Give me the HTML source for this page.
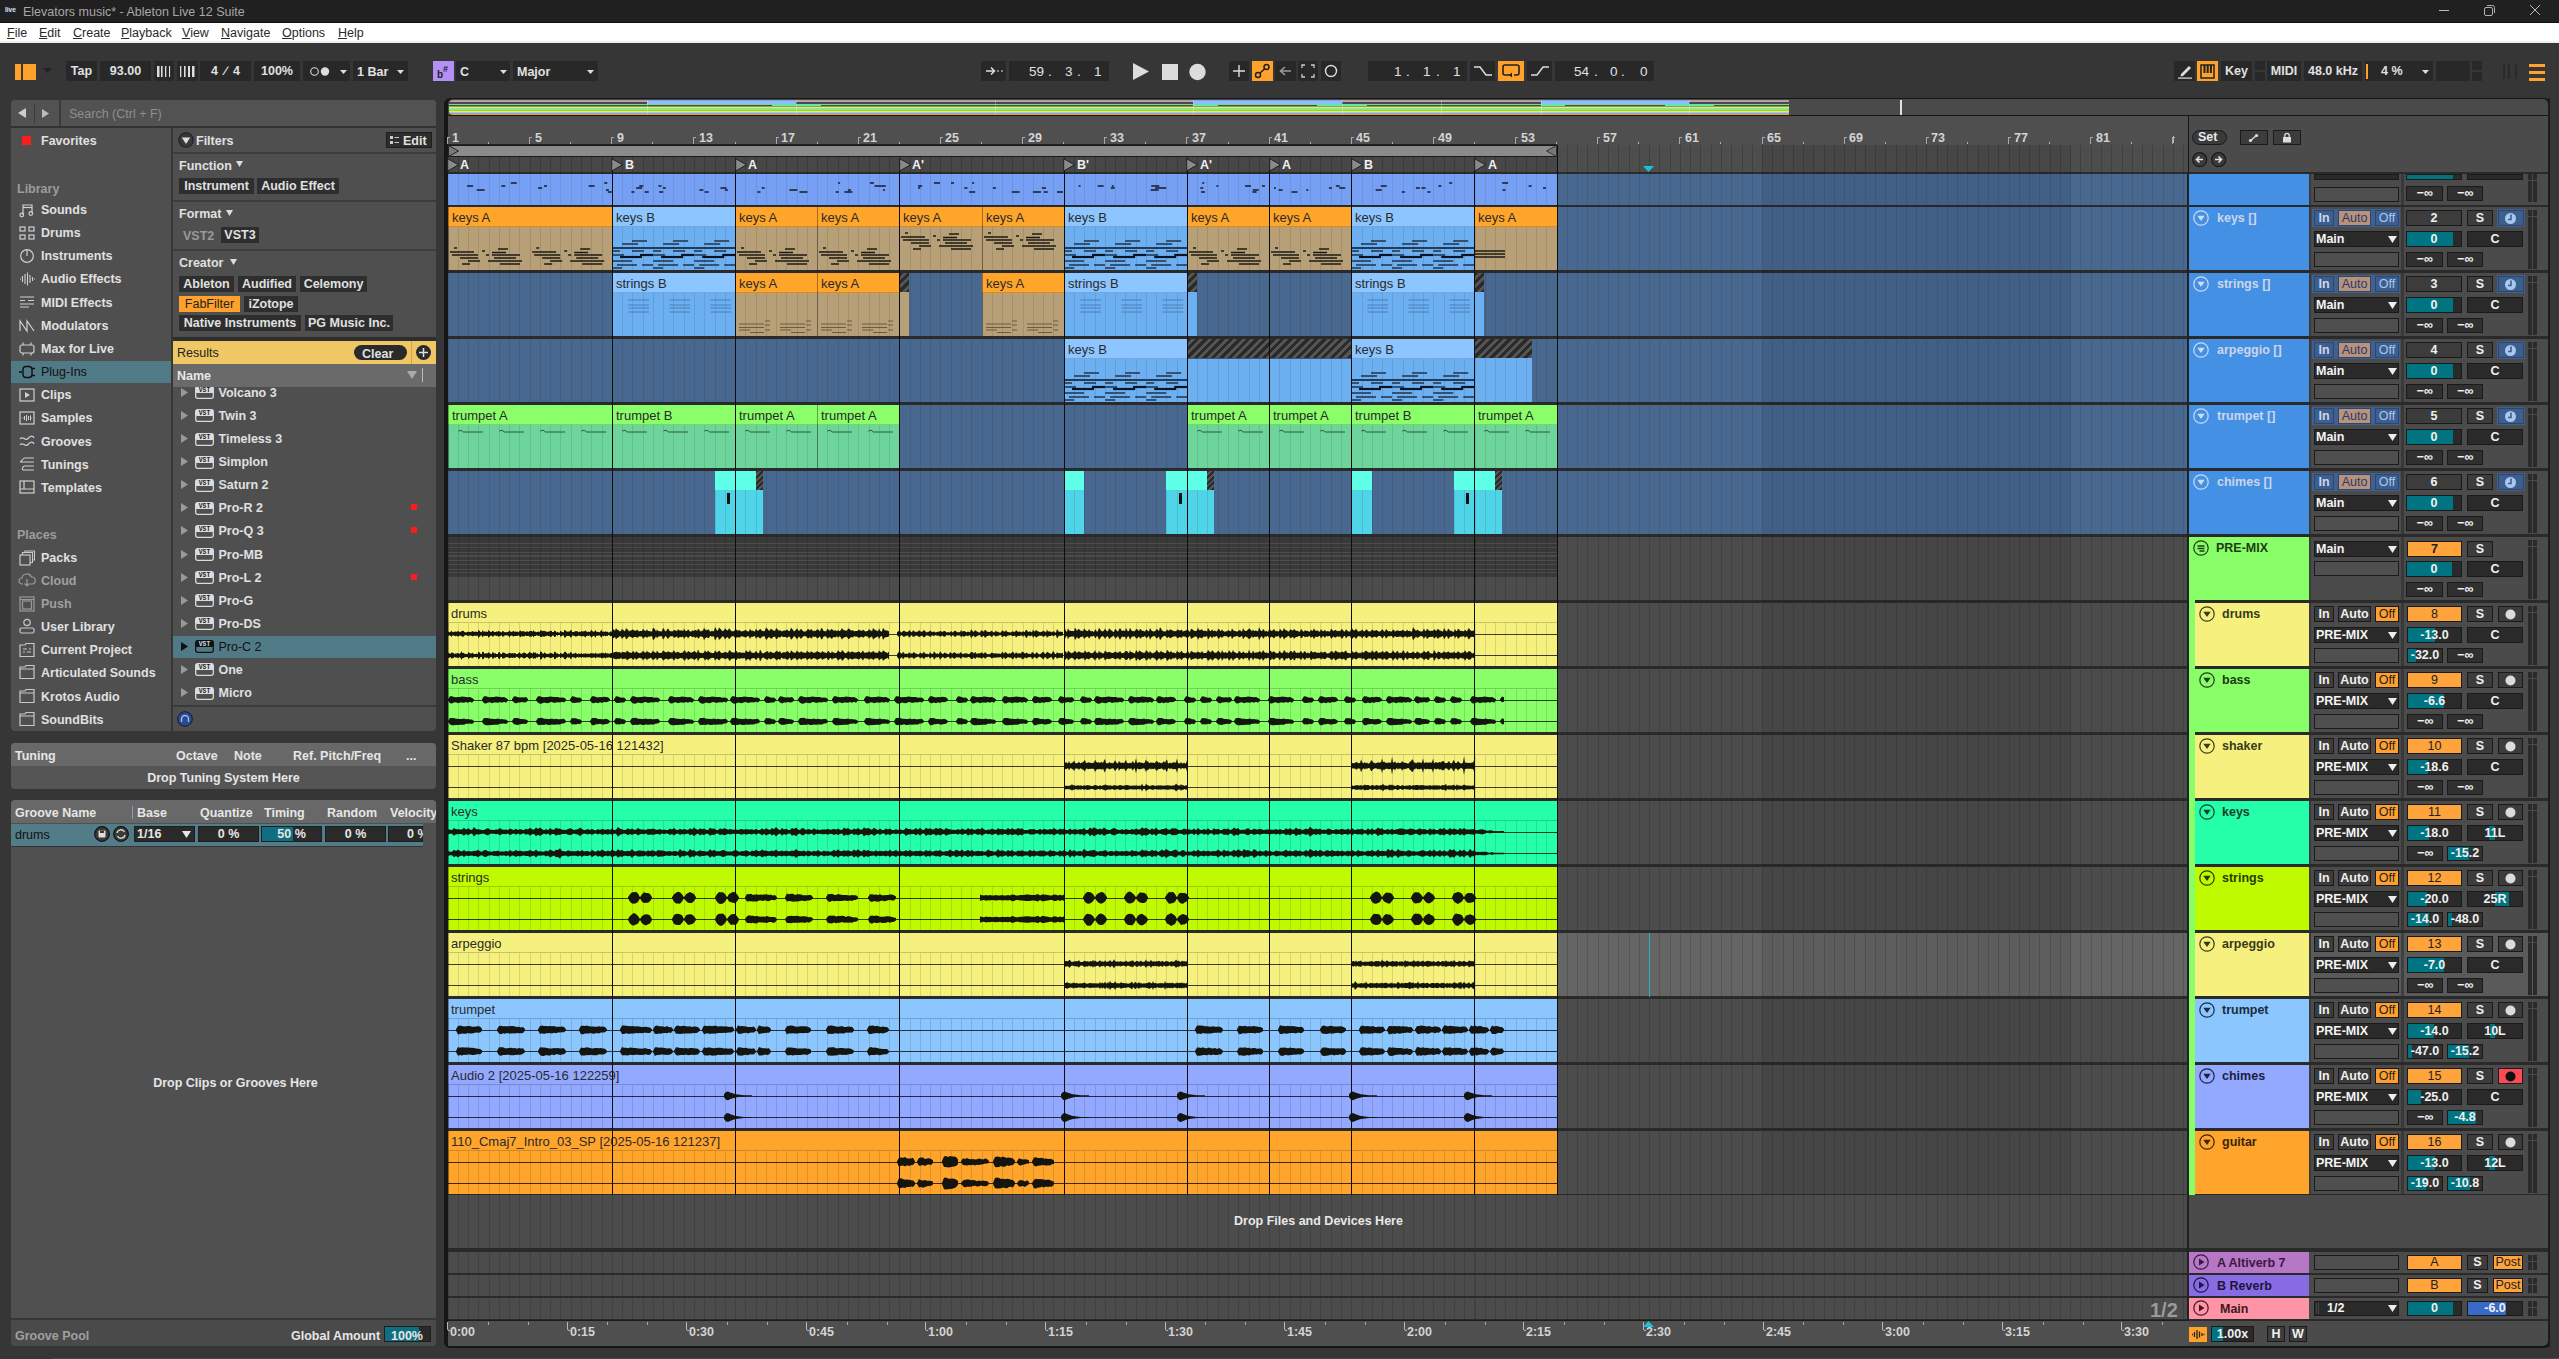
<!DOCTYPE html><html><head><meta charset="utf-8"><style>
html,body{margin:0;padding:0;}
body{width:2559px;height:1359px;overflow:hidden;background:#363636;position:relative;font-family:"Liberation Sans",sans-serif;}
body div, body svg{position:absolute;}
.t{white-space:nowrap;line-height:1.2;}
.c{white-space:nowrap;text-align:center;overflow:hidden;}
svg{overflow:visible}
</style></head><body>
<div style="left:0px;top:0px;width:2559px;height:22px;background:#202020"></div>
<div style="left:0px;top:22px;width:2559px;height:1px;background:#111"></div>
<div style="left:4px;top:5px;width:12px;height:11px;background:#1c2230;border-radius:1px"></div>
<div class="t" style="left:5px;top:6px;font-size:6.5px;color:#e8e8e8;font-weight:bold;">live</div>
<div class="t" style="left:23px;top:5px;font-size:12.5px;color:#a8a8a8;font-weight:normal;">Elevators music* - Ableton Live 12 Suite</div>
<div style="left:2439px;top:10px;width:10px;height:1px;background:#bbb"></div>
<svg style="left:2483px;top:4px" width="13" height="13"><rect x="1.5" y="3.5" width="8" height="8" rx="1.5" fill="none" stroke="#b0b0b0" stroke-width="1"/><path d="M4 1.5 H9.5 a2 2 0 0 1 2 2 V9" fill="none" stroke="#b0b0b0" stroke-width="1"/></svg>
<svg style="left:2529px;top:4px" width="12" height="12"><path d="M1 1 L11 11 M11 1 L1 11" stroke="#bbb" stroke-width="1"/></svg>
<div style="left:0px;top:23px;width:2559px;height:18px;background:#ffffff"></div>
<div style="left:0px;top:41px;width:2559px;height:2px;background:#f0f0f0"></div>
<div class="t" style="left:7px;top:26px;font-size:12.5px;color:#2a2a2a"><u>F</u>ile</div>
<div class="t" style="left:39px;top:26px;font-size:12.5px;color:#2a2a2a"><u>E</u>dit</div>
<div class="t" style="left:73px;top:26px;font-size:12.5px;color:#2a2a2a"><u>C</u>reate</div>
<div class="t" style="left:121px;top:26px;font-size:12.5px;color:#2a2a2a"><u>P</u>layback</div>
<div class="t" style="left:182px;top:26px;font-size:12.5px;color:#2a2a2a"><u>V</u>iew</div>
<div class="t" style="left:221px;top:26px;font-size:12.5px;color:#2a2a2a"><u>N</u>avigate</div>
<div class="t" style="left:282px;top:26px;font-size:12.5px;color:#2a2a2a"><u>O</u>ptions</div>
<div class="t" style="left:338px;top:26px;font-size:12.5px;color:#2a2a2a"><u>H</u>elp</div>
<div style="left:15px;top:64px;width:6px;height:16px;background:#ffa12b"></div>
<div style="left:23px;top:64px;width:13px;height:16px;background:#ffa12b"></div>
<svg style="left:43px;top:68px" width="9" height="6"><path d="M0 0 L9 0 L4.5 5z" fill="#222"/></svg>
<div class="c" style="left:66px;top:61px;width:31px;height:20px;line-height:20px;font-size:12.5px;color:#e0e0e0;font-weight:bold;background:#282828;">Tap</div>
<div class="c" style="left:100px;top:61px;width:51px;height:20px;line-height:20px;font-size:12.5px;color:#e0e0e0;font-weight:bold;background:#282828;">93.00</div>
<div style="left:154px;top:61px;width:20px;height:20px;background:#282828;"></div>
<div style="left:177px;top:61px;width:21px;height:20px;background:#282828;"></div>
<svg style="left:157px;top:65px" width="16" height="13"><rect x="0" y="1" width="2.5" height="11" fill="#ddd"/><rect x="4" y="1" width="1.6" height="11" fill="#ddd"/><rect x="8" y="1" width="1.3" height="11" fill="#ddd"/><rect x="12" y="1" width="1.1" height="11" fill="#ddd"/></svg>
<svg style="left:180px;top:65px" width="16" height="13"><rect x="0" y="1" width="1.3" height="11" fill="#ddd"/><rect x="4" y="1" width="1.6" height="11" fill="#ddd"/><rect x="8" y="1" width="2" height="11" fill="#ddd"/><rect x="12" y="1" width="2.5" height="11" fill="#ddd"/></svg>
<div class="c" style="left:200px;top:61px;width:51px;height:20px;line-height:20px;font-size:12.5px;color:#e0e0e0;font-weight:bold;background:#282828;word-spacing:3px">4 &#x2215; 4</div>
<div class="c" style="left:254px;top:61px;width:46px;height:20px;line-height:20px;font-size:12.5px;color:#e0e0e0;font-weight:bold;background:#282828;">100%</div>
<div style="left:303px;top:61px;width:47px;height:20px;background:#282828;"></div>
<svg style="left:310px;top:66px" width="22" height="11"><circle cx="4.5" cy="5.5" r="3.8" fill="none" stroke="#ddd" stroke-width="1.1"/><circle cx="15" cy="5.5" r="4.2" fill="#ddd"/></svg>
<svg style="left:340px;top:70px" width="7" height="4"><path d="M0 0 L7 0 L3.5 4z" fill="#ddd"/></svg>
<div style="left:353px;top:61px;width:55px;height:20px;background:#282828;"></div>
<div class="t" style="left:357px;top:65px;font-size:12.5px;color:#e0e0e0;font-weight:bold;">1 Bar</div>
<svg style="left:397px;top:70px" width="7" height="4"><path d="M0 0 L7 0 L3.5 4z" fill="#ddd"/></svg>
<div style="left:433px;top:61px;width:21px;height:20px;background:#b48ff5"></div>
<div class="t" style="left:437px;top:69px;font-size:10px;color:#222;font-weight:bold;">b</div>
<div class="t" style="left:443px;top:64px;font-size:9px;color:#222;font-weight:bold;">#</div>
<div style="left:456px;top:61px;width:54px;height:20px;background:#282828;"></div>
<div class="t" style="left:460px;top:65px;font-size:12.5px;color:#e0e0e0;font-weight:bold;">C</div>
<svg style="left:500px;top:70px" width="7" height="4"><path d="M0 0 L7 0 L3.5 4z" fill="#ddd"/></svg>
<div style="left:513px;top:61px;width:85px;height:20px;background:#282828;"></div>
<div class="t" style="left:517px;top:65px;font-size:12.5px;color:#e0e0e0;font-weight:bold;">Major</div>
<svg style="left:587px;top:70px" width="7" height="4"><path d="M0 0 L7 0 L3.5 4z" fill="#ddd"/></svg>
<div style="left:981px;top:61px;width:25px;height:20px;background:#282828;"></div>
<svg style="left:985px;top:65px" width="20" height="12"><path d="M1 6 H9 M6 2.5 L9.5 6 L6 9.5" stroke="#ddd" stroke-width="1.5" fill="none"/><path d="M12 6 H14 M16 6 H18" stroke="#ddd" stroke-width="1.2"/></svg>
<div style="left:1009px;top:61px;width:100px;height:20px;background:#282828;"></div>
<div class="t" style="left:1029px;top:64px;font-size:13.5px;color:#e0e0e0;font-weight:normal;">59</div>
<div class="t" style="left:1048px;top:64px;font-size:13.5px;color:#e0e0e0;font-weight:normal;">.</div>
<div class="t" style="left:1065px;top:64px;font-size:13.5px;color:#e0e0e0;font-weight:normal;">3</div>
<div class="t" style="left:1077px;top:64px;font-size:13.5px;color:#e0e0e0;font-weight:normal;">.</div>
<div class="t" style="left:1094px;top:64px;font-size:13.5px;color:#e0e0e0;font-weight:normal;">1</div>
<svg style="left:1133px;top:63px" width="17" height="18"><path d="M0 0 L16 8.5 L0 17z" fill="#dcdcdc"/></svg>
<div style="left:1162px;top:64px;width:16px;height:16px;background:#dcdcdc"></div>
<svg style="left:1189px;top:63px" width="18" height="18"><circle cx="8.5" cy="9" r="8.2" fill="#dcdcdc"/></svg>
<div style="left:1229px;top:61px;width:20px;height:20px;background:#282828;"></div>
<svg style="left:1232px;top:64px" width="14" height="14"><path d="M7 1 V13 M1 7 H13" stroke="#ddd" stroke-width="1.4"/></svg>
<div style="left:1252px;top:61px;width:21px;height:20px;background:#ffa12b"></div>
<svg style="left:1254px;top:63px" width="17" height="16"><circle cx="4" cy="12" r="2.5" fill="none" stroke="#222" stroke-width="1.5"/><circle cx="12.5" cy="4" r="2.5" fill="none" stroke="#222" stroke-width="1.5"/><path d="M6 10 L10.5 6" stroke="#222" stroke-width="1.5"/></svg>
<div style="left:1275px;top:61px;width:21px;height:20px;background:#282828;"></div>
<svg style="left:1278px;top:65px" width="14" height="12"><path d="M13 6 H3 M7 2 L2.5 6 L7 10" stroke="#999" stroke-width="1.6" fill="none"/></svg>
<div style="left:1298px;top:61px;width:20px;height:20px;background:#282828;"></div>
<svg style="left:1301px;top:64px" width="14" height="14"><path d="M1 4 V1 H4 M10 1 H13 V4 M13 10 V13 H10 M4 13 H1 V10" stroke="#ccc" stroke-width="1.3" fill="none"/></svg>
<div style="left:1321px;top:61px;width:20px;height:20px;background:#282828;"></div>
<svg style="left:1324px;top:64px" width="14" height="14"><circle cx="7" cy="7" r="5.5" fill="none" stroke="#ddd" stroke-width="1.4"/></svg>
<div style="left:1368px;top:61px;width:99px;height:20px;background:#282828;"></div>
<div class="t" style="left:1394px;top:64px;font-size:13.5px;color:#e0e0e0;font-weight:normal;">1</div>
<div class="t" style="left:1406px;top:64px;font-size:13.5px;color:#e0e0e0;font-weight:normal;">.</div>
<div class="t" style="left:1423px;top:64px;font-size:13.5px;color:#e0e0e0;font-weight:normal;">1</div>
<div class="t" style="left:1436px;top:64px;font-size:13.5px;color:#e0e0e0;font-weight:normal;">.</div>
<div class="t" style="left:1453px;top:64px;font-size:13.5px;color:#e0e0e0;font-weight:normal;">1</div>
<div style="left:1470px;top:61px;width:25px;height:20px;background:#282828;"></div>
<svg style="left:1473px;top:65px" width="20" height="12"><path d="M1 2 H7 L13 10 H19" stroke="#ddd" stroke-width="1.5" fill="none"/></svg>
<div style="left:1498px;top:61px;width:26px;height:20px;background:#ffa12b"></div>
<svg style="left:1502px;top:64px" width="19" height="15"><path d="M8 11 H3 a2 2 0 0 1 -2 -2 V3 a2 2 0 0 1 2 -2 H15 a2 2 0 0 1 2 2 V9 a2 2 0 0 1 -2 2 H12" stroke="#222" stroke-width="1.6" fill="none"/><path d="M10 8.5 L7 11 L10 13.5z" fill="#222"/></svg>
<div style="left:1527px;top:61px;width:25px;height:20px;background:#282828;"></div>
<svg style="left:1530px;top:65px" width="20" height="12"><path d="M1 10 H7 L13 2 H19" stroke="#ddd" stroke-width="1.5" fill="none"/></svg>
<div style="left:1555px;top:61px;width:99px;height:20px;background:#282828;"></div>
<div class="t" style="left:1574px;top:64px;font-size:13.5px;color:#e0e0e0;font-weight:normal;">54</div>
<div class="t" style="left:1594px;top:64px;font-size:13.5px;color:#e0e0e0;font-weight:normal;">.</div>
<div class="t" style="left:1610px;top:64px;font-size:13.5px;color:#e0e0e0;font-weight:normal;">0</div>
<div class="t" style="left:1621px;top:64px;font-size:13.5px;color:#e0e0e0;font-weight:normal;">.</div>
<div class="t" style="left:1640px;top:64px;font-size:13.5px;color:#e0e0e0;font-weight:normal;">0</div>
<div style="left:2174px;top:61px;width:21px;height:20px;background:#282828;"></div>
<svg style="left:2177px;top:63px" width="16" height="16"><path d="M4 11 L12 3 L14 5 L6 13 L3.5 13.5z" fill="#ddd"/><rect x="1" y="14.5" width="14" height="1.2" fill="#ddd"/></svg>
<div style="left:2197px;top:61px;width:21px;height:20px;background:#ffa12b"></div>
<svg style="left:2200px;top:64px" width="15" height="15"><rect x="1" y="1" width="13" height="13" fill="none" stroke="#222" stroke-width="1.5"/><rect x="3.5" y="1" width="2" height="8" fill="#222"/><rect x="6.7" y="1" width="2" height="8" fill="#222"/><rect x="9.9" y="1" width="2" height="8" fill="#222"/></svg>
<div class="c" style="left:2221px;top:61px;width:31px;height:20px;line-height:20px;font-size:12.5px;color:#e0e0e0;font-weight:bold;background:#282828;">Key</div>
<div style="left:2255px;top:61px;width:10px;height:9px;background:#282828;"></div>
<div style="left:2255px;top:72px;width:10px;height:9px;background:#282828;"></div>
<div class="c" style="left:2267px;top:61px;width:34px;height:20px;line-height:20px;font-size:12.5px;color:#e0e0e0;font-weight:bold;background:#282828;">MIDI</div>
<div class="c" style="left:2304px;top:61px;width:58px;height:20px;line-height:20px;font-size:12.5px;color:#e0e0e0;font-weight:bold;background:#282828;">48.0 kHz</div>
<div style="left:2365px;top:61px;width:68px;height:20px;background:#282828;"></div>
<div style="left:2366px;top:64px;width:2px;height:15px;background:#ffa12b"></div>
<div class="t" style="left:2381px;top:64px;font-size:12.5px;color:#e0e0e0;font-weight:bold;">4 %</div>
<svg style="left:2422px;top:70px" width="7" height="4"><path d="M0 0 L7 0 L3.5 4z" fill="#ddd"/></svg>
<div style="left:2436px;top:61px;width:34px;height:20px;background:#282828;"></div>
<div style="left:2472px;top:61px;width:10px;height:9px;background:#282828;"></div>
<div style="left:2472px;top:72px;width:10px;height:9px;background:#282828;"></div>
<div style="left:2503px;top:64px;width:2px;height:15px;background:#2a2a2a"></div>
<div style="left:2508px;top:64px;width:2px;height:15px;background:#2a2a2a"></div>
<div style="left:2515px;top:64px;width:2px;height:15px;background:#2a2a2a"></div>
<div style="left:2529px;top:64px;width:16px;height:2.5px;background:#ffa12b"></div>
<div style="left:2529px;top:71px;width:16px;height:2.5px;background:#ffa12b"></div>
<div style="left:2529px;top:78px;width:16px;height:2.5px;background:#ffa12b"></div>
<div style="left:11px;top:100px;width:425px;height:631px;background:#4f4f4f;border-radius:4px"></div>
<div style="left:11px;top:100px;width:425px;height:26px;background:#525252;border-radius:4px 4px 0 0"></div>
<div style="left:11px;top:126px;width:425px;height:2px;background:#333"></div>
<div style="left:59px;top:100px;width:2px;height:26px;background:#3a3a3a"></div>
<svg style="left:18px;top:108px" width="9" height="10"><path d="M8 0 L0 5 L8 10z" fill="#ccc"/></svg>
<div style="left:34px;top:104px;width:1px;height:19px;background:#3a3a3a"></div>
<svg style="left:42px;top:109px" width="8" height="9"><path d="M0 0 L7 4.5 L0 9z" fill="#bbb"/></svg>
<div class="t" style="left:69px;top:107px;font-size:12.5px;color:#8e8e8e;font-weight:normal;">Search (Ctrl + F)</div>
<div style="left:171px;top:128px;width:2px;height:603px;background:#363636"></div>
<div style="left:22px;top:136px;width:9px;height:9px;background:#ff1c1c"></div>
<div class="t" style="left:41px;top:134px;font-size:12.5px;color:#e0e0e0;font-weight:bold;">Favorites</div>
<div class="t" style="left:17px;top:182px;font-size:12.5px;color:#9c9c9c;font-weight:bold;">Library</div>
<div class="t" style="left:41px;top:203.2px;font-size:12.5px;color:#e0e0e0;font-weight:bold;">Sounds</div>
<svg style="left:19px;top:202px" width="17" height="16"><path d="M4 13 V3 H13 V11" stroke="#d0d0d0" stroke-width="1.2" fill="none"/><circle cx="2.8" cy="13" r="1.8" fill="none" stroke="#d0d0d0" stroke-width="1.2"/><circle cx="11.8" cy="11.5" r="1.8" fill="none" stroke="#d0d0d0" stroke-width="1.2"/><path d="M4 5.5 H13" stroke="#d0d0d0" stroke-width="1.2"/></svg>
<div class="t" style="left:41px;top:226.1px;font-size:12.5px;color:#e0e0e0;font-weight:bold;">Drums</div>
<svg style="left:19px;top:225px" width="17" height="16"><rect x="1" y="2" width="5" height="4" fill="none" stroke="#d0d0d0" stroke-width="1.2"/><rect x="10" y="2" width="5" height="4" fill="none" stroke="#d0d0d0" stroke-width="1.2"/><rect x="1" y="10" width="5" height="4" fill="none" stroke="#d0d0d0" stroke-width="1.2"/><rect x="10" y="10" width="5" height="4" fill="none" stroke="#d0d0d0" stroke-width="1.2"/></svg>
<div class="t" style="left:41px;top:249.2px;font-size:12.5px;color:#e0e0e0;font-weight:bold;">Instruments</div>
<svg style="left:19px;top:248px" width="17" height="16"><circle cx="8" cy="8" r="6.3" fill="none" stroke="#d0d0d0" stroke-width="1.2"/><path d="M8 1.5 V8" stroke="#d0d0d0" stroke-width="1.2"/></svg>
<div class="t" style="left:41px;top:272.1px;font-size:12.5px;color:#e0e0e0;font-weight:bold;">Audio Effects</div>
<svg style="left:19px;top:271px" width="17" height="16"><path d="M1 8 H2 M3.5 5 V11 M6 3 V13 M8.5 1.5 V14.5 M11 4 V12 M13.5 6 V10 M15 8 H16" stroke="#d0d0d0" stroke-width="1.1"/></svg>
<div class="t" style="left:41px;top:295.5px;font-size:12.5px;color:#e0e0e0;font-weight:bold;">MIDI Effects</div>
<svg style="left:19px;top:294px" width="17" height="16"><path d="M1 3 H15 M1 6.5 H6 M9 6.5 H15 M1 10 H15 M1 13 H10" stroke="#d0d0d0" stroke-width="1.2"/></svg>
<div class="t" style="left:41px;top:319.0px;font-size:12.5px;color:#e0e0e0;font-weight:bold;">Modulators</div>
<svg style="left:19px;top:318px" width="17" height="16"><path d="M1 13 V3 L8 13 V3 L15 13" stroke="#d0d0d0" stroke-width="1.2" fill="none"/></svg>
<div class="t" style="left:41px;top:342.1px;font-size:12.5px;color:#e0e0e0;font-weight:bold;">Max for Live</div>
<svg style="left:19px;top:341px" width="17" height="16"><rect x="1" y="4" width="14" height="8" rx="2" fill="none" stroke="#d0d0d0" stroke-width="1.2"/><path d="M4 1.5 V4 M12 1.5 V4 M4 12 V14.5 M12 12 V14.5" stroke="#d0d0d0" stroke-width="1.2"/></svg>
<div style="left:11px;top:361px;width:160px;height:22px;background:#517a87"></div>
<div class="t" style="left:41px;top:365.1px;font-size:12.5px;color:#111;font-weight:normal;">Plug-Ins</div>
<svg style="left:19px;top:364px" width="17" height="16"><path d="M0 8 H3 M13 4.5 H16 M13 11.5 H16" stroke="#111" stroke-width="1.3"/><rect x="4" y="2.5" width="9" height="11" rx="3" fill="none" stroke="#111" stroke-width="1.4"/></svg>
<div class="t" style="left:41px;top:388.1px;font-size:12.5px;color:#e0e0e0;font-weight:bold;">Clips</div>
<svg style="left:19px;top:387px" width="17" height="16"><rect x="1" y="2" width="14" height="12" fill="none" stroke="#d0d0d0" stroke-width="1.2"/><path d="M6 5 L11 8 L6 11z" fill="#d0d0d0"/></svg>
<div class="t" style="left:41px;top:411.0px;font-size:12.5px;color:#e0e0e0;font-weight:bold;">Samples</div>
<svg style="left:19px;top:410px" width="17" height="16"><rect x="1" y="2" width="14" height="12" fill="none" stroke="#d0d0d0" stroke-width="1.2"/><path d="M3.5 8 H4.5 M5.5 6 V10 M7.5 5 V11 M9.5 6 V10 M11.5 5.5 V10.5 M13 8 H12.5" stroke="#d0d0d0" stroke-width="1"/></svg>
<div class="t" style="left:41px;top:434.5px;font-size:12.5px;color:#e0e0e0;font-weight:bold;">Grooves</div>
<svg style="left:19px;top:433px" width="17" height="16"><path d="M1 6 C4 2 6 9 9 5.5 S14 3 15 5 M1 12 C4 8 6 15 9 11.5 S14 9 15 11" stroke="#d0d0d0" stroke-width="1.2" fill="none"/></svg>
<div class="t" style="left:41px;top:457.5px;font-size:12.5px;color:#e0e0e0;font-weight:bold;">Tunings</div>
<svg style="left:19px;top:456px" width="17" height="16"><path d="M6 2 H15 M1 6 H15 M6 10 H15 M4 14 H15 M6 2 C3 2 3 6 1 6 M6 10 C3 10 3 14 4 14" stroke="#d0d0d0" stroke-width="1.1" fill="none"/></svg>
<div class="t" style="left:41px;top:480.7px;font-size:12.5px;color:#e0e0e0;font-weight:bold;">Templates</div>
<svg style="left:19px;top:479px" width="17" height="16"><rect x="1" y="2" width="14" height="12" fill="none" stroke="#d0d0d0" stroke-width="1.2"/><path d="M1 10 H15 M5 2 V10" stroke="#d0d0d0" stroke-width="1.2"/></svg>
<div class="t" style="left:17px;top:528px;font-size:12.5px;color:#9c9c9c;font-weight:bold;">Places</div>
<div class="t" style="left:41px;top:551.0px;font-size:12.5px;color:#e0e0e0;font-weight:bold;">Packs</div>
<svg style="left:19px;top:550px" width="17" height="16"><rect x="1" y="5" width="10" height="10" fill="none" stroke="#c8c8c8" stroke-width="1.2"/><path d="M3.5 5 V2.5 H13.5 V12.5 H11 M6 2.5 V1 H15.5 V10 H13.5" stroke="#c8c8c8" stroke-width="1.1" fill="none"/></svg>
<div class="t" style="left:41px;top:574.0px;font-size:12.5px;color:#a0a0a0;font-weight:bold;">Cloud</div>
<svg style="left:19px;top:572px" width="17" height="16"><path d="M4 12 H3 a3 3 0 0 1 0 -6 a5 5 0 0 1 9.5 -1 a3.5 3.5 0 0 1 0.5 7 H11" stroke="#9a9a9a" stroke-width="1.2" fill="none"/><path d="M8 7 V14 M5.5 11.5 L8 14 L10.5 11.5" stroke="#9a9a9a" stroke-width="1.2" fill="none"/></svg>
<div class="t" style="left:41px;top:597.0px;font-size:12.5px;color:#a0a0a0;font-weight:bold;">Push</div>
<svg style="left:19px;top:596px" width="17" height="16"><rect x="1" y="1" width="14" height="14" fill="none" stroke="#9a9a9a" stroke-width="1.2"/><rect x="3.5" y="5" width="9" height="8" fill="none" stroke="#9a9a9a" stroke-width="1.2"/><path d="M1 3.5 H15" stroke="#9a9a9a" stroke-width="1"/></svg>
<div class="t" style="left:41px;top:620.0px;font-size:12.5px;color:#e0e0e0;font-weight:bold;">User Library</div>
<svg style="left:19px;top:618px" width="17" height="16"><circle cx="8" cy="4.5" r="3.2" fill="none" stroke="#c8c8c8" stroke-width="1.2"/><rect x="1" y="10" width="14" height="5" rx="1.5" fill="none" stroke="#c8c8c8" stroke-width="1.2"/></svg>
<div class="t" style="left:41px;top:643.0px;font-size:12.5px;color:#e0e0e0;font-weight:bold;">Current Project</div>
<svg style="left:19px;top:642px" width="17" height="16"><path d="M1 3 H6 L7 1.5 H15 V14.5 H1z" fill="none" stroke="#c8c8c8" stroke-width="1.2"/><path d="M4 7 H8 M10 7 H12 M4 10 H6 M8 10 H12" stroke="#c8c8c8" stroke-width="1.1"/></svg>
<div class="t" style="left:41px;top:666.0px;font-size:12.5px;color:#e0e0e0;font-weight:bold;">Articulated Sounds</div>
<svg style="left:19px;top:664px" width="17" height="16"><path d="M1 3 H6 L7 1.5 H15 V14.5 H1z M1 5 H15" fill="none" stroke="#c8c8c8" stroke-width="1.2"/></svg>
<div class="t" style="left:41px;top:689.5px;font-size:12.5px;color:#e0e0e0;font-weight:bold;">Krotos Audio</div>
<svg style="left:19px;top:688px" width="17" height="16"><path d="M1 3 H6 L7 1.5 H15 V14.5 H1z M1 5 H15" fill="none" stroke="#c8c8c8" stroke-width="1.2"/></svg>
<div class="t" style="left:41px;top:712.5px;font-size:12.5px;color:#e0e0e0;font-weight:bold;">SoundBits</div>
<svg style="left:19px;top:711px" width="17" height="16"><path d="M1 3 H6 L7 1.5 H15 V14.5 H1z M1 5 H15" fill="none" stroke="#c8c8c8" stroke-width="1.2"/></svg>
<svg style="left:178px;top:132px" width="16" height="16"><circle cx="8" cy="8" r="7.2" fill="#3a3a3a" stroke="#222" stroke-width="1.2"/><path d="M3.8 5.5 H12.2 L8 12z" fill="#e0e0e0"/></svg>
<div class="t" style="left:196px;top:134px;font-size:12.5px;color:#e0e0e0;font-weight:bold;">Filters</div>
<div style="left:386px;top:132px;width:46px;height:16px;background:#2d2d2d;border:1px solid #1e1e1e;box-sizing:border-box"></div>
<svg style="left:390px;top:136px" width="10" height="9"><rect x="0" y="0" width="3" height="3" fill="#ccc"/><rect x="0" y="5" width="3" height="3" fill="#ccc"/><path d="M4.5 1.5 H9 M4.5 6.5 H9" stroke="#ccc" stroke-width="1.2"/></svg>
<div class="t" style="left:403px;top:134px;font-size:12.5px;color:#e0e0e0;font-weight:bold;">Edit</div>
<div style="left:173px;top:152px;width:263px;height:2px;background:#3d3d3d"></div>
<div class="t" style="left:179px;top:159px;font-size:12.5px;color:#e0e0e0;font-weight:bold;">Function</div>
<svg style="left:236px;top:161px" width="7" height="6"><path d="M0 0 L7 0 L3.5 6z" fill="#ddd"/></svg>
<div class="c" style="left:179px;top:178px;width:75px;height:16px;line-height:16px;font-size:12.5px;color:#e0e0e0;font-weight:bold;background:#2e2e2e;">Instrument</div>
<div class="c" style="left:257px;top:178px;width:82px;height:16px;line-height:16px;font-size:12.5px;color:#e0e0e0;font-weight:bold;background:#2e2e2e;">Audio Effect</div>
<div style="left:173px;top:200px;width:263px;height:2px;background:#3d3d3d"></div>
<div class="t" style="left:179px;top:207px;font-size:12.5px;color:#e0e0e0;font-weight:bold;">Format</div>
<svg style="left:226px;top:210px" width="7" height="6"><path d="M0 0 L7 0 L3.5 6z" fill="#ddd"/></svg>
<div class="t" style="left:183px;top:229px;font-size:12.5px;color:#9a9a9a;font-weight:bold;">VST2</div>
<div class="c" style="left:221px;top:227px;width:38px;height:16px;line-height:16px;font-size:12.5px;color:#e0e0e0;font-weight:bold;background:#2e2e2e;">VST3</div>
<div style="left:173px;top:249px;width:263px;height:2px;background:#3d3d3d"></div>
<div class="t" style="left:179px;top:256px;font-size:12.5px;color:#e0e0e0;font-weight:bold;">Creator</div>
<svg style="left:230px;top:259px" width="7" height="6"><path d="M0 0 L7 0 L3.5 6z" fill="#ddd"/></svg>
<div class="c" style="left:179px;top:276px;width:55px;height:16px;line-height:16px;font-size:12.5px;color:#e0e0e0;font-weight:bold;background:#2e2e2e;">Ableton</div>
<div class="c" style="left:238px;top:276px;width:58px;height:16px;line-height:16px;font-size:12.5px;color:#e0e0e0;font-weight:bold;background:#2e2e2e;">Audified</div>
<div class="c" style="left:300px;top:276px;width:67px;height:16px;line-height:16px;font-size:12.5px;color:#e0e0e0;font-weight:bold;background:#2e2e2e;">Celemony</div>
<div class="c" style="left:179px;top:296px;width:61px;height:16px;line-height:16px;font-size:12.5px;color:#222;font-weight:normal;background:#ffa12b;">FabFilter</div>
<div class="c" style="left:244px;top:296px;width:54px;height:16px;line-height:16px;font-size:12.5px;color:#e0e0e0;font-weight:bold;background:#2e2e2e;">iZotope</div>
<div class="c" style="left:179px;top:315px;width:122px;height:16px;line-height:16px;font-size:12.5px;color:#e0e0e0;font-weight:bold;background:#2e2e2e;">Native Instruments</div>
<div class="c" style="left:305px;top:315px;width:88px;height:16px;line-height:16px;font-size:12.5px;color:#e0e0e0;font-weight:bold;background:#2e2e2e;">PG Music Inc.</div>
<div style="left:173px;top:337px;width:263px;height:4px;background:#2e2e2e"></div>
<div style="left:173px;top:341px;width:263px;height:23px;background:#efc865"></div>
<div class="t" style="left:177px;top:346px;font-size:12.5px;color:#222;font-weight:normal;">Results</div>
<div style="left:354px;top:345px;width:53px;height:15px;background:#2a2a2a;border-radius:8px"></div>
<div class="t" style="left:362px;top:347px;font-size:12.5px;color:#e0e0e0;font-weight:bold;">Clear</div>
<div style="left:411px;top:341px;width:1px;height:23px;background:#c9a850"></div>
<svg style="left:415px;top:344px" width="17" height="17"><circle cx="8.5" cy="8.5" r="7.5" fill="#2a2a2a"/><path d="M8.5 4 V13 M4 8.5 H13" stroke="#e0e0e0" stroke-width="1.5"/></svg>
<div style="left:173px;top:364px;width:263px;height:23px;background:#6a6a6a"></div>
<div class="t" style="left:177px;top:369px;font-size:12.5px;color:#e8e8e8;font-weight:bold;">Name</div>
<svg style="left:407px;top:371px" width="10" height="8"><path d="M0 0 L10 0 L5 8z" fill="#aaa"/></svg>
<div style="left:422px;top:368px;width:1px;height:14px;background:#bbb"></div>
<div style="left:173px;top:387px;width:263px;height:318px;overflow:hidden">
<svg style="left:8px;top:0.8px" width="8" height="10"><path d="M0 0 L7 4.5 L0 9z" fill="#9a9a9a"/></svg>
<svg style="left:22px;top:-1px" width="19" height="13"><rect x="0.7" y="0.7" width="17.6" height="11.6" rx="1.8" fill="none" stroke="#dcdcdc" stroke-width="1.3"/><rect x="0.7" y="0.7" width="17.6" height="6.3" rx="1.5" fill="#dcdcdc"/><text x="9.5" y="6.2" font-size="6.3" text-anchor="middle" fill="#222" font-family="Liberation Mono" font-weight="bold">VST</text></svg>
<div class="t" style="left:45.5px;top:-1.1999999999999886px;font-size:12.5px;color:#e0e0e0;font-weight:bold;">Volcano 3</div>
<svg style="left:8px;top:23.9px" width="8" height="10"><path d="M0 0 L7 4.5 L0 9z" fill="#9a9a9a"/></svg>
<svg style="left:22px;top:22px" width="19" height="13"><rect x="0.7" y="0.7" width="17.6" height="11.6" rx="1.8" fill="none" stroke="#dcdcdc" stroke-width="1.3"/><rect x="0.7" y="0.7" width="17.6" height="6.3" rx="1.5" fill="#dcdcdc"/><text x="9.5" y="6.2" font-size="6.3" text-anchor="middle" fill="#222" font-family="Liberation Mono" font-weight="bold">VST</text></svg>
<div class="t" style="left:45.5px;top:21.900000000000034px;font-size:12.5px;color:#e0e0e0;font-weight:bold;">Twin 3</div>
<svg style="left:8px;top:47.0px" width="8" height="10"><path d="M0 0 L7 4.5 L0 9z" fill="#9a9a9a"/></svg>
<svg style="left:22px;top:46px" width="19" height="13"><rect x="0.7" y="0.7" width="17.6" height="11.6" rx="1.8" fill="none" stroke="#dcdcdc" stroke-width="1.3"/><rect x="0.7" y="0.7" width="17.6" height="6.3" rx="1.5" fill="#dcdcdc"/><text x="9.5" y="6.2" font-size="6.3" text-anchor="middle" fill="#222" font-family="Liberation Mono" font-weight="bold">VST</text></svg>
<div class="t" style="left:45.5px;top:45.0px;font-size:12.5px;color:#e0e0e0;font-weight:bold;">Timeless 3</div>
<svg style="left:8px;top:70.1px" width="8" height="10"><path d="M0 0 L7 4.5 L0 9z" fill="#9a9a9a"/></svg>
<svg style="left:22px;top:69px" width="19" height="13"><rect x="0.7" y="0.7" width="17.6" height="11.6" rx="1.8" fill="none" stroke="#dcdcdc" stroke-width="1.3"/><rect x="0.7" y="0.7" width="17.6" height="6.3" rx="1.5" fill="#dcdcdc"/><text x="9.5" y="6.2" font-size="6.3" text-anchor="middle" fill="#222" font-family="Liberation Mono" font-weight="bold">VST</text></svg>
<div class="t" style="left:45.5px;top:68.10000000000002px;font-size:12.5px;color:#e0e0e0;font-weight:bold;">Simplon</div>
<svg style="left:8px;top:93.2px" width="8" height="10"><path d="M0 0 L7 4.5 L0 9z" fill="#9a9a9a"/></svg>
<svg style="left:22px;top:92px" width="19" height="13"><rect x="0.7" y="0.7" width="17.6" height="11.6" rx="1.8" fill="none" stroke="#dcdcdc" stroke-width="1.3"/><rect x="0.7" y="0.7" width="17.6" height="6.3" rx="1.5" fill="#dcdcdc"/><text x="9.5" y="6.2" font-size="6.3" text-anchor="middle" fill="#222" font-family="Liberation Mono" font-weight="bold">VST</text></svg>
<div class="t" style="left:45.5px;top:91.20000000000005px;font-size:12.5px;color:#e0e0e0;font-weight:bold;">Saturn 2</div>
<svg style="left:8px;top:116.3px" width="8" height="10"><path d="M0 0 L7 4.5 L0 9z" fill="#9a9a9a"/></svg>
<svg style="left:22px;top:115px" width="19" height="13"><rect x="0.7" y="0.7" width="17.6" height="11.6" rx="1.8" fill="none" stroke="#dcdcdc" stroke-width="1.3"/><rect x="0.7" y="0.7" width="17.6" height="6.3" rx="1.5" fill="#dcdcdc"/><text x="9.5" y="6.2" font-size="6.3" text-anchor="middle" fill="#222" font-family="Liberation Mono" font-weight="bold">VST</text></svg>
<div class="t" style="left:45.5px;top:114.30000000000001px;font-size:12.5px;color:#e0e0e0;font-weight:bold;">Pro-R 2</div>
<div style="left:237.5px;top:117px;width:6px;height:6px;background:#ff1c1c"></div>
<svg style="left:8px;top:139.4px" width="8" height="10"><path d="M0 0 L7 4.5 L0 9z" fill="#9a9a9a"/></svg>
<svg style="left:22px;top:138px" width="19" height="13"><rect x="0.7" y="0.7" width="17.6" height="11.6" rx="1.8" fill="none" stroke="#dcdcdc" stroke-width="1.3"/><rect x="0.7" y="0.7" width="17.6" height="6.3" rx="1.5" fill="#dcdcdc"/><text x="9.5" y="6.2" font-size="6.3" text-anchor="middle" fill="#222" font-family="Liberation Mono" font-weight="bold">VST</text></svg>
<div class="t" style="left:45.5px;top:137.4000000000001px;font-size:12.5px;color:#e0e0e0;font-weight:bold;">Pro-Q 3</div>
<div style="left:237.5px;top:140px;width:6px;height:6px;background:#ff1c1c"></div>
<svg style="left:8px;top:162.5px" width="8" height="10"><path d="M0 0 L7 4.5 L0 9z" fill="#9a9a9a"/></svg>
<svg style="left:22px;top:161px" width="19" height="13"><rect x="0.7" y="0.7" width="17.6" height="11.6" rx="1.8" fill="none" stroke="#dcdcdc" stroke-width="1.3"/><rect x="0.7" y="0.7" width="17.6" height="6.3" rx="1.5" fill="#dcdcdc"/><text x="9.5" y="6.2" font-size="6.3" text-anchor="middle" fill="#222" font-family="Liberation Mono" font-weight="bold">VST</text></svg>
<div class="t" style="left:45.5px;top:160.5px;font-size:12.5px;color:#e0e0e0;font-weight:bold;">Pro-MB</div>
<svg style="left:8px;top:185.6px" width="8" height="10"><path d="M0 0 L7 4.5 L0 9z" fill="#9a9a9a"/></svg>
<svg style="left:22px;top:184px" width="19" height="13"><rect x="0.7" y="0.7" width="17.6" height="11.6" rx="1.8" fill="none" stroke="#dcdcdc" stroke-width="1.3"/><rect x="0.7" y="0.7" width="17.6" height="6.3" rx="1.5" fill="#dcdcdc"/><text x="9.5" y="6.2" font-size="6.3" text-anchor="middle" fill="#222" font-family="Liberation Mono" font-weight="bold">VST</text></svg>
<div class="t" style="left:45.5px;top:183.60000000000002px;font-size:12.5px;color:#e0e0e0;font-weight:bold;">Pro-L 2</div>
<div style="left:237.5px;top:187px;width:6px;height:6px;background:#ff1c1c"></div>
<svg style="left:8px;top:208.7px" width="8" height="10"><path d="M0 0 L7 4.5 L0 9z" fill="#9a9a9a"/></svg>
<svg style="left:22px;top:207px" width="19" height="13"><rect x="0.7" y="0.7" width="17.6" height="11.6" rx="1.8" fill="none" stroke="#dcdcdc" stroke-width="1.3"/><rect x="0.7" y="0.7" width="17.6" height="6.3" rx="1.5" fill="#dcdcdc"/><text x="9.5" y="6.2" font-size="6.3" text-anchor="middle" fill="#222" font-family="Liberation Mono" font-weight="bold">VST</text></svg>
<div class="t" style="left:45.5px;top:206.70000000000005px;font-size:12.5px;color:#e0e0e0;font-weight:bold;">Pro-G</div>
<svg style="left:8px;top:231.8px" width="8" height="10"><path d="M0 0 L7 4.5 L0 9z" fill="#9a9a9a"/></svg>
<svg style="left:22px;top:230px" width="19" height="13"><rect x="0.7" y="0.7" width="17.6" height="11.6" rx="1.8" fill="none" stroke="#dcdcdc" stroke-width="1.3"/><rect x="0.7" y="0.7" width="17.6" height="6.3" rx="1.5" fill="#dcdcdc"/><text x="9.5" y="6.2" font-size="6.3" text-anchor="middle" fill="#222" font-family="Liberation Mono" font-weight="bold">VST</text></svg>
<div class="t" style="left:45.5px;top:229.79999999999995px;font-size:12.5px;color:#e0e0e0;font-weight:bold;">Pro-DS</div>
<div style="left:0px;top:249px;width:263px;height:22px;background:#517a87"></div>
<svg style="left:8px;top:254.9px" width="8" height="10"><path d="M0 0 L7 4.5 L0 9z" fill="#111"/></svg>
<svg style="left:22px;top:253px" width="19" height="13"><rect x="0.7" y="0.7" width="17.6" height="11.6" rx="1.8" fill="none" stroke="#111" stroke-width="1.3"/><rect x="0.7" y="0.7" width="17.6" height="6.3" rx="1.5" fill="#111"/><text x="9.5" y="6.2" font-size="6.3" text-anchor="middle" fill="#cfe0e8" font-family="Liberation Mono" font-weight="bold">VST</text></svg>
<div class="t" style="left:45.5px;top:252.9000000000001px;font-size:12.5px;color:#111;font-weight:normal;">Pro-C 2</div>
<svg style="left:8px;top:278.0px" width="8" height="10"><path d="M0 0 L7 4.5 L0 9z" fill="#9a9a9a"/></svg>
<svg style="left:22px;top:276px" width="19" height="13"><rect x="0.7" y="0.7" width="17.6" height="11.6" rx="1.8" fill="none" stroke="#dcdcdc" stroke-width="1.3"/><rect x="0.7" y="0.7" width="17.6" height="6.3" rx="1.5" fill="#dcdcdc"/><text x="9.5" y="6.2" font-size="6.3" text-anchor="middle" fill="#222" font-family="Liberation Mono" font-weight="bold">VST</text></svg>
<div class="t" style="left:45.5px;top:276.0px;font-size:12.5px;color:#e0e0e0;font-weight:bold;">One</div>
<svg style="left:8px;top:301.1px" width="8" height="10"><path d="M0 0 L7 4.5 L0 9z" fill="#9a9a9a"/></svg>
<svg style="left:22px;top:300px" width="19" height="13"><rect x="0.7" y="0.7" width="17.6" height="11.6" rx="1.8" fill="none" stroke="#dcdcdc" stroke-width="1.3"/><rect x="0.7" y="0.7" width="17.6" height="6.3" rx="1.5" fill="#dcdcdc"/><text x="9.5" y="6.2" font-size="6.3" text-anchor="middle" fill="#222" font-family="Liberation Mono" font-weight="bold">VST</text></svg>
<div class="t" style="left:45.5px;top:299.1px;font-size:12.5px;color:#e0e0e0;font-weight:bold;">Micro</div>
</div>
<div style="left:173px;top:705px;width:263px;height:2px;background:#3a3a3a"></div>
<svg style="left:177px;top:711px" width="16" height="16"><circle cx="8" cy="8" r="7.3" fill="#2a4a8a" stroke="#1a1a2a" stroke-width="1"/><path d="M4.5 11 V8 a3.5 3.5 0 0 1 7 0 V11" stroke="#9ab8ff" stroke-width="1.5" fill="none"/></svg>
<div style="left:11px;top:743px;width:425px;height:46px;background:#555555;border-radius:4px"></div>
<div style="left:11px;top:743px;width:425px;height:23px;background:#686868;border-radius:4px 4px 0 0"></div>
<div class="t" style="left:15px;top:749px;font-size:12.5px;color:#e6e6e6;font-weight:bold;">Tuning</div>
<div class="t" style="left:176px;top:749px;font-size:12.5px;color:#e6e6e6;font-weight:bold;">Octave</div>
<div class="t" style="left:234px;top:749px;font-size:12.5px;color:#e6e6e6;font-weight:bold;">Note</div>
<div class="t" style="left:293px;top:749px;font-size:12.5px;color:#e6e6e6;font-weight:bold;">Ref. Pitch/Freq</div>
<div class="t" style="left:406px;top:749px;font-size:12.5px;color:#e6e6e6;font-weight:bold;">...</div>
<div class="c" style="left:11px;top:767px;width:425px;height:22px;line-height:22px;font-size:12.5px;color:#e6e6e6;font-weight:bold;text-align:center">Drop Tuning System Here</div>
<div style="left:11px;top:800px;width:425px;height:546px;background:#505050;border-radius:4px"></div>
<div style="left:11px;top:800px;width:425px;height:23px;background:#686868;border-radius:4px 4px 0 0"></div>
<div class="t" style="left:15px;top:806px;font-size:12.5px;color:#e6e6e6;font-weight:bold;">Groove Name</div>
<div style="left:132px;top:806px;width:1px;height:13px;background:#999"></div>
<div class="t" style="left:137px;top:806px;font-size:12.5px;color:#e6e6e6;font-weight:bold;">Base</div>
<div class="t" style="left:200px;top:806px;font-size:12.5px;color:#e6e6e6;font-weight:bold;">Quantize</div>
<div class="t" style="left:264px;top:806px;font-size:12.5px;color:#e6e6e6;font-weight:bold;">Timing</div>
<div class="t" style="left:327px;top:806px;font-size:12.5px;color:#e6e6e6;font-weight:bold;">Random</div>
<div style="left:390px;top:804px;width:46px;height:18px;overflow:hidden"><div class="t" style="left:0;top:2px;font-size:12.5px;color:#e6e6e6;font-weight:bold">Velocity</div></div>
<div style="left:11px;top:824px;width:412px;height:22px;background:#537c89"></div>
<div style="left:11px;top:846px;width:412px;height:1px;background:#333"></div>
<div class="t" style="left:15px;top:828px;font-size:12.5px;color:#111;font-weight:normal;">drums</div>
<svg style="left:94px;top:826px" width="17" height="17"><circle cx="8" cy="8" r="7.3" fill="#3a3a3a" stroke="#111" stroke-width="1.2"/><rect x="4.5" y="4.5" width="7" height="7" rx="1" fill="#ddd"/><rect x="6" y="4.5" width="4" height="2.5" fill="#3a3a3a"/></svg>
<svg style="left:113px;top:826px" width="17" height="17"><circle cx="8" cy="8" r="7.3" fill="#3a3a3a" stroke="#111" stroke-width="1.2"/><path d="M4 7 a4 4 0 0 1 7.5 -1 M12 9 a4 4 0 0 1 -7.5 1" stroke="#ddd" stroke-width="1.3" fill="none"/></svg>
<div style="left:134px;top:826px;width:61px;height:16px;background:#2a2a2a;border:1px solid #1e1e1e;box-sizing:border-box"></div>
<div class="t" style="left:137px;top:827px;font-size:12.5px;color:#e6e6e6;font-weight:bold;">1/16</div>
<svg style="left:182px;top:831px" width="9" height="7"><path d="M0 0 L9 0 L4.5 7z" fill="#e6e6e6"/></svg>
<div style="left:198px;top:826px;width:61px;height:16px;background:#2a2a2a;border:1px solid #1e1e1e;box-sizing:border-box"></div>
<div style="left:261px;top:826px;width:61px;height:16px;background:#2a2a2a;border:1px solid #1e1e1e;box-sizing:border-box"></div>
<div style="left:262px;top:827px;width:31px;height:14px;background:#0f6f80"></div>
<div style="left:325px;top:826px;width:61px;height:16px;background:#2a2a2a;border:1px solid #1e1e1e;box-sizing:border-box"></div>
<div style="left:388px;top:826px;width:35px;height:16px;background:#2a2a2a;border:1px solid #1e1e1e;box-sizing:border-box"></div>
<div class="c" style="left:198px;top:826px;width:61px;height:16px;line-height:16px;font-size:12.5px;color:#e6e6e6;font-weight:bold;text-align:center">0 %</div>
<div class="c" style="left:261px;top:826px;width:61px;height:16px;line-height:16px;font-size:12.5px;color:#e6e6e6;font-weight:bold;text-align:center">50 %</div>
<div class="c" style="left:325px;top:826px;width:61px;height:16px;line-height:16px;font-size:12.5px;color:#e6e6e6;font-weight:bold;text-align:center">0 %</div>
<div style="left:388px;top:826px;width:35px;height:16px;overflow:hidden"><div class="t" style="left:19px;top:1px;font-size:12.5px;color:#e6e6e6;font-weight:bold">0 %</div></div>
<div class="c" style="left:23px;top:1072px;width:425px;height:22px;line-height:22px;font-size:12.5px;color:#e6e6e6;font-weight:bold;text-align:center">Drop Clips or Grooves Here</div>
<div style="left:11px;top:1318px;width:425px;height:2px;background:#363636"></div>
<div style="left:11px;top:1320px;width:425px;height:26px;background:#4a4a4a;border-radius:0 0 4px 4px"></div>
<div class="t" style="left:15px;top:1329px;font-size:12.5px;color:#a0a0a0;font-weight:bold;">Groove Pool</div>
<div class="t" style="left:291px;top:1329px;font-size:12.5px;color:#e6e6e6;font-weight:bold;">Global Amount</div>
<div style="left:384px;top:1326px;width:47px;height:16px;background:#2a2a2a;border:1px solid #1e1e1e;box-sizing:border-box"></div>
<div style="left:385px;top:1327px;width:34px;height:14px;background:#0f6f80"></div>
<div class="t" style="left:391px;top:1329px;font-size:12.5px;color:#e6e6e6;font-weight:bold;">100%</div>
<div style="left:444px;top:98px;width:2106px;height:1250px;background:#161616;border-radius:6px"></div>
<div style="left:448px;top:99px;width:2100px;height:17px;background:#4a4a4a;border-radius:5px 5px 0 0"></div>
<div style="left:449px;top:100px;width:1340px;height:15px;border-radius:4px 0 0 4px;background:linear-gradient(180deg,#8a9cec 0.0px 1.0px,#d9a060 1.0px 2.0px,#4a4850 2.0px 4.0px,#78e070 4.0px 5.0px,#4a4850 5.0px 6.0px,#8a9a60 6.0px 7.0px,#d8f07a 7.0px 8.0px,#a8d890 8.0px 9.0px,#80f080 9.0px 10.0px,#88dd33 10.0px 11.0px,#e8f060 11.0px 12.0px,#b8c8b0 12.0px 13.0px,#88a0f0 13.0px 14.0px,#e8a040 14.0px 15.0px)"></div>
<div style="left:647px;top:101px;width:149px;height:3px;background:#88c0fa"></div>
<div style="left:1193px;top:101px;width:149px;height:3px;background:#88c0fa"></div>
<div style="left:1541px;top:101px;width:148px;height:3px;background:#88c0fa"></div>
<div style="left:772px;top:105px;width:49px;height:1px;background:#50f0d8"></div>
<div style="left:1193px;top:105px;width:25px;height:1px;background:#50f0d8"></div>
<div style="left:1317px;top:105px;width:50px;height:1px;background:#50f0d8"></div>
<div style="left:1541px;top:105px;width:24px;height:1px;background:#50f0d8"></div>
<div style="left:1665px;top:105px;width:49px;height:1px;background:#50f0d8"></div>
<div style="left:647px;top:100px;width:1px;height:15px;background:rgba(255,255,255,0.25)"></div>
<div style="left:796px;top:100px;width:1px;height:15px;background:rgba(255,255,255,0.25)"></div>
<div style="left:995px;top:100px;width:1px;height:15px;background:rgba(255,255,255,0.25)"></div>
<div style="left:1193px;top:100px;width:1px;height:15px;background:rgba(255,255,255,0.25)"></div>
<div style="left:1342px;top:100px;width:1px;height:15px;background:rgba(255,255,255,0.25)"></div>
<div style="left:1441px;top:100px;width:1px;height:15px;background:rgba(255,255,255,0.25)"></div>
<div style="left:1541px;top:100px;width:1px;height:15px;background:rgba(255,255,255,0.25)"></div>
<div style="left:1689px;top:100px;width:1px;height:15px;background:rgba(255,255,255,0.25)"></div>
<div style="left:1900px;top:100px;width:2px;height:15px;background:#e0e0e0"></div>
<div style="left:448px;top:115px;width:2100px;height:1px;background:#161616"></div>
<div style="left:448px;top:116px;width:1740px;height:29px;background:#4f4f4f"></div>
<div style="left:447px;top:137px;width:1px;height:7px;background:#a8a8a8"></div>
<div style="left:448px;top:137px;width:2px;height:1px;background:#a8a8a8"></div>
<div class="t" style="left:452px;top:131px;font-size:12.5px;color:#d4d4d4;font-weight:bold;">1</div>
<div style="left:488px;top:142px;width:1px;height:2px;background:#b0b0b0"></div>
<div style="left:529px;top:137px;width:1px;height:7px;background:#a8a8a8"></div>
<div style="left:530px;top:137px;width:2px;height:1px;background:#a8a8a8"></div>
<div class="t" style="left:535px;top:131px;font-size:12.5px;color:#d4d4d4;font-weight:bold;">5</div>
<div style="left:570px;top:142px;width:1px;height:2px;background:#b0b0b0"></div>
<div style="left:611px;top:137px;width:1px;height:7px;background:#a8a8a8"></div>
<div style="left:612px;top:137px;width:2px;height:1px;background:#a8a8a8"></div>
<div class="t" style="left:617px;top:131px;font-size:12.5px;color:#d4d4d4;font-weight:bold;">9</div>
<div style="left:652px;top:142px;width:1px;height:2px;background:#b0b0b0"></div>
<div style="left:693px;top:137px;width:1px;height:7px;background:#a8a8a8"></div>
<div style="left:694px;top:137px;width:2px;height:1px;background:#a8a8a8"></div>
<div class="t" style="left:699px;top:131px;font-size:12.5px;color:#d4d4d4;font-weight:bold;">13</div>
<div style="left:735px;top:142px;width:1px;height:2px;background:#b0b0b0"></div>
<div style="left:776px;top:137px;width:1px;height:7px;background:#a8a8a8"></div>
<div style="left:777px;top:137px;width:2px;height:1px;background:#a8a8a8"></div>
<div class="t" style="left:781px;top:131px;font-size:12.5px;color:#d4d4d4;font-weight:bold;">17</div>
<div style="left:817px;top:142px;width:1px;height:2px;background:#b0b0b0"></div>
<div style="left:858px;top:137px;width:1px;height:7px;background:#a8a8a8"></div>
<div style="left:859px;top:137px;width:2px;height:1px;background:#a8a8a8"></div>
<div class="t" style="left:863px;top:131px;font-size:12.5px;color:#d4d4d4;font-weight:bold;">21</div>
<div style="left:899px;top:142px;width:1px;height:2px;background:#b0b0b0"></div>
<div style="left:940px;top:137px;width:1px;height:7px;background:#a8a8a8"></div>
<div style="left:941px;top:137px;width:2px;height:1px;background:#a8a8a8"></div>
<div class="t" style="left:945px;top:131px;font-size:12.5px;color:#d4d4d4;font-weight:bold;">25</div>
<div style="left:981px;top:142px;width:1px;height:2px;background:#b0b0b0"></div>
<div style="left:1022px;top:137px;width:1px;height:7px;background:#a8a8a8"></div>
<div style="left:1023px;top:137px;width:2px;height:1px;background:#a8a8a8"></div>
<div class="t" style="left:1028px;top:131px;font-size:12.5px;color:#d4d4d4;font-weight:bold;">29</div>
<div style="left:1063px;top:142px;width:1px;height:2px;background:#b0b0b0"></div>
<div style="left:1104px;top:137px;width:1px;height:7px;background:#a8a8a8"></div>
<div style="left:1105px;top:137px;width:2px;height:1px;background:#a8a8a8"></div>
<div class="t" style="left:1110px;top:131px;font-size:12.5px;color:#d4d4d4;font-weight:bold;">33</div>
<div style="left:1145px;top:142px;width:1px;height:2px;background:#b0b0b0"></div>
<div style="left:1186px;top:137px;width:1px;height:7px;background:#a8a8a8"></div>
<div style="left:1187px;top:137px;width:2px;height:1px;background:#a8a8a8"></div>
<div class="t" style="left:1192px;top:131px;font-size:12.5px;color:#d4d4d4;font-weight:bold;">37</div>
<div style="left:1228px;top:142px;width:1px;height:2px;background:#b0b0b0"></div>
<div style="left:1269px;top:137px;width:1px;height:7px;background:#a8a8a8"></div>
<div style="left:1270px;top:137px;width:2px;height:1px;background:#a8a8a8"></div>
<div class="t" style="left:1274px;top:131px;font-size:12.5px;color:#d4d4d4;font-weight:bold;">41</div>
<div style="left:1310px;top:142px;width:1px;height:2px;background:#b0b0b0"></div>
<div style="left:1351px;top:137px;width:1px;height:7px;background:#a8a8a8"></div>
<div style="left:1352px;top:137px;width:2px;height:1px;background:#a8a8a8"></div>
<div class="t" style="left:1356px;top:131px;font-size:12.5px;color:#d4d4d4;font-weight:bold;">45</div>
<div style="left:1392px;top:142px;width:1px;height:2px;background:#b0b0b0"></div>
<div style="left:1433px;top:137px;width:1px;height:7px;background:#a8a8a8"></div>
<div style="left:1434px;top:137px;width:2px;height:1px;background:#a8a8a8"></div>
<div class="t" style="left:1438px;top:131px;font-size:12.5px;color:#d4d4d4;font-weight:bold;">49</div>
<div style="left:1474px;top:142px;width:1px;height:2px;background:#b0b0b0"></div>
<div style="left:1515px;top:137px;width:1px;height:7px;background:#a8a8a8"></div>
<div style="left:1516px;top:137px;width:2px;height:1px;background:#a8a8a8"></div>
<div class="t" style="left:1521px;top:131px;font-size:12.5px;color:#d4d4d4;font-weight:bold;">53</div>
<div style="left:1556px;top:142px;width:1px;height:2px;background:#b0b0b0"></div>
<div style="left:1597px;top:137px;width:1px;height:7px;background:#a8a8a8"></div>
<div style="left:1598px;top:137px;width:2px;height:1px;background:#a8a8a8"></div>
<div class="t" style="left:1603px;top:131px;font-size:12.5px;color:#d4d4d4;font-weight:bold;">57</div>
<div style="left:1638px;top:142px;width:1px;height:2px;background:#b0b0b0"></div>
<div style="left:1679px;top:137px;width:1px;height:7px;background:#a8a8a8"></div>
<div style="left:1680px;top:137px;width:2px;height:1px;background:#a8a8a8"></div>
<div class="t" style="left:1685px;top:131px;font-size:12.5px;color:#d4d4d4;font-weight:bold;">61</div>
<div style="left:1720px;top:142px;width:1px;height:2px;background:#b0b0b0"></div>
<div style="left:1762px;top:137px;width:1px;height:7px;background:#a8a8a8"></div>
<div style="left:1763px;top:137px;width:2px;height:1px;background:#a8a8a8"></div>
<div class="t" style="left:1767px;top:131px;font-size:12.5px;color:#d4d4d4;font-weight:bold;">65</div>
<div style="left:1803px;top:142px;width:1px;height:2px;background:#b0b0b0"></div>
<div style="left:1844px;top:137px;width:1px;height:7px;background:#a8a8a8"></div>
<div style="left:1845px;top:137px;width:2px;height:1px;background:#a8a8a8"></div>
<div class="t" style="left:1849px;top:131px;font-size:12.5px;color:#d4d4d4;font-weight:bold;">69</div>
<div style="left:1885px;top:142px;width:1px;height:2px;background:#b0b0b0"></div>
<div style="left:1926px;top:137px;width:1px;height:7px;background:#a8a8a8"></div>
<div style="left:1927px;top:137px;width:2px;height:1px;background:#a8a8a8"></div>
<div class="t" style="left:1931px;top:131px;font-size:12.5px;color:#d4d4d4;font-weight:bold;">73</div>
<div style="left:1967px;top:142px;width:1px;height:2px;background:#b0b0b0"></div>
<div style="left:2008px;top:137px;width:1px;height:7px;background:#a8a8a8"></div>
<div style="left:2009px;top:137px;width:2px;height:1px;background:#a8a8a8"></div>
<div class="t" style="left:2014px;top:131px;font-size:12.5px;color:#d4d4d4;font-weight:bold;">77</div>
<div style="left:2049px;top:142px;width:1px;height:2px;background:#b0b0b0"></div>
<div style="left:2090px;top:137px;width:1px;height:7px;background:#a8a8a8"></div>
<div style="left:2091px;top:137px;width:2px;height:1px;background:#a8a8a8"></div>
<div class="t" style="left:2096px;top:131px;font-size:12.5px;color:#d4d4d4;font-weight:bold;">81</div>
<div style="left:2131px;top:142px;width:1px;height:2px;background:#b0b0b0"></div>
<div style="left:2172px;top:137px;width:1px;height:7px;background:#a8a8a8"></div>
<div style="left:2173px;top:137px;width:2px;height:1px;background:#a8a8a8"></div>
<div style="left:2213px;top:142px;width:1px;height:2px;background:#b0b0b0"></div>
<div style="left:2173px;top:136px;width:1px;height:7px;background:#b8b8b8"></div>
<div style="left:448px;top:144px;width:1109px;height:1px;background:#222"></div>
<div style="left:448px;top:145px;width:1108.6599999999999px;height:12px;background:#8b8b8b;border-top:1px solid #1a1a1a;border-bottom:1px solid #1a1a1a;box-sizing:border-box"></div>
<svg style="left:448px;top:145px" width="12" height="12"><path d="M0.5 0.5 L10.5 6 L0.5 11.5z" fill="#7a7a7a" stroke="#222" stroke-width="1"/></svg>
<svg style="left:1544.7px;top:145px" width="12" height="12"><path d="M11.5 0.5 L1.5 6 L11.5 11.5z" fill="#777" stroke="#333" stroke-width="1"/></svg>
<div style="left:1557px;top:145px;width:631px;height:28px;background-color:#4d4d4d;background-image:repeating-linear-gradient(90deg,rgba(0,0,0,0.18) 0 1px,transparent 1px 10.270px);background-size:calc(100% + 10.270px) 100%;background-position:-0.34px 0;background-repeat:no-repeat"></div>
<div style="left:448px;top:157px;width:1109px;height:16px;background-color:#474747;background-image:repeating-linear-gradient(90deg,rgba(0,0,0,0.18) 0 1px,transparent 1px 10.270px);background-size:calc(100% + 10.270px) 100%;background-position:-0.50px 0;background-repeat:no-repeat"></div>
<div style="left:448px;top:172px;width:1740px;height:2px;background:#2a2a2a"></div>
<svg style="left:1643px;top:166px" width="12" height="7"><path d="M0 0 L11 0 L5.5 6z" fill="#19c3d6"/></svg>
<div style="left:448px;top:174px;width:1739px;height:31px;background-color:#486890;background-image:repeating-linear-gradient(90deg,rgba(0,0,0,0.1) 0 1px,transparent 1px 10.270px);background-size:calc(100% + 10.270px) 100%;background-position:-0.50px 0;background-repeat:no-repeat"></div>
<div style="left:448px;top:174px;width:1109px;height:31px;background-color:#76a0f3;background-image:repeating-linear-gradient(90deg,rgba(0,0,0,0.08) 0 1px,transparent 1px 10.270px);background-size:calc(100% + 10.270px) 100%;background-position:-0.50px 0;background-repeat:no-repeat"></div>
<svg style="left:448.0px;top:174px" width="164.0" height="31"><path d="M19.1 12h6 M28.7 16h8 M62.8 9h6 M53.3 12h4 M96.0 12h3 M90.1 14h4 M140.6 12h6 M159.8 18h4 M157.9 16h3 M156.3 9h3" stroke="#1a1a2a" stroke-width="1.6" fill="none"/></svg>
<svg style="left:612.0px;top:174px" width="123.0" height="31"><path d="M32.7 18h4 M19.4 18h3 M24.1 14h6 M27.3 12h4 M46.5 12h3 M47.2 18h4 M50.8 14h3 M112.9 16h3 M87.4 16h4 M92.6 18h4 M108.5 14h6" stroke="#1a1a2a" stroke-width="1.6" fill="none"/></svg>
<svg style="left:735.0px;top:174px" width="164.0" height="31"><path d="M26.7 14h3 M22.4 18h3 M54.4 16h8 M64.5 18h8 M65.8 18h3 M112.9 16h3 M103.1 9h2 M109.4 18h8 M100.7 18h3 M144.8 12h6 M148.0 16h2 M134.9 9h4 M139.5 12h8" stroke="#1a1a2a" stroke-width="1.6" fill="none"/></svg>
<svg style="left:899.0px;top:174px" width="165.0" height="31"><path d="M19.0 12h2 M35.0 9h6 M19.2 14h2 M20.2 12h3 M73.1 9h2 M52.0 9h3 M65.4 14h3 M70.2 18h6 M112.7 18h8 M93.9 14h3 M133.9 18h8 M142.9 14h4 M158.0 18h6 M144.8 18h4" stroke="#1a1a2a" stroke-width="1.6" fill="none"/></svg>
<svg style="left:1064.0px;top:174px" width="123.0" height="31"><path d="M33.6 12h6 M14.6 12h2 M47.8 12h2 M46.8 14h4 M87.3 12h8 M94.2 14h8 M91.2 14h6 M86.6 16h8" stroke="#1a1a2a" stroke-width="1.6" fill="none"/></svg>
<svg style="left:1187.0px;top:174px" width="82.0" height="31"><path d="M15.2 9h2 M14.0 18h4 M13.3 14h3 M29.4 12h2 M58.0 12h6 M65.7 16h6 M75.0 12h3 M65.5 18h4" stroke="#1a1a2a" stroke-width="1.6" fill="none"/></svg>
<svg style="left:1269.0px;top:174px" width="82.0" height="31"><path d="M37.3 16h2 M22.5 18h6 M5.0 14h2 M9.6 16h4 M59.9 14h3 M70.3 14h6 M66.8 12h4" stroke="#1a1a2a" stroke-width="1.6" fill="none"/></svg>
<svg style="left:1351.0px;top:174px" width="123.0" height="31"><path d="M24.7 16h6 M29.8 12h6 M70.5 14h4 M64.9 14h4 M50.8 18h3 M76.4 18h3 M98.2 9h3 M87.4 12h3" stroke="#1a1a2a" stroke-width="1.6" fill="none"/></svg>
<svg style="left:1474.0px;top:174px" width="83.0" height="31"><path d="M28.1 9h6 M28.5 16h3 M54.6 12h3 M69.0 14h3" stroke="#1a1a2a" stroke-width="1.6" fill="none"/></svg>
<div style="left:448px;top:205px;width:1739px;height:2px;background:#2a2a2a"></div>
<div style="left:448px;top:207px;width:1739px;height:64px;background-color:#486890;background-image:repeating-linear-gradient(90deg,rgba(0,0,0,0.1) 0 1px,transparent 1px 10.270px);background-size:calc(100% + 10.270px) 100%;background-position:-0.50px 0;background-repeat:no-repeat"></div>
<div style="left:448px;top:271px;width:1739px;height:2px;background:#2a2a2a"></div>
<div style="left:448px;top:273px;width:1739px;height:64px;background-color:#486890;background-image:repeating-linear-gradient(90deg,rgba(0,0,0,0.1) 0 1px,transparent 1px 10.270px);background-size:calc(100% + 10.270px) 100%;background-position:-0.50px 0;background-repeat:no-repeat"></div>
<div style="left:448px;top:337px;width:1739px;height:2px;background:#2a2a2a"></div>
<div style="left:448px;top:339px;width:1739px;height:64px;background-color:#486890;background-image:repeating-linear-gradient(90deg,rgba(0,0,0,0.1) 0 1px,transparent 1px 10.270px);background-size:calc(100% + 10.270px) 100%;background-position:-0.50px 0;background-repeat:no-repeat"></div>
<div style="left:448px;top:403px;width:1739px;height:2px;background:#2a2a2a"></div>
<div style="left:448px;top:405px;width:1739px;height:64px;background-color:#486890;background-image:repeating-linear-gradient(90deg,rgba(0,0,0,0.1) 0 1px,transparent 1px 10.270px);background-size:calc(100% + 10.270px) 100%;background-position:-0.50px 0;background-repeat:no-repeat"></div>
<div style="left:448px;top:469px;width:1739px;height:2px;background:#2a2a2a"></div>
<div style="left:448px;top:471px;width:1739px;height:64px;background-color:#486890;background-image:repeating-linear-gradient(90deg,rgba(0,0,0,0.1) 0 1px,transparent 1px 10.270px);background-size:calc(100% + 10.270px) 100%;background-position:-0.50px 0;background-repeat:no-repeat"></div>
<div style="left:448px;top:535px;width:1739px;height:2px;background:#2a2a2a"></div>
<div style="left:448px;top:207px;width:164px;height:20px;background:#ffa529"></div>
<div style="left:448px;top:207px;width:164px;height:19px;overflow:hidden"><div class="t" style="left:4px;top:3px;font-size:13px;color:#2a2a2a">keys A</div></div>
<div style="left:448px;top:227px;width:164px;height:43px;background-color:#b7a078;background-image:repeating-linear-gradient(90deg,rgba(0,0,0,0.1) 0 1px,transparent 1px 10.270px);background-size:calc(100% + 10.270px) 100%;background-position:-0.50px 0;background-repeat:no-repeat"></div>
<div style="left:448px;top:226px;width:164px;height:1px;background:rgba(0,0,0,0.15)"></div>
<svg style="left:448.0px;top:227px" width="164.0" height="44"><path d="M6.0 21H9.0 M2.0 25H26.0 M44.0 25.5H58.0 M4.0 28H30.0 M38.0 28H41.0 M44.0 28H72.0 M12.0 31H30.0 M46.0 31H68.0 M20.0 34H32.0 M40.0 34H74.0 M52.0 37H72.0 M34.0 24H37.0 M50.0 22H60.0 M14.0 37H22.0 M88.2 21H91.2 M84.2 25H108.2 M126.2 25.5H140.2 M86.2 28H112.2 M120.2 28H123.2 M126.2 28H154.2 M94.2 31H112.2 M128.2 31H150.2 M102.2 34H114.2 M122.2 34H156.2 M134.2 37H154.2 M116.2 24H119.2 M132.2 22H142.2 M96.2 37H104.2" stroke="#1e1a12" stroke-width="1.4" fill="none"/></svg>
<div style="left:448px;top:207px;width:1px;height:64px;background:rgba(0,0,0,0.35)"></div>
<div style="left:612px;top:207px;width:123px;height:20px;background:#8cc5ff"></div>
<div style="left:612px;top:207px;width:123px;height:19px;overflow:hidden"><div class="t" style="left:4px;top:3px;font-size:13px;color:#2a2a2a">keys B</div></div>
<div style="left:612px;top:227px;width:123px;height:43px;background-color:#6db0f1;background-image:repeating-linear-gradient(90deg,rgba(0,0,0,0.1) 0 1px,transparent 1px 10.270px);background-size:calc(100% + 10.270px) 100%;background-position:-0.18px 0;background-repeat:no-repeat"></div>
<div style="left:612px;top:226px;width:123px;height:1px;background:rgba(0,0,0,0.15)"></div>
<svg style="left:612.0px;top:227px" width="123.0" height="44"><path d="M20.0 14H35.0" stroke="#0c1424" stroke-width="1.2"/><path d="M10.0 17H26.0" stroke="#0c1424" stroke-width="1.2"/><path d="M0.0 21H41.0" stroke="#0c1424" stroke-width="1.3"/><path d="M0.0 24H8.0" stroke="#0c1424" stroke-width="1.2"/><path d="M20.0 24H32.0" stroke="#0c1424" stroke-width="1.2"/><path d="M28.0 28H41.0" stroke="#0c1424" stroke-width="2.2"/><path d="M0.0 28H12.0" stroke="#0c1424" stroke-width="1.2"/><path d="M8.0 30H30.0" stroke="#0c1424" stroke-width="2.2"/><path d="M0.0 34H20.0" stroke="#0c1424" stroke-width="1.2"/><path d="M5.0 38H25.0" stroke="#0c1424" stroke-width="1.2"/><path d="M30.0 38H41.0" stroke="#0c1424" stroke-width="1.2"/><path d="M0.0 41H10.0" stroke="#0c1424" stroke-width="1.2"/><path d="M61.1 14H76.1" stroke="#0c1424" stroke-width="1.2"/><path d="M51.1 17H67.1" stroke="#0c1424" stroke-width="1.2"/><path d="M41.1 21H82.1" stroke="#0c1424" stroke-width="1.3"/><path d="M41.1 24H49.1" stroke="#0c1424" stroke-width="1.2"/><path d="M61.1 24H73.1" stroke="#0c1424" stroke-width="1.2"/><path d="M69.1 28H82.1" stroke="#0c1424" stroke-width="2.2"/><path d="M41.1 28H53.1" stroke="#0c1424" stroke-width="1.2"/><path d="M49.1 30H71.1" stroke="#0c1424" stroke-width="2.2"/><path d="M41.1 34H61.1" stroke="#0c1424" stroke-width="1.2"/><path d="M46.1 38H66.1" stroke="#0c1424" stroke-width="1.2"/><path d="M71.1 38H82.1" stroke="#0c1424" stroke-width="1.2"/><path d="M41.1 41H51.1" stroke="#0c1424" stroke-width="1.2"/><path d="M102.2 14H117.2" stroke="#0c1424" stroke-width="1.2"/><path d="M92.2 17H108.2" stroke="#0c1424" stroke-width="1.2"/><path d="M82.2 21H123.0" stroke="#0c1424" stroke-width="1.3"/><path d="M82.2 24H90.2" stroke="#0c1424" stroke-width="1.2"/><path d="M102.2 24H114.2" stroke="#0c1424" stroke-width="1.2"/><path d="M110.2 28H123.0" stroke="#0c1424" stroke-width="2.2"/><path d="M82.2 28H94.2" stroke="#0c1424" stroke-width="1.2"/><path d="M90.2 30H112.2" stroke="#0c1424" stroke-width="2.2"/><path d="M82.2 34H102.2" stroke="#0c1424" stroke-width="1.2"/><path d="M87.2 38H107.2" stroke="#0c1424" stroke-width="1.2"/><path d="M112.2 38H123.0" stroke="#0c1424" stroke-width="1.2"/><path d="M82.2 41H92.2" stroke="#0c1424" stroke-width="1.2"/></svg>
<div style="left:612px;top:207px;width:1px;height:64px;background:rgba(0,0,0,0.35)"></div>
<div style="left:735px;top:207px;width:82px;height:20px;background:#ffa529"></div>
<div style="left:735px;top:207px;width:82px;height:19px;overflow:hidden"><div class="t" style="left:4px;top:3px;font-size:13px;color:#2a2a2a">keys A</div></div>
<div style="left:735px;top:227px;width:82px;height:43px;background-color:#b7a078;background-image:repeating-linear-gradient(90deg,rgba(0,0,0,0.1) 0 1px,transparent 1px 10.270px);background-size:calc(100% + 10.270px) 100%;background-position:-10.21px 0;background-repeat:no-repeat"></div>
<div style="left:735px;top:226px;width:82px;height:1px;background:rgba(0,0,0,0.15)"></div>
<svg style="left:735.0px;top:227px" width="82.0" height="44"><path d="M6.0 21H9.0 M2.0 25H26.0 M44.0 25.5H58.0 M4.0 28H30.0 M38.0 28H41.0 M44.0 28H72.0 M12.0 31H30.0 M46.0 31H68.0 M20.0 34H32.0 M40.0 34H74.0 M52.0 37H72.0 M34.0 24H37.0 M50.0 22H60.0 M14.0 37H22.0" stroke="#1e1a12" stroke-width="1.4" fill="none"/></svg>
<div style="left:735px;top:207px;width:1px;height:64px;background:rgba(0,0,0,0.35)"></div>
<div style="left:817px;top:207px;width:82px;height:20px;background:#ffa529"></div>
<div style="left:817px;top:207px;width:82px;height:19px;overflow:hidden"><div class="t" style="left:4px;top:3px;font-size:13px;color:#2a2a2a">keys A</div></div>
<div style="left:817px;top:227px;width:82px;height:43px;background-color:#b7a078;background-image:repeating-linear-gradient(90deg,rgba(0,0,0,0.1) 0 1px,transparent 1px 10.270px);background-size:calc(100% + 10.270px) 100%;background-position:-10.05px 0;background-repeat:no-repeat"></div>
<div style="left:817px;top:226px;width:82px;height:1px;background:rgba(0,0,0,0.15)"></div>
<svg style="left:817.0px;top:227px" width="82.0" height="44"><path d="M6.0 21H9.0 M2.0 25H26.0 M44.0 25.5H58.0 M4.0 28H30.0 M38.0 28H41.0 M44.0 28H72.0 M12.0 31H30.0 M46.0 31H68.0 M20.0 34H32.0 M40.0 34H74.0 M52.0 37H72.0 M34.0 24H37.0 M50.0 22H60.0 M14.0 37H22.0" stroke="#1e1a12" stroke-width="1.4" fill="none"/></svg>
<div style="left:817px;top:207px;width:1px;height:64px;background:rgba(0,0,0,0.35)"></div>
<div style="left:899px;top:207px;width:83px;height:20px;background:#ffa529"></div>
<div style="left:899px;top:207px;width:83px;height:19px;overflow:hidden"><div class="t" style="left:4px;top:3px;font-size:13px;color:#2a2a2a">keys A</div></div>
<div style="left:899px;top:227px;width:83px;height:43px;background-color:#b7a078;background-image:repeating-linear-gradient(90deg,rgba(0,0,0,0.1) 0 1px,transparent 1px 10.270px);background-size:calc(100% + 10.270px) 100%;background-position:-9.89px 0;background-repeat:no-repeat"></div>
<div style="left:899px;top:226px;width:83px;height:1px;background:rgba(0,0,0,0.15)"></div>
<svg style="left:899.0px;top:227px" width="83.0" height="44"><path d="M6.0 6H9.0 M2.0 10H26.0 M44.0 10.5H58.0 M4.0 13H30.0 M38.0 13H41.0 M44.0 13H72.0 M12.0 16H30.0 M46.0 16H68.0 M20.0 19H32.0 M40.0 19H74.0 M52.0 22H72.0 M34.0 9H37.0 M50.0 7H60.0 M14.0 22H22.0" stroke="#1e1a12" stroke-width="1.4" fill="none"/></svg>
<div style="left:899px;top:207px;width:1px;height:64px;background:rgba(0,0,0,0.35)"></div>
<div style="left:982px;top:207px;width:82px;height:20px;background:#ffa529"></div>
<div style="left:982px;top:207px;width:82px;height:19px;overflow:hidden"><div class="t" style="left:4px;top:3px;font-size:13px;color:#2a2a2a">keys A</div></div>
<div style="left:982px;top:227px;width:82px;height:43px;background-color:#b7a078;background-image:repeating-linear-gradient(90deg,rgba(0,0,0,0.1) 0 1px,transparent 1px 10.270px);background-size:calc(100% + 10.270px) 100%;background-position:-0.46px 0;background-repeat:no-repeat"></div>
<div style="left:982px;top:226px;width:82px;height:1px;background:rgba(0,0,0,0.15)"></div>
<svg style="left:982.0px;top:227px" width="82.0" height="44"><path d="M6.0 6H9.0 M2.0 10H26.0 M44.0 10.5H58.0 M4.0 13H30.0 M38.0 13H41.0 M44.0 13H72.0 M12.0 16H30.0 M46.0 16H68.0 M20.0 19H32.0 M40.0 19H74.0 M52.0 22H72.0 M34.0 9H37.0 M50.0 7H60.0 M14.0 22H22.0" stroke="#1e1a12" stroke-width="1.4" fill="none"/></svg>
<div style="left:982px;top:207px;width:1px;height:64px;background:rgba(0,0,0,0.35)"></div>
<div style="left:1064px;top:207px;width:123px;height:20px;background:#8cc5ff"></div>
<div style="left:1064px;top:207px;width:123px;height:19px;overflow:hidden"><div class="t" style="left:4px;top:3px;font-size:13px;color:#2a2a2a">keys B</div></div>
<div style="left:1064px;top:227px;width:123px;height:43px;background-color:#6db0f1;background-image:repeating-linear-gradient(90deg,rgba(0,0,0,0.1) 0 1px,transparent 1px 10.270px);background-size:calc(100% + 10.270px) 100%;background-position:-0.30px 0;background-repeat:no-repeat"></div>
<div style="left:1064px;top:226px;width:123px;height:1px;background:rgba(0,0,0,0.15)"></div>
<svg style="left:1064.0px;top:227px" width="123.0" height="44"><path d="M20.0 14H35.0" stroke="#0c1424" stroke-width="1.2"/><path d="M10.0 17H26.0" stroke="#0c1424" stroke-width="1.2"/><path d="M0.0 21H41.0" stroke="#0c1424" stroke-width="1.3"/><path d="M0.0 24H8.0" stroke="#0c1424" stroke-width="1.2"/><path d="M20.0 24H32.0" stroke="#0c1424" stroke-width="1.2"/><path d="M28.0 28H41.0" stroke="#0c1424" stroke-width="2.2"/><path d="M0.0 28H12.0" stroke="#0c1424" stroke-width="1.2"/><path d="M8.0 30H30.0" stroke="#0c1424" stroke-width="2.2"/><path d="M0.0 34H20.0" stroke="#0c1424" stroke-width="1.2"/><path d="M5.0 38H25.0" stroke="#0c1424" stroke-width="1.2"/><path d="M30.0 38H41.0" stroke="#0c1424" stroke-width="1.2"/><path d="M0.0 41H10.0" stroke="#0c1424" stroke-width="1.2"/><path d="M61.1 14H76.1" stroke="#0c1424" stroke-width="1.2"/><path d="M51.1 17H67.1" stroke="#0c1424" stroke-width="1.2"/><path d="M41.1 21H82.1" stroke="#0c1424" stroke-width="1.3"/><path d="M41.1 24H49.1" stroke="#0c1424" stroke-width="1.2"/><path d="M61.1 24H73.1" stroke="#0c1424" stroke-width="1.2"/><path d="M69.1 28H82.1" stroke="#0c1424" stroke-width="2.2"/><path d="M41.1 28H53.1" stroke="#0c1424" stroke-width="1.2"/><path d="M49.1 30H71.1" stroke="#0c1424" stroke-width="2.2"/><path d="M41.1 34H61.1" stroke="#0c1424" stroke-width="1.2"/><path d="M46.1 38H66.1" stroke="#0c1424" stroke-width="1.2"/><path d="M71.1 38H82.1" stroke="#0c1424" stroke-width="1.2"/><path d="M41.1 41H51.1" stroke="#0c1424" stroke-width="1.2"/><path d="M102.2 14H117.2" stroke="#0c1424" stroke-width="1.2"/><path d="M92.2 17H108.2" stroke="#0c1424" stroke-width="1.2"/><path d="M82.2 21H123.0" stroke="#0c1424" stroke-width="1.3"/><path d="M82.2 24H90.2" stroke="#0c1424" stroke-width="1.2"/><path d="M102.2 24H114.2" stroke="#0c1424" stroke-width="1.2"/><path d="M110.2 28H123.0" stroke="#0c1424" stroke-width="2.2"/><path d="M82.2 28H94.2" stroke="#0c1424" stroke-width="1.2"/><path d="M90.2 30H112.2" stroke="#0c1424" stroke-width="2.2"/><path d="M82.2 34H102.2" stroke="#0c1424" stroke-width="1.2"/><path d="M87.2 38H107.2" stroke="#0c1424" stroke-width="1.2"/><path d="M112.2 38H123.0" stroke="#0c1424" stroke-width="1.2"/><path d="M82.2 41H92.2" stroke="#0c1424" stroke-width="1.2"/></svg>
<div style="left:1064px;top:207px;width:1px;height:64px;background:rgba(0,0,0,0.35)"></div>
<div style="left:1187px;top:207px;width:82px;height:20px;background:#ffa529"></div>
<div style="left:1187px;top:207px;width:82px;height:19px;overflow:hidden"><div class="t" style="left:4px;top:3px;font-size:13px;color:#2a2a2a">keys A</div></div>
<div style="left:1187px;top:227px;width:82px;height:43px;background-color:#b7a078;background-image:repeating-linear-gradient(90deg,rgba(0,0,0,0.1) 0 1px,transparent 1px 10.270px);background-size:calc(100% + 10.270px) 100%;background-position:-0.06px 0;background-repeat:no-repeat"></div>
<div style="left:1187px;top:226px;width:82px;height:1px;background:rgba(0,0,0,0.15)"></div>
<svg style="left:1187.0px;top:227px" width="82.0" height="44"><path d="M6.0 21H9.0 M2.0 25H26.0 M44.0 25.5H58.0 M4.0 28H30.0 M38.0 28H41.0 M44.0 28H72.0 M12.0 31H30.0 M46.0 31H68.0 M20.0 34H32.0 M40.0 34H74.0 M52.0 37H72.0 M34.0 24H37.0 M50.0 22H60.0 M14.0 37H22.0" stroke="#1e1a12" stroke-width="1.4" fill="none"/></svg>
<div style="left:1187px;top:207px;width:1px;height:64px;background:rgba(0,0,0,0.35)"></div>
<div style="left:1269px;top:207px;width:82px;height:20px;background:#ffa529"></div>
<div style="left:1269px;top:207px;width:82px;height:19px;overflow:hidden"><div class="t" style="left:4px;top:3px;font-size:13px;color:#2a2a2a">keys A</div></div>
<div style="left:1269px;top:227px;width:82px;height:43px;background-color:#b7a078;background-image:repeating-linear-gradient(90deg,rgba(0,0,0,0.1) 0 1px,transparent 1px 10.270px);background-size:calc(100% + 10.270px) 100%;background-position:-10.17px 0;background-repeat:no-repeat"></div>
<div style="left:1269px;top:226px;width:82px;height:1px;background:rgba(0,0,0,0.15)"></div>
<svg style="left:1269.0px;top:227px" width="82.0" height="44"><path d="M6.0 21H9.0 M2.0 25H26.0 M44.0 25.5H58.0 M4.0 28H30.0 M38.0 28H41.0 M44.0 28H72.0 M12.0 31H30.0 M46.0 31H68.0 M20.0 34H32.0 M40.0 34H74.0 M52.0 37H72.0 M34.0 24H37.0 M50.0 22H60.0 M14.0 37H22.0" stroke="#1e1a12" stroke-width="1.4" fill="none"/></svg>
<div style="left:1269px;top:207px;width:1px;height:64px;background:rgba(0,0,0,0.35)"></div>
<div style="left:1351px;top:207px;width:123px;height:20px;background:#8cc5ff"></div>
<div style="left:1351px;top:207px;width:123px;height:19px;overflow:hidden"><div class="t" style="left:4px;top:3px;font-size:13px;color:#2a2a2a">keys B</div></div>
<div style="left:1351px;top:227px;width:123px;height:43px;background-color:#6db0f1;background-image:repeating-linear-gradient(90deg,rgba(0,0,0,0.1) 0 1px,transparent 1px 10.270px);background-size:calc(100% + 10.270px) 100%;background-position:-10.01px 0;background-repeat:no-repeat"></div>
<div style="left:1351px;top:226px;width:123px;height:1px;background:rgba(0,0,0,0.15)"></div>
<svg style="left:1351.0px;top:227px" width="123.0" height="44"><path d="M20.0 14H35.0" stroke="#0c1424" stroke-width="1.2"/><path d="M10.0 17H26.0" stroke="#0c1424" stroke-width="1.2"/><path d="M0.0 21H41.0" stroke="#0c1424" stroke-width="1.3"/><path d="M0.0 24H8.0" stroke="#0c1424" stroke-width="1.2"/><path d="M20.0 24H32.0" stroke="#0c1424" stroke-width="1.2"/><path d="M28.0 28H41.0" stroke="#0c1424" stroke-width="2.2"/><path d="M0.0 28H12.0" stroke="#0c1424" stroke-width="1.2"/><path d="M8.0 30H30.0" stroke="#0c1424" stroke-width="2.2"/><path d="M0.0 34H20.0" stroke="#0c1424" stroke-width="1.2"/><path d="M5.0 38H25.0" stroke="#0c1424" stroke-width="1.2"/><path d="M30.0 38H41.0" stroke="#0c1424" stroke-width="1.2"/><path d="M0.0 41H10.0" stroke="#0c1424" stroke-width="1.2"/><path d="M61.1 14H76.1" stroke="#0c1424" stroke-width="1.2"/><path d="M51.1 17H67.1" stroke="#0c1424" stroke-width="1.2"/><path d="M41.1 21H82.1" stroke="#0c1424" stroke-width="1.3"/><path d="M41.1 24H49.1" stroke="#0c1424" stroke-width="1.2"/><path d="M61.1 24H73.1" stroke="#0c1424" stroke-width="1.2"/><path d="M69.1 28H82.1" stroke="#0c1424" stroke-width="2.2"/><path d="M41.1 28H53.1" stroke="#0c1424" stroke-width="1.2"/><path d="M49.1 30H71.1" stroke="#0c1424" stroke-width="2.2"/><path d="M41.1 34H61.1" stroke="#0c1424" stroke-width="1.2"/><path d="M46.1 38H66.1" stroke="#0c1424" stroke-width="1.2"/><path d="M71.1 38H82.1" stroke="#0c1424" stroke-width="1.2"/><path d="M41.1 41H51.1" stroke="#0c1424" stroke-width="1.2"/><path d="M102.2 14H117.2" stroke="#0c1424" stroke-width="1.2"/><path d="M92.2 17H108.2" stroke="#0c1424" stroke-width="1.2"/><path d="M82.2 21H123.0" stroke="#0c1424" stroke-width="1.3"/><path d="M82.2 24H90.2" stroke="#0c1424" stroke-width="1.2"/><path d="M102.2 24H114.2" stroke="#0c1424" stroke-width="1.2"/><path d="M110.2 28H123.0" stroke="#0c1424" stroke-width="2.2"/><path d="M82.2 28H94.2" stroke="#0c1424" stroke-width="1.2"/><path d="M90.2 30H112.2" stroke="#0c1424" stroke-width="2.2"/><path d="M82.2 34H102.2" stroke="#0c1424" stroke-width="1.2"/><path d="M87.2 38H107.2" stroke="#0c1424" stroke-width="1.2"/><path d="M112.2 38H123.0" stroke="#0c1424" stroke-width="1.2"/><path d="M82.2 41H92.2" stroke="#0c1424" stroke-width="1.2"/></svg>
<div style="left:1351px;top:207px;width:1px;height:64px;background:rgba(0,0,0,0.35)"></div>
<div style="left:1474px;top:207px;width:83px;height:20px;background:#ffa529"></div>
<div style="left:1474px;top:207px;width:83px;height:19px;overflow:hidden"><div class="t" style="left:4px;top:3px;font-size:13px;color:#2a2a2a">keys A</div></div>
<div style="left:1474px;top:227px;width:83px;height:43px;background-color:#b7a078;background-image:repeating-linear-gradient(90deg,rgba(0,0,0,0.1) 0 1px,transparent 1px 10.270px);background-size:calc(100% + 10.270px) 100%;background-position:-9.77px 0;background-repeat:no-repeat"></div>
<div style="left:1474px;top:226px;width:83px;height:1px;background:rgba(0,0,0,0.15)"></div>
<svg style="left:1474.0px;top:227px" width="83.0" height="44"><path d="M1 24H31 M1 27H31 M1 30H31" stroke="#1e1a12" stroke-width="1.5" fill="none"/></svg>
<div style="left:1474px;top:207px;width:1px;height:64px;background:rgba(0,0,0,0.35)"></div>
<div style="left:612px;top:273px;width:123px;height:20px;background:#8cc5ff"></div>
<div style="left:612px;top:273px;width:123px;height:19px;overflow:hidden"><div class="t" style="left:4px;top:3px;font-size:13px;color:#2a2a2a">strings B</div></div>
<div style="left:612px;top:293px;width:123px;height:43px;background-color:#6db0f1;background-image:repeating-linear-gradient(90deg,rgba(0,0,0,0.1) 0 1px,transparent 1px 10.270px);background-size:calc(100% + 10.270px) 100%;background-position:-0.18px 0;background-repeat:no-repeat"></div>
<div style="left:612px;top:292px;width:123px;height:1px;background:rgba(0,0,0,0.15)"></div>
<svg style="left:612.0px;top:293px" width="123.0" height="44"><path d="M16.4 7H37.0 M16.4 12H37.0 M16.4 15H37.0 M16.4 19H37.0 M57.5 7H78.1 M57.5 12H78.1 M57.5 15H78.1 M57.5 19H78.1 M98.6 7H119.1 M98.6 12H119.1 M98.6 15H119.1 M98.6 19H119.1" stroke="#4a7fb8" stroke-width="1.2" fill="none"/></svg>
<div style="left:612px;top:273px;width:1px;height:64px;background:rgba(0,0,0,0.35)"></div>
<div style="left:735px;top:273px;width:82px;height:20px;background:#ffa529"></div>
<div style="left:735px;top:273px;width:82px;height:19px;overflow:hidden"><div class="t" style="left:4px;top:3px;font-size:13px;color:#2a2a2a">keys A</div></div>
<div style="left:735px;top:293px;width:82px;height:43px;background-color:#b7a078;background-image:repeating-linear-gradient(90deg,rgba(0,0,0,0.1) 0 1px,transparent 1px 10.270px);background-size:calc(100% + 10.270px) 100%;background-position:-10.21px 0;background-repeat:no-repeat"></div>
<div style="left:735px;top:292px;width:82px;height:1px;background:rgba(0,0,0,0.15)"></div>
<svg style="left:735.0px;top:293px" width="82.0" height="44"><path d="M4.0 31H29.0 M4.0 34.5H29.0 M4.0 37H15.0 M15.0 39.5H29.0 M30.0 28H35.0 M30.0 32H35.0 M30.0 37H35.0 M45.1 31H70.1 M45.1 34.5H70.1 M45.1 37H56.1 M56.1 39.5H70.1 M71.1 28H76.1 M71.1 32H76.1 M71.1 37H76.1" stroke="#6a5a40" stroke-width="1.2" fill="none"/></svg>
<div style="left:735px;top:273px;width:1px;height:64px;background:rgba(0,0,0,0.35)"></div>
<div style="left:817px;top:273px;width:82px;height:20px;background:#ffa529"></div>
<div style="left:817px;top:273px;width:82px;height:19px;overflow:hidden"><div class="t" style="left:4px;top:3px;font-size:13px;color:#2a2a2a">keys A</div></div>
<div style="left:817px;top:293px;width:82px;height:43px;background-color:#b7a078;background-image:repeating-linear-gradient(90deg,rgba(0,0,0,0.1) 0 1px,transparent 1px 10.270px);background-size:calc(100% + 10.270px) 100%;background-position:-10.05px 0;background-repeat:no-repeat"></div>
<div style="left:817px;top:292px;width:82px;height:1px;background:rgba(0,0,0,0.15)"></div>
<svg style="left:817.0px;top:293px" width="82.0" height="44"><path d="M4.0 31H29.0 M4.0 34.5H29.0 M4.0 37H15.0 M15.0 39.5H29.0 M30.0 28H35.0 M30.0 32H35.0 M30.0 37H35.0 M45.1 31H70.1 M45.1 34.5H70.1 M45.1 37H56.1 M56.1 39.5H70.1 M71.1 28H76.1 M71.1 32H76.1 M71.1 37H76.1" stroke="#6a5a40" stroke-width="1.2" fill="none"/></svg>
<div style="left:817px;top:273px;width:1px;height:64px;background:rgba(0,0,0,0.35)"></div>
<div style="left:982px;top:273px;width:82px;height:20px;background:#ffa529"></div>
<div style="left:982px;top:273px;width:82px;height:19px;overflow:hidden"><div class="t" style="left:4px;top:3px;font-size:13px;color:#2a2a2a">keys A</div></div>
<div style="left:982px;top:293px;width:82px;height:43px;background-color:#b7a078;background-image:repeating-linear-gradient(90deg,rgba(0,0,0,0.1) 0 1px,transparent 1px 10.270px);background-size:calc(100% + 10.270px) 100%;background-position:-0.46px 0;background-repeat:no-repeat"></div>
<div style="left:982px;top:292px;width:82px;height:1px;background:rgba(0,0,0,0.15)"></div>
<svg style="left:982.0px;top:293px" width="82.0" height="44"><path d="M4.0 31H29.0 M4.0 34.5H29.0 M4.0 37H15.0 M15.0 39.5H29.0 M30.0 28H35.0 M30.0 32H35.0 M30.0 37H35.0 M45.1 31H70.1 M45.1 34.5H70.1 M45.1 37H56.1 M56.1 39.5H70.1 M71.1 28H76.1 M71.1 32H76.1 M71.1 37H76.1" stroke="#6a5a40" stroke-width="1.2" fill="none"/></svg>
<div style="left:982px;top:273px;width:1px;height:64px;background:rgba(0,0,0,0.35)"></div>
<div style="left:1064px;top:273px;width:123px;height:20px;background:#8cc5ff"></div>
<div style="left:1064px;top:273px;width:123px;height:19px;overflow:hidden"><div class="t" style="left:4px;top:3px;font-size:13px;color:#2a2a2a">strings B</div></div>
<div style="left:1064px;top:293px;width:123px;height:43px;background-color:#6db0f1;background-image:repeating-linear-gradient(90deg,rgba(0,0,0,0.1) 0 1px,transparent 1px 10.270px);background-size:calc(100% + 10.270px) 100%;background-position:-0.30px 0;background-repeat:no-repeat"></div>
<div style="left:1064px;top:292px;width:123px;height:1px;background:rgba(0,0,0,0.15)"></div>
<svg style="left:1064.0px;top:293px" width="123.0" height="44"><path d="M16.4 7H37.0 M16.4 12H37.0 M16.4 15H37.0 M16.4 19H37.0 M57.5 7H78.1 M57.5 12H78.1 M57.5 15H78.1 M57.5 19H78.1 M98.6 7H119.1 M98.6 12H119.1 M98.6 15H119.1 M98.6 19H119.1" stroke="#4a7fb8" stroke-width="1.2" fill="none"/></svg>
<div style="left:1064px;top:273px;width:1px;height:64px;background:rgba(0,0,0,0.35)"></div>
<div style="left:1351px;top:273px;width:123px;height:20px;background:#8cc5ff"></div>
<div style="left:1351px;top:273px;width:123px;height:19px;overflow:hidden"><div class="t" style="left:4px;top:3px;font-size:13px;color:#2a2a2a">strings B</div></div>
<div style="left:1351px;top:293px;width:123px;height:43px;background-color:#6db0f1;background-image:repeating-linear-gradient(90deg,rgba(0,0,0,0.1) 0 1px,transparent 1px 10.270px);background-size:calc(100% + 10.270px) 100%;background-position:-10.01px 0;background-repeat:no-repeat"></div>
<div style="left:1351px;top:292px;width:123px;height:1px;background:rgba(0,0,0,0.15)"></div>
<svg style="left:1351.0px;top:293px" width="123.0" height="44"><path d="M16.4 7H37.0 M16.4 12H37.0 M16.4 15H37.0 M16.4 19H37.0 M57.5 7H78.1 M57.5 12H78.1 M57.5 15H78.1 M57.5 19H78.1 M98.6 7H119.1 M98.6 12H119.1 M98.6 15H119.1 M98.6 19H119.1" stroke="#4a7fb8" stroke-width="1.2" fill="none"/></svg>
<div style="left:1351px;top:273px;width:1px;height:64px;background:rgba(0,0,0,0.35)"></div>
<div style="left:899px;top:273px;width:10px;height:19px;background:repeating-linear-gradient(135deg,#2a2a2a 0 3px,#555 3px 6px)"></div>
<div style="left:899px;top:292px;width:10px;height:45px;background:#b7a078"></div>
<div style="left:1187px;top:273px;width:10px;height:19px;background:repeating-linear-gradient(135deg,#2a2a2a 0 3px,#555 3px 6px)"></div>
<div style="left:1187px;top:292px;width:10px;height:45px;background:#6db0f1"></div>
<div style="left:1474px;top:273px;width:10px;height:19px;background:repeating-linear-gradient(135deg,#2a2a2a 0 3px,#555 3px 6px)"></div>
<div style="left:1474px;top:292px;width:10px;height:45px;background:#6db0f1"></div>
<div style="left:1064px;top:339px;width:123px;height:20px;background:#8cc5ff"></div>
<div style="left:1064px;top:339px;width:123px;height:19px;overflow:hidden"><div class="t" style="left:4px;top:3px;font-size:13px;color:#2a2a2a">keys B</div></div>
<div style="left:1064px;top:359px;width:123px;height:43px;background-color:#6db0f1;background-image:repeating-linear-gradient(90deg,rgba(0,0,0,0.1) 0 1px,transparent 1px 10.270px);background-size:calc(100% + 10.270px) 100%;background-position:-0.30px 0;background-repeat:no-repeat"></div>
<div style="left:1064px;top:358px;width:123px;height:1px;background:rgba(0,0,0,0.15)"></div>
<svg style="left:1064.0px;top:359px" width="123.0" height="44"><path d="M20.0 14H35.0" stroke="#0c1424" stroke-width="1.2"/><path d="M10.0 17H26.0" stroke="#0c1424" stroke-width="1.2"/><path d="M0.0 21H41.0" stroke="#0c1424" stroke-width="1.3"/><path d="M0.0 24H8.0" stroke="#0c1424" stroke-width="1.2"/><path d="M20.0 24H32.0" stroke="#0c1424" stroke-width="1.2"/><path d="M28.0 28H41.0" stroke="#0c1424" stroke-width="2.2"/><path d="M0.0 28H12.0" stroke="#0c1424" stroke-width="1.2"/><path d="M8.0 30H30.0" stroke="#0c1424" stroke-width="2.2"/><path d="M0.0 34H20.0" stroke="#0c1424" stroke-width="1.2"/><path d="M5.0 38H25.0" stroke="#0c1424" stroke-width="1.2"/><path d="M30.0 38H41.0" stroke="#0c1424" stroke-width="1.2"/><path d="M0.0 41H10.0" stroke="#0c1424" stroke-width="1.2"/><path d="M61.1 14H76.1" stroke="#0c1424" stroke-width="1.2"/><path d="M51.1 17H67.1" stroke="#0c1424" stroke-width="1.2"/><path d="M41.1 21H82.1" stroke="#0c1424" stroke-width="1.3"/><path d="M41.1 24H49.1" stroke="#0c1424" stroke-width="1.2"/><path d="M61.1 24H73.1" stroke="#0c1424" stroke-width="1.2"/><path d="M69.1 28H82.1" stroke="#0c1424" stroke-width="2.2"/><path d="M41.1 28H53.1" stroke="#0c1424" stroke-width="1.2"/><path d="M49.1 30H71.1" stroke="#0c1424" stroke-width="2.2"/><path d="M41.1 34H61.1" stroke="#0c1424" stroke-width="1.2"/><path d="M46.1 38H66.1" stroke="#0c1424" stroke-width="1.2"/><path d="M71.1 38H82.1" stroke="#0c1424" stroke-width="1.2"/><path d="M41.1 41H51.1" stroke="#0c1424" stroke-width="1.2"/><path d="M102.2 14H117.2" stroke="#0c1424" stroke-width="1.2"/><path d="M92.2 17H108.2" stroke="#0c1424" stroke-width="1.2"/><path d="M82.2 21H123.0" stroke="#0c1424" stroke-width="1.3"/><path d="M82.2 24H90.2" stroke="#0c1424" stroke-width="1.2"/><path d="M102.2 24H114.2" stroke="#0c1424" stroke-width="1.2"/><path d="M110.2 28H123.0" stroke="#0c1424" stroke-width="2.2"/><path d="M82.2 28H94.2" stroke="#0c1424" stroke-width="1.2"/><path d="M90.2 30H112.2" stroke="#0c1424" stroke-width="2.2"/><path d="M82.2 34H102.2" stroke="#0c1424" stroke-width="1.2"/><path d="M87.2 38H107.2" stroke="#0c1424" stroke-width="1.2"/><path d="M112.2 38H123.0" stroke="#0c1424" stroke-width="1.2"/><path d="M82.2 41H92.2" stroke="#0c1424" stroke-width="1.2"/></svg>
<div style="left:1064px;top:339px;width:1px;height:64px;background:rgba(0,0,0,0.35)"></div>
<div style="left:1187px;top:339px;width:164px;height:19px;background:repeating-linear-gradient(135deg,#2a2a2a 0 3px,#555 3px 6px)"></div>
<div style="left:1187px;top:359px;width:164px;height:43px;background-color:#6db0f1;background-image:repeating-linear-gradient(90deg,rgba(0,0,0,0.1) 0 1px,transparent 1px 10.270px);background-size:calc(100% + 10.270px) 100%;background-position:-0.06px 0;background-repeat:no-repeat"></div>
<div style="left:1187px;top:358px;width:164px;height:1px;background:rgba(0,0,0,0.15)"></div>
<div style="left:1187px;top:339px;width:1px;height:64px;background:rgba(0,0,0,0.35)"></div>
<div style="left:1351px;top:339px;width:123px;height:20px;background:#8cc5ff"></div>
<div style="left:1351px;top:339px;width:123px;height:19px;overflow:hidden"><div class="t" style="left:4px;top:3px;font-size:13px;color:#2a2a2a">keys B</div></div>
<div style="left:1351px;top:359px;width:123px;height:43px;background-color:#6db0f1;background-image:repeating-linear-gradient(90deg,rgba(0,0,0,0.1) 0 1px,transparent 1px 10.270px);background-size:calc(100% + 10.270px) 100%;background-position:-10.01px 0;background-repeat:no-repeat"></div>
<div style="left:1351px;top:358px;width:123px;height:1px;background:rgba(0,0,0,0.15)"></div>
<svg style="left:1351.0px;top:359px" width="123.0" height="44"><path d="M20.0 14H35.0" stroke="#0c1424" stroke-width="1.2"/><path d="M10.0 17H26.0" stroke="#0c1424" stroke-width="1.2"/><path d="M0.0 21H41.0" stroke="#0c1424" stroke-width="1.3"/><path d="M0.0 24H8.0" stroke="#0c1424" stroke-width="1.2"/><path d="M20.0 24H32.0" stroke="#0c1424" stroke-width="1.2"/><path d="M28.0 28H41.0" stroke="#0c1424" stroke-width="2.2"/><path d="M0.0 28H12.0" stroke="#0c1424" stroke-width="1.2"/><path d="M8.0 30H30.0" stroke="#0c1424" stroke-width="2.2"/><path d="M0.0 34H20.0" stroke="#0c1424" stroke-width="1.2"/><path d="M5.0 38H25.0" stroke="#0c1424" stroke-width="1.2"/><path d="M30.0 38H41.0" stroke="#0c1424" stroke-width="1.2"/><path d="M0.0 41H10.0" stroke="#0c1424" stroke-width="1.2"/><path d="M61.1 14H76.1" stroke="#0c1424" stroke-width="1.2"/><path d="M51.1 17H67.1" stroke="#0c1424" stroke-width="1.2"/><path d="M41.1 21H82.1" stroke="#0c1424" stroke-width="1.3"/><path d="M41.1 24H49.1" stroke="#0c1424" stroke-width="1.2"/><path d="M61.1 24H73.1" stroke="#0c1424" stroke-width="1.2"/><path d="M69.1 28H82.1" stroke="#0c1424" stroke-width="2.2"/><path d="M41.1 28H53.1" stroke="#0c1424" stroke-width="1.2"/><path d="M49.1 30H71.1" stroke="#0c1424" stroke-width="2.2"/><path d="M41.1 34H61.1" stroke="#0c1424" stroke-width="1.2"/><path d="M46.1 38H66.1" stroke="#0c1424" stroke-width="1.2"/><path d="M71.1 38H82.1" stroke="#0c1424" stroke-width="1.2"/><path d="M41.1 41H51.1" stroke="#0c1424" stroke-width="1.2"/><path d="M102.2 14H117.2" stroke="#0c1424" stroke-width="1.2"/><path d="M92.2 17H108.2" stroke="#0c1424" stroke-width="1.2"/><path d="M82.2 21H123.0" stroke="#0c1424" stroke-width="1.3"/><path d="M82.2 24H90.2" stroke="#0c1424" stroke-width="1.2"/><path d="M102.2 24H114.2" stroke="#0c1424" stroke-width="1.2"/><path d="M110.2 28H123.0" stroke="#0c1424" stroke-width="2.2"/><path d="M82.2 28H94.2" stroke="#0c1424" stroke-width="1.2"/><path d="M90.2 30H112.2" stroke="#0c1424" stroke-width="2.2"/><path d="M82.2 34H102.2" stroke="#0c1424" stroke-width="1.2"/><path d="M87.2 38H107.2" stroke="#0c1424" stroke-width="1.2"/><path d="M112.2 38H123.0" stroke="#0c1424" stroke-width="1.2"/><path d="M82.2 41H92.2" stroke="#0c1424" stroke-width="1.2"/></svg>
<div style="left:1351px;top:339px;width:1px;height:64px;background:rgba(0,0,0,0.35)"></div>
<div style="left:1474px;top:339px;width:58px;height:19px;background:repeating-linear-gradient(135deg,#2a2a2a 0 3px,#555 3px 6px)"></div>
<div style="left:1474px;top:358px;width:58px;height:45px;background-color:#6db0f1;background-image:repeating-linear-gradient(90deg,rgba(0,0,0,0.1) 0 1px,transparent 1px 10.270px);background-size:calc(100% + 10.270px) 100%;background-position:-9.77px 0;background-repeat:no-repeat"></div>
<div style="left:448px;top:405px;width:164px;height:20px;background:#8aff6a"></div>
<div style="left:448px;top:405px;width:164px;height:19px;overflow:hidden"><div class="t" style="left:4px;top:3px;font-size:13px;color:#2a2a2a">trumpet A</div></div>
<div style="left:448px;top:425px;width:164px;height:43px;background-color:#6dd59c;background-image:repeating-linear-gradient(90deg,rgba(0,0,0,0.1) 0 1px,transparent 1px 10.270px);background-size:calc(100% + 10.270px) 100%;background-position:-0.50px 0;background-repeat:no-repeat"></div>
<div style="left:448px;top:424px;width:164px;height:1px;background:rgba(0,0,0,0.15)"></div>
<svg style="left:448.0px;top:425px" width="164.0" height="44"><path d="M10.3 6 q3 -2 5 1 H34.9 M51.3 6 q3 -2 5 1 H76.0 M92.4 6 q3 -2 5 1 H117.1 M133.5 6 q3 -2 5 1 H158.2" stroke="#2b5a3a" stroke-width="1.0" fill="none"/></svg>
<div style="left:448px;top:405px;width:1px;height:64px;background:rgba(0,0,0,0.35)"></div>
<div style="left:612px;top:405px;width:123px;height:20px;background:#8aff6a"></div>
<div style="left:612px;top:405px;width:123px;height:19px;overflow:hidden"><div class="t" style="left:4px;top:3px;font-size:13px;color:#2a2a2a">trumpet B</div></div>
<div style="left:612px;top:425px;width:123px;height:43px;background-color:#6dd59c;background-image:repeating-linear-gradient(90deg,rgba(0,0,0,0.1) 0 1px,transparent 1px 10.270px);background-size:calc(100% + 10.270px) 100%;background-position:-0.18px 0;background-repeat:no-repeat"></div>
<div style="left:612px;top:424px;width:123px;height:1px;background:rgba(0,0,0,0.15)"></div>
<svg style="left:612.0px;top:425px" width="123.0" height="44"><path d="M10.3 6 q3 -2 5 1 H34.9 M51.4 6 q3 -2 5 1 H76.0 M92.4 6 q3 -2 5 1 H117.1" stroke="#2b5a3a" stroke-width="1.0" fill="none"/></svg>
<div style="left:612px;top:405px;width:1px;height:64px;background:rgba(0,0,0,0.35)"></div>
<div style="left:735px;top:405px;width:82px;height:20px;background:#8aff6a"></div>
<div style="left:735px;top:405px;width:82px;height:19px;overflow:hidden"><div class="t" style="left:4px;top:3px;font-size:13px;color:#2a2a2a">trumpet A</div></div>
<div style="left:735px;top:425px;width:82px;height:43px;background-color:#6dd59c;background-image:repeating-linear-gradient(90deg,rgba(0,0,0,0.1) 0 1px,transparent 1px 10.270px);background-size:calc(100% + 10.270px) 100%;background-position:-10.21px 0;background-repeat:no-repeat"></div>
<div style="left:735px;top:424px;width:82px;height:1px;background:rgba(0,0,0,0.15)"></div>
<svg style="left:735.0px;top:425px" width="82.0" height="44"><path d="M10.3 6 q3 -2 5 1 H34.9 M51.4 6 q3 -2 5 1 H76.0" stroke="#2b5a3a" stroke-width="1.0" fill="none"/></svg>
<div style="left:735px;top:405px;width:1px;height:64px;background:rgba(0,0,0,0.35)"></div>
<div style="left:817px;top:405px;width:82px;height:20px;background:#8aff6a"></div>
<div style="left:817px;top:405px;width:82px;height:19px;overflow:hidden"><div class="t" style="left:4px;top:3px;font-size:13px;color:#2a2a2a">trumpet A</div></div>
<div style="left:817px;top:425px;width:82px;height:43px;background-color:#6dd59c;background-image:repeating-linear-gradient(90deg,rgba(0,0,0,0.1) 0 1px,transparent 1px 10.270px);background-size:calc(100% + 10.270px) 100%;background-position:-10.05px 0;background-repeat:no-repeat"></div>
<div style="left:817px;top:424px;width:82px;height:1px;background:rgba(0,0,0,0.15)"></div>
<svg style="left:817.0px;top:425px" width="82.0" height="44"><path d="M10.3 6 q3 -2 5 1 H34.9 M51.4 6 q3 -2 5 1 H76.0" stroke="#2b5a3a" stroke-width="1.0" fill="none"/></svg>
<div style="left:817px;top:405px;width:1px;height:64px;background:rgba(0,0,0,0.35)"></div>
<div style="left:1187px;top:405px;width:82px;height:20px;background:#8aff6a"></div>
<div style="left:1187px;top:405px;width:82px;height:19px;overflow:hidden"><div class="t" style="left:4px;top:3px;font-size:13px;color:#2a2a2a">trumpet A</div></div>
<div style="left:1187px;top:425px;width:82px;height:43px;background-color:#6dd59c;background-image:repeating-linear-gradient(90deg,rgba(0,0,0,0.1) 0 1px,transparent 1px 10.270px);background-size:calc(100% + 10.270px) 100%;background-position:-0.06px 0;background-repeat:no-repeat"></div>
<div style="left:1187px;top:424px;width:82px;height:1px;background:rgba(0,0,0,0.15)"></div>
<svg style="left:1187.0px;top:425px" width="82.0" height="44"><path d="M10.3 6 q3 -2 5 1 H34.9 M51.3 6 q3 -2 5 1 H76.0" stroke="#2b5a3a" stroke-width="1.0" fill="none"/></svg>
<div style="left:1187px;top:405px;width:1px;height:64px;background:rgba(0,0,0,0.35)"></div>
<div style="left:1269px;top:405px;width:82px;height:20px;background:#8aff6a"></div>
<div style="left:1269px;top:405px;width:82px;height:19px;overflow:hidden"><div class="t" style="left:4px;top:3px;font-size:13px;color:#2a2a2a">trumpet A</div></div>
<div style="left:1269px;top:425px;width:82px;height:43px;background-color:#6dd59c;background-image:repeating-linear-gradient(90deg,rgba(0,0,0,0.1) 0 1px,transparent 1px 10.270px);background-size:calc(100% + 10.270px) 100%;background-position:-10.17px 0;background-repeat:no-repeat"></div>
<div style="left:1269px;top:424px;width:82px;height:1px;background:rgba(0,0,0,0.15)"></div>
<svg style="left:1269.0px;top:425px" width="82.0" height="44"><path d="M10.3 6 q3 -2 5 1 H34.9 M51.3 6 q3 -2 5 1 H76.0" stroke="#2b5a3a" stroke-width="1.0" fill="none"/></svg>
<div style="left:1269px;top:405px;width:1px;height:64px;background:rgba(0,0,0,0.35)"></div>
<div style="left:1351px;top:405px;width:123px;height:20px;background:#8aff6a"></div>
<div style="left:1351px;top:405px;width:123px;height:19px;overflow:hidden"><div class="t" style="left:4px;top:3px;font-size:13px;color:#2a2a2a">trumpet B</div></div>
<div style="left:1351px;top:425px;width:123px;height:43px;background-color:#6dd59c;background-image:repeating-linear-gradient(90deg,rgba(0,0,0,0.1) 0 1px,transparent 1px 10.270px);background-size:calc(100% + 10.270px) 100%;background-position:-10.01px 0;background-repeat:no-repeat"></div>
<div style="left:1351px;top:424px;width:123px;height:1px;background:rgba(0,0,0,0.15)"></div>
<svg style="left:1351.0px;top:425px" width="123.0" height="44"><path d="M10.3 6 q3 -2 5 1 H34.9 M51.3 6 q3 -2 5 1 H76.0 M92.4 6 q3 -2 5 1 H117.1" stroke="#2b5a3a" stroke-width="1.0" fill="none"/></svg>
<div style="left:1351px;top:405px;width:1px;height:64px;background:rgba(0,0,0,0.35)"></div>
<div style="left:1474px;top:405px;width:83px;height:20px;background:#8aff6a"></div>
<div style="left:1474px;top:405px;width:83px;height:19px;overflow:hidden"><div class="t" style="left:4px;top:3px;font-size:13px;color:#2a2a2a">trumpet A</div></div>
<div style="left:1474px;top:425px;width:83px;height:43px;background-color:#6dd59c;background-image:repeating-linear-gradient(90deg,rgba(0,0,0,0.1) 0 1px,transparent 1px 10.270px);background-size:calc(100% + 10.270px) 100%;background-position:-9.77px 0;background-repeat:no-repeat"></div>
<div style="left:1474px;top:424px;width:83px;height:1px;background:rgba(0,0,0,0.15)"></div>
<svg style="left:1474.0px;top:425px" width="83.0" height="44"><path d="M10.3 6 q3 -2 5 1 H34.9 M51.3 6 q3 -2 5 1 H76.0" stroke="#2b5a3a" stroke-width="1.0" fill="none"/></svg>
<div style="left:1474px;top:405px;width:1px;height:64px;background:rgba(0,0,0,0.35)"></div>
<div style="left:715px;top:471px;width:20px;height:19px;background:#5effe6"></div>
<div style="left:715px;top:490px;width:20px;height:45px;background-color:#4fd4e8;background-image:repeating-linear-gradient(90deg,rgba(0,0,0,0.1) 0 1px,transparent 1px 10.270px);background-size:calc(100% + 10.270px) 100%;background-position:-0.48px 0;background-repeat:no-repeat"></div>
<div style="left:735px;top:471px;width:21px;height:19px;background:#5effe6"></div>
<div style="left:735px;top:490px;width:21px;height:45px;background-color:#4fd4e8;background-image:repeating-linear-gradient(90deg,rgba(0,0,0,0.1) 0 1px,transparent 1px 10.270px);background-size:calc(100% + 10.270px) 100%;background-position:-10.21px 0;background-repeat:no-repeat"></div>
<div style="left:756px;top:471px;width:7px;height:19px;background:repeating-linear-gradient(135deg,#2a2a2a 0 2px,#555 2px 4px)"></div>
<div style="left:735px;top:490px;width:28px;height:45px;background-color:#4fd4e8;background-image:repeating-linear-gradient(90deg,rgba(0,0,0,0.1) 0 1px,transparent 1px 10.270px);background-size:calc(100% + 10.270px) 100%;background-position:-10.21px 0;background-repeat:no-repeat"></div>
<div style="left:1064px;top:471px;width:20px;height:19px;background:#5effe6"></div>
<div style="left:1064px;top:490px;width:20px;height:45px;background-color:#4fd4e8;background-image:repeating-linear-gradient(90deg,rgba(0,0,0,0.1) 0 1px,transparent 1px 10.270px);background-size:calc(100% + 10.270px) 100%;background-position:-0.30px 0;background-repeat:no-repeat"></div>
<div style="left:1166px;top:471px;width:21px;height:19px;background:#5effe6"></div>
<div style="left:1166px;top:490px;width:21px;height:45px;background-color:#4fd4e8;background-image:repeating-linear-gradient(90deg,rgba(0,0,0,0.1) 0 1px,transparent 1px 10.270px);background-size:calc(100% + 10.270px) 100%;background-position:-9.87px 0;background-repeat:no-repeat"></div>
<div style="left:1187px;top:471px;width:20px;height:19px;background:#5effe6"></div>
<div style="left:1187px;top:490px;width:20px;height:45px;background-color:#4fd4e8;background-image:repeating-linear-gradient(90deg,rgba(0,0,0,0.1) 0 1px,transparent 1px 10.270px);background-size:calc(100% + 10.270px) 100%;background-position:-0.06px 0;background-repeat:no-repeat"></div>
<div style="left:1207px;top:471px;width:7px;height:19px;background:repeating-linear-gradient(135deg,#2a2a2a 0 2px,#555 2px 4px)"></div>
<div style="left:1187px;top:490px;width:27px;height:45px;background-color:#4fd4e8;background-image:repeating-linear-gradient(90deg,rgba(0,0,0,0.1) 0 1px,transparent 1px 10.270px);background-size:calc(100% + 10.270px) 100%;background-position:-0.06px 0;background-repeat:no-repeat"></div>
<div style="left:1351px;top:471px;width:21px;height:19px;background:#5effe6"></div>
<div style="left:1351px;top:490px;width:21px;height:45px;background-color:#4fd4e8;background-image:repeating-linear-gradient(90deg,rgba(0,0,0,0.1) 0 1px,transparent 1px 10.270px);background-size:calc(100% + 10.270px) 100%;background-position:-10.01px 0;background-repeat:no-repeat"></div>
<div style="left:1454px;top:471px;width:20px;height:19px;background:#5effe6"></div>
<div style="left:1454px;top:490px;width:20px;height:45px;background-color:#4fd4e8;background-image:repeating-linear-gradient(90deg,rgba(0,0,0,0.1) 0 1px,transparent 1px 10.270px);background-size:calc(100% + 10.270px) 100%;background-position:-0.04px 0;background-repeat:no-repeat"></div>
<div style="left:1474px;top:471px;width:21px;height:19px;background:#5effe6"></div>
<div style="left:1474px;top:490px;width:21px;height:45px;background-color:#4fd4e8;background-image:repeating-linear-gradient(90deg,rgba(0,0,0,0.1) 0 1px,transparent 1px 10.270px);background-size:calc(100% + 10.270px) 100%;background-position:-9.77px 0;background-repeat:no-repeat"></div>
<div style="left:1495px;top:471px;width:7px;height:19px;background:repeating-linear-gradient(135deg,#2a2a2a 0 2px,#555 2px 4px)"></div>
<div style="left:1474px;top:490px;width:28px;height:45px;background-color:#4fd4e8;background-image:repeating-linear-gradient(90deg,rgba(0,0,0,0.1) 0 1px,transparent 1px 10.270px);background-size:calc(100% + 10.270px) 100%;background-position:-9.77px 0;background-repeat:no-repeat"></div>
<div style="left:727px;top:493px;width:3px;height:11px;background:#111"></div>
<div style="left:1179px;top:493px;width:3px;height:11px;background:#111"></div>
<div style="left:1466px;top:493px;width:3px;height:11px;background:#111"></div>
<div style="left:448px;top:537px;width:1739px;height:64px;background-color:#4c4c4c;background-image:repeating-linear-gradient(90deg,rgba(0,0,0,0.15) 0 1px,transparent 1px 10.270px);background-size:calc(100% + 10.270px) 100%;background-position:-0.50px 0;background-repeat:no-repeat"></div>
<div style="left:448px;top:537px;width:1109px;height:40px;background-color:#393939;background-image:repeating-linear-gradient(90deg,rgba(0,0,0,0.15) 0 1px,transparent 1px 10.270px),linear-gradient(180deg,transparent 0 6px,#4c4c4c 6.0px 7.0px, transparent 7.0px 10.5px,#4c4c4c 10.5px 11.5px, transparent 11.5px 15.5px,#4c4c4c 15.5px 16.5px, transparent 16.5px 18.5px,#4c4c4c 18.5px 19.5px, transparent 19.5px 23.5px,#4c4c4c 23.5px 24.5px, transparent 24.5px 27.5px,#4c4c4c 27.5px 28.5px, transparent 28.5px 32.5px,#4c4c4c 32.5px 33.5px, transparent 33.5px 35.5px,#4c4c4c 35.5px 36.5px, transparent 36.5px 40.0px);background-size:calc(100% + 10.270px) 100%,100% 100%;background-repeat:no-repeat;background-position:-0.50px 0,0 0"></div>
<div style="left:448px;top:601px;width:1739px;height:2px;background:#2a2a2a"></div>
<div style="left:448px;top:603px;width:1739px;height:64px;background-color:#4c4c4c;background-image:repeating-linear-gradient(90deg,rgba(0,0,0,0.15) 0 1px,transparent 1px 10.270px);background-size:calc(100% + 10.270px) 100%;background-position:-0.50px 0;background-repeat:no-repeat"></div>
<div style="left:448px;top:667px;width:1739px;height:2px;background:#2a2a2a"></div>
<div style="left:448px;top:603px;width:1109px;height:20px;background:#f6f17e"></div>
<div style="left:448px;top:603px;width:1109px;height:19px;overflow:hidden"><div class="t" style="left:3px;top:3px;font-size:13px;color:#2a2a2a">drums</div></div>
<div style="left:448px;top:623px;width:1109px;height:43px;background-color:#f6f17e;background-image:repeating-linear-gradient(90deg,rgba(0,0,0,0.12) 0 1px,transparent 1px 10.270px);background-size:calc(100% + 10.270px) 100%;background-position:-0.50px 0;background-repeat:no-repeat"></div>
<div style="left:448px;top:622px;width:1109px;height:1px;background:rgba(0,0,0,0.18)"></div>
<div style="left:448px;top:634px;width:1109px;height:1px;background:rgba(0,0,0,0.75)"></div>
<div style="left:448px;top:655px;width:1109px;height:1px;background:rgba(0,0,0,0.75)"></div>
<div style="left:448px;top:603px;width:1px;height:64px;background:rgba(0,0,0,0.35)"></div>
<div style="left:448px;top:669px;width:1739px;height:64px;background-color:#4c4c4c;background-image:repeating-linear-gradient(90deg,rgba(0,0,0,0.15) 0 1px,transparent 1px 10.270px);background-size:calc(100% + 10.270px) 100%;background-position:-0.50px 0;background-repeat:no-repeat"></div>
<div style="left:448px;top:733px;width:1739px;height:2px;background:#2a2a2a"></div>
<div style="left:448px;top:669px;width:1109px;height:20px;background:#88ff68"></div>
<div style="left:448px;top:669px;width:1109px;height:19px;overflow:hidden"><div class="t" style="left:3px;top:3px;font-size:13px;color:#2a2a2a">bass</div></div>
<div style="left:448px;top:689px;width:1109px;height:43px;background-color:#88ff68;background-image:repeating-linear-gradient(90deg,rgba(0,0,0,0.12) 0 1px,transparent 1px 10.270px);background-size:calc(100% + 10.270px) 100%;background-position:-0.50px 0;background-repeat:no-repeat"></div>
<div style="left:448px;top:688px;width:1109px;height:1px;background:rgba(0,0,0,0.18)"></div>
<div style="left:448px;top:700px;width:1109px;height:1px;background:rgba(0,0,0,0.75)"></div>
<div style="left:448px;top:721px;width:1109px;height:1px;background:rgba(0,0,0,0.75)"></div>
<div style="left:448px;top:669px;width:1px;height:64px;background:rgba(0,0,0,0.35)"></div>
<div style="left:448px;top:735px;width:1739px;height:64px;background-color:#4c4c4c;background-image:repeating-linear-gradient(90deg,rgba(0,0,0,0.15) 0 1px,transparent 1px 10.270px);background-size:calc(100% + 10.270px) 100%;background-position:-0.50px 0;background-repeat:no-repeat"></div>
<div style="left:448px;top:799px;width:1739px;height:2px;background:#2a2a2a"></div>
<div style="left:448px;top:735px;width:1109px;height:20px;background:#f6f17e"></div>
<div style="left:448px;top:735px;width:1109px;height:19px;overflow:hidden"><div class="t" style="left:3px;top:3px;font-size:13px;color:#2a2a2a">Shaker 87 bpm [2025-05-16 121432]</div></div>
<div style="left:448px;top:755px;width:1109px;height:43px;background-color:#f6f17e;background-image:repeating-linear-gradient(90deg,rgba(0,0,0,0.12) 0 1px,transparent 1px 10.270px);background-size:calc(100% + 10.270px) 100%;background-position:-0.50px 0;background-repeat:no-repeat"></div>
<div style="left:448px;top:754px;width:1109px;height:1px;background:rgba(0,0,0,0.18)"></div>
<div style="left:448px;top:766px;width:1109px;height:1px;background:rgba(0,0,0,0.75)"></div>
<div style="left:448px;top:787px;width:1109px;height:1px;background:rgba(0,0,0,0.75)"></div>
<div style="left:448px;top:735px;width:1px;height:64px;background:rgba(0,0,0,0.35)"></div>
<div style="left:448px;top:801px;width:1739px;height:64px;background-color:#4c4c4c;background-image:repeating-linear-gradient(90deg,rgba(0,0,0,0.15) 0 1px,transparent 1px 10.270px);background-size:calc(100% + 10.270px) 100%;background-position:-0.50px 0;background-repeat:no-repeat"></div>
<div style="left:448px;top:865px;width:1739px;height:2px;background:#2a2a2a"></div>
<div style="left:448px;top:801px;width:1109px;height:20px;background:#26ffa9"></div>
<div style="left:448px;top:801px;width:1109px;height:19px;overflow:hidden"><div class="t" style="left:3px;top:3px;font-size:13px;color:#2a2a2a">keys</div></div>
<div style="left:448px;top:821px;width:1109px;height:43px;background-color:#26ffa9;background-image:repeating-linear-gradient(90deg,rgba(0,0,0,0.12) 0 1px,transparent 1px 10.270px);background-size:calc(100% + 10.270px) 100%;background-position:-0.50px 0;background-repeat:no-repeat"></div>
<div style="left:448px;top:820px;width:1109px;height:1px;background:rgba(0,0,0,0.18)"></div>
<div style="left:448px;top:832px;width:1109px;height:1px;background:rgba(0,0,0,0.75)"></div>
<div style="left:448px;top:853px;width:1109px;height:1px;background:rgba(0,0,0,0.75)"></div>
<div style="left:448px;top:801px;width:1px;height:64px;background:rgba(0,0,0,0.35)"></div>
<div style="left:448px;top:867px;width:1739px;height:64px;background-color:#4c4c4c;background-image:repeating-linear-gradient(90deg,rgba(0,0,0,0.15) 0 1px,transparent 1px 10.270px);background-size:calc(100% + 10.270px) 100%;background-position:-0.50px 0;background-repeat:no-repeat"></div>
<div style="left:448px;top:931px;width:1739px;height:2px;background:#2a2a2a"></div>
<div style="left:448px;top:867px;width:1109px;height:20px;background:#c0fa00"></div>
<div style="left:448px;top:867px;width:1109px;height:19px;overflow:hidden"><div class="t" style="left:3px;top:3px;font-size:13px;color:#2a2a2a">strings</div></div>
<div style="left:448px;top:887px;width:1109px;height:43px;background-color:#c0fa00;background-image:repeating-linear-gradient(90deg,rgba(0,0,0,0.12) 0 1px,transparent 1px 10.270px);background-size:calc(100% + 10.270px) 100%;background-position:-0.50px 0;background-repeat:no-repeat"></div>
<div style="left:448px;top:886px;width:1109px;height:1px;background:rgba(0,0,0,0.18)"></div>
<div style="left:448px;top:898px;width:1109px;height:1px;background:rgba(0,0,0,0.75)"></div>
<div style="left:448px;top:919px;width:1109px;height:1px;background:rgba(0,0,0,0.75)"></div>
<div style="left:448px;top:867px;width:1px;height:64px;background:rgba(0,0,0,0.35)"></div>
<div style="left:448px;top:933px;width:1739px;height:64px;background-color:#656565;background-image:repeating-linear-gradient(90deg,rgba(0,0,0,0.15) 0 1px,transparent 1px 10.270px);background-size:calc(100% + 10.270px) 100%;background-position:-0.50px 0;background-repeat:no-repeat"></div>
<div style="left:448px;top:997px;width:1739px;height:2px;background:#2a2a2a"></div>
<div style="left:448px;top:933px;width:1109px;height:20px;background:#f6f17e"></div>
<div style="left:448px;top:933px;width:1109px;height:19px;overflow:hidden"><div class="t" style="left:3px;top:3px;font-size:13px;color:#2a2a2a">arpeggio</div></div>
<div style="left:448px;top:953px;width:1109px;height:43px;background-color:#f6f17e;background-image:repeating-linear-gradient(90deg,rgba(0,0,0,0.12) 0 1px,transparent 1px 10.270px);background-size:calc(100% + 10.270px) 100%;background-position:-0.50px 0;background-repeat:no-repeat"></div>
<div style="left:448px;top:952px;width:1109px;height:1px;background:rgba(0,0,0,0.18)"></div>
<div style="left:448px;top:964px;width:1109px;height:1px;background:rgba(0,0,0,0.75)"></div>
<div style="left:448px;top:985px;width:1109px;height:1px;background:rgba(0,0,0,0.75)"></div>
<div style="left:448px;top:933px;width:1px;height:64px;background:rgba(0,0,0,0.35)"></div>
<div style="left:448px;top:999px;width:1739px;height:64px;background-color:#4c4c4c;background-image:repeating-linear-gradient(90deg,rgba(0,0,0,0.15) 0 1px,transparent 1px 10.270px);background-size:calc(100% + 10.270px) 100%;background-position:-0.50px 0;background-repeat:no-repeat"></div>
<div style="left:448px;top:1063px;width:1739px;height:2px;background:#2a2a2a"></div>
<div style="left:448px;top:999px;width:1109px;height:20px;background:#8cc6ff"></div>
<div style="left:448px;top:999px;width:1109px;height:19px;overflow:hidden"><div class="t" style="left:3px;top:3px;font-size:13px;color:#2a2a2a">trumpet</div></div>
<div style="left:448px;top:1019px;width:1109px;height:43px;background-color:#8cc6ff;background-image:repeating-linear-gradient(90deg,rgba(0,0,0,0.12) 0 1px,transparent 1px 10.270px);background-size:calc(100% + 10.270px) 100%;background-position:-0.50px 0;background-repeat:no-repeat"></div>
<div style="left:448px;top:1018px;width:1109px;height:1px;background:rgba(0,0,0,0.18)"></div>
<div style="left:448px;top:1030px;width:1109px;height:1px;background:rgba(0,0,0,0.75)"></div>
<div style="left:448px;top:1051px;width:1109px;height:1px;background:rgba(0,0,0,0.75)"></div>
<div style="left:448px;top:999px;width:1px;height:64px;background:rgba(0,0,0,0.35)"></div>
<div style="left:448px;top:1065px;width:1739px;height:64px;background-color:#4c4c4c;background-image:repeating-linear-gradient(90deg,rgba(0,0,0,0.15) 0 1px,transparent 1px 10.270px);background-size:calc(100% + 10.270px) 100%;background-position:-0.50px 0;background-repeat:no-repeat"></div>
<div style="left:448px;top:1129px;width:1739px;height:2px;background:#2a2a2a"></div>
<div style="left:448px;top:1065px;width:1109px;height:20px;background:#93a8ff"></div>
<div style="left:448px;top:1065px;width:1109px;height:19px;overflow:hidden"><div class="t" style="left:3px;top:3px;font-size:13px;color:#2a2a2a">Audio 2 [2025-05-16 122259]</div></div>
<div style="left:448px;top:1085px;width:1109px;height:43px;background-color:#93a8ff;background-image:repeating-linear-gradient(90deg,rgba(0,0,0,0.12) 0 1px,transparent 1px 10.270px);background-size:calc(100% + 10.270px) 100%;background-position:-0.50px 0;background-repeat:no-repeat"></div>
<div style="left:448px;top:1084px;width:1109px;height:1px;background:rgba(0,0,0,0.18)"></div>
<div style="left:448px;top:1096px;width:1109px;height:1px;background:rgba(0,0,0,0.75)"></div>
<div style="left:448px;top:1117px;width:1109px;height:1px;background:rgba(0,0,0,0.75)"></div>
<div style="left:448px;top:1065px;width:1px;height:64px;background:rgba(0,0,0,0.35)"></div>
<div style="left:448px;top:1131px;width:1739px;height:64px;background-color:#4c4c4c;background-image:repeating-linear-gradient(90deg,rgba(0,0,0,0.15) 0 1px,transparent 1px 10.270px);background-size:calc(100% + 10.270px) 100%;background-position:-0.50px 0;background-repeat:no-repeat"></div>
<div style="left:448px;top:1195px;width:1739px;height:2px;background:#2a2a2a"></div>
<div style="left:448px;top:1131px;width:1109px;height:20px;background:#ffa52b"></div>
<div style="left:448px;top:1131px;width:1109px;height:19px;overflow:hidden"><div class="t" style="left:3px;top:3px;font-size:13px;color:#2a2a2a">110_Cmaj7_Intro_03_SP [2025-05-16 121237]</div></div>
<div style="left:448px;top:1151px;width:1109px;height:43px;background-color:#ffa52b;background-image:repeating-linear-gradient(90deg,rgba(0,0,0,0.12) 0 1px,transparent 1px 10.270px);background-size:calc(100% + 10.270px) 100%;background-position:-0.50px 0;background-repeat:no-repeat"></div>
<div style="left:448px;top:1150px;width:1109px;height:1px;background:rgba(0,0,0,0.18)"></div>
<div style="left:448px;top:1162px;width:1109px;height:1px;background:rgba(0,0,0,0.75)"></div>
<div style="left:448px;top:1183px;width:1109px;height:1px;background:rgba(0,0,0,0.75)"></div>
<div style="left:448px;top:1131px;width:1px;height:64px;background:rgba(0,0,0,0.35)"></div>
<svg style="left:448px;top:603px" width="1109" height="64"><path d="M0 28.6 2 29.4 2 29.2 4 27.6 4 28.8 6 29.3 6 28.8 8 28.4 8 29.2 10 27.8 10 27.9 12 29.3 12 29.1 14 28.1 14 27.8 16 28.1 16 28.8 18 29.6 18 29.5 20 28.7 20 28.5 22 29.0 22 29.3 24 28.6 24 28.0 26 28.8 26 29.1 28 28.5 28 28.8 30 28.9 30 26.7 32 28.3 32 28.8 34 29.2 34 27.3 36 28.8 36 28.6 38 28.8 38 28.6 40 28.9 40 26.9 42 28.4 42 28.8 44 28.9 44 27.8 46 28.6 46 29.0 48 29.1 48 28.5 50 28.8 50 27.9 52 28.4 52 28.7 54 29.4 54 27.9 56 28.4 56 28.9 58 29.3 58 29.3 60 29.0 60 29.0 62 27.2 62 28.6 64 29.1 64 28.8 66 27.8 66 28.7 68 28.6 68 28.7 70 28.8 70 29.6 72 27.8 72 27.2 74 28.8 74 28.2 76 28.3 76 28.2 78 29.3 78 28.6 80 28.6 80 29.2 82 27.7 82 27.9 84 28.0 84 29.1 86 27.1 86 28.6 88 28.7 88 29.3 90 28.8 90 28.6 92 28.9 92 27.5 94 27.5 94 28.3 96 27.8 96 27.8 98 28.5 98 28.5 100 29.0 100 28.7 102 28.3 102 27.7 104 28.0 104 29.1 106 28.9 106 27.6 108 28.2 108 29.5 110 28.8 110 29.6 112 29.5 112 27.8 114 28.7 114 29.0 116 29.2 116 27.1 118 27.4 118 28.3 120 28.8 120 28.6 122 28.6 122 27.2 124 27.6 124 29.1 126 28.9 126 28.8 128 27.9 128 28.1 130 28.5 130 29.2 132 28.5 132 28.9 134 27.9 134 28.3 136 28.5 136 28.4 138 27.2 138 28.3 140 29.2 140 28.6 142 29.1 142 28.8 144 26.5 144 27.8 146 29.2 146 28.8 148 26.9 148 28.8 150 28.8 150 29.0 152 29.2 152 28.7 154 26.6 154 28.8 156 28.4 156 29.1 158 28.2 158 28.8 160 28.7 160 29.5 162 29.2 162 28.4 164 28.6 L164 33.0 162 33.2 162 32.4 160 32.1 160 32.9 158 32.8 158 33.4 156 32.5 156 33.2 154 32.8 154 35.0 152 32.9 152 32.4 150 32.6 150 32.8 148 32.8 148 34.7 146 32.8 146 32.4 144 33.8 144 35.1 142 32.8 142 32.5 140 33.0 140 32.4 138 33.3 138 34.4 136 33.2 136 33.1 134 33.3 134 33.7 132 32.7 132 33.1 130 32.4 130 33.1 128 33.5 128 33.7 126 32.8 126 32.7 124 32.5 124 34.0 122 34.4 122 33.0 120 33.0 120 32.8 118 33.3 118 34.2 116 34.5 116 32.4 114 32.6 114 32.9 112 33.8 112 32.1 110 32.0 110 32.8 108 32.1 108 33.4 106 34.0 106 32.7 104 32.5 104 33.6 102 33.9 102 33.3 100 32.9 100 32.6 98 33.1 98 33.1 96 33.8 96 33.8 94 33.3 94 34.1 92 34.1 92 32.7 90 33.0 90 32.8 88 32.3 88 32.9 86 33.0 86 34.5 84 32.5 84 33.6 82 33.7 82 33.9 80 32.4 80 33.0 78 33.0 78 32.3 76 33.4 76 33.3 74 33.4 74 32.8 72 34.4 72 33.8 70 32.0 70 32.8 68 32.9 68 33.0 66 32.9 66 33.8 64 32.8 64 32.5 62 33.0 62 34.4 60 32.6 60 32.6 58 32.3 58 32.3 56 32.7 56 33.2 54 33.7 54 32.2 52 32.9 52 33.2 50 33.7 50 32.8 48 33.1 48 32.5 46 32.6 46 33.0 44 33.8 44 32.7 42 32.8 42 33.2 40 34.7 40 32.7 38 33.0 38 32.8 36 33.0 36 32.8 34 34.3 34 32.4 32 32.8 32 33.3 30 34.9 30 32.7 28 32.8 28 33.1 26 32.5 26 32.8 24 33.6 24 33.0 22 32.3 22 32.6 20 33.1 20 32.9 18 32.1 18 32.0 16 32.8 16 33.5 14 33.8 14 33.5 12 32.5 12 32.3 10 33.7 10 33.8 8 32.4 8 33.2 6 32.8 6 32.3 4 32.8 4 34.0 2 32.4 2 32.2 0 33.0Z M164 24.1 165 26.3 166 26.7 167 27.8 168 25.0 169 26.7 170 26.8 171 27.8 172 28.6 173 27.7 174 25.7 175 27.0 176 27.5 177 28.4 178 25.1 179 26.2 180 26.8 181 28.6 182 27.5 183 27.7 184 26.8 185 26.5 186 27.6 187 27.6 188 27.9 189 26.6 190 27.4 191 28.4 192 28.1 193 28.1 194 28.0 195 25.7 196 26.9 197 27.8 198 27.9 199 26.3 200 28.0 201 27.9 202 28.2 203 28.4 204 28.5 205 24.7 206 25.2 207 26.6 208 28.4 209 26.4 210 27.7 211 28.3 212 28.1 213 28.7 214 28.1 215 25.0 216 26.1 217 28.1 218 28.5 219 26.5 220 25.5 221 27.0 222 28.2 223 28.3 224 28.3 225 28.3 226 26.7 227 27.4 228 27.6 229 28.3 230 26.1 231 27.2 232 27.5 233 27.6 234 27.3 235 28.3 236 25.4 237 27.4 238 27.9 239 28.0 240 26.2 241 27.3 242 28.6 243 28.7 244 27.4 245 27.5 246 28.0 247 26.9 248 26.9 249 28.0 250 26.0 251 26.3 252 28.0 253 28.4 254 27.6 255 27.7 256 24.4 257 26.4 258 26.8 259 27.5 260 26.3 261 26.7 262 28.5 263 28.6 264 27.6 265 28.5 266 27.9 267 24.1 268 25.7 269 27.6 270 27.6 271 24.6 272 25.5 273 26.4 274 27.8 275 28.3 276 27.3 277 25.2 278 26.5 279 27.3 280 27.4 281 25.3 282 26.3 283 27.7 284 28.3 285 28.3 286 28.3 287 26.5 288 26.0 289 27.5 290 27.4 291 27.2 292 27.2 293 28.4 294 28.2 295 28.3 296 27.4 297 27.6 298 26.8 299 28.2 300 28.6 301 28.2 302 25.6 303 27.5 304 27.8 305 27.5 306 28.6 307 28.3 308 25.6 309 27.2 310 27.9 311 27.1 312 26.0 313 26.5 314 28.1 315 27.8 316 28.5 317 27.6 318 24.5 319 25.5 320 26.5 321 27.9 322 26.9 323 25.8 324 26.2 325 27.6 326 27.6 327 28.0 328 25.6 329 25.5 330 27.1 331 27.9 332 26.7 333 28.0 334 28.4 335 27.7 336 27.5 337 27.6 338 27.5 339 26.3 340 27.6 341 28.2 342 27.6 343 24.8 344 25.8 345 26.9 346 28.6 347 27.8 348 26.8 349 25.2 350 26.9 351 28.1 352 26.9 353 25.7 354 27.1 355 27.9 356 28.7 357 28.3 358 28.4 359 27.1 360 26.0 361 26.6 362 27.6 363 26.2 364 26.4 365 28.6 366 27.4 367 27.9 368 27.8 369 26.2 370 26.5 371 27.3 372 28.4 373 25.6 374 25.0 375 27.1 376 28.3 377 28.0 378 28.4 379 26.6 380 25.8 381 27.4 382 27.4 383 26.4 384 25.7 385 27.4 386 27.6 387 27.4 388 27.3 389 28.6 390 26.7 391 28.1 392 28.0 393 26.8 394 24.9 395 26.7 396 26.9 397 27.8 398 27.3 399 28.1 400 25.6 401 25.7 402 26.5 403 27.4 404 27.6 405 26.9 406 28.5 407 28.1 408 27.9 409 28.0 410 27.4 411 26.5 412 27.4 413 27.6 414 28.1 415 26.6 416 27.5 417 28.3 418 28.5 419 27.9 420 28.0 421 25.7 422 27.5 423 27.2 424 28.6 425 24.9 426 26.2 427 26.7 428 27.4 429 27.6 430 28.4 431 25.2 432 27.6 433 28.4 434 28.5 435 24.7 436 26.2 437 27.3 438 27.4 439 27.5 440 27.7 441 28.4 L441 33.2 440 33.9 439 34.1 438 34.2 437 34.3 436 35.4 435 36.9 434 33.1 433 33.2 432 34.0 431 36.4 430 33.2 429 34.0 428 34.2 427 34.9 426 35.4 425 36.7 424 33.0 423 34.4 422 34.1 421 35.9 420 33.6 419 33.7 418 33.1 417 33.3 416 34.1 415 35.0 414 33.5 413 34.0 412 34.2 411 35.1 410 34.2 409 33.6 408 33.7 407 33.5 406 33.1 405 34.7 404 34.0 403 34.2 402 35.1 401 35.9 400 36.0 399 33.5 398 34.3 397 33.8 396 34.7 395 34.9 394 36.7 393 34.8 392 33.6 391 33.5 390 34.9 389 33.0 388 34.3 387 34.2 386 34.0 385 34.2 384 35.9 383 35.2 382 34.2 381 34.2 380 35.8 379 35.0 378 33.2 377 33.6 376 33.3 375 34.5 374 36.6 373 36.0 372 33.2 371 34.3 370 35.1 369 35.4 368 33.8 367 33.7 366 34.2 365 33.0 364 35.2 363 35.4 362 34.0 361 35.0 360 35.6 359 34.5 358 33.2 357 33.3 356 32.9 355 33.7 354 34.5 353 35.9 352 34.7 351 33.5 350 34.7 349 36.4 348 34.8 347 33.8 346 33.0 345 34.7 344 35.8 343 36.8 342 34.0 341 33.4 340 34.0 339 35.3 338 34.1 337 34.0 336 34.1 335 33.9 334 33.2 333 33.6 332 34.9 331 33.7 330 34.5 329 36.1 328 36.0 327 33.6 326 34.0 325 34.0 324 35.4 323 35.8 322 34.7 321 33.7 320 35.1 319 36.1 318 37.1 317 34.0 316 33.1 315 33.8 314 33.5 313 35.1 312 35.6 311 34.5 310 33.7 309 34.4 308 36.0 307 33.3 306 33.0 305 34.1 304 33.8 303 34.1 302 36.0 301 33.4 300 33.0 299 33.4 298 34.8 297 34.0 296 34.2 295 33.3 294 33.4 293 33.2 292 34.4 291 34.4 290 34.2 289 34.1 288 35.6 287 35.1 286 33.3 285 33.3 284 33.3 283 33.9 282 35.3 281 36.3 280 34.2 279 34.3 278 35.1 277 36.4 276 34.3 275 33.3 274 33.8 273 35.2 272 36.1 271 37.0 270 34.0 269 34.0 268 35.9 267 37.5 266 33.7 265 33.1 264 34.0 263 33.0 262 33.1 261 34.9 260 35.3 259 34.1 258 34.8 257 35.2 256 37.2 255 33.9 254 34.0 253 33.2 252 33.6 251 35.3 250 35.6 249 33.6 248 34.7 247 34.7 246 33.6 245 34.1 244 34.2 243 32.9 242 33.0 241 34.3 240 35.4 239 33.6 238 33.7 237 34.2 236 36.2 235 33.3 234 34.3 233 34.0 232 34.1 231 34.4 230 35.5 229 33.3 228 34.0 227 34.2 226 34.9 225 33.3 224 33.3 223 33.3 222 33.4 221 34.6 220 36.1 219 35.1 218 33.1 217 33.5 216 35.5 215 36.6 214 33.5 213 32.9 212 33.5 211 33.3 210 33.9 209 35.2 208 33.2 207 35.0 206 36.4 205 36.9 204 33.1 203 33.2 202 33.4 201 33.7 200 33.6 199 35.3 198 33.7 197 33.8 196 34.7 195 35.9 194 33.6 193 33.5 192 33.5 191 33.2 190 34.2 189 35.0 188 33.7 187 34.0 186 34.0 185 35.1 184 34.8 183 33.9 182 34.1 181 33.0 180 34.8 179 35.4 178 36.5 177 33.2 176 34.1 175 34.6 174 35.9 173 33.9 172 33.0 171 33.8 170 34.8 169 34.9 168 36.6 167 33.8 166 34.9 165 35.3 164 37.5Z M449 28.8 450 29.1 451 27.2 452 27.8 453 29.4 454 29.3 455 28.1 456 27.8 457 28.2 458 28.9 459 28.8 460 29.1 461 27.2 462 27.6 463 29.0 464 29.3 465 27.3 466 28.2 467 28.4 468 29.3 469 28.6 470 28.8 471 27.1 472 28.3 473 28.4 474 29.1 475 28.0 476 27.1 477 27.9 478 28.9 479 29.5 480 28.4 481 29.1 482 27.5 483 28.0 484 29.3 485 29.1 486 28.2 487 29.3 488 29.5 489 28.7 490 29.1 491 28.6 492 28.2 493 28.0 494 29.0 495 28.5 496 27.9 497 27.9 498 29.0 499 29.5 500 29.1 501 29.3 502 29.6 503 27.7 504 28.9 505 29.5 506 28.3 507 27.5 508 28.3 509 29.0 510 29.5 511 28.7 512 29.5 513 27.0 514 28.6 515 28.3 516 27.9 517 28.3 518 29.2 519 28.9 520 28.4 521 29.1 522 29.3 523 26.5 524 27.3 525 28.8 526 28.8 527 27.0 528 28.1 529 28.4 530 29.0 531 29.4 532 29.5 533 27.6 534 27.6 535 28.6 536 28.5 537 26.7 538 27.6 539 28.7 540 28.7 541 29.1 542 29.0 543 28.1 544 27.7 545 29.1 546 29.4 547 28.8 548 27.6 549 29.2 550 28.4 551 29.4 552 29.4 553 29.5 554 27.3 555 28.1 556 28.6 557 28.7 558 27.0 559 28.8 560 28.9 561 29.3 562 29.2 563 29.5 564 28.3 565 28.7 566 28.6 567 29.2 568 27.0 569 28.0 570 28.9 571 28.6 572 28.5 573 29.3 574 29.2 575 27.7 576 29.3 577 28.8 578 26.7 579 27.2 580 29.1 581 28.8 582 28.3 583 28.7 584 29.6 585 26.5 586 28.3 587 28.5 588 26.8 589 27.9 590 28.2 591 28.8 592 29.2 593 28.7 594 29.0 595 27.5 596 28.2 597 28.6 598 29.4 599 26.6 600 28.4 601 28.3 602 28.7 603 28.6 604 29.5 605 28.3 606 28.3 607 29.5 608 29.4 609 26.1 610 27.4 611 29.0 612 28.6 613 28.8 614 29.1 615 28.8 L615 32.8 614 32.5 613 32.8 612 33.0 611 32.6 610 34.2 609 35.5 608 32.2 607 32.1 606 33.3 605 33.3 604 32.1 603 33.0 602 32.9 601 33.3 600 33.2 599 35.0 598 32.2 597 33.0 596 33.4 595 34.1 594 32.6 593 32.9 592 32.4 591 32.8 590 33.4 589 33.7 588 34.8 587 33.1 586 33.3 585 35.1 584 32.0 583 32.9 582 33.3 581 32.8 580 32.5 579 34.4 578 34.9 577 32.8 576 32.3 575 33.9 574 32.4 573 32.3 572 33.1 571 33.0 570 32.7 569 33.6 568 34.6 567 32.4 566 33.0 565 32.9 564 33.3 563 32.1 562 32.4 561 32.3 560 32.7 559 32.8 558 34.6 557 32.9 556 33.0 555 33.5 554 34.3 553 32.1 552 32.2 551 32.2 550 33.2 549 32.4 548 34.0 547 32.8 546 32.2 545 32.5 544 33.9 543 33.5 542 32.6 541 32.5 540 32.9 539 32.9 538 34.0 537 34.9 536 33.1 535 33.0 534 34.0 533 34.0 532 32.1 531 32.2 530 32.6 529 33.2 528 33.5 527 34.6 526 32.8 525 32.8 524 34.3 523 35.1 522 32.3 521 32.5 520 33.2 519 32.7 518 32.4 517 33.3 516 33.7 515 33.3 514 33.0 513 34.6 512 32.1 511 32.9 510 32.1 509 32.6 508 33.3 507 34.1 506 33.3 505 32.1 504 32.7 503 33.9 502 32.0 501 32.3 500 32.5 499 32.1 498 32.6 497 33.7 496 33.7 495 33.1 494 32.6 493 33.6 492 33.4 491 33.0 490 32.5 489 32.9 488 32.1 487 32.3 486 33.4 485 32.5 484 32.3 483 33.6 482 34.1 481 32.5 480 33.2 479 32.1 478 32.7 477 33.7 476 34.5 475 33.6 474 32.5 473 33.2 472 33.3 471 34.5 470 32.8 469 33.0 468 32.3 467 33.2 466 33.4 465 34.3 464 32.3 463 32.6 462 34.0 461 34.4 460 32.5 459 32.8 458 32.7 457 33.4 456 33.8 455 33.5 454 32.3 453 32.2 452 33.8 451 34.4 450 32.5 449 32.8Z M616 24.5 617 25.7 618 28.0 619 28.9 620 25.1 621 27.5 622 27.5 623 28.0 624 28.0 625 28.0 626 28.2 627 24.7 628 25.9 629 27.9 630 26.2 631 25.9 632 27.2 633 27.9 634 27.6 635 28.4 636 25.6 637 26.5 638 27.5 639 27.9 640 28.0 641 25.9 642 27.4 643 28.5 644 27.8 645 28.5 646 28.9 647 26.6 648 26.8 649 28.9 650 27.7 651 24.7 652 26.2 653 27.4 654 28.6 655 28.2 656 27.5 657 25.6 658 27.3 659 28.2 660 28.3 661 25.5 662 26.0 663 27.5 664 27.4 665 28.9 666 28.7 667 26.1 668 26.6 669 27.7 670 28.7 671 26.4 672 24.9 673 26.4 674 28.3 675 27.5 676 27.5 677 28.2 678 24.9 679 27.1 680 28.4 681 27.8 682 24.8 683 26.5 684 28.3 685 27.7 686 28.5 687 27.8 688 26.3 689 25.9 690 27.3 691 28.0 692 26.1 693 26.3 694 27.9 695 27.7 696 27.9 697 28.8 698 26.5 699 26.7 700 28.2 701 28.3 702 24.9 703 26.8 704 27.9 705 28.2 706 28.5 707 28.3 708 26.7 709 26.1 710 27.3 711 28.0 712 24.3 713 25.6 714 27.4 715 27.9 716 28.5 717 28.6 718 28.2 719 26.3 720 27.4 721 27.8 722 26.2 723 26.8 724 27.3 725 27.5 726 28.6 727 27.8 728 28.4 729 26.7 730 26.4 731 27.3 732 27.7 733 26.8 734 27.1 735 28.7 736 27.8 737 28.0 738 27.5 739 26.4 740 26.8 741 28.2 742 28.8 743 25.7 744 26.3 745 26.8 746 27.7 747 28.0 748 28.0 749 27.6 750 24.5 751 26.9 752 27.3 753 26.7 754 26.2 755 27.7 756 28.1 757 27.8 758 27.8 759 28.8 760 25.1 761 26.4 762 28.1 763 28.0 764 26.2 765 27.8 766 28.1 767 27.5 768 28.3 769 28.6 770 26.2 771 25.9 772 27.7 773 27.9 774 26.3 775 28.1 776 28.2 777 28.9 778 28.1 779 28.6 780 26.9 781 27.6 782 28.0 783 28.5 784 25.3 785 27.1 786 27.8 787 28.1 788 28.2 789 28.8 790 28.0 791 27.3 792 27.3 793 28.0 794 28.8 795 25.3 796 26.7 797 28.1 798 27.9 799 27.6 800 26.7 801 25.3 802 26.2 803 27.1 804 28.5 805 26.4 806 27.9 807 27.8 808 27.6 809 27.9 810 28.4 811 24.3 812 26.3 813 27.8 814 28.3 815 26.2 816 26.4 817 28.7 818 27.7 819 28.3 820 28.9 821 26.3 822 26.3 823 27.8 824 27.9 825 27.0 826 26.1 827 27.4 828 28.5 829 27.5 830 28.8 831 28.0 832 25.9 833 26.8 834 28.2 835 27.6 836 24.9 837 26.7 838 27.2 839 27.6 840 28.6 841 28.5 842 26.4 843 26.8 844 27.0 845 27.8 846 25.7 847 26.9 848 27.7 849 27.7 850 28.0 851 28.7 852 28.6 853 26.3 854 26.7 855 28.5 856 28.4 857 27.0 858 28.0 859 27.7 860 27.7 861 28.9 862 28.2 863 26.6 864 28.1 865 27.6 866 25.3 867 27.3 868 28.0 869 27.6 870 27.5 871 28.7 872 28.6 873 25.9 874 27.5 875 28.6 876 27.8 877 26.7 878 28.6 879 28.3 880 28.1 881 28.5 882 28.5 883 25.8 884 26.5 885 27.8 886 28.1 887 26.8 888 27.3 889 28.0 890 28.2 891 27.6 892 28.6 893 26.7 894 25.9 895 27.2 896 28.6 897 28.5 898 26.2 899 27.3 900 28.6 901 28.2 902 28.7 903 26.3 904 25.3 905 26.8 906 27.6 907 27.2 908 25.4 909 27.3 910 28.2 911 28.8 912 27.6 913 28.3 914 26.2 915 27.4 916 28.5 917 28.0 918 26.5 919 26.7 920 28.1 921 28.4 922 28.4 923 27.9 924 26.3 925 27.5 926 27.6 927 28.1 928 27.0 929 27.2 930 28.3 931 28.6 932 28.6 933 27.8 934 26.3 935 26.9 936 28.5 937 28.4 938 25.9 939 27.0 940 28.3 941 28.3 942 28.0 943 28.8 944 28.3 945 26.5 946 27.1 947 28.8 948 27.7 949 27.6 950 27.5 951 28.0 952 27.8 953 28.0 954 27.5 955 26.5 956 27.9 957 27.9 958 28.6 959 26.6 960 27.9 961 27.9 962 27.7 963 28.7 964 28.4 965 24.0 966 25.8 967 26.6 968 28.3 969 26.5 970 27.2 971 27.7 972 28.3 973 28.6 974 28.4 975 27.5 976 25.6 977 27.8 978 28.2 979 25.7 980 26.4 981 27.7 982 27.7 983 27.9 984 27.6 985 28.1 986 26.4 987 26.4 988 28.2 989 27.0 990 25.4 991 27.3 992 27.2 993 27.9 994 28.2 995 28.5 996 25.1 997 26.8 998 28.0 999 28.5 1000 25.8 1001 26.2 1002 28.0 1003 27.5 1004 28.2 1005 28.7 1006 28.8 1007 25.8 1008 28.1 1009 28.1 1010 25.8 1011 26.3 1012 27.8 1013 28.1 1014 27.8 1015 28.3 1016 28.3 1017 26.8 1018 27.6 1019 28.6 1020 26.1 1021 25.2 1022 26.8 1023 27.7 1024 27.9 1025 27.7 1026 27.6 L1026 34.0 1025 33.9 1024 33.7 1023 33.9 1022 34.8 1021 36.4 1020 35.5 1019 33.0 1018 34.0 1017 34.8 1016 33.3 1015 33.3 1014 33.8 1013 33.5 1012 33.8 1011 35.3 1010 35.8 1009 33.5 1008 33.5 1007 35.8 1006 32.8 1005 32.9 1004 33.4 1003 34.1 1002 33.6 1001 35.4 1000 35.8 999 33.1 998 33.6 997 34.8 996 36.5 995 33.1 994 33.4 993 33.7 992 34.4 991 34.3 990 36.2 989 34.6 988 33.4 987 35.2 986 35.2 985 33.5 984 34.0 983 33.7 982 33.9 981 33.9 980 35.2 979 35.9 978 33.4 977 33.8 976 36.0 975 34.1 974 33.2 973 33.0 972 33.3 971 33.9 970 34.4 969 35.1 968 33.3 967 35.0 966 35.8 965 37.6 964 33.2 963 32.9 962 33.9 961 33.7 960 33.7 959 35.0 958 33.0 957 33.7 956 33.7 955 35.1 954 34.1 953 33.6 952 33.8 951 33.6 950 34.1 949 34.0 948 33.9 947 32.8 946 34.5 945 35.1 944 33.3 943 32.8 942 33.6 941 33.3 940 33.3 939 34.6 938 35.7 937 33.2 936 33.1 935 34.7 934 35.3 933 33.8 932 33.0 931 33.0 930 33.3 929 34.4 928 34.6 927 33.5 926 34.0 925 34.1 924 35.3 923 33.7 922 33.2 921 33.2 920 33.5 919 34.9 918 35.1 917 33.6 916 33.1 915 34.2 914 35.4 913 33.3 912 34.0 911 32.8 910 33.4 909 34.3 908 36.2 907 34.4 906 34.0 905 34.8 904 36.3 903 35.3 902 32.9 901 33.4 900 33.0 899 34.3 898 35.4 897 33.1 896 33.0 895 34.4 894 35.7 893 34.9 892 33.0 891 34.0 890 33.4 889 33.6 888 34.3 887 34.8 886 33.5 885 33.8 884 35.1 883 35.8 882 33.1 881 33.1 880 33.5 879 33.3 878 33.0 877 34.9 876 33.8 875 33.0 874 34.1 873 35.7 872 33.0 871 32.9 870 34.1 869 34.0 868 33.6 867 34.3 866 36.3 865 34.0 864 33.5 863 35.0 862 33.4 861 32.7 860 33.9 859 33.9 858 33.6 857 34.6 856 33.2 855 33.1 854 34.9 853 35.3 852 33.0 851 32.9 850 33.6 849 33.9 848 33.9 847 34.7 846 35.9 845 33.8 844 34.6 843 34.8 842 35.2 841 33.1 840 33.0 839 34.0 838 34.4 837 34.9 836 36.7 835 34.0 834 33.4 833 34.8 832 35.7 831 33.6 830 32.8 829 34.1 828 33.1 827 34.2 826 35.5 825 34.6 824 33.7 823 33.8 822 35.3 821 35.3 820 32.7 819 33.3 818 33.9 817 32.9 816 35.2 815 35.4 814 33.3 813 33.8 812 35.3 811 37.3 810 33.2 809 33.7 808 34.0 807 33.8 806 33.7 805 35.2 804 33.1 803 34.5 802 35.4 801 36.3 800 34.9 799 34.0 798 33.7 797 33.5 796 34.9 795 36.3 794 32.8 793 33.6 792 34.3 791 34.3 790 33.6 789 32.8 788 33.4 787 33.5 786 33.8 785 34.5 784 36.3 783 33.1 782 33.6 781 34.0 780 34.7 779 33.0 778 33.5 777 32.7 776 33.4 775 33.5 774 35.3 773 33.7 772 33.9 771 35.7 770 35.4 769 33.0 768 33.3 767 34.1 766 33.5 765 33.8 764 35.4 763 33.6 762 33.5 761 35.2 760 36.5 759 32.8 758 33.8 757 33.8 756 33.5 755 33.9 754 35.4 753 34.9 752 34.3 751 34.7 750 37.1 749 34.0 748 33.6 747 33.6 746 33.9 745 34.8 744 35.3 743 35.9 742 32.8 741 33.4 740 34.8 739 35.2 738 34.1 737 33.6 736 33.8 735 32.9 734 34.5 733 34.8 732 33.9 731 34.3 730 35.2 729 34.9 728 33.2 727 33.8 726 33.0 725 34.1 724 34.3 723 34.8 722 35.4 721 33.8 720 34.2 719 35.3 718 33.4 717 33.0 716 33.1 715 33.7 714 34.2 713 36.0 712 37.3 711 33.6 710 34.3 709 35.5 708 34.9 707 33.3 706 33.1 705 33.4 704 33.7 703 34.8 702 36.7 701 33.3 700 33.4 699 34.9 698 35.1 697 32.8 696 33.7 695 33.9 694 33.7 693 35.3 692 35.5 691 33.6 690 34.3 689 35.7 688 35.3 687 33.8 686 33.1 685 33.9 684 33.3 683 35.1 682 36.8 681 33.8 680 33.2 679 34.5 678 36.7 677 33.4 676 34.1 675 34.1 674 33.3 673 35.2 672 36.7 671 35.2 670 32.9 669 33.9 668 35.0 667 35.5 666 32.9 665 32.7 664 34.2 663 34.1 662 35.6 661 36.1 660 33.3 659 33.4 658 34.3 657 36.0 656 34.1 655 33.4 654 33.0 653 34.2 652 35.4 651 36.9 650 33.9 649 32.7 648 34.8 647 35.0 646 32.7 645 33.1 644 33.8 643 33.1 642 34.2 641 35.7 640 33.6 639 33.7 638 34.1 637 35.1 636 36.0 635 33.2 634 34.0 633 33.7 632 34.4 631 35.7 630 35.4 629 33.7 628 35.7 627 36.9 626 33.4 625 33.6 624 33.6 623 33.6 622 34.1 621 34.1 620 36.5 619 32.7 618 33.6 617 35.9 616 37.1Z M0 50.0 2 50.5 2 51.2 4 48.9 4 49.5 6 50.3 6 51.2 8 50.3 8 50.8 10 49.8 10 50.1 12 51.0 12 50.4 14 48.1 14 49.7 16 50.0 16 50.4 18 50.9 18 50.9 20 50.7 20 49.1 22 50.2 22 50.5 24 50.2 24 49.6 26 50.9 26 51.0 28 50.9 28 50.6 30 51.1 30 48.8 32 49.7 32 50.6 34 51.3 34 48.7 36 49.3 36 50.5 38 50.4 38 50.3 40 50.3 40 49.0 42 50.4 42 50.5 44 51.2 44 49.2 46 49.7 46 50.4 48 50.2 48 50.9 50 51.1 50 49.7 52 48.7 52 50.4 54 51.2 54 49.8 56 49.5 56 49.5 58 51.0 58 50.7 60 50.8 60 50.7 62 49.5 62 50.1 64 50.5 64 49.9 66 50.4 66 50.1 68 50.5 68 51.2 70 50.8 70 50.4 72 49.1 72 50.2 74 51.0 74 50.7 76 49.3 76 49.6 78 50.3 78 50.9 80 50.8 80 50.6 82 48.5 82 49.5 84 50.2 84 51.1 86 48.7 86 49.7 88 49.6 88 50.7 90 50.3 90 51.2 92 51.0 92 48.5 94 49.1 94 50.3 96 50.8 96 49.2 98 50.4 98 50.7 100 51.1 100 50.9 102 50.2 102 49.8 104 50.2 104 50.6 106 50.9 106 48.5 108 49.4 108 50.2 110 50.4 110 51.1 112 51.2 112 49.7 114 50.7 114 51.1 116 50.3 116 48.9 118 48.7 118 49.5 120 51.2 120 50.2 122 50.8 122 49.0 124 49.8 124 50.9 126 50.5 126 50.7 128 49.5 128 50.3 130 51.2 130 50.5 132 50.8 132 51.1 134 50.1 134 50.9 136 50.5 136 50.9 138 49.9 138 50.7 140 50.8 140 50.6 142 51.0 142 50.5 144 50.1 144 50.3 146 50.6 146 51.1 148 49.4 148 50.6 150 50.7 150 50.6 152 50.5 152 50.8 154 49.6 154 49.7 156 50.3 156 50.7 158 49.3 158 50.4 160 50.2 160 50.5 162 50.8 162 50.3 164 50.1 L164 54.9 162 54.7 162 54.2 160 54.5 160 54.8 158 54.6 158 55.7 156 54.3 156 54.7 154 55.3 154 55.4 152 54.2 152 54.5 150 54.4 150 54.3 148 54.4 148 55.6 146 53.9 146 54.4 144 54.7 144 54.9 142 54.5 142 54.0 140 54.4 140 54.2 138 54.3 138 55.1 136 54.1 136 54.5 134 54.1 134 54.9 132 53.9 132 54.2 130 54.5 130 53.8 128 54.7 128 55.5 126 54.3 126 54.5 124 54.1 124 55.2 122 56.0 122 54.2 120 54.8 120 53.8 118 55.5 118 56.3 116 56.1 116 54.7 114 53.9 114 54.3 112 55.3 112 53.8 110 53.9 110 54.6 108 54.8 108 55.6 106 56.5 106 54.1 104 54.4 104 54.8 102 55.2 102 54.8 100 54.1 100 53.9 98 54.3 98 54.6 96 55.8 96 54.2 94 54.7 94 55.9 92 56.5 92 54.0 90 53.8 90 54.7 88 54.3 88 55.4 86 55.3 86 56.3 84 53.9 84 54.8 82 55.5 82 56.5 80 54.4 80 54.2 78 54.1 78 54.7 76 55.4 76 55.7 74 54.3 74 54.0 72 54.8 72 55.9 70 54.6 70 54.2 68 53.8 68 54.5 66 54.9 66 54.6 64 55.1 64 54.5 62 54.9 62 55.5 60 54.3 60 54.2 58 54.3 58 54.0 56 55.5 56 55.5 54 55.2 54 53.8 52 54.6 52 56.3 50 55.3 50 53.9 48 54.1 48 54.8 46 54.6 46 55.3 44 55.8 44 53.8 42 54.5 42 54.6 40 56.0 40 54.7 38 54.7 38 54.6 36 54.5 36 55.7 34 56.3 34 53.7 32 54.4 32 55.3 30 56.2 30 53.9 28 54.4 28 54.1 26 54.0 26 54.1 24 55.4 24 54.8 22 54.5 22 54.8 20 55.9 20 54.3 18 54.1 18 54.1 16 54.6 16 55.0 14 55.3 14 56.9 12 54.6 12 54.0 10 54.9 10 55.2 8 54.2 8 54.7 6 53.8 6 54.7 4 55.5 4 56.1 2 53.8 2 54.5 0 55.0Z M164 48.0 165 49.6 166 49.4 167 49.0 168 48.7 169 48.7 170 49.5 171 49.0 172 49.1 173 50.4 174 48.8 175 49.0 176 49.3 177 49.3 178 49.6 179 47.4 180 48.6 181 49.2 182 49.5 183 50.0 184 49.4 185 47.9 186 48.7 187 50.2 188 48.3 189 48.7 190 49.8 191 49.9 192 50.3 193 49.5 194 49.6 195 47.5 196 49.0 197 49.4 198 49.6 199 47.5 200 49.5 201 49.1 202 50.2 203 49.9 204 49.3 205 47.5 206 48.9 207 49.2 208 50.2 209 47.4 210 49.0 211 50.0 212 49.9 213 50.0 214 49.5 215 47.5 216 47.9 217 48.9 218 49.2 219 49.2 220 48.2 221 48.8 222 49.4 223 49.1 224 49.9 225 48.6 226 47.2 227 49.1 228 49.9 229 48.7 230 49.0 231 49.2 232 49.9 233 50.1 234 49.5 235 49.6 236 47.5 237 47.6 238 49.4 239 49.8 240 48.0 241 48.4 242 49.3 243 49.8 244 49.2 245 49.2 246 48.1 247 48.5 248 49.2 249 50.0 250 46.3 251 48.8 252 49.9 253 49.7 254 50.2 255 50.0 256 49.6 257 47.5 258 48.5 259 49.6 260 47.3 261 48.7 262 49.2 263 49.7 264 50.2 265 49.9 266 49.9 267 47.4 268 48.5 269 49.5 270 48.7 271 47.6 272 48.6 273 49.7 274 50.2 275 49.5 276 49.8 277 48.7 278 49.2 279 49.6 280 50.0 281 47.6 282 47.3 283 48.7 284 49.6 285 49.1 286 50.1 287 49.0 288 47.7 289 48.6 290 50.2 291 48.7 292 49.6 293 49.6 294 50.1 295 49.3 296 50.2 297 49.5 298 47.1 299 48.6 300 49.0 301 49.1 302 46.7 303 49.2 304 49.5 305 50.0 306 49.8 307 49.4 308 47.8 309 49.3 310 50.2 311 50.3 312 46.6 313 47.9 314 49.9 315 50.2 316 50.2 317 49.0 318 49.3 319 48.0 320 48.6 321 50.2 322 48.5 323 48.8 324 49.4 325 49.7 326 50.2 327 49.1 328 48.5 329 47.5 330 49.1 331 49.1 332 47.9 333 49.8 334 50.4 335 49.0 336 49.5 337 49.3 338 49.2 339 47.9 340 48.6 341 49.5 342 50.3 343 47.4 344 48.1 345 49.5 346 49.3 347 50.3 348 49.1 349 47.5 350 48.7 351 49.2 352 49.7 353 47.9 354 49.0 355 49.5 356 49.6 357 49.8 358 50.0 359 47.6 360 48.7 361 49.2 362 49.9 363 47.9 364 48.9 365 49.6 366 49.9 367 49.2 368 49.4 369 47.8 370 48.7 371 49.0 372 49.6 373 50.1 374 48.3 375 48.6 376 49.5 377 49.3 378 50.3 379 49.7 380 47.8 381 48.5 382 49.9 383 50.1 384 48.1 385 49.7 386 49.3 387 50.2 388 50.0 389 49.3 390 47.3 391 48.6 392 49.0 393 49.4 394 46.9 395 48.1 396 48.9 397 50.3 398 49.9 399 49.8 400 48.1 401 48.5 402 49.8 403 49.1 404 48.5 405 48.7 406 49.4 407 49.3 408 49.7 409 49.1 410 48.9 411 48.3 412 49.6 413 50.1 414 48.7 415 47.5 416 49.4 417 49.7 418 49.8 419 49.0 420 49.7 421 47.8 422 49.7 423 49.1 424 49.6 425 48.1 426 48.6 427 49.7 428 49.7 429 49.5 430 49.9 431 47.6 432 48.4 433 49.2 434 49.4 435 47.3 436 48.0 437 48.9 438 49.0 439 50.3 440 49.8 441 48.4 L441 56.6 440 55.2 439 54.7 438 56.0 437 56.1 436 57.0 435 57.7 434 55.6 433 55.8 432 56.6 431 57.4 430 55.1 429 55.5 428 55.3 427 55.3 426 56.4 425 56.9 424 55.4 423 55.9 422 55.3 421 57.2 420 55.3 419 56.0 418 55.2 417 55.3 416 55.6 415 57.5 414 56.3 413 54.9 412 55.4 411 56.7 410 56.1 409 55.9 408 55.3 407 55.7 406 55.6 405 56.3 404 56.5 403 55.9 402 55.2 401 56.5 400 56.9 399 55.2 398 55.1 397 54.7 396 56.1 395 56.9 394 58.1 393 55.6 392 56.0 391 56.4 390 57.7 389 55.7 388 55.0 387 54.8 386 55.7 385 55.3 384 56.9 383 54.9 382 55.1 381 56.5 380 57.2 379 55.3 378 54.7 377 55.7 376 55.5 375 56.4 374 56.7 373 54.9 372 55.4 371 56.0 370 56.3 369 57.2 368 55.6 367 55.8 366 55.1 365 55.4 364 56.1 363 57.1 362 55.1 361 55.8 360 56.3 359 57.4 358 55.0 357 55.2 356 55.4 355 55.5 354 56.0 353 57.1 352 55.3 351 55.8 350 56.3 349 57.5 348 55.9 347 54.7 346 55.7 345 55.5 344 56.9 343 57.6 342 54.7 341 55.5 340 56.4 339 57.1 338 55.8 337 55.7 336 55.5 335 56.0 334 54.6 333 55.2 332 57.1 331 55.9 330 55.9 329 57.5 328 56.5 327 55.9 326 54.8 325 55.3 324 55.6 323 56.2 322 56.5 321 54.8 320 56.4 319 57.0 318 55.7 317 56.0 316 54.8 315 54.8 314 55.1 313 57.1 312 58.4 311 54.7 310 54.8 309 55.7 308 57.2 307 55.6 306 55.2 305 55.0 304 55.5 303 55.8 302 58.3 301 55.9 300 56.0 299 56.4 298 57.9 297 55.5 296 54.8 295 55.7 294 54.9 293 55.4 292 55.4 291 56.3 290 54.8 289 56.4 288 57.3 287 56.0 286 54.9 285 55.9 284 55.4 283 56.3 282 57.7 281 57.4 280 55.0 279 55.4 278 55.8 277 56.3 276 55.2 275 55.5 274 54.8 273 55.3 272 56.4 271 57.4 270 56.3 269 55.5 268 56.5 267 57.6 266 55.1 265 55.1 264 54.8 263 55.3 262 55.8 261 56.3 260 57.7 259 55.4 258 56.5 257 57.5 256 55.4 255 55.0 254 54.8 253 55.3 252 55.1 251 56.2 250 58.7 249 55.0 248 55.8 247 56.5 246 56.9 245 55.8 244 55.8 243 55.2 242 55.7 241 56.6 240 57.0 239 55.2 238 55.6 237 57.4 236 57.5 235 55.4 234 55.5 233 54.9 232 55.1 231 55.8 230 56.0 229 56.3 228 55.1 227 55.9 226 57.8 225 56.4 224 55.1 223 55.9 222 55.6 221 56.2 220 56.8 219 55.8 218 55.8 217 56.1 216 57.1 215 57.5 214 55.5 213 55.0 212 55.1 211 55.0 210 56.0 209 57.6 208 54.8 207 55.8 206 56.1 205 57.5 204 55.7 203 55.1 202 54.8 201 55.9 200 55.5 199 57.5 198 55.4 197 55.6 196 56.0 195 57.5 194 55.4 193 55.5 192 54.7 191 55.1 190 55.2 189 56.3 188 56.7 187 54.8 186 56.3 185 57.1 184 55.6 183 55.0 182 55.5 181 55.8 180 56.4 179 57.6 178 55.4 177 55.7 176 55.7 175 56.0 174 56.2 173 54.6 172 55.9 171 56.0 170 55.5 169 56.3 168 56.3 167 56.0 166 55.6 165 55.4 164 57.0Z M449 51.2 450 50.1 451 48.5 452 49.5 453 49.9 454 51.0 455 48.5 456 50.0 457 50.9 458 50.4 459 50.7 460 51.1 461 49.1 462 50.5 463 50.3 464 50.7 465 50.0 466 48.8 467 50.2 468 50.5 469 50.9 470 51.3 471 51.3 472 49.5 473 49.9 474 50.8 475 50.1 476 48.6 477 50.5 478 51.0 479 50.5 480 51.3 481 51.3 482 49.1 483 50.4 484 50.8 485 51.0 486 48.3 487 49.5 488 50.8 489 50.6 490 50.7 491 51.1 492 48.2 493 49.4 494 50.5 495 51.2 496 50.0 497 49.5 498 50.3 499 50.8 500 51.0 501 51.3 502 49.0 503 49.7 504 50.7 505 50.3 506 49.2 507 49.6 508 50.4 509 51.0 510 50.1 511 51.2 512 49.7 513 49.3 514 50.4 515 51.2 516 50.4 517 50.2 518 50.4 519 50.2 520 51.1 521 51.1 522 50.6 523 49.0 524 48.9 525 49.6 526 50.8 527 48.8 528 49.9 529 51.0 530 50.2 531 50.3 532 50.4 533 49.5 534 49.5 535 50.4 536 50.7 537 49.1 538 49.9 539 50.9 540 51.2 541 51.0 542 51.3 543 49.9 544 49.5 545 50.3 546 50.3 547 50.4 548 50.2 549 50.6 550 50.8 551 50.4 552 50.7 553 51.0 554 48.7 555 49.4 556 51.0 557 48.7 558 49.5 559 50.2 560 51.0 561 50.4 562 50.2 563 50.4 564 49.2 565 48.6 566 50.2 567 51.0 568 49.0 569 50.2 570 50.5 571 50.5 572 50.1 573 50.7 574 48.6 575 48.9 576 49.6 577 50.8 578 50.1 579 49.6 580 50.7 581 51.0 582 50.6 583 51.2 584 48.7 585 49.5 586 50.6 587 51.2 588 49.7 589 49.2 590 50.5 591 51.3 592 51.3 593 50.5 594 49.7 595 48.5 596 49.5 597 51.1 598 50.6 599 48.7 600 49.3 601 50.1 602 50.2 603 51.2 604 50.3 605 48.0 606 49.1 607 50.9 608 50.9 609 49.1 610 50.3 611 50.1 612 50.3 613 50.3 614 50.3 615 49.6 L615 55.4 614 54.7 613 54.7 612 54.7 611 54.9 610 54.7 609 55.9 608 54.1 607 54.1 606 55.9 605 57.0 604 54.7 603 53.8 602 54.8 601 54.9 600 55.7 599 56.3 598 54.4 597 53.9 596 55.5 595 56.5 594 55.3 593 54.5 592 53.7 591 53.7 590 54.5 589 55.8 588 55.3 587 53.8 586 54.4 585 55.5 584 56.3 583 53.8 582 54.4 581 54.0 580 54.3 579 55.4 578 54.9 577 54.2 576 55.4 575 56.1 574 56.4 573 54.3 572 54.9 571 54.5 570 54.5 569 54.8 568 56.0 567 54.0 566 54.8 565 56.4 564 55.8 563 54.6 562 54.8 561 54.6 560 54.0 559 54.8 558 55.5 557 56.3 556 54.0 555 55.6 554 56.3 553 54.0 552 54.3 551 54.6 550 54.2 549 54.4 548 54.8 547 54.6 546 54.7 545 54.7 544 55.5 543 55.1 542 53.7 541 54.0 540 53.8 539 54.1 538 55.1 537 55.9 536 54.3 535 54.6 534 55.5 533 55.5 532 54.6 531 54.7 530 54.8 529 54.0 528 55.1 527 56.2 526 54.2 525 55.4 524 56.1 523 56.0 522 54.4 521 53.9 520 53.9 519 54.8 518 54.6 517 54.8 516 54.6 515 53.8 514 54.6 513 55.7 512 55.3 511 53.8 510 54.9 509 54.0 508 54.6 507 55.4 506 55.8 505 54.7 504 54.3 503 55.3 502 56.0 501 53.7 500 54.0 499 54.2 498 54.7 497 55.5 496 55.0 495 53.8 494 54.5 493 55.6 492 56.8 491 53.9 490 54.3 489 54.4 488 54.2 487 55.5 486 56.7 485 54.0 484 54.2 483 54.6 482 55.9 481 53.7 480 53.7 479 54.5 478 54.0 477 54.5 476 56.4 475 54.9 474 54.2 473 55.1 472 55.5 471 53.7 470 53.7 469 54.1 468 54.5 467 54.8 466 56.2 465 55.0 464 54.3 463 54.7 462 54.5 461 55.9 460 53.9 459 54.3 458 54.6 457 54.1 456 55.0 455 56.5 454 54.0 453 55.1 452 55.5 451 56.5 450 54.9 449 53.8Z M616 48.0 617 48.0 618 48.8 619 50.4 620 47.4 621 48.5 622 49.2 623 50.1 624 50.3 625 49.6 626 49.1 627 47.5 628 49.1 629 50.1 630 48.7 631 48.6 632 49.0 633 49.4 634 49.8 635 49.6 636 49.8 637 47.2 638 49.1 639 49.4 640 49.1 641 48.5 642 49.7 643 50.1 644 50.6 645 49.6 646 49.3 647 47.1 648 49.5 649 49.8 650 50.4 651 47.6 652 49.6 653 49.2 654 50.0 655 50.4 656 50.0 657 47.5 658 48.5 659 49.6 660 49.2 661 48.7 662 49.3 663 49.5 664 49.9 665 50.1 666 49.3 667 49.0 668 48.4 669 49.9 670 49.2 671 49.5 672 47.7 673 49.5 674 50.3 675 49.9 676 49.9 677 48.6 678 47.9 679 48.0 680 49.6 681 50.2 682 47.2 683 49.2 684 49.1 685 49.8 686 50.3 687 50.5 688 47.1 689 48.0 690 49.8 691 48.1 692 47.5 693 48.9 694 49.1 695 50.1 696 49.5 697 50.1 698 47.1 699 48.3 700 48.7 701 50.2 702 47.8 703 49.5 704 49.9 705 50.5 706 49.5 707 49.6 708 47.9 709 47.1 710 48.9 711 49.5 712 49.5 713 47.4 714 49.2 715 48.9 716 49.7 717 50.2 718 49.8 719 46.9 720 47.7 721 49.0 722 49.6 723 47.7 724 49.5 725 49.8 726 49.4 727 50.1 728 50.6 729 47.5 730 49.0 731 49.3 732 49.9 733 48.0 734 48.2 735 50.0 736 50.0 737 50.4 738 49.9 739 49.2 740 48.1 741 50.1 742 50.4 743 47.7 744 48.5 745 48.9 746 49.4 747 49.4 748 49.8 749 49.3 750 48.4 751 49.2 752 49.5 753 49.7 754 48.1 755 49.4 756 49.9 757 50.0 758 50.1 759 49.3 760 47.0 761 48.1 762 48.9 763 49.6 764 47.2 765 47.9 766 49.2 767 49.9 768 49.6 769 49.4 770 47.4 771 48.6 772 49.3 773 50.5 774 46.9 775 49.0 776 49.8 777 49.5 778 49.1 779 50.2 780 49.4 781 47.2 782 48.6 783 49.8 784 49.6 785 46.7 786 49.2 787 49.1 788 50.2 789 50.3 790 50.0 791 48.1 792 48.4 793 50.1 794 49.9 795 48.6 796 49.0 797 50.5 798 49.6 799 50.2 800 49.7 801 46.8 802 49.2 803 50.3 804 50.1 805 47.6 806 49.4 807 50.1 808 49.2 809 49.4 810 49.3 811 48.8 812 47.9 813 49.5 814 49.6 815 47.1 816 48.6 817 49.7 818 49.7 819 49.6 820 50.4 821 49.6 822 47.7 823 48.0 824 49.7 825 48.5 826 48.6 827 49.0 828 50.5 829 50.0 830 50.5 831 48.7 832 47.8 833 50.0 834 49.7 835 49.7 836 47.1 837 47.9 838 49.8 839 49.3 840 49.8 841 50.3 842 48.1 843 48.2 844 48.5 845 50.1 846 47.3 847 48.3 848 50.0 849 49.7 850 49.6 851 50.0 852 49.2 853 47.8 854 49.4 855 50.4 856 48.4 857 48.3 858 49.5 859 50.4 860 49.3 861 50.6 862 49.8 863 47.8 864 48.4 865 49.7 866 48.9 867 48.8 868 49.4 869 49.5 870 50.1 871 49.6 872 50.0 873 48.3 874 49.5 875 49.6 876 48.9 877 48.7 878 49.6 879 50.5 880 50.4 881 49.9 882 49.8 883 47.9 884 48.6 885 48.7 886 50.3 887 47.7 888 47.8 889 48.8 890 49.3 891 49.3 892 49.8 893 49.1 894 48.5 895 49.0 896 49.4 897 48.1 898 47.5 899 49.4 900 50.0 901 50.0 902 50.4 903 50.0 904 48.3 905 48.8 906 50.0 907 49.0 908 48.4 909 48.9 910 49.8 911 50.5 912 49.3 913 50.4 914 48.4 915 49.4 916 49.4 917 48.2 918 47.6 919 48.4 920 49.3 921 49.4 922 49.3 923 49.7 924 47.2 925 48.5 926 49.4 927 49.2 928 47.7 929 47.9 930 49.9 931 49.5 932 49.5 933 49.6 934 48.5 935 48.1 936 50.0 937 49.1 938 48.5 939 48.0 940 49.3 941 49.8 942 50.2 943 50.0 944 49.3 945 47.1 946 49.3 947 49.5 948 49.9 949 47.8 950 48.6 951 50.4 952 49.5 953 49.9 954 49.6 955 47.2 956 48.0 957 50.2 958 50.2 959 48.0 960 48.9 961 50.1 962 50.0 963 49.9 964 49.5 965 48.5 966 49.3 967 50.3 968 49.9 969 48.2 970 49.5 971 49.3 972 50.6 973 50.6 974 49.6 975 49.5 976 47.4 977 48.9 978 49.4 979 48.9 980 47.7 981 48.5 982 50.4 983 50.3 984 50.6 985 50.6 986 47.1 987 48.5 988 50.0 989 50.4 990 48.3 991 48.9 992 49.1 993 50.6 994 49.8 995 49.6 996 48.0 997 49.4 998 49.2 999 49.5 1000 48.5 1001 48.7 1002 50.0 1003 49.4 1004 49.5 1005 50.0 1006 48.2 1007 49.7 1008 50.1 1009 49.6 1010 48.2 1011 48.9 1012 49.8 1013 50.5 1014 49.2 1015 49.7 1016 49.3 1017 47.2 1018 48.7 1019 49.9 1020 48.7 1021 47.9 1022 48.4 1023 49.0 1024 50.4 1025 50.3 1026 49.7 L1026 55.3 1025 54.7 1024 54.6 1023 56.0 1022 56.6 1021 57.1 1020 56.3 1019 55.1 1018 56.3 1017 57.8 1016 55.7 1015 55.3 1014 55.8 1013 54.5 1012 55.2 1011 56.1 1010 56.8 1009 55.4 1008 54.9 1007 55.3 1006 56.8 1005 55.0 1004 55.5 1003 55.6 1002 55.0 1001 56.3 1000 56.5 999 55.5 998 55.8 997 55.6 996 57.0 995 55.4 994 55.2 993 54.4 992 55.9 991 56.1 990 56.7 989 54.6 988 55.0 987 56.5 986 57.9 985 54.4 984 54.4 983 54.7 982 54.6 981 56.5 980 57.3 979 56.1 978 55.6 977 56.1 976 57.6 975 55.5 974 55.4 973 54.4 972 54.4 971 55.7 970 55.5 969 56.8 968 55.1 967 54.7 966 55.7 965 56.5 964 55.5 963 55.1 962 55.0 961 54.9 960 56.1 959 57.0 958 54.8 957 54.8 956 57.0 955 57.8 954 55.4 953 55.1 952 55.5 951 54.6 950 56.4 949 57.2 948 55.1 947 55.5 946 55.7 945 57.9 944 55.7 943 55.0 942 54.8 941 55.2 940 55.7 939 57.0 938 56.5 937 55.9 936 55.0 935 56.9 934 56.5 933 55.4 932 55.5 931 55.5 930 55.1 929 57.1 928 57.3 927 55.8 926 55.6 925 56.5 924 57.8 923 55.3 922 55.7 921 55.6 920 55.7 919 56.6 918 57.4 917 56.8 916 55.6 915 55.6 914 56.6 913 54.6 912 55.7 911 54.5 910 55.2 909 56.1 908 56.6 907 56.0 906 55.0 905 56.2 904 56.7 903 55.0 902 54.6 901 55.0 900 55.0 899 55.6 898 57.5 897 56.9 896 55.6 895 56.0 894 56.5 893 55.9 892 55.2 891 55.7 890 55.7 889 56.2 888 57.2 887 57.3 886 54.7 885 56.3 884 56.4 883 57.1 882 55.2 881 55.1 880 54.6 879 54.5 878 55.4 877 56.3 876 56.1 875 55.4 874 55.5 873 56.7 872 55.0 871 55.4 870 54.9 869 55.5 868 55.6 867 56.2 866 56.1 865 55.3 864 56.6 863 57.2 862 55.2 861 54.4 860 55.7 859 54.6 858 55.5 857 56.7 856 56.6 855 54.6 854 55.6 853 57.2 852 55.8 851 55.0 850 55.4 849 55.3 848 55.0 847 56.7 846 57.7 845 54.9 844 56.5 843 56.8 842 56.9 841 54.7 840 55.2 839 55.7 838 55.2 837 57.1 836 57.9 835 55.3 834 55.3 833 55.0 832 57.2 831 56.3 830 54.5 829 55.0 828 54.5 827 56.0 826 56.4 825 56.5 824 55.3 823 57.0 822 57.3 821 55.4 820 54.6 819 55.4 818 55.3 817 55.3 816 56.4 815 57.9 814 55.4 813 55.5 812 57.1 811 56.2 810 55.7 809 55.6 808 55.8 807 54.9 806 55.6 805 57.4 804 54.9 803 54.7 802 55.8 801 58.2 800 55.3 799 54.8 798 55.4 797 54.5 796 56.0 795 56.4 794 55.1 793 54.9 792 56.6 791 56.9 790 55.0 789 54.7 788 54.8 787 55.9 786 55.8 785 58.3 784 55.4 783 55.2 782 56.4 781 57.8 780 55.6 779 54.8 778 55.9 777 55.5 776 55.2 775 56.0 774 58.1 773 54.5 772 55.7 771 56.4 770 57.6 769 55.6 768 55.4 767 55.1 766 55.8 765 57.1 764 57.8 763 55.4 762 56.1 761 56.9 760 58.0 759 55.7 758 54.9 757 55.0 756 55.1 755 55.6 754 56.9 753 55.3 752 55.5 751 55.8 750 56.6 749 55.7 748 55.2 747 55.6 746 55.6 745 56.1 744 56.5 743 57.3 742 54.6 741 54.9 740 56.9 739 55.8 738 55.1 737 54.6 736 55.0 735 55.0 734 56.8 733 57.0 732 55.1 731 55.7 730 56.0 729 57.5 728 54.4 727 54.9 726 55.6 725 55.2 724 55.5 723 57.3 722 55.4 721 56.0 720 57.3 719 58.1 718 55.2 717 54.8 716 55.3 715 56.1 714 55.8 713 57.6 712 55.5 711 55.5 710 56.1 709 57.9 708 57.1 707 55.4 706 55.5 705 54.5 704 55.1 703 55.5 702 57.2 701 54.8 700 56.3 699 56.7 698 57.9 697 54.9 696 55.5 695 54.9 694 55.9 693 56.1 692 57.5 691 56.9 690 55.2 689 57.0 688 57.9 687 54.5 686 54.7 685 55.2 684 55.9 683 55.8 682 57.8 681 54.8 680 55.4 679 57.0 678 57.1 677 56.4 676 55.1 675 55.1 674 54.7 673 55.5 672 57.3 671 55.5 670 55.8 669 55.1 668 56.6 667 56.0 666 55.7 665 54.9 664 55.1 663 55.5 662 55.7 661 56.3 660 55.8 659 55.4 658 56.5 657 57.5 656 55.0 655 54.6 654 55.0 653 55.8 652 55.4 651 57.4 650 54.6 649 55.2 648 55.5 647 57.9 646 55.7 645 55.4 644 54.4 643 54.9 642 55.3 641 56.5 640 55.9 639 55.6 638 55.9 637 57.8 636 55.2 635 55.4 634 55.2 633 55.6 632 56.0 631 56.4 630 56.3 629 54.9 628 55.9 627 57.5 626 55.9 625 55.4 624 54.7 623 54.9 622 55.8 621 56.5 620 57.6 619 54.6 618 56.2 617 57.0 616 57.0Z" fill="#15150f"/></svg>
<svg style="left:448px;top:669px" width="1109" height="64"><path d="M0 30.2 2 27.2 4 27.3 6 28.0 8 28.3 10 27.9 12 28.1 14 27.6 16 27.8 18 28.0 20 28.2 22 28.1 24 28.9 26 30.2 L26 31.4 24 33.7 22 32.7 20 33.7 18 32.9 16 33.8 14 33.4 12 33.6 10 34.2 8 33.3 6 33.5 4 34.6 2 34.2 0 31.4Z M34 30.2 36 27.2 38 27.3 40 28.0 42 28.3 44 27.9 46 28.1 48 27.6 50 27.8 52 28.0 54 28.2 56 28.1 58 28.9 60 30.2 L60 31.4 58 33.7 56 32.7 54 33.7 52 32.9 50 33.8 48 33.4 46 33.6 44 34.2 42 33.3 40 33.5 38 34.6 36 34.2 34 31.4Z M64 30.2 66 27.3 68 27.4 70 28.2 72 28.5 74 28.2 76 28.5 78 28.0 80 30.1 L80 31.4 78 33.3 76 33.6 74 33.1 72 33.6 70 33.4 68 34.5 66 33.6 64 31.4Z M88 30.2 90 27.2 92 27.3 94 28.0 96 28.2 98 27.9 100 28.1 102 27.5 104 27.7 106 27.9 108 28.0 110 28.0 112 28.7 114 28.4 116 28.8 118 29.9 L118 31.4 116 33.5 114 32.7 112 33.5 110 33.2 108 33.4 106 34.0 104 33.1 102 33.2 100 34.3 98 33.9 96 33.5 94 34.6 92 34.7 90 33.8 88 31.4Z M122 30.2 124 27.3 126 27.5 128 28.3 130 28.7 132 28.5 134 30.2 L134 31.6 132 33.5 130 33.6 128 33.8 126 34.1 124 33.7 122 31.4Z M142 30.2 144 27.2 146 27.3 148 28.1 150 28.4 152 28.1 154 28.3 156 27.8 158 28.1 160 28.3 162 30.2 L162 31.4 160 32.8 158 33.2 156 33.0 154 34.1 152 33.2 150 34.2 148 33.4 146 34.3 144 34.0 142 31.4Z M166 30.2 168 27.3 170 27.5 172 28.3 174 28.7 176 28.5 178 30.2 L178 31.6 176 33.5 174 33.6 172 33.8 170 34.1 168 33.7 166 31.4Z M182 30.2 184 27.2 186 27.3 188 28.0 190 28.2 192 27.9 194 28.1 196 27.5 198 27.7 200 27.9 202 28.0 204 28.0 206 28.7 208 28.4 210 28.8 212 29.9 L212 31.4 210 33.5 208 32.7 206 33.5 204 33.2 202 33.4 200 34.0 198 33.1 196 33.2 194 34.3 192 33.9 190 33.5 188 34.6 186 34.7 184 33.8 182 31.4Z M220 30.2 222 27.2 224 27.3 226 28.0 228 28.3 230 27.9 232 28.1 234 27.6 236 27.8 238 28.0 240 28.2 242 28.1 244 28.9 246 30.2 L246 31.4 244 33.7 242 32.7 240 33.7 238 32.9 236 33.8 234 33.4 232 33.6 230 34.2 228 33.3 226 33.5 224 34.6 222 34.2 220 31.4Z M250 30.2 252 27.2 254 27.3 256 28.0 258 28.2 260 27.9 262 28.1 264 27.5 266 27.7 268 27.9 270 28.0 272 28.0 274 28.7 276 28.4 278 28.8 280 29.9 L280 31.4 278 33.5 276 32.7 274 33.5 272 33.2 270 33.4 268 34.0 266 33.1 264 33.2 262 34.3 260 33.9 258 33.5 256 34.6 254 34.7 252 33.8 250 31.4Z M282 30.2 284 27.2 286 27.3 288 28.0 290 28.2 292 27.9 294 28.1 296 27.5 298 27.7 300 27.9 302 28.0 304 28.0 306 28.7 308 28.4 310 28.8 312 29.9 L312 31.4 310 33.5 308 32.7 306 33.5 304 33.2 302 33.4 300 34.0 298 33.1 296 33.2 294 34.3 292 33.9 290 33.5 288 34.6 286 34.7 284 33.8 282 31.4Z M316 30.2 318 27.3 320 27.5 322 28.3 324 28.7 326 28.5 328 30.2 L328 31.6 326 33.5 324 33.6 322 33.8 320 34.1 318 33.7 316 31.4Z M330 30.2 332 27.3 334 27.4 336 28.2 338 28.5 340 28.2 342 28.5 344 28.0 346 30.1 L346 31.4 344 33.3 342 33.6 340 33.1 338 33.6 336 33.4 334 34.5 332 33.6 330 31.4Z M350 30.2 352 27.2 354 27.3 356 28.0 358 28.2 360 27.9 362 28.1 364 27.5 366 27.7 368 27.9 370 28.0 372 28.0 374 28.7 376 28.4 378 28.8 380 29.9 L380 31.4 378 33.5 376 32.7 374 33.5 372 33.2 370 33.4 368 34.0 366 33.1 364 33.2 362 34.3 360 33.9 358 33.5 356 34.6 354 34.7 352 33.8 350 31.4Z M384 30.2 386 27.2 388 27.3 390 28.0 392 28.3 394 27.9 396 28.1 398 27.6 400 27.8 402 28.0 404 28.2 406 28.1 408 28.9 410 30.2 L410 31.4 408 33.7 406 32.7 404 33.7 402 32.9 400 33.8 398 33.4 396 33.6 394 34.2 392 33.3 390 33.5 388 34.6 386 34.2 384 31.4Z M416 30.2 418 27.2 420 27.3 422 28.0 424 28.3 426 27.9 428 28.1 430 27.6 432 27.8 434 28.0 436 28.2 438 28.1 440 28.9 442 30.2 L442 31.4 440 33.7 438 32.7 436 33.7 434 32.9 432 33.8 430 33.4 428 33.6 426 34.2 424 33.3 422 33.5 420 34.6 418 34.2 416 31.4Z M446 30.2 448 27.2 450 27.3 452 28.0 454 28.2 456 27.9 458 28.1 460 27.5 462 27.7 464 27.9 466 28.0 468 28.0 470 28.7 472 28.4 474 28.8 476 29.9 L476 31.4 474 33.5 472 32.7 470 33.5 468 33.2 466 33.4 464 34.0 462 33.1 460 33.2 458 34.3 456 33.9 454 33.5 452 34.6 450 34.7 448 33.8 446 31.4Z M480 30.2 482 27.2 484 27.3 486 28.1 488 28.4 490 28.1 492 28.3 494 27.8 496 28.1 498 28.3 500 30.2 L500 31.4 498 32.8 496 33.2 494 33.0 492 34.1 490 33.2 488 34.2 486 33.4 484 34.3 482 34.0 480 31.4Z M508 30.2 510 27.3 512 27.5 514 28.3 516 28.7 518 28.5 520 30.2 L520 31.6 518 33.5 516 33.6 514 33.8 512 34.1 510 33.7 508 31.4Z M522 30.2 524 27.2 526 27.3 528 28.0 530 28.3 532 27.9 534 28.1 536 27.6 538 27.8 540 28.0 542 28.2 544 28.1 546 28.9 548 30.2 L548 31.4 546 33.7 544 32.7 542 33.7 540 32.9 538 33.8 536 33.4 534 33.6 532 34.2 530 33.3 528 33.5 526 34.6 524 34.2 522 31.4Z M554 30.2 556 27.2 558 27.3 560 28.0 562 28.3 564 27.9 566 28.1 568 27.6 570 27.8 572 28.0 574 28.2 576 28.1 578 28.9 580 30.2 L580 31.4 578 33.7 576 32.7 574 33.7 572 32.9 570 33.8 568 33.4 566 33.6 564 34.2 562 33.3 560 33.5 558 34.6 556 34.2 554 31.4Z M584 30.2 586 27.2 588 27.3 590 28.1 592 28.4 594 28.1 596 28.3 598 27.8 600 28.1 602 28.3 604 30.2 L604 31.4 602 32.8 600 33.2 598 33.0 596 34.1 594 33.2 592 34.2 590 33.4 588 34.3 586 34.0 584 31.4Z M610 30.2 612 27.3 614 27.4 616 28.2 618 28.5 620 28.2 622 28.5 624 28.0 626 30.1 L626 31.4 624 33.3 622 33.6 620 33.1 618 33.6 616 33.4 614 34.5 612 33.6 610 31.4Z M632 30.2 634 27.3 636 27.5 638 28.3 640 28.7 642 28.5 644 30.2 L644 31.6 642 33.5 640 33.6 638 33.8 636 34.1 634 33.7 632 31.4Z M646 30.2 648 27.2 650 27.3 652 28.0 654 28.2 656 27.9 658 28.1 660 27.5 662 27.7 664 27.9 666 28.0 668 28.0 670 28.7 672 28.4 674 28.8 676 29.9 L676 31.4 674 33.5 672 32.7 670 33.5 668 33.2 666 33.4 664 34.0 662 33.1 660 33.2 658 34.3 656 33.9 654 33.5 652 34.6 650 34.7 648 33.8 646 31.4Z M680 30.2 682 27.2 684 27.3 686 28.0 688 28.3 690 27.9 692 28.1 694 27.6 696 27.8 698 28.0 700 28.2 702 28.1 704 28.9 706 30.2 L706 31.4 704 33.7 702 32.7 700 33.7 698 32.9 696 33.8 694 33.4 692 33.6 690 34.2 688 33.3 686 33.5 684 34.6 682 34.2 680 31.4Z M708 30.2 710 27.2 712 27.3 714 28.1 716 28.4 718 28.1 720 28.3 722 27.8 724 28.1 726 28.3 728 30.2 L728 31.4 726 32.8 724 33.2 722 33.0 720 34.1 718 33.2 716 34.2 714 33.4 712 34.3 710 34.0 708 31.4Z M736 30.2 738 27.3 740 27.5 742 28.3 744 28.7 746 28.5 748 30.2 L748 31.6 746 33.5 744 33.6 742 33.8 740 34.1 738 33.7 736 31.4Z M752 30.2 754 27.3 756 27.5 758 28.3 760 28.7 762 28.5 764 30.2 L764 31.6 762 33.5 760 33.6 758 33.8 756 34.1 754 33.7 752 31.4Z M768 30.2 770 27.3 772 27.4 774 28.2 776 28.5 778 28.2 780 28.5 782 28.0 784 30.1 L784 31.4 782 33.3 780 33.6 778 33.1 776 33.6 774 33.4 772 34.5 770 33.6 768 31.4Z M786 30.2 788 27.2 790 27.3 792 28.0 794 28.3 796 27.9 798 28.1 800 27.6 802 27.8 804 28.0 806 28.2 808 28.1 810 28.9 812 30.2 L812 31.4 810 33.7 808 32.7 806 33.7 804 32.9 802 33.8 800 33.4 798 33.6 796 34.2 794 33.3 792 33.5 790 34.6 788 34.2 786 31.4Z M820 30.2 822 27.2 824 27.3 826 28.0 828 28.3 830 27.9 832 28.1 834 27.6 836 27.8 838 28.0 840 28.2 842 28.1 844 28.9 846 30.2 L846 31.4 844 33.7 842 32.7 840 33.7 838 32.9 836 33.8 834 33.4 832 33.6 830 34.2 828 33.3 826 33.5 824 34.6 822 34.2 820 31.4Z M854 30.2 856 27.3 858 27.5 860 28.3 862 28.7 864 28.5 866 30.2 L866 31.6 864 33.5 862 33.6 860 33.8 858 34.1 856 33.7 854 31.4Z M870 30.2 872 27.2 874 27.3 876 28.1 878 28.4 880 28.1 882 28.3 884 27.8 886 28.1 888 28.3 890 30.2 L890 31.4 888 32.8 886 33.2 884 33.0 882 34.1 880 33.2 878 34.2 876 33.4 874 34.3 872 34.0 870 31.4Z M896 30.2 898 27.3 900 27.5 902 28.3 904 28.7 906 28.5 908 30.2 L908 31.6 906 33.5 904 33.6 902 33.8 900 34.1 898 33.7 896 31.4Z M914 30.2 916 27.2 918 27.3 920 28.1 922 28.4 924 28.1 926 28.3 928 27.8 930 28.1 932 28.3 934 30.2 L934 31.4 932 32.8 930 33.2 928 33.0 926 34.1 924 33.2 922 34.2 920 33.4 918 34.3 916 34.0 914 31.4Z M938 30.2 940 27.2 942 27.3 944 28.0 946 28.3 948 27.9 950 28.1 952 27.6 954 27.8 956 28.0 958 28.2 960 28.1 962 28.9 964 30.2 L964 31.4 962 33.7 960 32.7 958 33.7 956 32.9 954 33.8 952 33.4 950 33.6 948 34.2 946 33.3 944 33.5 942 34.6 940 34.2 938 31.4Z M966 30.2 968 27.3 970 27.4 972 28.2 974 28.5 976 28.2 978 28.5 980 28.0 982 30.1 L982 31.4 980 33.3 978 33.6 976 33.1 974 33.6 972 33.4 970 34.5 968 33.6 966 31.4Z M986 30.2 988 27.3 990 27.5 992 28.3 994 28.7 996 28.5 998 30.2 L998 31.6 996 33.5 994 33.6 992 33.8 990 34.1 988 33.7 986 31.4Z M1002 30.2 1004 27.3 1006 27.5 1008 28.3 1010 28.7 1012 28.5 1014 30.2 L1014 31.6 1012 33.5 1010 33.6 1008 33.8 1006 34.1 1004 33.7 1002 31.4Z M1022 30.2 1024 27.2 1026 27.3 1028 28.0 1030 28.3 1032 27.9 1034 28.1 1036 27.6 1038 27.8 1040 28.0 1042 28.2 1044 28.1 1046 28.9 1048 30.2 L1048 31.4 1046 33.7 1044 32.7 1042 33.7 1040 32.9 1038 33.8 1036 33.4 1034 33.6 1032 34.2 1030 33.3 1028 33.5 1026 34.6 1024 34.2 1022 31.4Z M1052 30.2 1054 27.5 1056 28.2 L1056 32.8 1054 33.3 1052 31.4Z M0 51.9 2 48.9 4 49.0 6 48.9 8 49.8 10 49.8 12 50.0 14 50.0 16 49.5 18 50.3 20 49.9 22 50.4 24 50.4 26 51.9 L26 53.4 24 55.0 22 54.4 20 54.8 18 54.7 16 55.7 14 55.7 12 55.8 10 55.9 8 55.9 6 56.3 4 56.2 2 55.6 0 53.1Z M34 51.9 36 48.9 38 49.0 40 48.9 42 49.8 44 49.8 46 50.0 48 50.0 50 49.5 52 50.3 54 49.9 56 50.4 58 50.4 60 51.9 L60 53.4 58 55.0 56 54.4 54 54.8 52 54.7 50 55.7 48 55.7 46 55.8 44 55.9 42 55.9 40 56.3 38 56.2 36 55.6 34 53.1Z M64 51.9 66 48.9 68 49.1 70 49.0 72 50.0 74 50.1 76 50.3 78 50.4 80 51.8 L80 53.1 78 55.0 76 54.7 74 55.0 72 55.3 70 55.9 68 55.8 66 55.3 64 53.1Z M88 51.9 90 48.9 92 48.9 94 48.8 96 49.7 98 49.7 100 49.9 102 49.9 104 49.4 106 50.2 108 49.8 110 50.2 112 50.2 114 50.1 116 49.7 118 51.9 L118 53.1 116 54.6 114 54.5 112 55.5 110 55.5 108 55.6 106 55.7 104 55.6 102 56.0 100 55.9 98 55.3 96 56.1 94 55.7 92 56.1 90 56.0 88 53.1Z M122 51.9 124 49.0 126 49.2 128 49.2 130 50.2 132 50.3 134 51.9 L134 53.1 132 55.3 130 54.7 128 55.4 126 55.2 124 55.5 122 53.1Z M142 51.9 144 48.9 146 49.0 148 48.9 150 49.9 152 49.9 154 50.2 156 50.2 158 49.7 160 50.5 162 51.9 L162 53.1 160 54.7 158 54.9 156 55.5 154 55.4 152 54.8 150 55.2 148 55.2 146 56.2 144 56.2 142 53.1Z M166 51.9 168 49.0 170 49.2 172 49.2 174 50.2 176 50.3 178 51.9 L178 53.1 176 55.3 174 54.7 172 55.4 170 55.2 168 55.5 166 53.1Z M182 51.9 184 48.9 186 48.9 188 48.8 190 49.7 192 49.7 194 49.9 196 49.9 198 49.4 200 50.2 202 49.8 204 50.2 206 50.2 208 50.1 210 49.7 212 51.9 L212 53.1 210 54.6 208 54.5 206 55.5 204 55.5 202 55.6 200 55.7 198 55.6 196 56.0 194 55.9 192 55.3 190 56.1 188 55.7 186 56.1 184 56.0 182 53.1Z M220 51.9 222 48.9 224 49.0 226 48.9 228 49.8 230 49.8 232 50.0 234 50.0 236 49.5 238 50.3 240 49.9 242 50.4 244 50.4 246 51.9 L246 53.4 244 55.0 242 54.4 240 54.8 238 54.7 236 55.7 234 55.7 232 55.8 230 55.9 228 55.9 226 56.3 224 56.2 222 55.6 220 53.1Z M250 51.9 252 48.9 254 48.9 256 48.8 258 49.7 260 49.7 262 49.9 264 49.9 266 49.4 268 50.2 270 49.8 272 50.2 274 50.2 276 50.1 278 49.7 280 51.9 L280 53.1 278 54.6 276 54.5 274 55.5 272 55.5 270 55.6 268 55.7 266 55.6 264 56.0 262 55.9 260 55.3 258 56.1 256 55.7 254 56.1 252 56.0 250 53.1Z M282 51.9 284 48.9 286 48.9 288 48.8 290 49.7 292 49.7 294 49.9 296 49.9 298 49.4 300 50.2 302 49.8 304 50.2 306 50.2 308 50.1 310 49.7 312 51.9 L312 53.1 310 54.6 308 54.5 306 55.5 304 55.5 302 55.6 300 55.7 298 55.6 296 56.0 294 55.9 292 55.3 290 56.1 288 55.7 286 56.1 284 56.0 282 53.1Z M316 51.9 318 49.0 320 49.2 322 49.2 324 50.2 326 50.3 328 51.9 L328 53.1 326 55.3 324 54.7 322 55.4 320 55.2 318 55.5 316 53.1Z M330 51.9 332 48.9 334 49.1 336 49.0 338 50.0 340 50.1 342 50.3 344 50.4 346 51.8 L346 53.1 344 55.0 342 54.7 340 55.0 338 55.3 336 55.9 334 55.8 332 55.3 330 53.1Z M350 51.9 352 48.9 354 48.9 356 48.8 358 49.7 360 49.7 362 49.9 364 49.9 366 49.4 368 50.2 370 49.8 372 50.2 374 50.2 376 50.1 378 49.7 380 51.9 L380 53.1 378 54.6 376 54.5 374 55.5 372 55.5 370 55.6 368 55.7 366 55.6 364 56.0 362 55.9 360 55.3 358 56.1 356 55.7 354 56.1 352 56.0 350 53.1Z M384 51.9 386 48.9 388 49.0 390 48.9 392 49.8 394 49.8 396 50.0 398 50.0 400 49.5 402 50.3 404 49.9 406 50.4 408 50.4 410 51.9 L410 53.4 408 55.0 406 54.4 404 54.8 402 54.7 400 55.7 398 55.7 396 55.8 394 55.9 392 55.9 390 56.3 388 56.2 386 55.6 384 53.1Z M416 51.9 418 48.9 420 49.0 422 48.9 424 49.8 426 49.8 428 50.0 430 50.0 432 49.5 434 50.3 436 49.9 438 50.4 440 50.4 442 51.9 L442 53.4 440 55.0 438 54.4 436 54.8 434 54.7 432 55.7 430 55.7 428 55.8 426 55.9 424 55.9 422 56.3 420 56.2 418 55.6 416 53.1Z M446 51.9 448 48.9 450 48.9 452 48.8 454 49.7 456 49.7 458 49.9 460 49.9 462 49.4 464 50.2 466 49.8 468 50.2 470 50.2 472 50.1 474 49.7 476 51.9 L476 53.1 474 54.6 472 54.5 470 55.5 468 55.5 466 55.6 464 55.7 462 55.6 460 56.0 458 55.9 456 55.3 454 56.1 452 55.7 450 56.1 448 56.0 446 53.1Z M480 51.9 482 48.9 484 49.0 486 48.9 488 49.9 490 49.9 492 50.2 494 50.2 496 49.7 498 50.5 500 51.9 L500 53.1 498 54.7 496 54.9 494 55.5 492 55.4 490 54.8 488 55.2 486 55.2 484 56.2 482 56.2 480 53.1Z M508 51.9 510 49.0 512 49.2 514 49.2 516 50.2 518 50.3 520 51.9 L520 53.1 518 55.3 516 54.7 514 55.4 512 55.2 510 55.5 508 53.1Z M522 51.9 524 48.9 526 49.0 528 48.9 530 49.8 532 49.8 534 50.0 536 50.0 538 49.5 540 50.3 542 49.9 544 50.4 546 50.4 548 51.9 L548 53.4 546 55.0 544 54.4 542 54.8 540 54.7 538 55.7 536 55.7 534 55.8 532 55.9 530 55.9 528 56.3 526 56.2 524 55.6 522 53.1Z M554 51.9 556 48.9 558 49.0 560 48.9 562 49.8 564 49.8 566 50.0 568 50.0 570 49.5 572 50.3 574 49.9 576 50.4 578 50.4 580 51.9 L580 53.4 578 55.0 576 54.4 574 54.8 572 54.7 570 55.7 568 55.7 566 55.8 564 55.9 562 55.9 560 56.3 558 56.2 556 55.6 554 53.1Z M584 51.9 586 48.9 588 49.0 590 48.9 592 49.9 594 49.9 596 50.2 598 50.2 600 49.7 602 50.5 604 51.9 L604 53.1 602 54.7 600 54.9 598 55.5 596 55.4 594 54.8 592 55.2 590 55.2 588 56.2 586 56.2 584 53.1Z M610 51.9 612 48.9 614 49.1 616 49.0 618 50.0 620 50.1 622 50.3 624 50.4 626 51.8 L626 53.1 624 55.0 622 54.7 620 55.0 618 55.3 616 55.9 614 55.8 612 55.3 610 53.1Z M632 51.9 634 49.0 636 49.2 638 49.2 640 50.2 642 50.3 644 51.9 L644 53.1 642 55.3 640 54.7 638 55.4 636 55.2 634 55.5 632 53.1Z M646 51.9 648 48.9 650 48.9 652 48.8 654 49.7 656 49.7 658 49.9 660 49.9 662 49.4 664 50.2 666 49.8 668 50.2 670 50.2 672 50.1 674 49.7 676 51.9 L676 53.1 674 54.6 672 54.5 670 55.5 668 55.5 666 55.6 664 55.7 662 55.6 660 56.0 658 55.9 656 55.3 654 56.1 652 55.7 650 56.1 648 56.0 646 53.1Z M680 51.9 682 48.9 684 49.0 686 48.9 688 49.8 690 49.8 692 50.0 694 50.0 696 49.5 698 50.3 700 49.9 702 50.4 704 50.4 706 51.9 L706 53.4 704 55.0 702 54.4 700 54.8 698 54.7 696 55.7 694 55.7 692 55.8 690 55.9 688 55.9 686 56.3 684 56.2 682 55.6 680 53.1Z M708 51.9 710 48.9 712 49.0 714 48.9 716 49.9 718 49.9 720 50.2 722 50.2 724 49.7 726 50.5 728 51.9 L728 53.1 726 54.7 724 54.9 722 55.5 720 55.4 718 54.8 716 55.2 714 55.2 712 56.2 710 56.2 708 53.1Z M736 51.9 738 49.0 740 49.2 742 49.2 744 50.2 746 50.3 748 51.9 L748 53.1 746 55.3 744 54.7 742 55.4 740 55.2 738 55.5 736 53.1Z M752 51.9 754 49.0 756 49.2 758 49.2 760 50.2 762 50.3 764 51.9 L764 53.1 762 55.3 760 54.7 758 55.4 756 55.2 754 55.5 752 53.1Z M768 51.9 770 48.9 772 49.1 774 49.0 776 50.0 778 50.1 780 50.3 782 50.4 784 51.8 L784 53.1 782 55.0 780 54.7 778 55.0 776 55.3 774 55.9 772 55.8 770 55.3 768 53.1Z M786 51.9 788 48.9 790 49.0 792 48.9 794 49.8 796 49.8 798 50.0 800 50.0 802 49.5 804 50.3 806 49.9 808 50.4 810 50.4 812 51.9 L812 53.4 810 55.0 808 54.4 806 54.8 804 54.7 802 55.7 800 55.7 798 55.8 796 55.9 794 55.9 792 56.3 790 56.2 788 55.6 786 53.1Z M820 51.9 822 48.9 824 49.0 826 48.9 828 49.8 830 49.8 832 50.0 834 50.0 836 49.5 838 50.3 840 49.9 842 50.4 844 50.4 846 51.9 L846 53.4 844 55.0 842 54.4 840 54.8 838 54.7 836 55.7 834 55.7 832 55.8 830 55.9 828 55.9 826 56.3 824 56.2 822 55.6 820 53.1Z M854 51.9 856 49.0 858 49.2 860 49.2 862 50.2 864 50.3 866 51.9 L866 53.1 864 55.3 862 54.7 860 55.4 858 55.2 856 55.5 854 53.1Z M870 51.9 872 48.9 874 49.0 876 48.9 878 49.9 880 49.9 882 50.2 884 50.2 886 49.7 888 50.5 890 51.9 L890 53.1 888 54.7 886 54.9 884 55.5 882 55.4 880 54.8 878 55.2 876 55.2 874 56.2 872 56.2 870 53.1Z M896 51.9 898 49.0 900 49.2 902 49.2 904 50.2 906 50.3 908 51.9 L908 53.1 906 55.3 904 54.7 902 55.4 900 55.2 898 55.5 896 53.1Z M914 51.9 916 48.9 918 49.0 920 48.9 922 49.9 924 49.9 926 50.2 928 50.2 930 49.7 932 50.5 934 51.9 L934 53.1 932 54.7 930 54.9 928 55.5 926 55.4 924 54.8 922 55.2 920 55.2 918 56.2 916 56.2 914 53.1Z M938 51.9 940 48.9 942 49.0 944 48.9 946 49.8 948 49.8 950 50.0 952 50.0 954 49.5 956 50.3 958 49.9 960 50.4 962 50.4 964 51.9 L964 53.4 962 55.0 960 54.4 958 54.8 956 54.7 954 55.7 952 55.7 950 55.8 948 55.9 946 55.9 944 56.3 942 56.2 940 55.6 938 53.1Z M966 51.9 968 48.9 970 49.1 972 49.0 974 50.0 976 50.1 978 50.3 980 50.4 982 51.8 L982 53.1 980 55.0 978 54.7 976 55.0 974 55.3 972 55.9 970 55.8 968 55.3 966 53.1Z M986 51.9 988 49.0 990 49.2 992 49.2 994 50.2 996 50.3 998 51.9 L998 53.1 996 55.3 994 54.7 992 55.4 990 55.2 988 55.5 986 53.1Z M1002 51.9 1004 49.0 1006 49.2 1008 49.2 1010 50.2 1012 50.3 1014 51.9 L1014 53.1 1012 55.3 1010 54.7 1008 55.4 1006 55.2 1004 55.5 1002 53.1Z M1022 51.9 1024 48.9 1026 49.0 1028 48.9 1030 49.8 1032 49.8 1034 50.0 1036 50.0 1038 49.5 1040 50.3 1042 49.9 1044 50.4 1046 50.4 1048 51.9 L1048 53.4 1046 55.0 1044 54.4 1042 54.8 1040 54.7 1038 55.7 1036 55.7 1034 55.8 1032 55.9 1030 55.9 1028 56.3 1026 56.2 1024 55.6 1022 53.1Z M1052 51.9 1054 49.2 1056 49.9 L1056 55.3 1054 55.2 1052 53.1Z" fill="#15150f"/></svg>
<svg style="left:448px;top:735px" width="1109" height="64"><path d="M616 23.3 617 27.8 618 27.3 619 27.8 620 28.6 621 26.0 622 28.2 623 28.5 624 27.4 625 27.6 626 25.4 627 27.5 628 28.4 629 27.9 630 28.1 631 26.5 632 28.2 633 28.3 634 27.2 635 27.4 636 26.1 637 25.1 638 27.9 639 28.0 640 27.3 641 27.5 642 27.8 643 27.7 644 28.2 645 27.7 646 27.8 647 24.7 648 26.4 649 27.4 650 27.5 651 27.2 652 27.9 653 27.1 654 27.2 655 28.0 656 25.5 657 24.0 658 28.2 659 27.9 660 28.5 661 27.2 662 27.4 663 28.2 664 27.8 665 28.6 666 27.3 667 25.3 668 26.9 669 28.2 670 28.6 671 25.7 672 27.6 673 27.7 674 28.0 675 27.2 676 28.4 677 26.5 678 25.1 679 27.7 680 28.2 681 28.3 682 27.5 683 28.5 684 27.2 685 26.1 686 28.5 687 27.4 688 23.3 689 28.1 690 27.8 691 27.1 692 27.6 693 27.4 694 28.1 695 27.8 696 28.5 697 27.0 698 24.3 699 27.1 700 26.1 701 27.9 702 28.0 703 27.1 704 28.2 705 27.3 706 27.9 707 28.0 708 26.2 709 25.9 710 27.4 711 27.5 712 27.5 713 28.2 714 28.0 715 27.3 716 26.0 717 28.1 718 25.8 719 24.6 720 28.4 721 28.3 722 27.6 723 28.2 724 28.1 725 27.2 726 27.5 727 27.6 728 27.4 729 23.5 730 28.3 731 28.3 732 28.5 733 27.1 734 28.6 735 28.5 736 27.5 737 28.6 738 28.4 739 24.9 L739 36.7 738 33.2 737 33.0 736 34.1 735 33.1 734 33.0 733 34.5 732 33.1 731 33.3 730 33.3 729 38.1 728 34.2 727 34.0 726 34.1 725 34.4 724 33.5 723 33.4 722 34.0 721 33.3 720 33.2 719 37.0 718 35.8 717 33.5 716 35.6 715 34.3 714 33.6 713 33.4 712 34.1 711 34.1 710 34.2 709 35.7 708 35.4 707 33.6 706 33.7 705 34.3 704 33.4 703 34.5 702 33.6 701 33.7 700 35.5 699 34.5 698 37.3 697 34.6 696 33.1 695 33.8 694 33.5 693 34.2 692 34.0 691 34.5 690 33.8 689 33.5 688 38.3 687 34.2 686 33.1 685 35.5 684 34.4 683 33.1 682 34.1 681 33.3 680 33.4 679 33.9 678 36.5 677 35.1 676 33.2 675 34.4 674 33.6 673 33.9 672 34.0 671 35.9 670 33.0 669 33.4 668 34.7 667 36.3 666 34.3 665 33.0 664 33.8 663 33.4 662 34.2 661 34.4 660 33.1 659 33.7 658 33.4 657 37.6 656 36.1 655 33.6 654 34.4 653 34.5 652 33.7 651 34.4 650 34.1 649 34.2 648 35.2 647 36.9 646 33.8 645 33.9 644 33.4 643 33.9 642 33.8 641 34.1 640 34.3 639 33.6 638 33.7 637 36.5 636 35.5 635 34.2 634 34.4 633 33.3 632 33.4 631 35.1 630 33.5 629 33.7 628 33.2 627 34.1 626 36.2 625 34.0 624 34.2 623 33.1 622 33.4 621 35.6 620 33.0 619 33.8 618 34.3 617 33.8 616 38.3Z M903 22.1 904 28.3 905 28.0 906 28.2 907 28.1 908 27.1 909 27.1 910 28.5 911 27.7 912 28.3 913 24.4 914 26.7 915 28.2 916 28.1 917 27.1 918 28.4 919 27.5 920 28.5 921 28.5 922 27.8 923 25.5 924 25.6 925 27.6 926 27.5 927 28.5 928 28.0 929 28.0 930 27.1 931 28.0 932 27.2 933 27.6 934 23.6 935 27.3 936 26.4 937 27.3 938 27.9 939 27.8 940 27.7 941 27.4 942 27.4 943 28.0 944 22.0 945 27.6 946 27.5 947 26.2 948 28.0 949 28.3 950 27.2 951 28.2 952 27.8 953 28.0 954 25.9 955 27.2 956 27.8 957 27.4 958 27.9 959 28.2 960 28.5 961 28.3 962 26.3 963 26.4 964 24.6 965 24.8 966 27.7 967 27.2 968 28.6 969 27.6 970 27.3 971 27.7 972 27.2 973 28.3 974 27.2 975 23.6 976 28.3 977 27.4 978 27.6 979 27.3 980 28.2 981 27.0 982 27.7 983 27.6 984 27.4 985 23.8 986 28.1 987 27.8 988 27.1 989 27.6 990 28.1 991 27.1 992 27.2 993 27.6 994 26.3 995 26.3 996 26.3 997 28.3 998 28.0 999 28.1 1000 27.2 1001 26.1 1002 27.8 1003 28.4 1004 28.1 1005 26.1 1006 25.0 1007 27.8 1008 28.0 1009 27.7 1010 26.1 1011 27.3 1012 28.0 1013 28.6 1014 28.4 1015 27.4 1016 21.6 1017 27.7 1018 27.5 1019 28.1 1020 27.7 1021 28.0 1022 27.7 1023 28.2 1024 27.3 1025 27.8 1026 25.1 L1026 36.5 1025 33.8 1024 34.3 1023 33.4 1022 33.9 1021 33.6 1020 33.9 1019 33.5 1018 34.1 1017 33.9 1016 40.0 1015 34.2 1014 33.2 1013 33.0 1012 33.6 1011 34.3 1010 35.5 1009 33.9 1008 33.6 1007 33.8 1006 36.6 1005 35.5 1004 33.5 1003 33.2 1002 33.8 1001 35.5 1000 34.4 999 33.5 998 33.6 997 33.3 996 35.3 995 35.3 994 35.3 993 34.0 992 34.4 991 34.5 990 33.5 989 34.0 988 34.5 987 33.8 986 33.5 985 37.8 984 34.2 983 34.0 982 33.9 981 34.6 980 33.4 979 34.3 978 34.0 977 34.2 976 33.3 975 38.0 974 34.4 973 33.3 972 34.4 971 33.9 970 34.3 969 34.0 968 33.0 967 34.4 966 33.9 965 36.8 964 37.0 963 35.2 962 35.3 961 33.3 960 33.1 959 33.4 958 33.7 957 34.2 956 33.8 955 34.4 954 35.7 953 33.6 952 33.8 951 33.4 950 34.4 949 33.3 948 33.6 947 35.4 946 34.1 945 34.0 944 39.6 943 33.6 942 34.2 941 34.2 940 33.9 939 33.8 938 33.7 937 34.3 936 35.2 935 34.3 934 38.0 933 34.0 932 34.4 931 33.6 930 34.5 929 33.6 928 33.6 927 33.1 926 34.1 925 34.0 924 36.0 923 36.1 922 33.8 921 33.1 920 33.1 919 34.1 918 33.2 917 34.5 916 33.5 915 33.4 914 34.9 913 37.2 912 33.3 911 33.9 910 33.1 909 34.5 908 34.5 907 33.5 906 33.4 905 33.6 904 33.3 903 39.5Z M616 49.1 617 51.0 618 50.5 619 50.9 620 50.8 621 51.1 622 50.2 623 50.5 624 49.0 625 50.4 626 49.9 627 50.7 628 50.7 629 50.5 630 50.4 631 50.3 632 50.9 633 50.1 634 51.0 635 51.1 636 50.1 637 50.8 638 50.4 639 50.2 640 50.1 641 50.4 642 50.4 643 50.9 644 51.0 645 51.1 646 50.3 647 50.0 648 50.2 649 50.6 650 51.0 651 50.9 652 50.0 653 51.0 654 50.9 655 50.1 656 50.6 657 49.3 658 50.0 659 50.3 660 50.3 661 50.7 662 50.2 663 50.4 664 51.0 665 50.7 666 50.1 667 50.3 668 50.8 669 50.6 670 51.1 671 50.2 672 50.1 673 50.3 674 50.6 675 51.0 676 50.5 677 50.5 678 49.9 679 50.0 680 50.2 681 50.4 682 50.7 683 50.7 684 50.7 685 50.6 686 50.5 687 50.8 688 50.3 689 50.5 690 51.0 691 50.6 692 50.8 693 50.8 694 48.6 695 50.8 696 50.9 697 51.0 698 48.4 699 50.3 700 50.0 701 51.1 702 50.9 703 50.5 704 50.4 705 50.1 706 50.4 707 50.9 708 50.7 709 50.4 710 50.6 711 50.2 712 50.7 713 49.9 714 50.9 715 50.2 716 51.1 717 50.2 718 50.5 719 50.6 720 50.1 721 50.8 722 50.3 723 50.9 724 50.4 725 50.5 726 50.6 727 50.0 728 48.5 729 49.4 730 50.6 731 50.2 732 50.8 733 49.0 734 50.5 735 49.7 736 50.9 737 50.7 738 50.2 739 50.4 L739 54.6 738 54.8 737 54.3 736 54.1 735 55.3 734 54.5 733 56.0 732 54.2 731 54.8 730 54.4 729 55.6 728 56.5 727 55.0 726 54.4 725 54.5 724 54.6 723 54.1 722 54.7 721 54.2 720 54.9 719 54.4 718 54.5 717 54.8 716 53.9 715 54.8 714 54.1 713 55.1 712 54.3 711 54.8 710 54.4 709 54.6 708 54.3 707 54.1 706 54.6 705 54.9 704 54.6 703 54.5 702 54.1 701 53.9 700 55.0 699 54.7 698 56.6 697 54.0 696 54.1 695 54.2 694 56.4 693 54.2 692 54.2 691 54.4 690 54.0 689 54.5 688 54.7 687 54.2 686 54.5 685 54.4 684 54.3 683 54.3 682 54.3 681 54.6 680 54.8 679 55.0 678 55.1 677 54.5 676 54.5 675 54.0 674 54.4 673 54.7 672 54.9 671 54.8 670 53.9 669 54.4 668 54.2 667 54.7 666 54.9 665 54.3 664 54.0 663 54.6 662 54.8 661 54.3 660 54.7 659 54.7 658 55.0 657 55.7 656 54.4 655 54.9 654 54.1 653 54.0 652 55.0 651 54.1 650 54.0 649 54.4 648 54.8 647 55.0 646 54.7 645 53.9 644 54.0 643 54.1 642 54.6 641 54.6 640 54.9 639 54.8 638 54.6 637 54.2 636 54.9 635 53.9 634 54.0 633 54.9 632 54.1 631 54.7 630 54.6 629 54.5 628 54.3 627 54.3 626 55.1 625 54.6 624 56.0 623 54.5 622 54.8 621 53.9 620 54.2 619 54.1 618 54.5 617 54.0 616 55.9Z M903 49.2 904 49.9 905 51.0 906 50.9 907 50.2 908 50.6 909 49.9 910 50.5 911 50.2 912 50.7 913 49.7 914 50.7 915 50.7 916 50.0 917 49.4 918 50.3 919 50.1 920 50.1 921 50.2 922 51.0 923 50.8 924 49.9 925 49.9 926 50.8 927 50.8 928 50.3 929 50.1 930 50.5 931 50.8 932 50.4 933 50.1 934 50.2 935 48.6 936 50.2 937 50.5 938 50.6 939 50.8 940 50.7 941 50.0 942 49.4 943 50.4 944 49.3 945 50.6 946 50.2 947 51.1 948 51.0 949 50.1 950 50.0 951 50.6 952 51.0 953 51.0 954 50.3 955 50.1 956 50.9 957 51.0 958 50.5 959 50.8 960 50.6 961 50.6 962 50.1 963 50.7 964 50.9 965 49.9 966 50.4 967 50.2 968 50.0 969 50.0 970 49.9 971 50.5 972 50.2 973 50.2 974 50.1 975 50.2 976 50.2 977 50.8 978 50.4 979 50.8 980 50.4 981 50.7 982 50.1 983 50.5 984 51.0 985 50.1 986 50.8 987 49.9 988 50.7 989 50.1 990 50.7 991 50.3 992 50.8 993 51.0 994 50.0 995 50.3 996 50.3 997 50.1 998 48.8 999 51.1 1000 50.5 1001 50.5 1002 50.2 1003 50.7 1004 50.3 1005 50.3 1006 49.6 1007 50.9 1008 50.8 1009 49.3 1010 50.7 1011 50.2 1012 50.8 1013 50.5 1014 51.1 1015 50.3 1016 49.6 1017 50.1 1018 50.4 1019 50.7 1020 50.2 1021 50.9 1022 50.3 1023 50.9 1024 50.8 1025 50.4 1026 50.6 L1026 54.4 1025 54.6 1024 54.2 1023 54.1 1022 54.7 1021 54.1 1020 54.8 1019 54.3 1018 54.6 1017 54.9 1016 55.4 1015 54.7 1014 53.9 1013 54.5 1012 54.2 1011 54.8 1010 54.3 1009 55.7 1008 54.2 1007 54.1 1006 55.4 1005 54.7 1004 54.7 1003 54.3 1002 54.8 1001 54.5 1000 54.5 999 53.9 998 56.2 997 54.9 996 54.7 995 54.7 994 55.0 993 54.0 992 54.2 991 54.7 990 54.3 989 54.9 988 54.3 987 55.1 986 54.2 985 54.9 984 54.0 983 54.5 982 54.9 981 54.3 980 54.6 979 54.2 978 54.6 977 54.2 976 54.8 975 54.8 974 54.9 973 54.8 972 54.8 971 54.5 970 55.1 969 55.0 968 55.0 967 54.8 966 54.6 965 55.1 964 54.1 963 54.3 962 54.9 961 54.4 960 54.4 959 54.2 958 54.5 957 54.0 956 54.1 955 54.9 954 54.7 953 54.0 952 54.0 951 54.4 950 55.0 949 54.9 948 54.0 947 53.9 946 54.8 945 54.4 944 55.7 943 54.6 942 55.6 941 55.0 940 54.3 939 54.2 938 54.4 937 54.5 936 54.8 935 56.4 934 54.8 933 54.9 932 54.6 931 54.2 930 54.5 929 54.9 928 54.7 927 54.2 926 54.2 925 55.1 924 55.1 923 54.2 922 54.0 921 54.8 920 54.9 919 54.9 918 54.7 917 55.6 916 55.0 915 54.3 914 54.3 913 55.3 912 54.3 911 54.8 910 54.5 909 55.1 908 54.4 907 54.8 906 54.1 905 54.0 904 55.1 903 55.8Z" fill="#15150f"/></svg>
<svg style="left:448px;top:801px" width="1109" height="64"><path d="M0 28.2 2 28.8 4 28.9 6 26.9 8 28.3 10 28.3 12 28.5 14 28.4 16 26.8 18 28.7 20 27.3 22 28.6 24 29.0 26 26.0 28 28.3 30 28.2 32 28.4 34 28.9 36 28.9 38 27.9 40 27.1 42 28.8 44 28.8 46 28.9 48 28.4 50 28.5 52 27.1 54 28.6 56 28.7 58 28.4 60 29.0 62 27.4 64 28.6 66 29.1 68 27.8 70 29.1 72 27.9 74 28.8 76 29.1 78 27.8 80 28.5 82 26.8 84 28.3 86 28.7 88 26.4 90 27.9 92 26.6 94 27.9 96 29.2 98 28.0 100 29.2 102 27.1 104 28.5 106 28.7 108 26.8 110 27.8 112 27.6 114 28.7 116 28.7 118 28.9 120 27.9 122 27.3 124 28.1 126 29.1 128 28.4 130 28.2 132 26.4 134 28.1 136 29.1 138 28.7 140 28.0 142 28.9 144 27.7 146 28.9 148 29.2 150 28.1 152 29.1 154 27.7 156 28.4 158 28.7 160 27.9 162 28.9 164 27.6 166 28.9 168 28.8 170 25.9 172 27.8 174 28.3 176 29.0 178 28.7 180 27.3 182 28.6 184 27.5 186 28.7 188 28.8 190 27.0 192 28.3 194 28.6 196 28.4 198 29.0 200 27.7 202 28.2 204 27.8 206 27.8 208 28.7 210 28.7 212 27.9 214 29.0 216 28.4 218 29.1 220 28.9 222 27.5 224 28.5 226 27.1 228 28.7 230 29.1 232 27.7 234 28.7 236 28.1 238 28.5 240 29.0 242 27.3 244 28.4 246 26.4 248 28.1 250 29.0 252 27.2 254 28.3 256 27.4 258 28.8 260 28.9 262 26.8 264 27.8 266 27.5 268 28.8 270 29.2 272 27.3 274 28.3 276 27.3 278 27.8 280 28.8 282 28.1 284 28.6 286 28.8 288 28.6 290 28.9 292 28.3 294 27.9 296 28.8 298 27.9 300 28.6 302 28.6 304 28.2 306 29.0 308 27.8 310 29.0 312 28.9 314 27.2 316 28.8 318 27.2 320 28.2 322 28.9 324 27.1 326 28.3 328 26.1 330 28.1 332 29.2 334 26.9 336 28.6 338 27.7 340 28.8 342 29.1 344 26.9 346 27.9 348 26.4 350 28.4 352 29.0 354 27.0 356 27.6 358 29.0 360 28.1 362 28.5 364 29.1 366 27.2 368 28.8 370 28.5 372 28.9 374 28.4 376 28.4 378 28.5 380 27.8 382 28.8 384 28.6 386 27.7 388 28.7 390 27.5 392 28.7 394 29.1 396 26.6 398 28.1 400 27.0 402 28.4 404 29.0 406 27.6 408 28.4 410 27.1 412 28.4 414 28.8 416 26.2 418 27.8 420 27.0 422 27.9 424 28.7 426 26.7 428 28.1 430 29.2 432 27.5 434 29.1 436 29.1 438 27.4 440 28.5 442 27.4 444 28.9 446 29.1 448 28.3 450 29.1 452 28.2 454 29.0 456 28.9 458 26.7 460 28.1 462 28.1 464 28.7 466 28.5 468 27.1 470 28.8 472 26.8 474 28.8 476 29.0 478 26.7 480 28.1 482 27.3 484 28.2 486 28.5 488 26.8 490 28.1 492 27.0 494 28.1 496 28.9 498 26.9 500 27.9 502 28.3 504 28.7 506 28.7 508 28.9 510 27.9 512 29.1 514 27.5 516 28.5 518 29.0 520 26.9 522 28.4 524 27.4 526 29.1 528 28.5 530 27.5 532 28.6 534 26.8 536 28.3 538 29.2 540 28.4 542 28.7 544 27.5 546 28.4 548 29.1 550 27.2 552 28.3 554 27.7 556 28.5 558 28.7 560 27.1 562 28.5 564 27.3 566 28.2 568 28.4 570 26.9 572 28.0 574 27.2 576 28.9 578 28.9 580 29.1 582 28.1 584 28.2 586 28.0 588 29.0 590 29.1 592 27.7 594 29.0 596 27.8 598 28.4 600 28.7 602 28.0 604 28.5 606 27.1 608 28.5 610 29.1 612 27.6 614 28.5 616 27.6 618 28.9 620 29.1 622 27.5 624 29.0 626 28.2 628 28.2 630 29.0 632 27.9 634 28.6 636 26.9 638 28.9 640 29.1 642 26.4 644 28.0 646 26.2 648 27.6 650 28.5 652 27.6 654 28.5 656 26.5 658 28.2 660 28.7 662 29.0 664 27.8 666 27.1 668 28.0 670 28.8 672 29.0 674 28.3 676 28.9 678 27.9 680 28.7 682 28.9 684 28.1 686 28.7 688 27.4 690 28.4 692 28.4 694 26.3 696 27.8 698 26.8 700 27.9 702 29.0 704 27.3 706 28.7 708 26.5 710 28.7 712 29.0 714 28.0 716 27.9 718 27.1 720 28.6 722 28.8 724 27.3 726 27.6 728 27.3 730 28.7 732 29.0 734 28.7 736 27.5 738 28.3 740 28.2 742 28.6 744 29.1 746 27.6 748 29.2 750 27.0 752 28.8 754 29.1 756 27.9 758 28.9 760 27.3 762 29.0 764 29.2 766 27.3 768 28.5 770 27.8 772 29.0 774 29.1 776 27.5 778 28.2 780 27.4 782 29.1 784 28.5 786 26.4 788 28.0 790 27.1 792 28.9 794 28.8 796 28.8 798 28.2 800 27.1 802 28.7 804 28.9 806 27.6 808 28.4 810 28.6 812 27.8 814 28.6 816 28.9 818 28.6 820 28.5 822 28.4 824 28.7 826 28.8 828 28.0 830 28.9 832 27.9 834 29.1 836 28.9 838 27.3 840 28.4 842 27.2 844 28.5 846 28.8 848 26.4 850 28.2 852 27.7 854 28.9 856 28.5 858 27.5 860 28.6 862 25.8 864 27.6 866 28.6 868 27.6 870 28.6 872 27.6 874 29.1 876 28.5 878 29.1 880 27.5 882 27.9 884 28.9 886 29.0 888 28.0 890 28.7 892 28.5 894 27.7 896 28.5 898 28.7 900 27.6 902 29.0 904 27.1 906 28.8 908 28.7 910 28.1 912 28.5 914 27.6 916 29.0 918 29.2 920 27.2 922 29.0 924 27.3 926 29.0 928 28.6 930 26.4 932 28.0 934 27.3 936 28.9 938 28.8 940 27.9 942 29.0 944 27.7 946 28.9 948 28.5 950 28.0 952 27.5 954 27.6 956 27.9 958 28.5 960 28.5 962 27.4 964 27.7 966 28.3 968 29.1 970 28.2 972 27.2 974 28.6 976 28.0 978 28.6 980 29.2 982 27.2 984 28.7 986 27.8 988 28.9 990 28.9 992 27.3 994 28.2 996 27.1 998 28.7 1000 28.7 1002 26.9 1004 28.6 1006 27.6 1008 28.2 1010 28.9 1012 27.0 1014 28.6 1016 26.9 1018 28.4 1020 28.6 1022 28.4 1024 28.2 1026 27.9 1028 29.2 1030 28.9 1032 28.5 1034 28.2 1036 28.7 1038 29.6 1040 29.8 1042 29.2 1044 29.5 1046 30.2 1048 29.9 1050 30.2 1052 30.1 1054 30.0 1056 29.9 L1056 31.7 1054 31.6 1052 31.5 1050 31.4 1048 31.7 1046 31.4 1044 32.1 1042 32.4 1040 31.8 1038 32.0 1036 32.9 1034 33.4 1032 33.1 1030 32.7 1028 32.4 1026 33.7 1024 33.4 1022 33.2 1020 33.0 1018 33.2 1016 34.7 1014 33.0 1012 34.6 1010 32.7 1008 33.4 1006 34.0 1004 33.0 1002 34.7 1000 32.9 998 32.9 996 34.5 994 33.4 992 34.3 990 32.7 988 32.7 986 33.8 984 32.9 982 34.4 980 32.4 978 33.0 976 33.6 974 33.0 972 34.4 970 33.4 968 32.5 966 33.3 964 33.9 962 34.2 960 33.1 958 33.1 956 33.7 954 34.0 952 34.1 950 33.6 948 33.1 946 32.7 944 33.9 942 32.6 940 33.7 938 32.8 936 32.7 934 34.3 932 33.6 930 35.2 928 33.0 926 32.6 924 34.3 922 32.6 920 34.4 918 32.4 916 32.6 914 34.0 912 33.1 910 33.5 908 32.9 906 32.8 904 34.5 902 32.6 900 34.0 898 32.9 896 33.1 894 33.9 892 33.1 890 32.9 888 33.6 886 32.6 884 32.7 882 33.7 880 34.1 878 32.5 876 33.1 874 32.5 872 34.0 870 33.0 868 34.0 866 33.0 864 34.0 862 35.8 860 33.0 858 34.1 856 33.1 854 32.7 852 33.9 850 33.4 848 35.2 846 32.8 844 33.1 842 34.4 840 33.2 838 34.3 836 32.7 834 32.5 832 33.7 830 32.7 828 33.6 826 32.8 824 32.9 822 33.2 820 33.1 818 33.0 816 32.7 814 33.0 812 33.8 810 33.0 808 33.2 806 34.0 804 32.7 802 32.9 800 34.5 798 33.4 796 32.8 794 32.8 792 32.7 790 34.5 788 33.6 786 35.2 784 33.1 782 32.5 780 34.2 778 33.4 776 34.1 774 32.5 772 32.6 770 33.8 768 33.1 766 34.3 764 32.4 762 32.6 760 34.3 758 32.7 756 33.7 754 32.5 752 32.8 750 34.6 748 32.4 746 34.0 744 32.5 742 33.0 740 33.4 738 33.3 736 34.1 734 32.9 732 32.6 730 32.9 728 34.3 726 34.0 724 34.3 722 32.8 720 33.0 718 34.5 716 33.7 714 33.6 712 32.6 710 32.9 708 35.1 706 32.9 704 34.3 702 32.6 700 33.7 698 34.8 696 33.8 694 35.3 692 33.2 690 33.2 688 34.2 686 32.9 684 33.5 682 32.7 680 32.9 678 33.7 676 32.7 674 33.3 672 32.6 670 32.8 668 33.6 666 34.5 664 33.8 662 32.6 660 32.9 658 33.4 656 35.1 654 33.1 652 34.0 650 33.1 648 34.0 646 35.4 644 33.6 642 35.2 640 32.5 638 32.7 636 34.7 634 33.0 632 33.7 630 32.6 628 33.4 626 33.4 624 32.6 622 34.1 620 32.5 618 32.7 616 34.0 614 33.1 612 34.0 610 32.5 608 33.1 606 34.5 604 33.1 602 33.6 600 32.9 598 33.2 596 33.8 594 32.6 592 33.9 590 32.5 588 32.6 586 33.6 584 33.4 582 33.5 580 32.5 578 32.7 576 32.7 574 34.4 572 33.6 570 34.7 568 33.2 566 33.4 564 34.3 562 33.1 560 34.5 558 32.9 556 33.1 554 33.9 552 33.3 550 34.4 548 32.5 546 33.2 544 34.1 542 32.9 540 33.2 538 32.4 536 33.3 534 34.8 532 33.0 530 34.1 528 33.1 526 32.5 524 34.2 522 33.2 520 34.7 518 32.6 516 33.1 514 34.1 512 32.5 510 33.7 508 32.7 506 32.9 504 32.9 502 33.3 500 33.7 498 34.7 496 32.7 494 33.5 492 34.6 490 33.5 488 34.8 486 33.1 484 33.4 482 34.3 480 33.5 478 34.9 476 32.6 474 32.8 472 34.8 470 32.8 468 34.5 466 33.1 464 32.9 462 33.5 460 33.5 458 34.9 456 32.7 454 32.6 452 33.4 450 32.5 448 33.3 446 32.5 444 32.7 442 34.2 440 33.1 438 34.2 436 32.5 434 32.5 432 34.1 430 32.4 428 33.5 426 34.9 424 32.9 422 33.7 420 34.6 418 33.8 416 35.4 414 32.8 412 33.2 410 34.5 408 33.2 406 34.0 404 32.6 402 33.2 400 34.6 398 33.5 396 35.0 394 32.5 392 32.9 390 34.1 388 32.9 386 33.9 384 33.0 382 32.8 380 33.8 378 33.1 376 33.2 374 33.2 372 32.7 370 33.1 368 32.8 366 34.4 364 32.5 362 33.1 360 33.5 358 32.6 356 34.0 354 34.6 352 32.6 350 33.2 348 35.2 346 33.7 344 34.7 342 32.5 340 32.8 338 33.9 336 33.0 334 34.7 332 32.4 330 33.5 328 35.5 326 33.3 324 34.5 322 32.7 320 33.4 318 34.4 316 32.8 314 34.4 312 32.7 310 32.6 308 33.8 306 32.6 304 33.4 302 33.0 300 33.0 298 33.7 296 32.8 294 33.7 292 33.3 290 32.7 288 33.0 286 32.8 284 33.0 282 33.5 280 32.8 278 33.8 276 34.3 274 33.3 272 34.3 270 32.4 268 32.8 266 34.1 264 33.8 262 34.8 260 32.7 258 32.8 256 34.2 254 33.3 252 34.4 250 32.6 248 33.5 246 35.2 244 33.2 242 34.3 240 32.6 238 33.1 236 33.5 234 32.9 232 33.9 230 32.5 228 32.9 226 34.5 224 33.1 222 34.1 220 32.7 218 32.5 216 33.2 214 32.6 212 33.7 210 32.9 208 32.9 206 33.8 204 33.8 202 33.4 200 33.9 198 32.6 196 33.2 194 33.0 192 33.3 190 34.6 188 32.8 186 32.9 184 34.1 182 33.0 180 34.3 178 32.9 176 32.6 174 33.3 172 33.8 170 35.7 168 32.8 166 32.7 164 34.0 162 32.7 160 33.7 158 32.9 156 33.2 154 33.9 152 32.5 150 33.5 148 32.4 146 32.7 144 33.9 142 32.7 140 33.6 138 32.9 136 32.5 134 33.5 132 35.2 130 33.4 128 33.2 126 32.5 124 33.5 122 34.3 120 33.7 118 32.7 116 32.9 114 32.9 112 34.0 110 33.8 108 34.8 106 32.9 104 33.1 102 34.5 100 32.4 98 33.6 96 32.4 94 33.7 92 35.0 90 33.7 88 35.2 86 32.9 84 33.3 82 34.8 80 33.1 78 33.8 76 32.5 74 32.8 72 33.7 70 32.5 68 33.8 66 32.5 64 33.0 62 34.2 60 32.6 58 33.2 56 32.9 54 33.0 52 34.5 50 33.1 48 33.2 46 32.7 44 32.8 42 32.8 40 34.5 38 33.7 36 32.7 34 32.7 32 33.2 30 33.4 28 33.3 26 35.6 24 32.6 22 33.0 20 34.3 18 32.9 16 34.8 14 33.2 12 33.1 10 33.3 8 33.3 6 34.7 4 32.7 2 32.8 0 33.4Z M0 49.9 2 50.7 4 50.8 6 48.8 8 50.1 10 48.5 12 50.1 14 50.5 16 48.9 18 50.5 20 49.9 22 50.3 24 50.5 26 49.7 28 50.0 30 48.8 32 50.3 34 50.7 36 49.3 38 49.0 40 50.3 42 50.6 44 50.7 46 50.1 48 50.3 50 49.5 52 50.7 54 50.3 56 50.8 58 49.8 60 50.8 62 49.0 64 50.4 66 50.2 68 49.0 70 50.2 72 49.5 74 50.2 76 50.5 78 49.9 80 50.1 82 49.0 84 50.1 86 50.6 88 48.5 90 50.4 92 50.2 94 50.6 96 50.8 98 49.5 100 50.6 102 48.4 104 49.6 106 50.4 108 48.8 110 49.0 112 47.2 114 49.9 116 50.3 118 50.4 120 49.3 122 50.0 124 50.3 126 50.3 128 50.2 130 49.5 132 50.4 134 49.0 136 50.5 138 50.1 140 50.1 142 50.9 144 48.7 146 50.3 148 50.7 150 49.2 152 50.2 154 48.4 156 49.7 158 50.6 160 49.4 162 50.5 164 48.4 166 49.7 168 50.5 170 48.2 172 49.7 174 49.0 176 50.3 178 50.3 180 49.8 182 50.3 184 47.9 186 50.3 188 50.5 190 49.4 192 49.4 194 49.8 196 49.8 198 50.7 200 49.2 202 50.2 204 49.3 206 49.7 208 50.7 210 49.0 212 49.4 214 49.6 216 49.7 218 50.5 220 50.2 222 50.1 224 50.7 226 50.1 228 50.0 230 50.9 232 48.0 234 50.1 236 49.5 238 50.5 240 50.7 242 47.9 244 49.8 246 49.1 248 50.8 250 50.2 252 49.3 254 49.9 256 49.9 258 50.5 260 50.4 262 48.2 264 50.0 266 48.8 268 50.2 270 50.2 272 50.3 274 49.3 276 49.0 278 50.3 280 50.4 282 50.4 284 50.5 286 49.6 288 48.9 290 50.2 292 50.7 294 49.9 296 50.2 298 49.2 300 50.1 302 50.9 304 49.4 306 50.3 308 48.7 310 50.1 312 50.3 314 48.6 316 49.8 318 49.5 320 50.2 322 50.2 324 49.5 326 50.3 328 48.4 330 50.3 332 50.2 334 49.5 336 50.6 338 49.6 340 50.3 342 50.2 344 49.6 346 50.0 348 48.0 350 49.8 352 50.1 354 50.3 356 49.5 358 50.7 360 49.4 362 50.3 364 50.7 366 49.7 368 50.5 370 49.1 372 50.5 374 50.8 376 49.6 378 50.4 380 50.0 382 50.7 384 50.2 386 48.8 388 50.2 390 48.2 392 50.1 394 50.3 396 49.3 398 50.1 400 49.2 402 50.0 404 50.4 406 48.5 408 50.1 410 48.2 412 50.0 414 50.4 416 48.4 418 49.9 420 49.0 422 50.1 424 50.3 426 50.4 428 49.3 430 50.5 432 49.7 434 50.2 436 50.3 438 49.6 440 50.6 442 48.8 444 50.5 446 50.1 448 49.0 450 50.5 452 49.6 454 50.4 456 50.2 458 49.3 460 50.2 462 49.1 464 50.3 466 50.4 468 49.8 470 50.2 472 49.6 474 50.2 476 50.7 478 49.1 480 50.3 482 49.3 484 50.7 486 50.3 488 49.4 490 50.1 492 49.1 494 50.4 496 50.7 498 50.1 500 50.2 502 48.6 504 49.9 506 50.6 508 48.7 510 49.5 512 50.3 514 48.6 516 50.5 518 50.1 520 48.7 522 50.2 524 48.9 526 50.5 528 50.3 530 49.7 532 50.2 534 50.0 536 50.7 538 50.6 540 48.5 542 49.8 544 50.1 546 50.8 548 50.6 550 48.2 552 49.9 554 49.2 556 50.0 558 50.8 560 49.0 562 50.3 564 48.9 566 50.4 568 50.8 570 49.4 572 50.1 574 49.3 576 50.2 578 50.4 580 50.5 582 48.7 584 50.2 586 49.2 588 50.6 590 50.2 592 49.6 594 49.7 596 49.6 598 50.6 600 50.7 602 49.1 604 50.0 606 49.7 608 50.8 610 50.8 612 49.2 614 50.4 616 49.0 618 50.5 620 50.9 622 48.3 624 50.4 626 49.1 628 50.5 630 50.6 632 49.8 634 50.8 636 47.8 638 49.7 640 50.2 642 49.4 644 49.6 646 48.8 648 50.0 650 50.7 652 50.0 654 50.2 656 49.4 658 49.3 660 50.9 662 50.1 664 50.0 666 50.8 668 49.5 670 50.3 672 50.4 674 49.9 676 50.4 678 49.8 680 50.2 682 50.7 684 49.1 686 50.3 688 49.7 690 50.8 692 50.4 694 48.4 696 49.8 698 49.2 700 50.3 702 50.2 704 48.7 706 50.0 708 49.2 710 50.9 712 50.1 714 48.5 716 49.9 718 48.0 720 49.2 722 50.3 724 50.0 726 48.9 728 48.6 730 50.4 732 50.7 734 49.2 736 49.3 738 50.9 740 50.3 742 50.7 744 50.5 746 49.2 748 50.5 750 48.5 752 50.2 754 50.3 756 49.5 758 50.6 760 49.6 762 50.6 764 50.2 766 50.0 768 50.3 770 48.6 772 50.1 774 50.8 776 48.5 778 50.3 780 49.5 782 50.7 784 50.3 786 48.8 788 50.2 790 48.3 792 49.5 794 50.5 796 47.9 798 49.4 800 49.0 802 49.9 804 50.5 806 48.0 808 49.3 810 50.7 812 49.4 814 50.4 816 50.4 818 48.9 820 50.6 822 49.7 824 50.7 826 50.7 828 49.4 830 50.1 832 50.5 834 50.6 836 50.1 838 48.5 840 50.2 842 49.4 844 50.5 846 50.1 848 49.0 850 50.3 852 49.5 854 50.7 856 50.5 858 49.1 860 50.6 862 47.9 864 49.3 866 50.2 868 48.9 870 50.4 872 48.8 874 50.0 876 50.7 878 49.5 880 49.2 882 50.2 884 49.0 886 50.1 888 50.3 890 49.6 892 50.5 894 49.4 896 50.4 898 50.5 900 49.5 902 50.4 904 49.1 906 50.2 908 50.7 910 49.1 912 50.2 914 49.9 916 50.7 918 50.4 920 49.4 922 50.3 924 49.0 926 50.2 928 50.6 930 48.4 932 50.2 934 49.7 936 50.1 938 50.5 940 47.8 942 49.8 944 48.2 946 49.9 948 50.6 950 47.9 952 49.7 954 49.8 956 50.3 958 50.4 960 49.3 962 49.6 964 50.5 966 49.9 968 50.8 970 50.5 972 49.9 974 49.2 976 49.4 978 50.4 980 50.2 982 48.9 984 50.6 986 48.6 988 50.6 990 50.2 992 49.0 994 50.7 996 49.3 998 50.4 1000 50.6 1002 48.1 1004 49.5 1006 48.2 1008 50.4 1010 50.7 1012 48.8 1014 50.3 1016 48.4 1018 50.5 1020 50.8 1022 47.9 1024 49.9 1026 49.5 1028 50.9 1030 50.7 1032 51.1 1034 50.7 1036 50.7 1038 50.7 1040 51.4 1042 51.7 1044 51.1 1046 51.8 1048 51.8 1050 51.8 1052 51.8 1054 51.8 1056 51.8 L1056 53.2 1054 53.2 1052 53.2 1050 53.2 1048 53.2 1046 53.2 1044 53.9 1042 53.3 1040 53.6 1038 54.3 1036 54.3 1034 54.3 1032 53.9 1030 54.3 1028 54.1 1026 55.5 1024 55.1 1022 57.1 1020 54.2 1018 54.5 1016 56.6 1014 54.7 1012 56.2 1010 54.3 1008 54.6 1006 56.8 1004 55.5 1002 56.9 1000 54.4 998 54.6 996 55.7 994 54.3 992 56.0 990 54.8 988 54.4 986 56.4 984 54.4 982 56.1 980 54.8 978 54.6 976 55.6 974 55.8 972 55.1 970 54.5 968 54.2 966 55.1 964 54.5 962 55.4 960 55.7 958 54.6 956 54.7 954 55.2 952 55.3 950 57.1 948 54.4 946 55.1 944 56.8 942 55.2 940 57.2 938 54.5 936 54.9 934 55.3 932 54.8 930 56.6 928 54.4 926 54.8 924 56.0 922 54.7 920 55.6 918 54.6 916 54.3 914 55.1 912 54.8 910 55.9 908 54.3 906 54.8 904 55.9 902 54.6 900 55.5 898 54.5 896 54.6 894 55.6 892 54.5 890 55.4 888 54.7 886 54.9 884 56.0 882 54.8 880 55.8 878 55.5 876 54.3 874 55.0 872 56.2 870 54.6 868 56.1 866 54.8 864 55.7 862 57.1 860 54.4 858 55.9 856 54.5 854 54.3 852 55.5 850 54.7 848 56.0 846 54.9 844 54.5 842 55.6 840 54.8 838 56.5 836 54.9 834 54.4 832 54.5 830 54.9 828 55.6 826 54.3 824 54.3 822 55.3 820 54.4 818 56.1 816 54.6 814 54.6 812 55.6 810 54.3 808 55.7 806 57.0 804 54.5 802 55.1 800 56.0 798 55.6 796 57.1 794 54.5 792 55.5 790 56.7 788 54.8 786 56.2 784 54.7 782 54.3 780 55.5 778 54.7 776 56.5 774 54.2 772 54.9 770 56.4 768 54.7 766 55.0 764 54.8 762 54.4 760 55.4 758 54.4 756 55.5 754 54.7 752 54.8 750 56.5 748 54.5 746 55.8 744 54.5 742 54.3 740 54.7 738 54.1 736 55.7 734 55.8 732 54.3 730 54.6 728 56.4 726 56.1 724 55.0 722 54.7 720 55.8 718 57.0 716 55.1 714 56.5 712 54.9 710 54.1 708 55.8 706 55.0 704 56.3 702 54.8 700 54.7 698 55.8 696 55.2 694 56.6 692 54.6 690 54.2 688 55.3 686 54.7 684 55.9 682 54.3 680 54.8 678 55.2 676 54.6 674 55.1 672 54.6 670 54.7 668 55.5 666 54.2 664 55.0 662 54.9 660 54.1 658 55.7 656 55.6 654 54.8 652 55.0 650 54.3 648 55.0 646 56.2 644 55.4 642 55.6 640 54.8 638 55.3 636 57.2 634 54.2 632 55.2 630 54.4 628 54.5 626 55.9 624 54.6 622 56.7 620 54.1 618 54.5 616 56.0 614 54.6 612 55.8 610 54.2 608 54.2 606 55.3 604 55.0 602 55.9 600 54.3 598 54.4 596 55.4 594 55.3 592 55.4 590 54.8 588 54.4 586 55.8 584 54.8 582 56.3 580 54.5 578 54.6 576 54.8 574 55.7 572 54.9 570 55.6 568 54.2 566 54.6 564 56.1 562 54.7 560 56.0 558 54.2 556 55.0 554 55.8 552 55.1 550 56.8 548 54.4 546 54.2 544 54.9 542 55.2 540 56.5 538 54.4 536 54.3 534 55.0 532 54.8 530 55.3 528 54.7 526 54.5 524 56.1 522 54.8 520 56.3 518 54.9 516 54.5 514 56.4 512 54.7 510 55.5 508 56.3 506 54.4 504 55.1 502 56.4 500 54.8 498 54.9 496 54.3 494 54.6 492 55.9 490 54.9 488 55.6 486 54.7 484 54.3 482 55.7 480 54.7 478 55.9 476 54.3 474 54.8 472 55.4 470 54.8 468 55.2 466 54.6 464 54.7 462 55.9 460 54.8 458 55.7 456 54.8 454 54.6 452 55.4 450 54.5 448 56.0 446 54.9 444 54.5 442 56.2 440 54.4 438 55.4 436 54.7 434 54.8 432 55.3 430 54.5 428 55.7 426 54.6 424 54.7 422 54.9 420 56.0 418 55.1 416 56.6 414 54.6 412 55.0 410 56.8 408 54.9 406 56.5 404 54.6 402 55.0 400 55.8 398 54.9 396 55.7 394 54.7 392 54.9 390 56.8 388 54.8 386 56.2 384 54.8 382 54.3 380 55.0 378 54.6 376 55.4 374 54.2 372 54.5 370 55.9 368 54.5 366 55.3 364 54.3 362 54.7 360 55.6 358 54.3 356 55.5 354 54.7 352 54.9 350 55.2 348 57.0 346 55.0 344 55.4 342 54.8 340 54.7 338 55.4 336 54.4 334 55.5 332 54.8 330 54.7 328 56.6 326 54.7 324 55.5 322 54.8 320 54.8 318 55.5 316 55.2 314 56.4 312 54.7 310 54.9 308 56.3 306 54.7 304 55.6 302 54.1 300 54.9 298 55.8 296 54.8 294 55.1 292 54.3 290 54.8 288 56.1 286 55.4 284 54.5 282 54.6 280 54.6 278 54.7 276 56.0 274 55.7 272 54.7 270 54.8 268 54.8 266 56.2 264 55.0 262 56.8 260 54.6 258 54.5 256 55.1 254 55.1 252 55.7 250 54.8 248 54.2 246 55.9 244 55.2 242 57.1 240 54.3 238 54.5 236 55.5 234 54.9 232 57.0 230 54.1 228 55.0 226 54.9 224 54.3 222 54.9 220 54.8 218 54.5 216 55.3 214 55.4 212 55.6 210 56.0 208 54.3 206 55.3 204 55.7 202 54.8 200 55.8 198 54.3 196 55.2 194 55.2 192 55.6 190 55.6 188 54.5 186 54.7 184 57.1 182 54.7 180 55.2 178 54.7 176 54.7 174 56.0 172 55.3 170 56.8 168 54.5 166 55.3 164 56.6 162 54.5 160 55.6 158 54.4 156 55.3 154 56.6 152 54.8 150 55.8 148 54.3 146 54.7 144 56.3 142 54.1 140 54.9 138 54.9 136 54.5 134 56.0 132 54.6 130 55.5 128 54.8 126 54.7 124 54.7 122 55.0 120 55.7 118 54.6 116 54.7 114 55.1 112 57.8 110 56.0 108 56.2 106 54.6 104 55.4 102 56.6 100 54.4 98 55.5 96 54.2 94 54.4 92 54.8 90 54.6 88 56.5 86 54.4 84 54.9 82 56.0 80 54.9 78 55.1 76 54.5 74 54.8 72 55.5 70 54.8 68 56.0 66 54.8 64 54.6 62 56.0 60 54.2 58 55.2 56 54.2 54 54.7 52 54.3 50 55.5 48 54.7 46 54.9 44 54.3 42 54.4 40 54.7 38 56.0 36 55.7 34 54.3 32 54.7 30 56.2 28 55.0 26 55.3 24 54.5 22 54.7 20 55.1 18 54.5 16 56.1 14 54.5 12 54.9 10 56.5 8 54.9 6 56.2 4 54.2 2 54.3 0 55.1Z" fill="#15150f"/></svg>
<svg style="left:448px;top:867px" width="1109" height="64"><path d="M180 30.3 182 27.3 184 25.2 186 25.3 188 24.8 190 26.5 192 30.2 L192 31.3 190 34.9 188 36.2 186 36.8 184 36.6 182 34.7 180 31.3Z M192 30.3 194 27.2 196 25.2 198 25.9 200 26.0 202 27.1 204 30.3 L204 31.3 202 34.2 200 35.7 198 35.7 196 36.1 194 34.8 192 31.3Z M224 30.3 226 27.2 228 25.7 230 24.7 232 25.2 234 27.3 236 30.3 L236 31.3 234 34.5 232 36.7 230 36.4 228 36.6 226 34.7 224 31.3Z M236 30.3 238 27.2 240 26.1 242 25.0 244 25.9 246 26.9 248 30.3 L248 31.3 246 34.0 244 35.9 242 36.1 240 35.8 238 34.0 236 31.3Z M267 30.3 269 27.3 271 25.0 273 25.3 275 25.2 277 27.0 279 30.3 L279 31.3 277 34.7 275 36.4 273 36.9 271 36.8 269 34.8 267 31.3Z M279 30.3 281 26.9 283 26.1 285 24.8 287 25.3 289 27.2 291 30.3 L291 31.3 289 34.6 287 36.2 285 35.8 283 35.3 281 34.5 279 31.3Z M635 30.3 637 26.9 639 25.0 641 25.1 643 25.6 645 26.9 647 30.3 L647 31.3 645 34.2 643 36.1 641 36.7 639 36.5 637 34.9 635 31.3Z M647 30.3 649 26.9 651 25.9 653 24.9 655 25.2 657 27.1 659 30.3 L659 31.3 657 34.6 655 36.0 653 36.7 651 36.1 649 34.2 647 31.3Z M676 30.3 678 27.0 680 24.9 682 24.4 684 25.7 686 27.4 688 30.3 L688 31.3 686 34.8 684 35.9 682 36.6 680 36.2 678 34.4 676 31.3Z M688 30.3 690 27.4 692 25.2 694 25.8 696 25.8 698 27.1 700 30.3 L700 31.3 698 34.9 696 35.9 694 36.1 692 35.4 690 34.2 688 31.3Z M717 30.3 719 27.3 721 25.0 723 25.2 725 24.8 727 27.0 729 30.3 L729 31.3 727 34.9 725 36.1 723 36.4 721 36.8 719 34.2 717 31.3Z M729 30.3 731 26.6 733 25.7 735 25.9 737 25.9 739 27.3 741 30.3 L741 31.3 739 34.3 737 35.3 735 36.8 733 36.4 731 34.9 729 31.3Z M922 30.3 924 27.1 926 25.8 928 24.5 930 25.1 932 26.5 934 30.3 L934 31.3 932 35.1 930 36.1 928 36.8 926 36.4 924 35.0 922 31.3Z M934 30.3 936 27.4 938 25.5 940 25.8 942 25.8 944 26.9 946 30.2 L946 31.3 944 34.1 942 36.4 940 36.4 938 35.5 936 34.4 934 31.3Z M963 30.3 965 26.7 967 25.3 969 25.2 971 25.6 973 27.4 975 30.3 L975 31.3 973 35.1 971 36.0 969 36.3 967 36.6 965 35.1 963 31.3Z M975 30.3 977 27.7 979 25.6 981 24.8 983 26.2 985 27.6 987 30.3 L987 31.3 985 34.0 983 35.5 981 36.6 979 35.9 977 34.3 975 31.3Z M1004 30.3 1006 26.3 1008 25.7 1010 24.8 1012 25.4 1014 26.8 1016 30.3 L1016 31.3 1014 34.6 1012 35.8 1010 36.9 1008 35.9 1006 34.4 1004 31.3Z M1016 30.3 1018 26.9 1020 26.1 1022 25.9 1024 26.0 1026 27.7 1028 30.3 L1028 31.3 1026 34.8 1024 35.6 1022 35.7 1020 36.1 1018 34.4 1016 31.3Z M297 30.2 299 26.9 301 27.3 303 26.8 305 27.9 307 27.4 309 27.6 311 27.7 313 27.5 315 27.7 317 27.3 319 27.4 321 27.7 323 27.8 325 28.6 327 28.0 329 30.2 L329 31.4 327 33.3 325 33.1 323 33.1 321 34.2 319 34.1 317 33.2 315 34.0 313 33.4 311 33.5 309 34.4 307 34.5 305 34.4 303 34.3 301 34.2 299 34.4 297 31.4Z M337 30.2 339 26.6 341 27.3 343 26.8 345 26.8 347 28.0 349 27.2 351 27.3 353 27.6 355 28.3 357 28.2 359 28.3 361 28.0 363 28.0 365 30.2 L365 31.4 363 32.9 361 33.6 359 33.4 357 34.2 355 33.7 353 33.8 351 34.3 349 34.5 347 34.6 345 34.7 343 34.2 341 34.0 339 34.6 337 31.4Z M378 30.2 380 26.9 382 27.2 384 26.8 386 27.7 388 28.0 390 27.0 392 27.5 394 28.1 396 28.0 398 28.1 400 28.3 402 28.4 404 28.0 406 28.3 408 28.2 410 29.7 L410 31.6 408 33.0 406 33.0 404 34.0 402 33.6 400 34.1 398 33.8 396 33.5 394 33.9 392 34.0 390 34.1 388 34.0 386 34.2 384 33.8 382 35.0 380 34.2 378 31.4Z M420 30.2 422 27.3 424 27.2 426 27.8 428 27.4 430 28.0 432 27.3 434 28.2 436 28.2 438 27.9 440 27.9 442 27.5 444 27.5 446 28.2 448 29.4 L448 31.5 446 33.6 444 33.4 442 33.1 440 33.3 438 33.9 436 34.3 434 33.4 432 34.3 430 34.7 428 34.4 426 33.9 424 34.9 422 34.3 420 31.4Z M532 27.6 534 28.3 536 28.5 538 27.9 540 28.4 542 28.0 544 28.6 546 28.4 548 28.0 550 28.4 552 28.5 554 28.0 556 28.4 558 28.4 560 28.1 562 28.5 564 27.4 566 27.7 568 28.5 570 28.5 572 28.0 574 28.1 576 27.9 578 27.5 580 27.6 582 27.7 584 28.0 586 28.0 588 27.7 590 27.0 592 28.6 594 27.4 596 27.4 598 27.8 600 28.0 602 28.5 604 28.5 606 27.5 608 27.7 610 28.5 612 27.7 614 28.5 616 27.5 L616 34.1 614 33.1 612 33.9 610 33.1 608 33.9 606 34.1 604 33.1 602 33.1 600 33.6 598 33.8 596 34.2 594 34.2 592 33.0 590 34.6 588 33.9 586 33.6 584 33.6 582 33.9 580 34.0 578 34.1 576 33.7 574 33.5 572 33.6 570 33.1 568 33.1 566 33.9 564 34.2 562 33.1 560 33.5 558 33.2 556 33.2 554 33.6 552 33.1 550 33.2 548 33.6 546 33.2 544 33.0 542 33.6 540 33.2 538 33.7 536 33.1 534 33.3 532 34.0Z M180 52.0 182 49.0 184 47.2 186 45.9 188 47.1 190 48.9 192 52.0 L192 53.0 190 56.5 188 57.6 186 58.6 184 58.3 182 56.6 180 53.0Z M192 52.0 194 49.1 196 47.7 198 47.3 200 47.6 202 48.6 204 52.0 L204 53.0 202 56.5 200 57.2 198 58.5 196 57.8 194 56.2 192 53.0Z M224 52.0 226 48.1 228 47.1 230 46.8 232 47.3 234 48.3 236 52.0 L236 53.0 234 56.1 232 58.0 230 57.9 228 57.7 226 57.0 224 53.0Z M236 52.0 238 48.3 240 47.4 242 47.2 244 47.6 246 49.3 248 52.0 L248 53.0 246 55.8 244 57.2 242 57.4 240 58.1 238 55.6 236 53.0Z M267 52.0 269 47.9 271 46.7 273 46.7 275 46.6 277 48.5 279 52.0 L279 53.0 277 56.0 275 58.1 273 59.0 271 58.3 269 56.5 267 53.0Z M279 52.0 281 49.3 283 47.6 285 47.0 287 46.9 289 49.2 291 52.0 L291 53.0 289 56.7 287 57.9 285 57.6 283 58.1 281 55.8 279 53.0Z M635 52.0 637 48.6 639 46.8 641 46.9 643 47.4 645 49.0 647 52.0 L647 53.0 645 55.9 643 58.5 641 58.8 639 58.6 637 56.0 635 53.1Z M647 52.0 649 48.9 651 46.9 653 46.6 655 47.2 657 48.8 659 52.0 L659 53.0 657 56.0 655 57.7 653 57.9 651 57.7 649 55.7 647 53.1Z M676 52.0 678 48.5 680 47.1 682 46.7 684 46.9 686 48.6 688 52.0 L688 53.0 686 56.6 684 58.4 682 58.1 680 57.9 678 56.5 676 53.0Z M688 51.9 690 48.5 692 47.2 694 46.8 696 48.0 698 49.4 700 52.0 L700 53.0 698 55.9 696 57.5 694 58.4 692 58.0 690 56.6 688 53.0Z M717 52.0 719 48.1 721 47.3 723 46.0 725 47.2 727 48.6 729 52.0 L729 53.0 727 56.9 725 58.1 723 59.1 721 57.5 719 56.4 717 53.0Z M729 52.0 731 48.9 733 47.7 735 46.9 737 47.8 739 48.4 741 52.0 L741 53.0 739 55.8 737 57.2 735 57.5 733 57.9 731 55.6 729 53.0Z M922 52.0 924 48.8 926 46.7 928 47.0 930 46.9 932 48.0 934 52.0 L934 53.0 932 56.7 930 57.8 928 58.0 926 57.5 924 56.5 922 53.0Z M934 52.0 936 48.4 938 47.0 940 47.5 942 47.4 944 49.4 946 52.0 L946 53.0 944 55.7 942 57.1 940 58.3 938 57.7 936 56.3 934 53.0Z M963 52.0 965 48.3 967 46.4 969 46.7 971 46.7 973 48.1 975 52.0 L975 53.0 973 56.4 971 58.1 969 58.0 967 58.2 965 56.0 963 53.0Z M975 52.0 977 48.8 979 47.6 981 46.5 983 47.9 985 48.7 987 52.0 L987 53.0 985 56.0 983 57.6 981 57.9 979 57.8 977 56.0 975 53.0Z M1004 52.0 1006 48.1 1008 46.5 1010 47.0 1012 47.3 1014 48.2 1016 52.0 L1016 53.0 1014 56.0 1012 57.5 1010 58.9 1008 58.5 1006 56.5 1004 53.0Z M1016 52.0 1018 48.4 1020 48.0 1022 47.2 1024 48.0 1026 48.9 1028 51.9 L1028 53.0 1026 56.2 1024 57.6 1022 58.0 1020 57.3 1018 55.6 1016 53.0Z M297 51.9 299 49.2 301 48.3 303 48.8 305 48.8 307 49.2 309 48.9 311 49.5 313 49.8 315 49.6 317 49.8 319 49.0 321 49.8 323 49.9 325 50.0 327 50.0 329 51.9 L329 53.1 327 55.4 325 55.7 323 54.9 321 55.1 319 55.9 317 55.7 315 55.4 313 55.5 311 55.3 309 56.3 307 56.4 305 55.7 303 56.3 301 56.0 299 56.1 297 53.1Z M337 51.9 339 49.4 341 49.1 343 48.7 345 48.9 347 49.1 349 48.7 351 49.3 353 49.5 355 49.3 357 49.3 359 49.7 361 50.2 363 50.0 365 51.4 L365 53.1 363 54.6 361 55.7 359 55.0 357 55.9 355 55.4 353 55.5 351 55.7 349 55.7 347 55.7 345 55.8 343 56.3 341 56.1 339 55.9 337 53.1Z M378 51.9 380 49.3 382 48.5 384 48.7 386 48.6 388 49.6 390 49.1 392 49.0 394 48.8 396 48.9 398 50.0 400 49.1 402 49.5 404 50.1 406 50.4 408 50.2 410 51.3 L410 53.6 408 54.8 406 54.8 404 55.8 402 55.6 400 55.7 398 55.6 396 55.8 394 55.1 392 55.7 390 55.7 388 56.2 386 55.5 384 56.5 382 56.3 380 55.9 378 53.1Z M420 51.9 422 49.0 424 48.6 426 48.9 428 48.6 430 49.1 432 49.8 434 49.7 436 49.7 438 49.3 440 49.3 442 49.5 444 50.1 446 50.4 448 51.0 L448 53.6 446 54.7 444 54.9 442 55.8 440 55.0 438 55.7 436 55.9 434 56.1 432 55.3 430 55.9 428 56.1 426 55.5 424 56.7 422 55.9 420 53.1Z M532 49.3 534 50.0 536 50.2 538 49.6 540 50.1 542 49.7 544 50.3 546 50.1 548 49.7 550 50.1 552 50.2 554 49.7 556 50.1 558 50.1 560 49.8 562 50.2 564 49.1 566 49.4 568 50.2 570 50.2 572 49.7 574 49.8 576 49.6 578 49.2 580 49.3 582 49.4 584 49.7 586 49.7 588 49.4 590 48.7 592 50.3 594 49.1 596 49.1 598 49.5 600 49.7 602 50.2 604 50.2 606 49.2 608 49.4 610 50.2 612 49.4 614 50.2 616 49.2 L616 55.8 614 54.8 612 55.6 610 54.8 608 55.6 606 55.8 604 54.8 602 54.8 600 55.3 598 55.5 596 55.9 594 55.9 592 54.7 590 56.3 588 55.6 586 55.3 584 55.3 582 55.6 580 55.7 578 55.8 576 55.4 574 55.2 572 55.3 570 54.8 568 54.8 566 55.6 564 55.9 562 54.8 560 55.2 558 54.9 556 54.9 554 55.3 552 54.8 550 54.9 548 55.3 546 54.9 544 54.7 542 55.3 540 54.9 538 55.4 536 54.8 534 55.0 532 55.7Z" fill="#15150f"/></svg>
<svg style="left:448px;top:933px" width="1109" height="64"><path d="M616 27.4 617 28.2 618 28.1 619 28.0 620 28.5 621 27.0 622 27.1 623 28.6 624 29.0 625 28.8 626 28.3 627 28.6 628 28.1 629 28.2 630 28.2 631 26.9 632 28.7 633 29.1 634 29.0 635 28.7 636 27.9 637 27.7 638 28.4 639 28.2 640 28.2 641 29.1 642 28.1 643 28.2 644 28.5 645 26.8 646 28.6 647 27.3 648 28.6 649 28.7 650 29.1 651 28.0 652 27.2 653 28.6 654 28.4 655 28.3 656 29.2 657 26.9 658 28.7 659 28.8 660 28.4 661 28.5 662 27.1 663 28.2 664 29.1 665 27.9 666 26.2 667 28.3 668 28.3 669 28.9 670 28.1 671 29.2 672 28.1 673 28.4 674 28.5 675 29.0 676 28.5 677 28.8 678 27.6 679 28.6 680 29.1 681 28.5 682 28.4 683 27.5 684 28.2 685 27.1 686 29.0 687 29.0 688 28.2 689 27.7 690 28.2 691 29.1 692 28.3 693 27.5 694 29.1 695 28.5 696 29.2 697 28.0 698 26.5 699 28.7 700 28.1 701 29.1 702 28.3 703 26.7 704 28.6 705 28.4 706 28.3 707 28.8 708 28.3 709 28.3 710 28.3 711 27.8 712 28.3 713 28.9 714 27.8 715 28.2 716 29.0 717 28.7 718 27.8 719 28.6 720 28.1 721 29.2 722 29.0 723 28.2 724 28.2 725 28.9 726 28.5 727 28.1 728 26.6 729 27.8 730 28.2 731 27.4 732 29.0 733 28.7 734 27.6 735 28.5 736 28.1 737 28.5 738 28.6 739 28.0 L739 33.6 738 33.0 737 33.1 736 33.5 735 33.1 734 34.0 733 32.9 732 32.6 731 34.2 730 33.4 729 33.8 728 35.0 727 33.5 726 33.1 725 32.7 724 33.4 723 33.4 722 32.6 721 32.4 720 33.5 719 33.0 718 33.8 717 32.9 716 32.6 715 33.4 714 33.8 713 32.7 712 33.3 711 33.8 710 33.3 709 33.3 708 33.3 707 32.8 706 33.3 705 33.2 704 33.0 703 34.9 702 33.3 701 32.5 700 33.5 699 32.9 698 35.1 697 33.6 696 32.4 695 33.1 694 32.5 693 34.1 692 33.3 691 32.5 690 33.4 689 33.9 688 33.4 687 32.6 686 32.6 685 34.5 684 33.4 683 34.1 682 33.2 681 33.1 680 32.5 679 33.0 678 34.0 677 32.8 676 33.1 675 32.6 674 33.1 673 33.2 672 33.5 671 32.4 670 33.5 669 32.7 668 33.3 667 33.3 666 35.4 665 33.7 664 32.5 663 33.4 662 34.5 661 33.1 660 33.2 659 32.8 658 32.9 657 34.7 656 32.4 655 33.3 654 33.2 653 33.0 652 34.4 651 33.6 650 32.5 649 32.9 648 33.0 647 34.3 646 33.0 645 34.8 644 33.1 643 33.4 642 33.5 641 32.5 640 33.4 639 33.4 638 33.2 637 33.9 636 33.7 635 32.9 634 32.6 633 32.5 632 32.9 631 34.7 630 33.4 629 33.4 628 33.5 627 33.0 626 33.3 625 32.8 624 32.6 623 33.0 622 34.5 621 34.6 620 33.1 619 33.6 618 33.5 617 33.4 616 34.2Z M903 28.0 904 28.6 905 28.1 906 28.0 907 29.0 908 27.3 909 29.0 910 28.3 911 28.2 912 28.1 913 27.5 914 29.0 915 29.0 916 29.0 917 28.2 918 29.1 919 28.6 920 29.1 921 28.5 922 28.5 923 28.2 924 28.0 925 28.7 926 28.9 927 28.2 928 28.1 929 27.9 930 28.3 931 27.8 932 29.0 933 28.5 934 26.6 935 28.2 936 28.0 937 29.0 938 28.2 939 27.2 940 28.2 941 28.8 942 28.8 943 28.7 944 27.9 945 28.1 946 28.4 947 28.4 948 28.2 949 27.9 950 29.1 951 29.1 952 28.1 953 29.1 954 27.8 955 28.9 956 29.1 957 26.9 958 28.2 959 28.3 960 28.0 961 29.0 962 28.5 963 28.9 964 28.2 965 28.3 966 26.9 967 28.7 968 28.3 969 28.5 970 27.4 971 28.4 972 28.8 973 28.6 974 28.3 975 27.5 976 28.4 977 28.9 978 28.3 979 28.1 980 27.7 981 28.1 982 28.6 983 28.1 984 29.2 985 28.3 986 28.1 987 29.2 988 28.9 989 28.6 990 28.0 991 28.2 992 29.1 993 29.1 994 28.0 995 28.1 996 28.6 997 28.4 998 27.3 999 28.4 1000 28.4 1001 28.5 1002 28.9 1003 27.6 1004 28.4 1005 28.4 1006 27.0 1007 28.3 1008 29.0 1009 29.1 1010 28.9 1011 27.4 1012 28.6 1013 28.0 1014 29.2 1015 28.0 1016 28.1 1017 28.3 1018 28.9 1019 29.1 1020 28.7 1021 27.2 1022 28.1 1023 28.1 1024 28.5 1025 28.0 1026 28.4 L1026 33.2 1025 33.6 1024 33.1 1023 33.5 1022 33.5 1021 34.4 1020 32.9 1019 32.5 1018 32.7 1017 33.3 1016 33.5 1015 33.6 1014 32.4 1013 33.6 1012 33.0 1011 34.2 1010 32.7 1009 32.5 1008 32.6 1007 33.3 1006 34.6 1005 33.2 1004 33.2 1003 34.0 1002 32.7 1001 33.1 1000 33.2 999 33.2 998 34.3 997 33.2 996 33.0 995 33.5 994 33.6 993 32.5 992 32.5 991 33.4 990 33.6 989 33.0 988 32.7 987 32.4 986 33.5 985 33.3 984 32.4 983 33.5 982 33.0 981 33.5 980 33.9 979 33.5 978 33.3 977 32.7 976 33.2 975 34.1 974 33.3 973 33.0 972 32.8 971 33.2 970 34.2 969 33.1 968 33.3 967 32.9 966 34.7 965 33.3 964 33.4 963 32.7 962 33.1 961 32.6 960 33.6 959 33.3 958 33.4 957 34.7 956 32.5 955 32.7 954 33.8 953 32.5 952 33.5 951 32.5 950 32.5 949 33.7 948 33.4 947 33.2 946 33.2 945 33.5 944 33.7 943 32.9 942 32.8 941 32.8 940 33.4 939 34.4 938 33.4 937 32.6 936 33.6 935 33.4 934 35.0 933 33.1 932 32.6 931 33.8 930 33.3 929 33.7 928 33.5 927 33.4 926 32.7 925 32.9 924 33.6 923 33.4 922 33.1 921 33.1 920 32.5 919 33.0 918 32.5 917 33.4 916 32.6 915 32.6 914 32.6 913 34.1 912 33.5 911 33.4 910 33.3 909 32.6 908 34.3 907 32.6 906 33.6 905 33.5 904 33.0 903 33.6Z M616 48.6 617 50.0 618 50.0 619 49.1 620 49.7 621 49.9 622 50.4 623 50.3 624 50.5 625 49.7 626 49.5 627 50.4 628 50.0 629 49.9 630 50.5 631 50.7 632 49.9 633 50.4 634 50.4 635 49.8 636 50.1 637 49.5 638 50.7 639 50.4 640 50.8 641 50.1 642 50.2 643 49.8 644 50.6 645 50.2 646 50.3 647 50.2 648 50.6 649 50.3 650 50.6 651 50.6 652 49.0 653 50.7 654 49.2 655 50.4 656 50.0 657 49.1 658 50.1 659 50.8 660 48.8 661 50.5 662 47.8 663 49.7 664 49.9 665 50.1 666 50.3 667 48.0 668 49.7 669 50.6 670 49.9 671 50.6 672 50.3 673 49.0 674 50.0 675 50.1 676 49.9 677 50.4 678 50.0 679 50.5 680 50.7 681 50.5 682 50.2 683 49.5 684 48.6 685 50.5 686 50.5 687 48.8 688 49.6 689 50.5 690 50.0 691 49.1 692 50.6 693 49.7 694 50.7 695 50.4 696 50.3 697 50.4 698 50.2 699 50.1 700 50.1 701 48.7 702 49.7 703 50.1 704 50.5 705 48.1 706 50.4 707 49.8 708 49.9 709 50.7 710 50.5 711 49.9 712 50.5 713 49.8 714 50.6 715 50.0 716 50.8 717 48.0 718 50.4 719 49.6 720 50.3 721 49.9 722 49.8 723 50.4 724 49.6 725 49.9 726 50.4 727 50.2 728 50.6 729 49.2 730 50.2 731 49.9 732 49.8 733 50.3 734 49.3 735 50.5 736 49.8 737 50.4 738 50.6 739 49.8 L739 55.2 738 54.4 737 54.6 736 55.2 735 54.5 734 55.7 733 54.7 732 55.2 731 55.1 730 54.8 729 55.8 728 54.4 727 54.8 726 54.6 725 55.1 724 55.4 723 54.6 722 55.2 721 55.1 720 54.7 719 55.4 718 54.6 717 57.0 716 54.2 715 55.0 714 54.4 713 55.2 712 54.5 711 55.1 710 54.5 709 54.3 708 55.1 707 55.2 706 54.6 705 56.9 704 54.5 703 54.9 702 55.3 701 56.3 700 54.9 699 54.9 698 54.8 697 54.6 696 54.7 695 54.6 694 54.3 693 55.3 692 54.4 691 55.9 690 55.0 689 54.5 688 55.4 687 56.2 686 54.5 685 54.5 684 56.4 683 55.5 682 54.8 681 54.5 680 54.3 679 54.5 678 55.0 677 54.6 676 55.1 675 54.9 674 55.0 673 56.0 672 54.7 671 54.4 670 55.1 669 54.4 668 55.3 667 57.0 666 54.7 665 54.9 664 55.1 663 55.3 662 57.2 661 54.5 660 56.2 659 54.2 658 54.9 657 55.9 656 55.0 655 54.6 654 55.8 653 54.3 652 56.0 651 54.4 650 54.4 649 54.7 648 54.4 647 54.8 646 54.7 645 54.8 644 54.4 643 55.2 642 54.8 641 54.9 640 54.2 639 54.6 638 54.3 637 55.5 636 54.9 635 55.2 634 54.6 633 54.6 632 55.1 631 54.3 630 54.5 629 55.1 628 55.0 627 54.6 626 55.5 625 55.3 624 54.5 623 54.7 622 54.6 621 55.1 620 55.3 619 55.9 618 55.0 617 55.0 616 56.4Z M903 49.7 904 50.3 905 50.4 906 50.4 907 47.9 908 49.3 909 50.3 910 50.7 911 50.6 912 50.4 913 50.1 914 50.2 915 50.7 916 49.7 917 50.4 918 48.6 919 50.6 920 50.4 921 50.9 922 49.8 923 50.0 924 50.2 925 50.3 926 50.3 927 50.5 928 50.0 929 49.7 930 50.4 931 50.3 932 50.2 933 50.3 934 49.4 935 50.4 936 50.0 937 49.8 938 50.1 939 49.7 940 50.7 941 50.7 942 50.0 943 50.6 944 49.3 945 50.9 946 49.9 947 50.5 948 50.8 949 50.1 950 48.8 951 49.8 952 50.5 953 50.6 954 49.8 955 50.2 956 50.5 957 49.7 958 49.9 959 50.0 960 50.0 961 49.2 962 48.7 963 50.0 964 49.8 965 49.5 966 50.2 967 50.6 968 49.9 969 50.5 970 48.3 971 50.5 972 50.6 973 50.5 974 49.9 975 49.9 976 49.8 977 50.8 978 50.0 979 50.1 980 49.8 981 50.9 982 50.7 983 50.2 984 49.9 985 50.1 986 49.9 987 50.6 988 50.1 989 49.9 990 49.7 991 50.4 992 50.8 993 49.9 994 50.2 995 49.7 996 49.7 997 50.7 998 50.7 999 49.7 1000 50.5 1001 50.5 1002 49.9 1003 50.7 1004 50.5 1005 50.2 1006 49.3 1007 49.5 1008 50.2 1009 50.3 1010 50.8 1011 49.0 1012 50.1 1013 48.6 1014 50.8 1015 50.2 1016 48.7 1017 49.9 1018 50.8 1019 50.6 1020 50.2 1021 48.9 1022 50.8 1023 50.7 1024 50.6 1025 48.9 1026 49.2 L1026 55.8 1025 56.1 1024 54.4 1023 54.3 1022 54.2 1021 56.1 1020 54.8 1019 54.4 1018 54.2 1017 55.1 1016 56.3 1015 54.8 1014 54.2 1013 56.4 1012 54.9 1011 56.0 1010 54.2 1009 54.7 1008 54.8 1007 55.5 1006 55.7 1005 54.8 1004 54.5 1003 54.3 1002 55.1 1001 54.5 1000 54.5 999 55.3 998 54.3 997 54.3 996 55.3 995 55.3 994 54.8 993 55.1 992 54.2 991 54.6 990 55.3 989 55.1 988 54.9 987 54.4 986 55.1 985 54.9 984 55.1 983 54.8 982 54.3 981 54.1 980 55.2 979 54.9 978 55.0 977 54.2 976 55.2 975 55.1 974 55.1 973 54.5 972 54.4 971 54.5 970 56.7 969 54.5 968 55.1 967 54.4 966 54.8 965 55.5 964 55.2 963 55.0 962 56.3 961 55.8 960 55.0 959 55.0 958 55.1 957 55.3 956 54.5 955 54.8 954 55.2 953 54.4 952 54.5 951 55.2 950 56.2 949 54.9 948 54.2 947 54.5 946 55.1 945 54.1 944 55.7 943 54.4 942 55.0 941 54.3 940 54.3 939 55.3 938 54.9 937 55.2 936 55.0 935 54.6 934 55.6 933 54.7 932 54.8 931 54.7 930 54.6 929 55.3 928 55.0 927 54.5 926 54.7 925 54.7 924 54.8 923 55.0 922 55.2 921 54.1 920 54.6 919 54.4 918 56.4 917 54.6 916 55.3 915 54.3 914 54.8 913 54.9 912 54.6 911 54.4 910 54.3 909 54.7 908 55.7 907 57.1 906 54.6 905 54.6 904 54.7 903 55.3Z" fill="#15150f"/></svg>
<svg style="left:448px;top:999px" width="1109" height="64"><path d="M8 30.2 10 27.1 12 26.5 14 27.0 16 27.4 18 27.2 20 27.0 22 27.0 24 27.7 26 27.7 28 27.6 30 27.3 32 27.4 34 29.8 L34 32.0 32 33.4 30 33.7 28 33.6 26 34.0 24 34.6 22 34.4 20 34.0 18 34.7 16 34.8 14 34.4 12 35.1 10 35.4 8 31.4Z M49 30.2 51 27.0 53 26.7 55 27.2 57 27.3 59 27.3 61 27.2 63 27.1 65 27.1 67 27.5 69 27.9 71 27.8 73 28.4 75 27.9 77 30.0 L77 31.4 75 34.1 73 34.2 71 34.2 69 33.9 67 34.6 65 34.2 63 34.4 61 34.6 59 34.0 57 34.8 55 34.3 53 35.2 51 34.6 49 31.4Z M90 30.2 92 26.9 94 26.6 96 27.0 98 26.9 100 27.2 102 26.9 104 27.3 106 27.0 108 27.7 110 27.7 112 27.8 114 27.6 116 28.1 118 30.2 L118 31.4 116 33.3 114 33.3 112 33.6 110 33.6 108 34.3 106 33.7 104 34.5 102 34.0 100 34.3 98 34.2 96 35.1 94 34.3 92 35.1 90 31.4Z M131 30.2 133 26.8 135 26.8 137 26.9 139 26.6 141 27.3 143 27.4 145 27.5 147 27.7 149 27.7 151 27.3 153 27.8 155 27.5 157 28.1 159 30.2 L159 31.4 157 33.2 155 33.6 153 33.6 151 34.4 149 34.1 147 34.4 145 34.8 143 33.9 141 34.5 139 34.4 137 34.4 135 35.2 133 35.2 131 31.4Z M172 30.2 174 26.6 176 26.4 178 26.8 180 27.0 182 27.3 184 27.0 186 27.3 188 27.4 190 27.2 192 27.7 194 28.0 196 28.0 198 27.7 200 28.3 202 28.5 204 30.2 L204 31.4 202 34.1 200 33.9 198 33.7 196 33.7 194 34.3 192 33.9 190 34.3 188 34.1 186 34.5 184 34.5 182 34.7 180 34.8 178 34.3 176 35.1 174 35.0 172 31.4Z M205 30.2 207 27.1 209 26.6 211 27.3 213 27.2 215 27.6 217 28.0 219 27.1 221 28.2 223 28.1 225 30.0 L225 31.4 223 33.9 221 33.6 219 34.2 217 34.0 215 34.0 213 34.8 211 34.6 209 35.0 207 35.1 205 31.4Z M226 30.2 228 27.1 230 26.6 232 27.3 234 26.9 236 26.7 238 27.2 240 27.5 242 27.3 244 28.1 246 27.5 248 27.5 250 28.2 252 29.9 L252 31.4 250 33.3 248 34.3 246 34.0 244 34.3 242 34.5 240 34.5 238 34.4 236 34.6 234 34.7 232 35.1 230 34.7 228 34.8 226 31.4Z M254 30.2 256 26.4 258 26.9 260 27.0 262 26.8 264 27.3 266 26.8 268 26.8 270 27.5 272 27.2 274 27.3 276 27.5 278 27.3 280 27.7 282 28.1 284 27.5 286 29.8 L286 31.4 284 33.2 282 33.6 280 33.6 278 34.0 276 33.8 274 33.9 272 34.1 270 34.1 268 34.4 266 34.7 264 34.6 262 35.0 260 34.3 258 34.5 256 35.2 254 31.4Z M288 30.2 290 26.3 292 27.3 294 27.1 296 27.2 298 27.5 300 27.9 302 27.9 304 28.1 306 27.5 308 30.2 L308 31.7 306 33.5 304 33.5 302 33.8 300 34.6 298 33.8 296 34.1 294 34.6 292 34.9 290 34.5 288 31.4Z M309 30.2 311 26.3 313 27.2 315 27.4 317 27.7 319 27.4 321 28.0 323 30.0 L323 31.7 321 33.8 319 33.7 317 34.0 315 34.2 313 34.4 311 35.2 309 31.4Z M337 30.2 339 27.2 341 26.7 343 26.5 345 26.7 347 27.5 349 27.7 351 27.6 353 27.3 355 27.3 357 27.3 359 27.5 361 28.2 363 29.7 L363 31.9 361 33.8 359 34.0 357 34.0 355 34.2 353 34.1 351 34.2 349 34.4 347 34.6 345 34.2 343 34.6 341 34.3 339 35.4 337 31.4Z M378 30.2 380 26.9 382 26.4 384 26.6 386 27.0 388 27.6 390 27.7 392 27.5 394 27.1 396 28.0 398 28.0 400 27.4 402 27.7 404 27.8 406 30.2 L406 31.7 404 33.7 402 33.5 400 33.8 398 33.6 396 34.4 394 34.4 392 34.2 390 34.7 388 34.3 386 34.5 384 35.1 382 34.7 380 35.1 378 31.4Z M419 30.2 421 26.8 423 26.8 425 26.6 427 27.2 429 26.8 431 27.6 433 27.9 435 27.6 437 28.1 439 28.1 441 30.1 L441 31.6 439 33.2 437 33.7 435 34.4 433 34.0 431 34.5 429 33.9 427 34.2 425 34.6 423 35.0 421 35.0 419 31.4Z M747 30.2 749 26.5 751 26.6 753 26.5 755 26.7 757 27.2 759 27.2 761 27.4 763 27.7 765 27.2 767 27.7 769 27.7 771 27.6 773 28.2 775 30.1 L775 31.4 773 33.9 771 33.4 769 33.8 767 33.8 765 34.0 763 34.6 761 34.5 759 34.6 757 34.5 755 34.1 753 35.0 751 34.6 749 35.0 747 31.4Z M789 30.2 791 26.7 793 27.0 795 27.3 797 26.7 799 27.4 801 27.3 803 27.4 805 27.0 807 27.2 809 27.6 811 28.1 813 28.1 815 29.5 L815 32.2 813 33.2 811 33.9 809 33.7 807 34.4 805 33.9 803 33.9 801 34.0 799 34.2 797 34.5 795 34.2 793 35.0 791 35.3 789 31.4Z M830 30.2 832 26.3 834 26.8 836 27.0 838 27.3 840 26.7 842 27.2 844 27.1 846 27.3 848 27.5 850 28.0 852 28.1 854 27.7 856 29.9 L856 31.9 854 34.0 852 34.1 850 33.6 848 34.4 846 34.1 844 34.0 842 34.0 840 34.4 838 34.7 836 34.3 834 35.1 832 35.0 830 31.4Z M872 30.2 874 26.9 876 26.6 878 27.3 880 27.4 882 26.8 884 27.1 886 27.5 888 27.4 890 27.4 892 27.2 894 27.5 896 28.2 898 29.6 L898 31.7 896 33.3 894 34.2 892 34.3 890 33.7 888 34.1 886 34.3 884 34.7 882 34.3 880 34.7 878 34.9 876 34.7 874 34.6 872 31.4Z M911 30.2 913 26.7 915 26.8 917 27.3 919 26.9 921 27.2 923 27.5 925 27.1 927 28.0 929 28.1 931 27.5 933 28.0 935 27.6 937 30.2 L937 31.8 935 33.1 933 34.2 931 34.3 929 34.3 927 33.7 925 34.4 923 34.4 921 34.7 919 34.4 917 34.4 915 34.5 913 35.3 911 31.4Z M939 30.2 941 27.0 943 27.1 945 27.2 947 26.9 949 27.3 951 27.1 953 27.5 955 27.3 957 27.4 959 27.6 961 28.2 963 27.8 965 30.0 L965 31.4 963 34.1 961 33.7 959 33.5 957 34.1 955 34.1 953 34.6 951 34.7 949 34.0 947 35.0 945 34.6 943 34.9 941 35.4 939 31.4Z M967 30.2 969 26.9 971 27.1 973 26.6 975 26.7 977 27.0 979 27.4 981 27.0 983 27.8 985 28.0 987 27.3 989 27.7 991 28.0 993 30.0 L993 31.8 991 33.8 989 33.6 987 34.2 985 33.6 983 33.6 981 34.6 979 34.8 977 34.1 975 34.4 973 34.3 971 35.2 969 34.6 967 31.4Z M994 30.2 996 26.6 998 26.4 1000 27.3 1002 26.7 1004 26.9 1006 27.2 1008 27.5 1010 27.5 1012 28.1 1014 27.4 1016 27.6 1018 27.7 1020 30.2 L1020 31.6 1018 33.5 1016 33.3 1014 33.9 1012 34.2 1010 33.7 1008 34.3 1006 34.4 1004 34.4 1002 34.9 1000 34.6 998 34.5 996 35.1 994 31.4Z M1021 30.2 1023 26.6 1025 27.2 1027 26.6 1029 27.6 1031 27.1 1033 27.1 1035 27.9 1037 28.2 1039 28.2 1041 30.2 L1041 31.8 1039 33.4 1037 34.2 1035 34.4 1033 34.3 1031 34.6 1029 34.6 1027 34.2 1025 34.8 1023 34.5 1021 31.4Z M1042 30.2 1044 26.5 1046 27.4 1048 27.0 1050 27.3 1052 28.0 1054 28.1 1056 29.9 L1056 31.4 1054 34.0 1052 34.0 1050 33.8 1048 34.9 1046 34.9 1044 35.1 1042 31.4Z M8 51.9 10 48.1 12 48.8 14 48.3 16 48.5 18 48.4 20 48.6 22 48.7 24 48.7 26 49.0 28 49.6 30 49.7 32 50.0 34 51.2 L34 53.6 32 55.6 30 55.1 28 55.5 26 56.0 24 56.1 22 55.4 20 55.6 18 56.0 16 55.8 14 56.4 12 56.0 10 56.7 8 53.1Z M49 51.9 51 48.2 53 48.2 55 48.3 57 49.2 59 49.2 61 49.0 63 48.8 65 49.3 67 48.9 69 49.8 71 49.1 73 49.6 75 49.3 77 51.9 L77 53.3 75 54.8 73 55.7 71 55.8 69 55.8 67 56.1 65 56.3 63 56.3 61 55.8 59 55.8 57 55.9 55 56.0 53 56.8 51 56.2 49 53.1Z M90 51.9 92 48.3 94 48.6 96 48.5 98 48.7 100 49.3 102 49.4 104 49.5 106 49.0 108 49.3 110 49.0 112 49.5 114 49.3 116 49.3 118 51.9 L118 53.4 116 55.3 114 55.6 112 55.9 110 55.2 108 55.3 106 56.3 104 55.6 102 56.5 100 56.4 98 56.1 96 56.9 94 57.0 92 56.1 90 53.1Z M131 51.9 133 48.5 135 48.9 137 48.7 139 48.3 141 48.8 143 49.3 145 49.5 147 49.1 149 48.9 151 49.2 153 49.0 155 49.6 157 49.8 159 51.9 L159 53.1 157 55.0 155 55.5 153 55.4 151 55.2 149 56.2 147 56.3 145 56.2 143 55.7 141 56.3 139 56.0 137 56.6 135 56.4 133 56.6 131 53.1Z M172 51.9 174 48.0 176 48.7 178 48.8 180 49.2 182 48.5 184 48.7 186 48.9 188 48.9 190 49.6 192 49.5 194 49.7 196 49.3 198 49.2 200 50.0 202 49.9 204 51.9 L204 53.3 202 55.7 200 55.9 198 55.2 196 55.8 194 55.9 192 55.9 190 55.8 188 55.7 186 56.0 184 56.0 182 55.8 180 56.6 178 56.2 176 56.2 174 56.2 172 53.1Z M205 51.9 207 48.3 209 48.2 211 48.8 213 48.4 215 48.8 217 49.0 219 49.5 221 49.2 223 49.5 225 51.9 L225 53.2 223 55.3 221 55.7 219 56.1 217 55.8 215 55.5 213 55.6 211 56.1 209 56.0 207 56.9 205 53.1Z M226 51.9 228 48.2 230 48.5 232 49.0 234 49.1 236 49.3 238 49.1 240 49.4 242 49.0 244 48.9 246 49.2 248 49.5 250 49.8 252 51.9 L252 53.1 250 55.6 248 55.8 246 55.9 244 55.7 242 56.0 240 56.2 238 55.5 236 56.0 234 56.1 232 55.9 230 56.5 228 56.1 226 53.1Z M254 51.9 256 48.2 258 48.9 260 48.6 262 48.5 264 49.0 266 49.2 268 49.1 270 48.7 272 48.8 274 48.9 276 49.5 278 49.3 280 49.7 282 49.6 284 49.6 286 51.9 L286 53.1 284 55.2 282 55.8 280 55.7 278 55.8 276 55.8 274 56.1 272 56.1 270 55.7 268 56.4 266 56.4 264 56.7 262 56.0 260 56.6 258 56.4 256 56.2 254 53.1Z M288 51.9 290 48.6 292 48.3 294 48.7 296 48.9 298 48.7 300 49.5 302 49.5 304 49.8 306 49.3 308 51.9 L308 53.2 306 55.2 304 55.6 302 55.3 300 56.3 298 55.8 296 55.9 294 56.7 292 56.4 290 56.6 288 53.1Z M309 51.9 311 48.0 313 48.8 315 49.3 317 49.2 319 49.4 321 49.3 323 51.9 L323 53.1 321 55.5 319 55.9 317 55.6 315 56.2 313 56.4 311 56.6 309 53.1Z M337 51.9 339 48.4 341 48.6 343 48.6 345 48.8 347 49.1 349 49.4 351 49.5 353 49.4 355 49.5 357 49.3 359 49.7 361 49.7 363 50.8 L363 54.0 361 55.1 359 55.9 357 55.5 355 55.4 353 56.1 351 55.9 349 55.9 347 56.1 345 56.4 343 55.9 341 56.3 339 56.3 337 53.1Z M378 51.9 380 48.5 382 48.5 384 48.3 386 48.3 388 49.3 390 49.2 392 49.1 394 49.0 396 49.2 398 49.5 400 49.3 402 49.6 404 50.2 406 51.7 L406 53.1 404 54.9 402 55.0 400 55.5 398 56.1 396 55.7 394 56.0 392 55.5 390 55.9 388 56.5 386 56.4 384 56.7 382 56.4 380 56.6 378 53.1Z M419 51.9 421 48.8 423 48.1 425 48.7 427 48.6 429 49.1 431 49.5 433 49.7 435 49.9 437 49.9 439 50.0 441 51.9 L441 53.3 439 55.2 437 55.2 435 55.4 433 56.1 431 56.3 429 55.6 427 56.0 425 56.0 423 55.9 421 56.8 419 53.1Z M747 51.9 749 48.6 751 48.5 753 49.0 755 48.2 757 49.2 759 49.2 761 48.6 763 49.3 765 49.6 767 49.1 769 49.9 771 49.1 773 49.9 775 51.8 L775 53.1 773 55.6 771 55.5 769 55.9 767 55.9 765 55.5 763 56.2 761 55.6 759 56.2 757 55.9 755 55.9 753 56.6 751 56.7 749 56.8 747 53.1Z M789 51.9 791 48.8 793 48.5 795 48.7 797 48.3 799 49.1 801 48.8 803 49.5 805 48.9 807 49.1 809 49.8 811 49.5 813 49.4 815 51.2 L815 53.8 813 55.8 811 55.0 809 55.6 807 55.3 805 55.7 803 55.7 801 56.5 799 55.9 797 56.8 795 56.7 793 56.3 791 56.6 789 53.1Z M830 51.9 832 48.7 834 48.8 836 48.4 838 48.7 840 49.3 842 48.6 844 49.1 846 49.1 848 49.6 850 49.3 852 49.3 854 49.6 856 51.0 L856 53.5 854 55.1 852 55.5 850 55.2 848 55.8 846 55.6 844 56.0 842 56.0 840 56.6 838 55.8 836 56.5 834 56.9 832 56.3 830 53.1Z M872 51.9 874 48.7 876 48.5 878 48.5 880 48.9 882 49.3 884 49.3 886 49.3 888 49.6 890 49.3 892 49.4 894 49.2 896 49.2 898 51.4 L898 53.5 896 55.8 894 55.9 892 55.3 890 56.1 888 55.8 886 56.4 884 55.6 882 56.1 880 56.6 878 56.7 876 56.9 874 56.5 872 53.1Z M911 51.9 913 48.4 915 48.3 917 48.5 919 48.9 921 48.4 923 48.7 925 49.5 927 49.2 929 49.3 931 49.5 933 49.5 935 49.7 937 51.9 L937 53.1 935 55.3 933 55.5 931 55.7 929 55.9 927 55.7 925 56.3 923 56.5 921 56.0 919 56.3 917 56.4 915 56.4 913 56.3 911 53.1Z M939 51.9 941 48.0 943 48.8 945 48.6 947 48.8 949 48.9 951 49.1 953 49.0 955 49.4 957 49.7 959 49.3 961 49.9 963 49.9 965 51.9 L965 53.1 963 55.7 961 55.9 959 55.2 957 55.5 955 56.0 953 55.6 951 55.6 949 55.7 947 55.9 945 56.7 943 56.9 941 56.6 939 53.1Z M967 51.9 969 48.0 971 48.3 973 48.9 975 48.3 977 48.9 979 48.8 981 49.2 983 49.4 985 48.8 987 49.7 989 49.1 991 49.4 993 51.5 L993 53.4 991 55.8 989 55.0 987 55.8 985 56.1 983 55.6 981 55.8 979 56.1 977 56.4 975 56.1 973 56.8 971 56.2 969 57.0 967 53.1Z M994 51.9 996 48.5 998 48.5 1000 48.7 1002 48.3 1004 49.3 1006 49.0 1008 48.7 1010 48.9 1012 48.8 1014 49.7 1016 49.9 1018 49.4 1020 51.9 L1020 53.1 1018 55.5 1016 55.5 1014 55.9 1012 55.8 1010 55.4 1008 55.9 1006 55.5 1004 55.9 1002 56.7 1000 56.0 998 56.2 996 56.5 994 53.1Z M1021 51.9 1023 48.8 1025 48.7 1027 48.7 1029 48.4 1031 49.2 1033 48.8 1035 49.7 1037 49.9 1039 49.9 1041 51.6 L1041 53.1 1039 55.6 1037 55.7 1035 55.5 1033 55.6 1031 55.8 1029 56.6 1027 56.1 1025 56.7 1023 56.7 1021 53.1Z M1042 51.9 1044 49.0 1046 48.6 1048 49.3 1050 49.5 1052 49.7 1054 49.2 1056 51.9 L1056 53.1 1054 55.0 1052 55.2 1050 55.5 1048 56.1 1046 56.4 1044 56.2 1042 53.1Z" fill="#15150f"/></svg>
<svg style="left:448px;top:1065px" width="1109" height="64"><path d="M276 29.3 278 26.9 280 26.4 282 27.4 284 28.1 286 28.7 288 29.2 290 29.5 292 29.8 294 30.0 296 30.2 298 30.3 300 30.3 302 30.3 304 30.3 L304 31.3 302 31.3 300 31.3 298 31.3 296 31.4 294 31.6 292 31.8 290 32.1 288 32.4 286 32.9 284 33.5 282 34.2 280 35.2 278 34.7 276 32.3Z M613 29.3 615 26.9 617 26.4 619 27.4 621 28.1 623 28.7 625 29.2 627 29.5 629 29.8 631 30.0 633 30.2 635 30.3 637 30.3 639 30.3 641 30.3 L641 31.3 639 31.3 637 31.3 635 31.3 633 31.4 631 31.6 629 31.8 627 32.1 625 32.4 623 32.9 621 33.5 619 34.2 617 35.2 615 34.7 613 32.3Z M729 29.3 731 26.9 733 26.4 735 27.4 737 28.1 739 28.7 741 29.2 743 29.5 745 29.8 747 30.0 749 30.2 751 30.3 753 30.3 755 30.3 757 30.3 L757 31.3 755 31.3 753 31.3 751 31.3 749 31.4 747 31.6 745 31.8 743 32.1 741 32.4 739 32.9 737 33.5 735 34.2 733 35.2 731 34.7 729 32.3Z M901 29.3 903 26.9 905 26.4 907 27.4 909 28.1 911 28.7 913 29.2 915 29.5 917 29.8 919 30.0 921 30.2 923 30.3 925 30.3 927 30.3 929 30.3 L929 31.3 927 31.3 925 31.3 923 31.3 921 31.4 919 31.6 917 31.8 915 32.1 913 32.4 911 32.9 909 33.5 907 34.2 905 35.2 903 34.7 901 32.3Z M1016 29.3 1018 26.9 1020 26.4 1022 27.4 1024 28.1 1026 28.7 1028 29.2 1030 29.5 1032 29.8 1034 30.0 1036 30.2 1038 30.3 1040 30.3 1042 30.3 1044 30.3 L1044 31.3 1042 31.3 1040 31.3 1038 31.3 1036 31.4 1034 31.6 1032 31.8 1030 32.1 1028 32.4 1026 32.9 1024 33.5 1022 34.2 1020 35.2 1018 34.7 1016 32.3Z M276 51.0 278 48.6 280 48.1 282 49.1 284 49.8 286 50.4 288 50.9 290 51.2 292 51.5 294 51.7 296 51.9 298 52.0 300 52.0 302 52.0 304 52.0 L304 53.0 302 53.0 300 53.0 298 53.0 296 53.1 294 53.3 292 53.5 290 53.8 288 54.1 286 54.6 284 55.2 282 55.9 280 56.9 278 56.4 276 54.0Z M613 51.0 615 48.6 617 48.1 619 49.1 621 49.8 623 50.4 625 50.9 627 51.2 629 51.5 631 51.7 633 51.9 635 52.0 637 52.0 639 52.0 641 52.0 L641 53.0 639 53.0 637 53.0 635 53.0 633 53.1 631 53.3 629 53.5 627 53.8 625 54.1 623 54.6 621 55.2 619 55.9 617 56.9 615 56.4 613 54.0Z M729 51.0 731 48.6 733 48.1 735 49.1 737 49.8 739 50.4 741 50.9 743 51.2 745 51.5 747 51.7 749 51.9 751 52.0 753 52.0 755 52.0 757 52.0 L757 53.0 755 53.0 753 53.0 751 53.0 749 53.1 747 53.3 745 53.5 743 53.8 741 54.1 739 54.6 737 55.2 735 55.9 733 56.9 731 56.4 729 54.0Z M901 51.0 903 48.6 905 48.1 907 49.1 909 49.8 911 50.4 913 50.9 915 51.2 917 51.5 919 51.7 921 51.9 923 52.0 925 52.0 927 52.0 929 52.0 L929 53.0 927 53.0 925 53.0 923 53.0 921 53.1 919 53.3 917 53.5 915 53.8 913 54.1 911 54.6 909 55.2 907 55.9 905 56.9 903 56.4 901 54.0Z M1016 51.0 1018 48.6 1020 48.1 1022 49.1 1024 49.8 1026 50.4 1028 50.9 1030 51.2 1032 51.5 1034 51.7 1036 51.9 1038 52.0 1040 52.0 1042 52.0 1044 52.0 L1044 53.0 1042 53.0 1040 53.0 1038 53.0 1036 53.1 1034 53.3 1032 53.5 1030 53.8 1028 54.1 1026 54.6 1024 55.2 1022 55.9 1020 56.9 1018 56.4 1016 54.0Z" fill="#15150f"/></svg>
<svg style="left:448px;top:1131px" width="1109" height="64"><path d="M449 30.2 451 26.7 453 26.5 455 26.7 457 26.0 459 27.4 461 27.5 463 27.5 465 26.8 467 30.2 L467 31.4 465 33.9 463 34.3 461 35.1 459 34.3 457 35.4 455 34.6 453 34.8 451 35.8 449 31.4Z M469 30.2 471 26.9 473 26.5 475 26.6 477 28.1 479 27.4 481 27.3 483 28.1 485 29.3 L485 32.0 483 34.0 481 33.6 479 33.7 477 34.9 475 34.1 473 34.6 471 34.8 469 31.5Z M494 30.1 496 25.5 498 25.0 500 26.0 502 25.1 504 25.5 506 25.6 508 25.9 510 28.6 L510 33.3 508 35.1 506 35.4 504 35.8 502 36.2 500 36.4 498 36.0 496 36.0 494 31.4Z M513 30.2 515 27.3 517 28.1 519 27.0 521 28.0 523 28.3 525 28.0 527 28.5 529 28.2 531 27.4 533 28.1 535 28.4 537 27.6 539 28.1 541 30.0 L541 31.4 539 32.7 537 32.6 535 33.3 533 33.4 531 33.9 529 33.8 527 34.4 525 33.8 523 34.3 521 33.9 519 34.6 517 34.2 515 34.0 513 31.4Z M545 30.2 547 26.1 549 25.6 551 25.7 553 26.4 555 25.6 557 26.5 559 26.8 561 26.5 563 27.0 565 27.4 567 29.7 L567 31.4 565 34.1 563 34.3 561 35.0 559 34.3 557 35.8 555 35.7 553 35.0 551 35.9 549 36.3 547 35.9 545 31.4Z M569 30.2 571 27.3 573 28.1 575 28.5 577 28.3 579 28.6 581 29.2 L581 32.7 579 32.6 577 33.2 575 33.7 573 34.5 571 34.3 569 31.4Z M584 30.2 586 26.4 588 26.2 590 27.0 592 26.9 594 26.7 596 27.8 598 27.5 600 27.9 602 27.7 604 28.2 606 29.5 L606 33.0 604 33.2 602 34.6 600 34.3 598 34.8 596 34.1 594 34.2 592 34.5 590 34.8 588 35.5 586 34.8 584 31.4Z M449 51.9 451 47.0 453 47.3 455 47.9 457 48.8 459 48.6 461 48.7 463 49.3 465 49.4 467 51.2 L467 53.7 465 56.1 463 55.5 461 56.0 459 55.9 457 56.9 455 56.6 453 57.1 451 57.3 449 53.1Z M469 51.9 471 48.1 473 49.3 475 49.6 477 49.1 479 49.8 481 49.8 483 50.1 485 50.5 L485 53.5 483 54.8 481 55.0 479 55.3 477 55.9 475 56.7 473 56.0 471 56.4 469 53.1Z M494 51.9 496 46.7 498 46.6 500 47.4 502 47.8 504 47.6 506 47.7 508 48.5 510 49.9 L510 53.8 508 56.2 506 57.3 504 57.7 502 58.1 500 58.2 498 58.5 496 58.2 494 53.1Z M513 51.9 515 49.4 517 48.8 519 48.6 521 48.6 523 49.2 525 49.0 527 49.3 529 50.2 531 49.4 533 50.0 535 49.6 537 50.0 539 50.0 541 51.9 L541 53.1 539 55.1 537 55.3 535 54.9 533 54.5 531 55.3 529 55.6 527 54.7 525 54.9 523 55.7 521 55.7 519 55.8 517 56.5 515 55.2 513 53.1Z M545 51.9 547 46.9 549 46.6 551 47.1 553 48.0 555 47.7 557 48.2 559 47.7 561 48.0 563 48.8 565 49.0 567 51.4 L567 53.1 565 56.5 563 55.8 561 56.0 559 57.3 557 56.9 555 56.4 553 57.2 551 57.6 549 57.4 547 57.3 545 53.1Z M569 51.9 571 49.5 573 49.0 575 49.6 577 50.4 579 49.2 581 51.1 L581 53.3 579 54.5 577 55.9 575 54.9 573 55.5 571 55.5 569 53.1Z M584 51.9 586 48.7 588 47.8 590 48.3 592 48.1 594 48.3 596 48.6 598 49.0 600 48.4 602 48.9 604 50.0 606 50.8 L606 53.3 604 55.8 602 55.6 600 56.0 598 55.6 596 56.5 594 55.8 592 56.6 590 56.4 588 57.4 586 57.2 584 53.1Z" fill="#15150f"/></svg>
<div style="left:448px;top:270px;width:1739px;height:3px;background:#2a2a2a"></div>
<div style="left:448px;top:336px;width:1739px;height:3px;background:#2a2a2a"></div>
<div style="left:448px;top:402px;width:1739px;height:3px;background:#2a2a2a"></div>
<div style="left:448px;top:468px;width:1739px;height:3px;background:#2a2a2a"></div>
<div style="left:448px;top:534px;width:1739px;height:3px;background:#2a2a2a"></div>
<div style="left:448px;top:600px;width:1739px;height:3px;background:#2a2a2a"></div>
<div style="left:448px;top:666px;width:1739px;height:3px;background:#2a2a2a"></div>
<div style="left:448px;top:732px;width:1739px;height:3px;background:#2a2a2a"></div>
<div style="left:448px;top:798px;width:1739px;height:3px;background:#2a2a2a"></div>
<div style="left:448px;top:864px;width:1739px;height:3px;background:#2a2a2a"></div>
<div style="left:448px;top:930px;width:1739px;height:3px;background:#2a2a2a"></div>
<div style="left:448px;top:996px;width:1739px;height:3px;background:#2a2a2a"></div>
<div style="left:448px;top:1062px;width:1739px;height:3px;background:#2a2a2a"></div>
<div style="left:448px;top:1128px;width:1739px;height:3px;background:#2a2a2a"></div>
<div style="left:448px;top:1194px;width:1739px;height:3px;background:#2a2a2a"></div>
<div style="left:1762px;top:145px;width:309px;height:1175px;background:rgba(0,0,0,0.07)"></div>
<div style="left:612px;top:158px;width:1px;height:1162px;background:#0d0d0d"></div>
<div style="left:735px;top:158px;width:1px;height:1162px;background:#0d0d0d"></div>
<div style="left:899px;top:158px;width:1px;height:1162px;background:#0d0d0d"></div>
<div style="left:1064px;top:158px;width:1px;height:1162px;background:#0d0d0d"></div>
<div style="left:1187px;top:158px;width:1px;height:1162px;background:#0d0d0d"></div>
<div style="left:1269px;top:158px;width:1px;height:1162px;background:#0d0d0d"></div>
<div style="left:1351px;top:158px;width:1px;height:1162px;background:#0d0d0d"></div>
<div style="left:1474px;top:158px;width:1px;height:1162px;background:#0d0d0d"></div>
<div style="left:1557px;top:145px;width:1px;height:1175px;background:#0d0d0d"></div>
<svg style="left:447.0px;top:158px" width="13" height="14"><path d="M0.7 0.7 L11.5 6.8 L0.7 13z" fill="#8a8a8a" stroke="#222" stroke-width="1"/></svg>
<div class="t" style="left:460px;top:158px;font-size:12.5px;color:#f0f0f0;font-weight:bold;">A</div>
<svg style="left:611.3px;top:158px" width="13" height="14"><path d="M0.7 0.7 L11.5 6.8 L0.7 13z" fill="#8a8a8a" stroke="#222" stroke-width="1"/></svg>
<div class="t" style="left:625px;top:158px;font-size:12.5px;color:#f0f0f0;font-weight:bold;">B</div>
<svg style="left:734.6px;top:158px" width="13" height="14"><path d="M0.7 0.7 L11.5 6.8 L0.7 13z" fill="#8a8a8a" stroke="#222" stroke-width="1"/></svg>
<div class="t" style="left:748px;top:158px;font-size:12.5px;color:#f0f0f0;font-weight:bold;">A</div>
<svg style="left:898.9px;top:158px" width="13" height="14"><path d="M0.7 0.7 L11.5 6.8 L0.7 13z" fill="#8a8a8a" stroke="#222" stroke-width="1"/></svg>
<div class="t" style="left:912px;top:158px;font-size:12.5px;color:#f0f0f0;font-weight:bold;">A'</div>
<svg style="left:1063.2px;top:158px" width="13" height="14"><path d="M0.7 0.7 L11.5 6.8 L0.7 13z" fill="#8a8a8a" stroke="#222" stroke-width="1"/></svg>
<div class="t" style="left:1077px;top:158px;font-size:12.5px;color:#f0f0f0;font-weight:bold;">B'</div>
<svg style="left:1186.4px;top:158px" width="13" height="14"><path d="M0.7 0.7 L11.5 6.8 L0.7 13z" fill="#8a8a8a" stroke="#222" stroke-width="1"/></svg>
<div class="t" style="left:1200px;top:158px;font-size:12.5px;color:#f0f0f0;font-weight:bold;">A'</div>
<svg style="left:1268.6px;top:158px" width="13" height="14"><path d="M0.7 0.7 L11.5 6.8 L0.7 13z" fill="#8a8a8a" stroke="#222" stroke-width="1"/></svg>
<div class="t" style="left:1282px;top:158px;font-size:12.5px;color:#f0f0f0;font-weight:bold;">A</div>
<svg style="left:1350.8px;top:158px" width="13" height="14"><path d="M0.7 0.7 L11.5 6.8 L0.7 13z" fill="#8a8a8a" stroke="#222" stroke-width="1"/></svg>
<div class="t" style="left:1364px;top:158px;font-size:12.5px;color:#f0f0f0;font-weight:bold;">B</div>
<svg style="left:1474.0px;top:158px" width="13" height="14"><path d="M0.7 0.7 L11.5 6.8 L0.7 13z" fill="#8a8a8a" stroke="#222" stroke-width="1"/></svg>
<div class="t" style="left:1488px;top:158px;font-size:12.5px;color:#f0f0f0;font-weight:bold;">A</div>
<div style="left:448px;top:1195px;width:1739px;height:53px;background-color:#4c4c4c;background-image:repeating-linear-gradient(90deg,rgba(0,0,0,0.15) 0 1px,transparent 1px 10.270px);background-size:calc(100% + 10.270px) 100%;background-position:-0.50px 0;background-repeat:no-repeat"></div>
<div class="c" style="left:448px;top:1212px;width:1739px;height:18px;line-height:18px;font-size:12.5px;color:#e8e8e8;font-weight:bold;text-align:center;width:1741px">Drop Files and Devices Here</div>
<div style="left:448px;top:1248px;width:1739px;height:4px;background:#2a2a2a"></div>
<div style="left:448px;top:1252px;width:1739px;height:21px;background-color:#4c4c4c;background-image:repeating-linear-gradient(90deg,rgba(0,0,0,0.15) 0 1px,transparent 1px 10.270px);background-size:calc(100% + 10.270px) 100%;background-position:-0.50px 0;background-repeat:no-repeat"></div>
<div style="left:448px;top:1273px;width:1739px;height:2px;background:#2a2a2a"></div>
<div style="left:448px;top:1275px;width:1739px;height:21px;background-color:#4c4c4c;background-image:repeating-linear-gradient(90deg,rgba(0,0,0,0.15) 0 1px,transparent 1px 10.270px);background-size:calc(100% + 10.270px) 100%;background-position:-0.50px 0;background-repeat:no-repeat"></div>
<div style="left:448px;top:1296px;width:1739px;height:2px;background:#2a2a2a"></div>
<div style="left:448px;top:1298px;width:1739px;height:21px;background-color:#4c4c4c;background-image:repeating-linear-gradient(90deg,rgba(0,0,0,0.15) 0 1px,transparent 1px 10.270px);background-size:calc(100% + 10.270px) 100%;background-position:-0.50px 0;background-repeat:no-repeat"></div>
<div style="left:448px;top:1319px;width:1739px;height:2px;background:#2a2a2a"></div>
<div class="t" style="left:2150px;top:1298px;font-size:20px;color:#9a9a9a;font-weight:bold;">1/2</div>
<div style="left:448px;top:1320px;width:1741px;height:26px;background:#4f4f4f"></div>
<div style="left:448px;top:1320px;width:1739px;height:1px;background:#1c1c1c"></div>
<svg style="left:447.0px;top:1322px" width="4" height="9"><path d="M0.5 0 V7 a1.5 1.5 0 0 0 1.5 1.5 H3" stroke="#b8b8b8" stroke-width="1" fill="none"/></svg>
<div class="t" style="left:450px;top:1325px;font-size:12.5px;color:#d4d4d4;font-weight:bold;">0:00</div>
<div style="left:488px;top:1322px;width:1px;height:3px;background:#aaa"></div>
<div style="left:528px;top:1322px;width:1px;height:3px;background:#aaa"></div>
<svg style="left:566.6px;top:1322px" width="4" height="9"><path d="M0.5 0 V7 a1.5 1.5 0 0 0 1.5 1.5 H3" stroke="#b8b8b8" stroke-width="1" fill="none"/></svg>
<div class="t" style="left:570px;top:1325px;font-size:12.5px;color:#d4d4d4;font-weight:bold;">0:15</div>
<div style="left:607px;top:1322px;width:1px;height:3px;background:#aaa"></div>
<div style="left:647px;top:1322px;width:1px;height:3px;background:#aaa"></div>
<svg style="left:686.2px;top:1322px" width="4" height="9"><path d="M0.5 0 V7 a1.5 1.5 0 0 0 1.5 1.5 H3" stroke="#b8b8b8" stroke-width="1" fill="none"/></svg>
<div class="t" style="left:689px;top:1325px;font-size:12.5px;color:#d4d4d4;font-weight:bold;">0:30</div>
<div style="left:727px;top:1322px;width:1px;height:3px;background:#aaa"></div>
<div style="left:767px;top:1322px;width:1px;height:3px;background:#aaa"></div>
<svg style="left:805.8px;top:1322px" width="4" height="9"><path d="M0.5 0 V7 a1.5 1.5 0 0 0 1.5 1.5 H3" stroke="#b8b8b8" stroke-width="1" fill="none"/></svg>
<div class="t" style="left:809px;top:1325px;font-size:12.5px;color:#d4d4d4;font-weight:bold;">0:45</div>
<div style="left:847px;top:1322px;width:1px;height:3px;background:#aaa"></div>
<div style="left:887px;top:1322px;width:1px;height:3px;background:#aaa"></div>
<svg style="left:925.4px;top:1322px" width="4" height="9"><path d="M0.5 0 V7 a1.5 1.5 0 0 0 1.5 1.5 H3" stroke="#b8b8b8" stroke-width="1" fill="none"/></svg>
<div class="t" style="left:928px;top:1325px;font-size:12.5px;color:#d4d4d4;font-weight:bold;">1:00</div>
<div style="left:966px;top:1322px;width:1px;height:3px;background:#aaa"></div>
<div style="left:1006px;top:1322px;width:1px;height:3px;background:#aaa"></div>
<svg style="left:1045.0px;top:1322px" width="4" height="9"><path d="M0.5 0 V7 a1.5 1.5 0 0 0 1.5 1.5 H3" stroke="#b8b8b8" stroke-width="1" fill="none"/></svg>
<div class="t" style="left:1048px;top:1325px;font-size:12.5px;color:#d4d4d4;font-weight:bold;">1:15</div>
<div style="left:1086px;top:1322px;width:1px;height:3px;background:#aaa"></div>
<div style="left:1126px;top:1322px;width:1px;height:3px;background:#aaa"></div>
<svg style="left:1164.6px;top:1322px" width="4" height="9"><path d="M0.5 0 V7 a1.5 1.5 0 0 0 1.5 1.5 H3" stroke="#b8b8b8" stroke-width="1" fill="none"/></svg>
<div class="t" style="left:1168px;top:1325px;font-size:12.5px;color:#d4d4d4;font-weight:bold;">1:30</div>
<div style="left:1205px;top:1322px;width:1px;height:3px;background:#aaa"></div>
<div style="left:1245px;top:1322px;width:1px;height:3px;background:#aaa"></div>
<svg style="left:1284.2px;top:1322px" width="4" height="9"><path d="M0.5 0 V7 a1.5 1.5 0 0 0 1.5 1.5 H3" stroke="#b8b8b8" stroke-width="1" fill="none"/></svg>
<div class="t" style="left:1287px;top:1325px;font-size:12.5px;color:#d4d4d4;font-weight:bold;">1:45</div>
<div style="left:1325px;top:1322px;width:1px;height:3px;background:#aaa"></div>
<div style="left:1365px;top:1322px;width:1px;height:3px;background:#aaa"></div>
<svg style="left:1403.8px;top:1322px" width="4" height="9"><path d="M0.5 0 V7 a1.5 1.5 0 0 0 1.5 1.5 H3" stroke="#b8b8b8" stroke-width="1" fill="none"/></svg>
<div class="t" style="left:1407px;top:1325px;font-size:12.5px;color:#d4d4d4;font-weight:bold;">2:00</div>
<div style="left:1445px;top:1322px;width:1px;height:3px;background:#aaa"></div>
<div style="left:1485px;top:1322px;width:1px;height:3px;background:#aaa"></div>
<svg style="left:1523.4px;top:1322px" width="4" height="9"><path d="M0.5 0 V7 a1.5 1.5 0 0 0 1.5 1.5 H3" stroke="#b8b8b8" stroke-width="1" fill="none"/></svg>
<div class="t" style="left:1526px;top:1325px;font-size:12.5px;color:#d4d4d4;font-weight:bold;">2:15</div>
<div style="left:1564px;top:1322px;width:1px;height:3px;background:#aaa"></div>
<div style="left:1604px;top:1322px;width:1px;height:3px;background:#aaa"></div>
<svg style="left:1643.0px;top:1322px" width="4" height="9"><path d="M0.5 0 V7 a1.5 1.5 0 0 0 1.5 1.5 H3" stroke="#b8b8b8" stroke-width="1" fill="none"/></svg>
<div class="t" style="left:1646px;top:1325px;font-size:12.5px;color:#d4d4d4;font-weight:bold;">2:30</div>
<div style="left:1684px;top:1322px;width:1px;height:3px;background:#aaa"></div>
<div style="left:1724px;top:1322px;width:1px;height:3px;background:#aaa"></div>
<svg style="left:1762.6px;top:1322px" width="4" height="9"><path d="M0.5 0 V7 a1.5 1.5 0 0 0 1.5 1.5 H3" stroke="#b8b8b8" stroke-width="1" fill="none"/></svg>
<div class="t" style="left:1766px;top:1325px;font-size:12.5px;color:#d4d4d4;font-weight:bold;">2:45</div>
<div style="left:1803px;top:1322px;width:1px;height:3px;background:#aaa"></div>
<div style="left:1843px;top:1322px;width:1px;height:3px;background:#aaa"></div>
<svg style="left:1882.2px;top:1322px" width="4" height="9"><path d="M0.5 0 V7 a1.5 1.5 0 0 0 1.5 1.5 H3" stroke="#b8b8b8" stroke-width="1" fill="none"/></svg>
<div class="t" style="left:1885px;top:1325px;font-size:12.5px;color:#d4d4d4;font-weight:bold;">3:00</div>
<div style="left:1923px;top:1322px;width:1px;height:3px;background:#aaa"></div>
<div style="left:1963px;top:1322px;width:1px;height:3px;background:#aaa"></div>
<svg style="left:2001.8px;top:1322px" width="4" height="9"><path d="M0.5 0 V7 a1.5 1.5 0 0 0 1.5 1.5 H3" stroke="#b8b8b8" stroke-width="1" fill="none"/></svg>
<div class="t" style="left:2005px;top:1325px;font-size:12.5px;color:#d4d4d4;font-weight:bold;">3:15</div>
<div style="left:2043px;top:1322px;width:1px;height:3px;background:#aaa"></div>
<div style="left:2083px;top:1322px;width:1px;height:3px;background:#aaa"></div>
<svg style="left:2121.4px;top:1322px" width="4" height="9"><path d="M0.5 0 V7 a1.5 1.5 0 0 0 1.5 1.5 H3" stroke="#b8b8b8" stroke-width="1" fill="none"/></svg>
<div class="t" style="left:2124px;top:1325px;font-size:12.5px;color:#d4d4d4;font-weight:bold;">3:30</div>
<div style="left:2162px;top:1322px;width:1px;height:3px;background:#aaa"></div>
<svg style="left:1643px;top:1321px" width="12" height="7"><path d="M0 6 L11 6 L5.5 0z" fill="#19c3d6"/></svg>
<div style="left:1649px;top:933px;width:1px;height:64px;background:#19b8c8"></div>
<div style="left:2187px;top:174px;width:2px;height:1147px;background:#222"></div>
<div style="left:2189px;top:116px;width:359px;height:58px;background:#4b4b4b"></div>
<div style="left:2192px;top:130px;width:35px;height:15px;background:#3a3a3a;border:1px solid #1a1a1a;border-radius:8px;box-sizing:border-box"></div>
<div class="t" style="left:2198px;top:130px;font-size:12.5px;color:#e8e8e8;font-weight:bold;">Set</div>
<div style="left:2240px;top:130px;width:28px;height:15px;background:#3c3c3c;border:1px solid #1a1a1a;box-sizing:border-box"></div>
<svg style="left:2248px;top:133px" width="11" height="10"><path d="M2 8 L9 2" stroke="#ddd" stroke-width="1.5"/><circle cx="2.5" cy="7.5" r="1.6" fill="#ddd"/><circle cx="8.5" cy="2.5" r="1.6" fill="#ddd"/></svg>
<div style="left:2273px;top:130px;width:28px;height:15px;background:#3c3c3c;border:1px solid #1a1a1a;box-sizing:border-box"></div>
<svg style="left:2282px;top:132px" width="10" height="11"><rect x="1" y="5" width="8" height="5.5" fill="#ddd"/><path d="M2.8 5 V3.5 a2.2 2.2 0 0 1 4.4 0 V5" stroke="#ddd" stroke-width="1.3" fill="none"/></svg>
<svg style="left:2192px;top:152px" width="16" height="16"><circle cx="7.7" cy="7.7" r="7" fill="#3a3a3a" stroke="#1a1a1a" stroke-width="1.2"/><path d="M11 7.5 H4.5 M7.5 4.5 L4.5 7.5 L7.5 10.5" stroke="#e0e0e0" stroke-width="1.6" fill="none"/></svg>
<svg style="left:2211px;top:152px" width="16" height="16"><circle cx="7.7" cy="7.7" r="7" fill="#3a3a3a" stroke="#1a1a1a" stroke-width="1.2"/><path d="M4 7.5 H10.5 M7.5 4.5 L10.5 7.5 L7.5 10.5" stroke="#e0e0e0" stroke-width="1.6" fill="none"/></svg>
<div style="left:2189px;top:172px;width:359px;height:2px;background:#2a2a2a"></div>
<div style="left:2309px;top:174px;width:240px;height:1147px;background:#4b4b4b"></div>
<div style="left:2309px;top:174px;width:2px;height:1147px;background:#3a3a3a"></div>
<div style="left:2401px;top:174px;width:3px;height:1021px;background:#393939"></div>
<div style="left:2548px;top:98px;width:2px;height:1249px;background:#1c1c1c"></div>
<div style="left:2189px;top:205px;width:359px;height:2px;background:#2a2a2a"></div>
<div style="left:2189px;top:271px;width:359px;height:2px;background:#2a2a2a"></div>
<div style="left:2189px;top:337px;width:359px;height:2px;background:#2a2a2a"></div>
<div style="left:2189px;top:403px;width:359px;height:2px;background:#2a2a2a"></div>
<div style="left:2189px;top:469px;width:359px;height:2px;background:#2a2a2a"></div>
<div style="left:2189px;top:535px;width:359px;height:2px;background:#2a2a2a"></div>
<div style="left:2189px;top:601px;width:359px;height:2px;background:#2a2a2a"></div>
<div style="left:2189px;top:667px;width:359px;height:2px;background:#2a2a2a"></div>
<div style="left:2189px;top:733px;width:359px;height:2px;background:#2a2a2a"></div>
<div style="left:2189px;top:799px;width:359px;height:2px;background:#2a2a2a"></div>
<div style="left:2189px;top:865px;width:359px;height:2px;background:#2a2a2a"></div>
<div style="left:2189px;top:931px;width:359px;height:2px;background:#2a2a2a"></div>
<div style="left:2189px;top:997px;width:359px;height:2px;background:#2a2a2a"></div>
<div style="left:2189px;top:1063px;width:359px;height:2px;background:#2a2a2a"></div>
<div style="left:2189px;top:1129px;width:359px;height:2px;background:#2a2a2a"></div>
<div style="left:2189px;top:1195px;width:359px;height:2px;background:#2a2a2a"></div>
<div style="left:2189px;top:174px;width:120px;height:31px;background:#4490e4"></div>
<div style="left:2314px;top:174px;width:85px;height:6px;background:#2a2a2a;border:1px solid #1a1a1a;box-sizing:border-box"></div>
<div style="left:2314px;top:187px;width:85px;height:15px;background:#4f4f4f;border:1px solid #1a1a1a;box-sizing:border-box"></div>
<div style="left:2406px;top:174px;width:56px;height:6px;background:#2a2a2a;border:1px solid #1a1a1a;box-sizing:border-box"></div>
<div style="left:2407px;top:175px;width:46px;height:4px;background:#007581"></div>
<div style="left:2467px;top:174px;width:56px;height:6px;background:#2a2a2a;border:1px solid #1a1a1a;box-sizing:border-box"></div>
<div style="left:2406px;top:186px;width:37px;height:15px;background:#303030;border:1px solid #1a1a1a;box-sizing:border-box"></div>
<div class="c" style="left:2406px;top:186px;width:37px;height:15px;line-height:15px;font-size:12.5px;color:#f0f0f0;font-weight:bold;text-align:center">−∞</div>
<div style="left:2447px;top:186px;width:36px;height:15px;background:#303030;border:1px solid #1a1a1a;box-sizing:border-box"></div>
<div class="c" style="left:2447px;top:186px;width:36px;height:15px;line-height:15px;font-size:12.5px;color:#f0f0f0;font-weight:bold;text-align:center">−∞</div>
<div style="left:2528px;top:174px;width:4px;height:28px;background:#2a2a2a"></div>
<div style="left:2533px;top:174px;width:4px;height:28px;background:#2a2a2a"></div>
<div style="left:2528px;top:180px;width:9px;height:1px;background:#4a4a4a"></div>
<div style="left:2189px;top:207px;width:120px;height:64px;background:#4490e4"></div>
<svg style="left:2193px;top:210px" width="16" height="16"><circle cx="8" cy="8" r="7.2" fill="none" stroke="#d0dcef" stroke-width="1.2"/><path d="M4.3 5.8 H11.7 L8 11z" fill="#d0dcef"/></svg>
<div class="t" style="left:2217px;top:211px;font-size:12.5px;color:#cbd6ea;font-weight:bold;">keys []</div>
<div style="left:2312px;top:209px;width:88px;height:18px;background:#40608f"></div>
<div style="left:2314px;top:210px;width:20px;height:16px;background:#3d5f8e;border:1px solid #2c4670;box-sizing:border-box"></div>
<div class="c" style="left:2314px;top:210px;width:20px;height:16px;line-height:16px;font-size:12.5px;color:#c8d8f0;font-weight:bold;text-align:center">In</div>
<div style="left:2338px;top:210px;width:33px;height:16px;background:#b8937a;border:1px solid #2c4670;box-sizing:border-box"></div>
<div class="c" style="left:2338px;top:210px;width:33px;height:16px;line-height:16px;font-size:12.5px;color:#2a3a70;font-weight:normal;text-align:center">Auto</div>
<div style="left:2375px;top:210px;width:24px;height:16px;background:#3d5f8e;border:1px solid #2c4670;box-sizing:border-box"></div>
<div class="c" style="left:2375px;top:210px;width:24px;height:16px;line-height:16px;font-size:12.5px;color:#a8c8f0;font-weight:normal;text-align:center">Off</div>
<div style="left:2314px;top:231px;width:85px;height:16px;background:#2a2a2a;border:1px solid #1a1a1a;box-sizing:border-box"></div>
<div class="t" style="left:2316px;top:232px;font-size:12.5px;color:#f4f4f4;font-weight:bold;">Main</div>
<svg style="left:2388px;top:236px" width="9" height="7"><path d="M0 0 L9 0 L4.5 7z" fill="#eee"/></svg>
<div style="left:2314px;top:252px;width:85px;height:15px;background:#4f4f4f;border:1px solid #1a1a1a;box-sizing:border-box"></div>
<div style="left:2406px;top:210px;width:56px;height:16px;background:#3c3c3c;border:1px solid #1a1a1a;box-sizing:border-box"></div>
<div class="c" style="left:2406px;top:210px;width:56px;height:16px;line-height:16px;font-size:12.5px;color:#f0f0f0;font-weight:bold;text-align:center">2</div>
<div style="left:2467px;top:210px;width:26px;height:16px;background:#3c3c3c;border:1px solid #1a1a1a;box-sizing:border-box"></div>
<div class="c" style="left:2467px;top:210px;width:26px;height:16px;line-height:16px;font-size:12.5px;color:#f0f0f0;font-weight:bold;text-align:center">S</div>
<div style="left:2497px;top:209px;width:28px;height:18px;background:#40608f"></div>
<div style="left:2498px;top:210px;width:26px;height:16px;background:#3d5f8e;border:1px solid #2c4670;box-sizing:border-box"></div>
<svg style="left:2504px;top:212px" width="13" height="13"><circle cx="6.5" cy="6.5" r="5.5" fill="#a8c8f0"/><path d="M7 2.5 V7.5 L4 7.5" stroke="#3d5f8e" stroke-width="1.6" fill="none"/></svg>
<div style="left:2406px;top:231px;width:56px;height:16px;background:#2a2a2a;border:1px solid #1a1a1a;box-sizing:border-box"></div>
<div style="left:2407px;top:232px;width:46px;height:14px;background:#007581"></div>
<div class="c" style="left:2406px;top:231px;width:56px;height:16px;line-height:16px;font-size:12.5px;color:#f0f0f0;font-weight:bold;text-align:center">0</div>
<div style="left:2467px;top:231px;width:56px;height:16px;background:#2a2a2a;border:1px solid #1a1a1a;box-sizing:border-box"></div>
<div class="c" style="left:2467px;top:231px;width:56px;height:16px;line-height:16px;font-size:12.5px;color:#f0f0f0;font-weight:bold;text-align:center">C</div>
<div style="left:2406px;top:252px;width:37px;height:15px;background:#303030;border:1px solid #1a1a1a;box-sizing:border-box"></div>
<div class="c" style="left:2406px;top:252px;width:37px;height:15px;line-height:15px;font-size:12.5px;color:#f0f0f0;font-weight:bold;text-align:center">−∞</div>
<div style="left:2447px;top:252px;width:36px;height:15px;background:#303030;border:1px solid #1a1a1a;box-sizing:border-box"></div>
<div class="c" style="left:2447px;top:252px;width:36px;height:15px;line-height:15px;font-size:12.5px;color:#f0f0f0;font-weight:bold;text-align:center">−∞</div>
<div style="left:2528px;top:210px;width:4px;height:59px;background:#2a2a2a"></div>
<div style="left:2533px;top:210px;width:4px;height:59px;background:#2a2a2a"></div>
<div style="left:2528px;top:216px;width:9px;height:1px;background:#4a4a4a"></div>
<div style="left:2189px;top:273px;width:120px;height:64px;background:#4490e4"></div>
<svg style="left:2193px;top:276px" width="16" height="16"><circle cx="8" cy="8" r="7.2" fill="none" stroke="#d0dcef" stroke-width="1.2"/><path d="M4.3 5.8 H11.7 L8 11z" fill="#d0dcef"/></svg>
<div class="t" style="left:2217px;top:277px;font-size:12.5px;color:#cbd6ea;font-weight:bold;">strings []</div>
<div style="left:2312px;top:275px;width:88px;height:18px;background:#40608f"></div>
<div style="left:2314px;top:276px;width:20px;height:16px;background:#3d5f8e;border:1px solid #2c4670;box-sizing:border-box"></div>
<div class="c" style="left:2314px;top:276px;width:20px;height:16px;line-height:16px;font-size:12.5px;color:#c8d8f0;font-weight:bold;text-align:center">In</div>
<div style="left:2338px;top:276px;width:33px;height:16px;background:#b8937a;border:1px solid #2c4670;box-sizing:border-box"></div>
<div class="c" style="left:2338px;top:276px;width:33px;height:16px;line-height:16px;font-size:12.5px;color:#2a3a70;font-weight:normal;text-align:center">Auto</div>
<div style="left:2375px;top:276px;width:24px;height:16px;background:#3d5f8e;border:1px solid #2c4670;box-sizing:border-box"></div>
<div class="c" style="left:2375px;top:276px;width:24px;height:16px;line-height:16px;font-size:12.5px;color:#a8c8f0;font-weight:normal;text-align:center">Off</div>
<div style="left:2314px;top:297px;width:85px;height:16px;background:#2a2a2a;border:1px solid #1a1a1a;box-sizing:border-box"></div>
<div class="t" style="left:2316px;top:298px;font-size:12.5px;color:#f4f4f4;font-weight:bold;">Main</div>
<svg style="left:2388px;top:302px" width="9" height="7"><path d="M0 0 L9 0 L4.5 7z" fill="#eee"/></svg>
<div style="left:2314px;top:318px;width:85px;height:15px;background:#4f4f4f;border:1px solid #1a1a1a;box-sizing:border-box"></div>
<div style="left:2406px;top:276px;width:56px;height:16px;background:#3c3c3c;border:1px solid #1a1a1a;box-sizing:border-box"></div>
<div class="c" style="left:2406px;top:276px;width:56px;height:16px;line-height:16px;font-size:12.5px;color:#f0f0f0;font-weight:bold;text-align:center">3</div>
<div style="left:2467px;top:276px;width:26px;height:16px;background:#3c3c3c;border:1px solid #1a1a1a;box-sizing:border-box"></div>
<div class="c" style="left:2467px;top:276px;width:26px;height:16px;line-height:16px;font-size:12.5px;color:#f0f0f0;font-weight:bold;text-align:center">S</div>
<div style="left:2497px;top:275px;width:28px;height:18px;background:#40608f"></div>
<div style="left:2498px;top:276px;width:26px;height:16px;background:#3d5f8e;border:1px solid #2c4670;box-sizing:border-box"></div>
<svg style="left:2504px;top:278px" width="13" height="13"><circle cx="6.5" cy="6.5" r="5.5" fill="#a8c8f0"/><path d="M7 2.5 V7.5 L4 7.5" stroke="#3d5f8e" stroke-width="1.6" fill="none"/></svg>
<div style="left:2406px;top:297px;width:56px;height:16px;background:#2a2a2a;border:1px solid #1a1a1a;box-sizing:border-box"></div>
<div style="left:2407px;top:298px;width:46px;height:14px;background:#007581"></div>
<div class="c" style="left:2406px;top:297px;width:56px;height:16px;line-height:16px;font-size:12.5px;color:#f0f0f0;font-weight:bold;text-align:center">0</div>
<div style="left:2467px;top:297px;width:56px;height:16px;background:#2a2a2a;border:1px solid #1a1a1a;box-sizing:border-box"></div>
<div class="c" style="left:2467px;top:297px;width:56px;height:16px;line-height:16px;font-size:12.5px;color:#f0f0f0;font-weight:bold;text-align:center">C</div>
<div style="left:2406px;top:318px;width:37px;height:15px;background:#303030;border:1px solid #1a1a1a;box-sizing:border-box"></div>
<div class="c" style="left:2406px;top:318px;width:37px;height:15px;line-height:15px;font-size:12.5px;color:#f0f0f0;font-weight:bold;text-align:center">−∞</div>
<div style="left:2447px;top:318px;width:36px;height:15px;background:#303030;border:1px solid #1a1a1a;box-sizing:border-box"></div>
<div class="c" style="left:2447px;top:318px;width:36px;height:15px;line-height:15px;font-size:12.5px;color:#f0f0f0;font-weight:bold;text-align:center">−∞</div>
<div style="left:2528px;top:276px;width:4px;height:59px;background:#2a2a2a"></div>
<div style="left:2533px;top:276px;width:4px;height:59px;background:#2a2a2a"></div>
<div style="left:2528px;top:282px;width:9px;height:1px;background:#4a4a4a"></div>
<div style="left:2189px;top:339px;width:120px;height:64px;background:#4490e4"></div>
<svg style="left:2193px;top:342px" width="16" height="16"><circle cx="8" cy="8" r="7.2" fill="none" stroke="#d0dcef" stroke-width="1.2"/><path d="M4.3 5.8 H11.7 L8 11z" fill="#d0dcef"/></svg>
<div class="t" style="left:2217px;top:343px;font-size:12.5px;color:#cbd6ea;font-weight:bold;">arpeggio []</div>
<div style="left:2312px;top:341px;width:88px;height:18px;background:#40608f"></div>
<div style="left:2314px;top:342px;width:20px;height:16px;background:#3d5f8e;border:1px solid #2c4670;box-sizing:border-box"></div>
<div class="c" style="left:2314px;top:342px;width:20px;height:16px;line-height:16px;font-size:12.5px;color:#c8d8f0;font-weight:bold;text-align:center">In</div>
<div style="left:2338px;top:342px;width:33px;height:16px;background:#b8937a;border:1px solid #2c4670;box-sizing:border-box"></div>
<div class="c" style="left:2338px;top:342px;width:33px;height:16px;line-height:16px;font-size:12.5px;color:#2a3a70;font-weight:normal;text-align:center">Auto</div>
<div style="left:2375px;top:342px;width:24px;height:16px;background:#3d5f8e;border:1px solid #2c4670;box-sizing:border-box"></div>
<div class="c" style="left:2375px;top:342px;width:24px;height:16px;line-height:16px;font-size:12.5px;color:#a8c8f0;font-weight:normal;text-align:center">Off</div>
<div style="left:2314px;top:363px;width:85px;height:16px;background:#2a2a2a;border:1px solid #1a1a1a;box-sizing:border-box"></div>
<div class="t" style="left:2316px;top:364px;font-size:12.5px;color:#f4f4f4;font-weight:bold;">Main</div>
<svg style="left:2388px;top:368px" width="9" height="7"><path d="M0 0 L9 0 L4.5 7z" fill="#eee"/></svg>
<div style="left:2314px;top:384px;width:85px;height:15px;background:#4f4f4f;border:1px solid #1a1a1a;box-sizing:border-box"></div>
<div style="left:2406px;top:342px;width:56px;height:16px;background:#3c3c3c;border:1px solid #1a1a1a;box-sizing:border-box"></div>
<div class="c" style="left:2406px;top:342px;width:56px;height:16px;line-height:16px;font-size:12.5px;color:#f0f0f0;font-weight:bold;text-align:center">4</div>
<div style="left:2467px;top:342px;width:26px;height:16px;background:#3c3c3c;border:1px solid #1a1a1a;box-sizing:border-box"></div>
<div class="c" style="left:2467px;top:342px;width:26px;height:16px;line-height:16px;font-size:12.5px;color:#f0f0f0;font-weight:bold;text-align:center">S</div>
<div style="left:2497px;top:341px;width:28px;height:18px;background:#40608f"></div>
<div style="left:2498px;top:342px;width:26px;height:16px;background:#3d5f8e;border:1px solid #2c4670;box-sizing:border-box"></div>
<svg style="left:2504px;top:344px" width="13" height="13"><circle cx="6.5" cy="6.5" r="5.5" fill="#a8c8f0"/><path d="M7 2.5 V7.5 L4 7.5" stroke="#3d5f8e" stroke-width="1.6" fill="none"/></svg>
<div style="left:2406px;top:363px;width:56px;height:16px;background:#2a2a2a;border:1px solid #1a1a1a;box-sizing:border-box"></div>
<div style="left:2407px;top:364px;width:46px;height:14px;background:#007581"></div>
<div class="c" style="left:2406px;top:363px;width:56px;height:16px;line-height:16px;font-size:12.5px;color:#f0f0f0;font-weight:bold;text-align:center">0</div>
<div style="left:2467px;top:363px;width:56px;height:16px;background:#2a2a2a;border:1px solid #1a1a1a;box-sizing:border-box"></div>
<div class="c" style="left:2467px;top:363px;width:56px;height:16px;line-height:16px;font-size:12.5px;color:#f0f0f0;font-weight:bold;text-align:center">C</div>
<div style="left:2406px;top:384px;width:37px;height:15px;background:#303030;border:1px solid #1a1a1a;box-sizing:border-box"></div>
<div class="c" style="left:2406px;top:384px;width:37px;height:15px;line-height:15px;font-size:12.5px;color:#f0f0f0;font-weight:bold;text-align:center">−∞</div>
<div style="left:2447px;top:384px;width:36px;height:15px;background:#303030;border:1px solid #1a1a1a;box-sizing:border-box"></div>
<div class="c" style="left:2447px;top:384px;width:36px;height:15px;line-height:15px;font-size:12.5px;color:#f0f0f0;font-weight:bold;text-align:center">−∞</div>
<div style="left:2528px;top:342px;width:4px;height:59px;background:#2a2a2a"></div>
<div style="left:2533px;top:342px;width:4px;height:59px;background:#2a2a2a"></div>
<div style="left:2528px;top:348px;width:9px;height:1px;background:#4a4a4a"></div>
<div style="left:2189px;top:405px;width:120px;height:64px;background:#4490e4"></div>
<svg style="left:2193px;top:408px" width="16" height="16"><circle cx="8" cy="8" r="7.2" fill="none" stroke="#d0dcef" stroke-width="1.2"/><path d="M4.3 5.8 H11.7 L8 11z" fill="#d0dcef"/></svg>
<div class="t" style="left:2217px;top:409px;font-size:12.5px;color:#cbd6ea;font-weight:bold;">trumpet []</div>
<div style="left:2312px;top:407px;width:88px;height:18px;background:#40608f"></div>
<div style="left:2314px;top:408px;width:20px;height:16px;background:#3d5f8e;border:1px solid #2c4670;box-sizing:border-box"></div>
<div class="c" style="left:2314px;top:408px;width:20px;height:16px;line-height:16px;font-size:12.5px;color:#c8d8f0;font-weight:bold;text-align:center">In</div>
<div style="left:2338px;top:408px;width:33px;height:16px;background:#b8937a;border:1px solid #2c4670;box-sizing:border-box"></div>
<div class="c" style="left:2338px;top:408px;width:33px;height:16px;line-height:16px;font-size:12.5px;color:#2a3a70;font-weight:normal;text-align:center">Auto</div>
<div style="left:2375px;top:408px;width:24px;height:16px;background:#3d5f8e;border:1px solid #2c4670;box-sizing:border-box"></div>
<div class="c" style="left:2375px;top:408px;width:24px;height:16px;line-height:16px;font-size:12.5px;color:#a8c8f0;font-weight:normal;text-align:center">Off</div>
<div style="left:2314px;top:429px;width:85px;height:16px;background:#2a2a2a;border:1px solid #1a1a1a;box-sizing:border-box"></div>
<div class="t" style="left:2316px;top:430px;font-size:12.5px;color:#f4f4f4;font-weight:bold;">Main</div>
<svg style="left:2388px;top:434px" width="9" height="7"><path d="M0 0 L9 0 L4.5 7z" fill="#eee"/></svg>
<div style="left:2314px;top:450px;width:85px;height:15px;background:#4f4f4f;border:1px solid #1a1a1a;box-sizing:border-box"></div>
<div style="left:2406px;top:408px;width:56px;height:16px;background:#3c3c3c;border:1px solid #1a1a1a;box-sizing:border-box"></div>
<div class="c" style="left:2406px;top:408px;width:56px;height:16px;line-height:16px;font-size:12.5px;color:#f0f0f0;font-weight:bold;text-align:center">5</div>
<div style="left:2467px;top:408px;width:26px;height:16px;background:#3c3c3c;border:1px solid #1a1a1a;box-sizing:border-box"></div>
<div class="c" style="left:2467px;top:408px;width:26px;height:16px;line-height:16px;font-size:12.5px;color:#f0f0f0;font-weight:bold;text-align:center">S</div>
<div style="left:2497px;top:407px;width:28px;height:18px;background:#40608f"></div>
<div style="left:2498px;top:408px;width:26px;height:16px;background:#3d5f8e;border:1px solid #2c4670;box-sizing:border-box"></div>
<svg style="left:2504px;top:410px" width="13" height="13"><circle cx="6.5" cy="6.5" r="5.5" fill="#a8c8f0"/><path d="M7 2.5 V7.5 L4 7.5" stroke="#3d5f8e" stroke-width="1.6" fill="none"/></svg>
<div style="left:2406px;top:429px;width:56px;height:16px;background:#2a2a2a;border:1px solid #1a1a1a;box-sizing:border-box"></div>
<div style="left:2407px;top:430px;width:46px;height:14px;background:#007581"></div>
<div class="c" style="left:2406px;top:429px;width:56px;height:16px;line-height:16px;font-size:12.5px;color:#f0f0f0;font-weight:bold;text-align:center">0</div>
<div style="left:2467px;top:429px;width:56px;height:16px;background:#2a2a2a;border:1px solid #1a1a1a;box-sizing:border-box"></div>
<div class="c" style="left:2467px;top:429px;width:56px;height:16px;line-height:16px;font-size:12.5px;color:#f0f0f0;font-weight:bold;text-align:center">C</div>
<div style="left:2406px;top:450px;width:37px;height:15px;background:#303030;border:1px solid #1a1a1a;box-sizing:border-box"></div>
<div class="c" style="left:2406px;top:450px;width:37px;height:15px;line-height:15px;font-size:12.5px;color:#f0f0f0;font-weight:bold;text-align:center">−∞</div>
<div style="left:2447px;top:450px;width:36px;height:15px;background:#303030;border:1px solid #1a1a1a;box-sizing:border-box"></div>
<div class="c" style="left:2447px;top:450px;width:36px;height:15px;line-height:15px;font-size:12.5px;color:#f0f0f0;font-weight:bold;text-align:center">−∞</div>
<div style="left:2528px;top:408px;width:4px;height:59px;background:#2a2a2a"></div>
<div style="left:2533px;top:408px;width:4px;height:59px;background:#2a2a2a"></div>
<div style="left:2528px;top:414px;width:9px;height:1px;background:#4a4a4a"></div>
<div style="left:2189px;top:471px;width:120px;height:64px;background:#4490e4"></div>
<svg style="left:2193px;top:474px" width="16" height="16"><circle cx="8" cy="8" r="7.2" fill="none" stroke="#d0dcef" stroke-width="1.2"/><path d="M4.3 5.8 H11.7 L8 11z" fill="#d0dcef"/></svg>
<div class="t" style="left:2217px;top:475px;font-size:12.5px;color:#cbd6ea;font-weight:bold;">chimes []</div>
<div style="left:2312px;top:473px;width:88px;height:18px;background:#40608f"></div>
<div style="left:2314px;top:474px;width:20px;height:16px;background:#3d5f8e;border:1px solid #2c4670;box-sizing:border-box"></div>
<div class="c" style="left:2314px;top:474px;width:20px;height:16px;line-height:16px;font-size:12.5px;color:#c8d8f0;font-weight:bold;text-align:center">In</div>
<div style="left:2338px;top:474px;width:33px;height:16px;background:#b8937a;border:1px solid #2c4670;box-sizing:border-box"></div>
<div class="c" style="left:2338px;top:474px;width:33px;height:16px;line-height:16px;font-size:12.5px;color:#2a3a70;font-weight:normal;text-align:center">Auto</div>
<div style="left:2375px;top:474px;width:24px;height:16px;background:#3d5f8e;border:1px solid #2c4670;box-sizing:border-box"></div>
<div class="c" style="left:2375px;top:474px;width:24px;height:16px;line-height:16px;font-size:12.5px;color:#a8c8f0;font-weight:normal;text-align:center">Off</div>
<div style="left:2314px;top:495px;width:85px;height:16px;background:#2a2a2a;border:1px solid #1a1a1a;box-sizing:border-box"></div>
<div class="t" style="left:2316px;top:496px;font-size:12.5px;color:#f4f4f4;font-weight:bold;">Main</div>
<svg style="left:2388px;top:500px" width="9" height="7"><path d="M0 0 L9 0 L4.5 7z" fill="#eee"/></svg>
<div style="left:2314px;top:516px;width:85px;height:15px;background:#4f4f4f;border:1px solid #1a1a1a;box-sizing:border-box"></div>
<div style="left:2406px;top:474px;width:56px;height:16px;background:#3c3c3c;border:1px solid #1a1a1a;box-sizing:border-box"></div>
<div class="c" style="left:2406px;top:474px;width:56px;height:16px;line-height:16px;font-size:12.5px;color:#f0f0f0;font-weight:bold;text-align:center">6</div>
<div style="left:2467px;top:474px;width:26px;height:16px;background:#3c3c3c;border:1px solid #1a1a1a;box-sizing:border-box"></div>
<div class="c" style="left:2467px;top:474px;width:26px;height:16px;line-height:16px;font-size:12.5px;color:#f0f0f0;font-weight:bold;text-align:center">S</div>
<div style="left:2497px;top:473px;width:28px;height:18px;background:#40608f"></div>
<div style="left:2498px;top:474px;width:26px;height:16px;background:#3d5f8e;border:1px solid #2c4670;box-sizing:border-box"></div>
<svg style="left:2504px;top:476px" width="13" height="13"><circle cx="6.5" cy="6.5" r="5.5" fill="#a8c8f0"/><path d="M7 2.5 V7.5 L4 7.5" stroke="#3d5f8e" stroke-width="1.6" fill="none"/></svg>
<div style="left:2406px;top:495px;width:56px;height:16px;background:#2a2a2a;border:1px solid #1a1a1a;box-sizing:border-box"></div>
<div style="left:2407px;top:496px;width:46px;height:14px;background:#007581"></div>
<div class="c" style="left:2406px;top:495px;width:56px;height:16px;line-height:16px;font-size:12.5px;color:#f0f0f0;font-weight:bold;text-align:center">0</div>
<div style="left:2467px;top:495px;width:56px;height:16px;background:#2a2a2a;border:1px solid #1a1a1a;box-sizing:border-box"></div>
<div class="c" style="left:2467px;top:495px;width:56px;height:16px;line-height:16px;font-size:12.5px;color:#f0f0f0;font-weight:bold;text-align:center">C</div>
<div style="left:2406px;top:516px;width:37px;height:15px;background:#303030;border:1px solid #1a1a1a;box-sizing:border-box"></div>
<div class="c" style="left:2406px;top:516px;width:37px;height:15px;line-height:15px;font-size:12.5px;color:#f0f0f0;font-weight:bold;text-align:center">−∞</div>
<div style="left:2447px;top:516px;width:36px;height:15px;background:#303030;border:1px solid #1a1a1a;box-sizing:border-box"></div>
<div class="c" style="left:2447px;top:516px;width:36px;height:15px;line-height:15px;font-size:12.5px;color:#f0f0f0;font-weight:bold;text-align:center">−∞</div>
<div style="left:2528px;top:474px;width:4px;height:59px;background:#2a2a2a"></div>
<div style="left:2533px;top:474px;width:4px;height:59px;background:#2a2a2a"></div>
<div style="left:2528px;top:480px;width:9px;height:1px;background:#4a4a4a"></div>
<div style="left:2189px;top:537px;width:120px;height:64px;background:#88ff68"></div>
<svg style="left:2193px;top:540px" width="16" height="16"><circle cx="8" cy="8" r="7.2" fill="none" stroke="#1f3a14" stroke-width="1.2"/><path d="M4.5 6 H11.5 M4.5 8.5 H11.5 M6.5 11 H11.5" stroke="#1f3a14" stroke-width="1.3"/></svg>
<div class="t" style="left:2216px;top:541px;font-size:12.5px;color:#1f3a14;font-weight:bold;">PRE-MIX</div>
<div style="left:2314px;top:541px;width:85px;height:16px;background:#2a2a2a;border:1px solid #1a1a1a;box-sizing:border-box"></div>
<div class="t" style="left:2316px;top:542px;font-size:12.5px;color:#f4f4f4;font-weight:bold;">Main</div>
<svg style="left:2388px;top:546px" width="9" height="7"><path d="M0 0 L9 0 L4.5 7z" fill="#eee"/></svg>
<div style="left:2314px;top:561px;width:85px;height:15px;background:#4f4f4f;border:1px solid #1a1a1a;box-sizing:border-box"></div>
<div style="left:2407px;top:541px;width:55px;height:16px;background:#ffa33b;border:1px solid #1a1a1a;box-sizing:border-box"></div>
<div class="c" style="left:2407px;top:541px;width:55px;height:16px;line-height:16px;font-size:12.5px;color:#222;font-weight:bold;text-align:center">7</div>
<div style="left:2467px;top:541px;width:26px;height:16px;background:#3c3c3c;border:1px solid #1a1a1a;box-sizing:border-box"></div>
<div class="c" style="left:2467px;top:541px;width:26px;height:16px;line-height:16px;font-size:12.5px;color:#f0f0f0;font-weight:bold;text-align:center">S</div>
<div style="left:2406px;top:561px;width:56px;height:16px;background:#2a2a2a;border:1px solid #1a1a1a;box-sizing:border-box"></div>
<div style="left:2407px;top:562px;width:45px;height:14px;background:#007581"></div>
<div class="c" style="left:2406px;top:561px;width:56px;height:16px;line-height:16px;font-size:12.5px;color:#f0f0f0;font-weight:bold;text-align:center">0</div>
<div style="left:2467px;top:561px;width:56px;height:16px;background:#2a2a2a;border:1px solid #1a1a1a;box-sizing:border-box"></div>
<div class="c" style="left:2467px;top:561px;width:56px;height:16px;line-height:16px;font-size:12.5px;color:#f0f0f0;font-weight:bold;text-align:center">C</div>
<div style="left:2406px;top:582px;width:37px;height:15px;background:#303030;border:1px solid #1a1a1a;box-sizing:border-box"></div>
<div class="c" style="left:2406px;top:582px;width:37px;height:15px;line-height:15px;font-size:12.5px;color:#f0f0f0;font-weight:bold;text-align:center">−∞</div>
<div style="left:2447px;top:582px;width:36px;height:15px;background:#303030;border:1px solid #1a1a1a;box-sizing:border-box"></div>
<div class="c" style="left:2447px;top:582px;width:36px;height:15px;line-height:15px;font-size:12.5px;color:#f0f0f0;font-weight:bold;text-align:center">−∞</div>
<div style="left:2528px;top:540px;width:4px;height:59px;background:#2a2a2a"></div>
<div style="left:2533px;top:540px;width:4px;height:59px;background:#2a2a2a"></div>
<div style="left:2528px;top:546px;width:9px;height:1px;background:#4a4a4a"></div>
<div style="left:2189px;top:600px;width:6px;height:595px;background:#88ff68"></div>
<div style="left:2195px;top:603px;width:114px;height:64px;background:#f6f17e"></div>
<svg style="left:2199px;top:606px" width="16" height="16"><circle cx="8" cy="8" r="7.2" fill="none" stroke="#3a3a1a" stroke-width="1.2"/><path d="M4.3 5.8 H11.7 L8 11z" fill="#3a3a1a"/></svg>
<div class="t" style="left:2222px;top:607px;font-size:12.5px;color:#3a3a1a;font-weight:bold;">drums</div>
<div style="left:2314px;top:606px;width:20px;height:16px;background:#3c3c3c;border:1px solid #1a1a1a;box-sizing:border-box"></div>
<div class="c" style="left:2314px;top:606px;width:20px;height:16px;line-height:16px;font-size:12.5px;color:#f0f0f0;font-weight:bold;text-align:center">In</div>
<div style="left:2338px;top:606px;width:33px;height:16px;background:#3c3c3c;border:1px solid #1a1a1a;box-sizing:border-box"></div>
<div class="c" style="left:2338px;top:606px;width:33px;height:16px;line-height:16px;font-size:12.5px;color:#f0f0f0;font-weight:bold;text-align:center">Auto</div>
<div style="left:2375px;top:606px;width:24px;height:16px;background:#ff9f2e;border:1px solid #1a1a1a;box-sizing:border-box"></div>
<div class="c" style="left:2375px;top:606px;width:24px;height:16px;line-height:16px;font-size:12.5px;color:#222;font-weight:normal;text-align:center">Off</div>
<div style="left:2314px;top:627px;width:85px;height:16px;background:#2a2a2a;border:1px solid #1a1a1a;box-sizing:border-box"></div>
<div class="t" style="left:2316px;top:628px;font-size:12.5px;color:#f4f4f4;font-weight:bold;">PRE-MIX</div>
<svg style="left:2388px;top:632px" width="9" height="7"><path d="M0 0 L9 0 L4.5 7z" fill="#eee"/></svg>
<div style="left:2314px;top:648px;width:85px;height:15px;background:#4f4f4f;border:1px solid #1a1a1a;box-sizing:border-box"></div>
<div style="left:2407px;top:606px;width:55px;height:16px;background:#ffa33b;border:1px solid #1a1a1a;box-sizing:border-box"></div>
<div class="c" style="left:2407px;top:606px;width:55px;height:16px;line-height:16px;font-size:12.5px;color:#222;font-weight:normal;text-align:center">8</div>
<div style="left:2467px;top:606px;width:26px;height:16px;background:#3c3c3c;border:1px solid #1a1a1a;box-sizing:border-box"></div>
<div class="c" style="left:2467px;top:606px;width:26px;height:16px;line-height:16px;font-size:12.5px;color:#f0f0f0;font-weight:bold;text-align:center">S</div>
<div style="left:2498px;top:606px;width:25px;height:16px;background:#3c3c3c;border:1px solid #1a1a1a;box-sizing:border-box"></div>
<svg style="left:2504px;top:608px" width="13" height="13"><circle cx="6.5" cy="6.5" r="5" fill="#dcdcdc"/></svg>
<div style="left:2407px;top:627px;width:55px;height:16px;background:#2a2a2a;border:1px solid #1a1a1a;box-sizing:border-box"></div>
<div style="left:2408px;top:628px;width:27px;height:14px;background:#007581"></div>
<div class="c" style="left:2407px;top:627px;width:55px;height:16px;line-height:16px;font-size:12.5px;color:#f0f0f0;font-weight:bold;text-align:center">-13.0</div>
<div style="left:2467px;top:627px;width:56px;height:16px;background:#2a2a2a;border:1px solid #1a1a1a;box-sizing:border-box"></div>
<div class="c" style="left:2467px;top:627px;width:56px;height:16px;line-height:16px;font-size:12.5px;color:#f0f0f0;font-weight:bold;text-align:center">C</div>
<div style="left:2407px;top:648px;width:36px;height:15px;background:#303030;border:1px solid #1a1a1a;box-sizing:border-box"></div>
<div style="left:2408px;top:649px;width:8px;height:13px;background:#007581"></div>
<div class="c" style="left:2407px;top:648px;width:36px;height:15px;line-height:15px;font-size:12.5px;color:#f0f0f0;font-weight:bold;text-align:center">-32.0</div>
<div style="left:2447px;top:648px;width:36px;height:15px;background:#303030;border:1px solid #1a1a1a;box-sizing:border-box"></div>
<div class="c" style="left:2447px;top:648px;width:36px;height:15px;line-height:15px;font-size:12.5px;color:#f0f0f0;font-weight:bold;text-align:center">−∞</div>
<div style="left:2528px;top:606px;width:4px;height:59px;background:#2a2a2a"></div>
<div style="left:2533px;top:606px;width:4px;height:59px;background:#2a2a2a"></div>
<div style="left:2528px;top:612px;width:9px;height:1px;background:#4a4a4a"></div>
<div style="left:2195px;top:669px;width:114px;height:64px;background:#88ff68"></div>
<svg style="left:2199px;top:672px" width="16" height="16"><circle cx="8" cy="8" r="7.2" fill="none" stroke="#1f3a14" stroke-width="1.2"/><path d="M4.3 5.8 H11.7 L8 11z" fill="#1f3a14"/></svg>
<div class="t" style="left:2222px;top:673px;font-size:12.5px;color:#1f3a14;font-weight:bold;">bass</div>
<div style="left:2314px;top:672px;width:20px;height:16px;background:#3c3c3c;border:1px solid #1a1a1a;box-sizing:border-box"></div>
<div class="c" style="left:2314px;top:672px;width:20px;height:16px;line-height:16px;font-size:12.5px;color:#f0f0f0;font-weight:bold;text-align:center">In</div>
<div style="left:2338px;top:672px;width:33px;height:16px;background:#3c3c3c;border:1px solid #1a1a1a;box-sizing:border-box"></div>
<div class="c" style="left:2338px;top:672px;width:33px;height:16px;line-height:16px;font-size:12.5px;color:#f0f0f0;font-weight:bold;text-align:center">Auto</div>
<div style="left:2375px;top:672px;width:24px;height:16px;background:#ff9f2e;border:1px solid #1a1a1a;box-sizing:border-box"></div>
<div class="c" style="left:2375px;top:672px;width:24px;height:16px;line-height:16px;font-size:12.5px;color:#222;font-weight:normal;text-align:center">Off</div>
<div style="left:2314px;top:693px;width:85px;height:16px;background:#2a2a2a;border:1px solid #1a1a1a;box-sizing:border-box"></div>
<div class="t" style="left:2316px;top:694px;font-size:12.5px;color:#f4f4f4;font-weight:bold;">PRE-MIX</div>
<svg style="left:2388px;top:698px" width="9" height="7"><path d="M0 0 L9 0 L4.5 7z" fill="#eee"/></svg>
<div style="left:2314px;top:714px;width:85px;height:15px;background:#4f4f4f;border:1px solid #1a1a1a;box-sizing:border-box"></div>
<div style="left:2407px;top:672px;width:55px;height:16px;background:#ffa33b;border:1px solid #1a1a1a;box-sizing:border-box"></div>
<div class="c" style="left:2407px;top:672px;width:55px;height:16px;line-height:16px;font-size:12.5px;color:#222;font-weight:normal;text-align:center">9</div>
<div style="left:2467px;top:672px;width:26px;height:16px;background:#3c3c3c;border:1px solid #1a1a1a;box-sizing:border-box"></div>
<div class="c" style="left:2467px;top:672px;width:26px;height:16px;line-height:16px;font-size:12.5px;color:#f0f0f0;font-weight:bold;text-align:center">S</div>
<div style="left:2498px;top:672px;width:25px;height:16px;background:#3c3c3c;border:1px solid #1a1a1a;box-sizing:border-box"></div>
<svg style="left:2504px;top:674px" width="13" height="13"><circle cx="6.5" cy="6.5" r="5" fill="#dcdcdc"/></svg>
<div style="left:2407px;top:693px;width:55px;height:16px;background:#2a2a2a;border:1px solid #1a1a1a;box-sizing:border-box"></div>
<div style="left:2408px;top:694px;width:36px;height:14px;background:#007581"></div>
<div class="c" style="left:2407px;top:693px;width:55px;height:16px;line-height:16px;font-size:12.5px;color:#f0f0f0;font-weight:bold;text-align:center">-6.6</div>
<div style="left:2467px;top:693px;width:56px;height:16px;background:#2a2a2a;border:1px solid #1a1a1a;box-sizing:border-box"></div>
<div class="c" style="left:2467px;top:693px;width:56px;height:16px;line-height:16px;font-size:12.5px;color:#f0f0f0;font-weight:bold;text-align:center">C</div>
<div style="left:2407px;top:714px;width:36px;height:15px;background:#303030;border:1px solid #1a1a1a;box-sizing:border-box"></div>
<div class="c" style="left:2407px;top:714px;width:36px;height:15px;line-height:15px;font-size:12.5px;color:#f0f0f0;font-weight:bold;text-align:center">−∞</div>
<div style="left:2447px;top:714px;width:36px;height:15px;background:#303030;border:1px solid #1a1a1a;box-sizing:border-box"></div>
<div class="c" style="left:2447px;top:714px;width:36px;height:15px;line-height:15px;font-size:12.5px;color:#f0f0f0;font-weight:bold;text-align:center">−∞</div>
<div style="left:2528px;top:672px;width:4px;height:59px;background:#2a2a2a"></div>
<div style="left:2533px;top:672px;width:4px;height:59px;background:#2a2a2a"></div>
<div style="left:2528px;top:678px;width:9px;height:1px;background:#4a4a4a"></div>
<div style="left:2195px;top:735px;width:114px;height:64px;background:#f6f17e"></div>
<svg style="left:2199px;top:738px" width="16" height="16"><circle cx="8" cy="8" r="7.2" fill="none" stroke="#3a3a1a" stroke-width="1.2"/><path d="M4.3 5.8 H11.7 L8 11z" fill="#3a3a1a"/></svg>
<div class="t" style="left:2222px;top:739px;font-size:12.5px;color:#3a3a1a;font-weight:bold;">shaker</div>
<div style="left:2314px;top:738px;width:20px;height:16px;background:#3c3c3c;border:1px solid #1a1a1a;box-sizing:border-box"></div>
<div class="c" style="left:2314px;top:738px;width:20px;height:16px;line-height:16px;font-size:12.5px;color:#f0f0f0;font-weight:bold;text-align:center">In</div>
<div style="left:2338px;top:738px;width:33px;height:16px;background:#3c3c3c;border:1px solid #1a1a1a;box-sizing:border-box"></div>
<div class="c" style="left:2338px;top:738px;width:33px;height:16px;line-height:16px;font-size:12.5px;color:#f0f0f0;font-weight:bold;text-align:center">Auto</div>
<div style="left:2375px;top:738px;width:24px;height:16px;background:#ff9f2e;border:1px solid #1a1a1a;box-sizing:border-box"></div>
<div class="c" style="left:2375px;top:738px;width:24px;height:16px;line-height:16px;font-size:12.5px;color:#222;font-weight:normal;text-align:center">Off</div>
<div style="left:2314px;top:759px;width:85px;height:16px;background:#2a2a2a;border:1px solid #1a1a1a;box-sizing:border-box"></div>
<div class="t" style="left:2316px;top:760px;font-size:12.5px;color:#f4f4f4;font-weight:bold;">PRE-MIX</div>
<svg style="left:2388px;top:764px" width="9" height="7"><path d="M0 0 L9 0 L4.5 7z" fill="#eee"/></svg>
<div style="left:2314px;top:780px;width:85px;height:15px;background:#4f4f4f;border:1px solid #1a1a1a;box-sizing:border-box"></div>
<div style="left:2407px;top:738px;width:55px;height:16px;background:#ffa33b;border:1px solid #1a1a1a;box-sizing:border-box"></div>
<div class="c" style="left:2407px;top:738px;width:55px;height:16px;line-height:16px;font-size:12.5px;color:#222;font-weight:normal;text-align:center">10</div>
<div style="left:2467px;top:738px;width:26px;height:16px;background:#3c3c3c;border:1px solid #1a1a1a;box-sizing:border-box"></div>
<div class="c" style="left:2467px;top:738px;width:26px;height:16px;line-height:16px;font-size:12.5px;color:#f0f0f0;font-weight:bold;text-align:center">S</div>
<div style="left:2498px;top:738px;width:25px;height:16px;background:#3c3c3c;border:1px solid #1a1a1a;box-sizing:border-box"></div>
<svg style="left:2504px;top:740px" width="13" height="13"><circle cx="6.5" cy="6.5" r="5" fill="#dcdcdc"/></svg>
<div style="left:2407px;top:759px;width:55px;height:16px;background:#2a2a2a;border:1px solid #1a1a1a;box-sizing:border-box"></div>
<div style="left:2408px;top:760px;width:20px;height:14px;background:#007581"></div>
<div class="c" style="left:2407px;top:759px;width:55px;height:16px;line-height:16px;font-size:12.5px;color:#f0f0f0;font-weight:bold;text-align:center">-18.6</div>
<div style="left:2467px;top:759px;width:56px;height:16px;background:#2a2a2a;border:1px solid #1a1a1a;box-sizing:border-box"></div>
<div class="c" style="left:2467px;top:759px;width:56px;height:16px;line-height:16px;font-size:12.5px;color:#f0f0f0;font-weight:bold;text-align:center">C</div>
<div style="left:2407px;top:780px;width:36px;height:15px;background:#303030;border:1px solid #1a1a1a;box-sizing:border-box"></div>
<div class="c" style="left:2407px;top:780px;width:36px;height:15px;line-height:15px;font-size:12.5px;color:#f0f0f0;font-weight:bold;text-align:center">−∞</div>
<div style="left:2447px;top:780px;width:36px;height:15px;background:#303030;border:1px solid #1a1a1a;box-sizing:border-box"></div>
<div class="c" style="left:2447px;top:780px;width:36px;height:15px;line-height:15px;font-size:12.5px;color:#f0f0f0;font-weight:bold;text-align:center">−∞</div>
<div style="left:2528px;top:738px;width:4px;height:59px;background:#2a2a2a"></div>
<div style="left:2533px;top:738px;width:4px;height:59px;background:#2a2a2a"></div>
<div style="left:2528px;top:744px;width:9px;height:1px;background:#4a4a4a"></div>
<div style="left:2195px;top:801px;width:114px;height:64px;background:#26ffa9"></div>
<svg style="left:2199px;top:804px" width="16" height="16"><circle cx="8" cy="8" r="7.2" fill="none" stroke="#15402a" stroke-width="1.2"/><path d="M4.3 5.8 H11.7 L8 11z" fill="#15402a"/></svg>
<div class="t" style="left:2222px;top:805px;font-size:12.5px;color:#15402a;font-weight:bold;">keys</div>
<div style="left:2314px;top:804px;width:20px;height:16px;background:#3c3c3c;border:1px solid #1a1a1a;box-sizing:border-box"></div>
<div class="c" style="left:2314px;top:804px;width:20px;height:16px;line-height:16px;font-size:12.5px;color:#f0f0f0;font-weight:bold;text-align:center">In</div>
<div style="left:2338px;top:804px;width:33px;height:16px;background:#3c3c3c;border:1px solid #1a1a1a;box-sizing:border-box"></div>
<div class="c" style="left:2338px;top:804px;width:33px;height:16px;line-height:16px;font-size:12.5px;color:#f0f0f0;font-weight:bold;text-align:center">Auto</div>
<div style="left:2375px;top:804px;width:24px;height:16px;background:#ff9f2e;border:1px solid #1a1a1a;box-sizing:border-box"></div>
<div class="c" style="left:2375px;top:804px;width:24px;height:16px;line-height:16px;font-size:12.5px;color:#222;font-weight:normal;text-align:center">Off</div>
<div style="left:2314px;top:825px;width:85px;height:16px;background:#2a2a2a;border:1px solid #1a1a1a;box-sizing:border-box"></div>
<div class="t" style="left:2316px;top:826px;font-size:12.5px;color:#f4f4f4;font-weight:bold;">PRE-MIX</div>
<svg style="left:2388px;top:830px" width="9" height="7"><path d="M0 0 L9 0 L4.5 7z" fill="#eee"/></svg>
<div style="left:2314px;top:846px;width:85px;height:15px;background:#4f4f4f;border:1px solid #1a1a1a;box-sizing:border-box"></div>
<div style="left:2407px;top:804px;width:55px;height:16px;background:#ffa33b;border:1px solid #1a1a1a;box-sizing:border-box"></div>
<div class="c" style="left:2407px;top:804px;width:55px;height:16px;line-height:16px;font-size:12.5px;color:#222;font-weight:normal;text-align:center">11</div>
<div style="left:2467px;top:804px;width:26px;height:16px;background:#3c3c3c;border:1px solid #1a1a1a;box-sizing:border-box"></div>
<div class="c" style="left:2467px;top:804px;width:26px;height:16px;line-height:16px;font-size:12.5px;color:#f0f0f0;font-weight:bold;text-align:center">S</div>
<div style="left:2498px;top:804px;width:25px;height:16px;background:#3c3c3c;border:1px solid #1a1a1a;box-sizing:border-box"></div>
<svg style="left:2504px;top:806px" width="13" height="13"><circle cx="6.5" cy="6.5" r="5" fill="#dcdcdc"/></svg>
<div style="left:2407px;top:825px;width:55px;height:16px;background:#2a2a2a;border:1px solid #1a1a1a;box-sizing:border-box"></div>
<div style="left:2408px;top:826px;width:21px;height:14px;background:#007581"></div>
<div class="c" style="left:2407px;top:825px;width:55px;height:16px;line-height:16px;font-size:12.5px;color:#f0f0f0;font-weight:bold;text-align:center">-18.0</div>
<div style="left:2467px;top:825px;width:56px;height:16px;background:#2a2a2a;border:1px solid #1a1a1a;box-sizing:border-box"></div>
<div style="left:2489px;top:826px;width:6px;height:14px;background:#007581"></div>
<div class="c" style="left:2467px;top:825px;width:56px;height:16px;line-height:16px;font-size:12.5px;color:#f0f0f0;font-weight:bold;text-align:center">11L</div>
<div style="left:2407px;top:846px;width:36px;height:15px;background:#303030;border:1px solid #1a1a1a;box-sizing:border-box"></div>
<div class="c" style="left:2407px;top:846px;width:36px;height:15px;line-height:15px;font-size:12.5px;color:#f0f0f0;font-weight:bold;text-align:center">−∞</div>
<div style="left:2447px;top:846px;width:36px;height:15px;background:#303030;border:1px solid #1a1a1a;box-sizing:border-box"></div>
<div style="left:2448px;top:847px;width:21px;height:13px;background:#007581"></div>
<div class="c" style="left:2447px;top:846px;width:36px;height:15px;line-height:15px;font-size:12.5px;color:#f0f0f0;font-weight:bold;text-align:center">-15.2</div>
<div style="left:2528px;top:804px;width:4px;height:59px;background:#2a2a2a"></div>
<div style="left:2533px;top:804px;width:4px;height:59px;background:#2a2a2a"></div>
<div style="left:2528px;top:810px;width:9px;height:1px;background:#4a4a4a"></div>
<div style="left:2195px;top:867px;width:114px;height:64px;background:#c0fa00"></div>
<svg style="left:2199px;top:870px" width="16" height="16"><circle cx="8" cy="8" r="7.2" fill="none" stroke="#2a3a00" stroke-width="1.2"/><path d="M4.3 5.8 H11.7 L8 11z" fill="#2a3a00"/></svg>
<div class="t" style="left:2222px;top:871px;font-size:12.5px;color:#2a3a00;font-weight:bold;">strings</div>
<div style="left:2314px;top:870px;width:20px;height:16px;background:#3c3c3c;border:1px solid #1a1a1a;box-sizing:border-box"></div>
<div class="c" style="left:2314px;top:870px;width:20px;height:16px;line-height:16px;font-size:12.5px;color:#f0f0f0;font-weight:bold;text-align:center">In</div>
<div style="left:2338px;top:870px;width:33px;height:16px;background:#3c3c3c;border:1px solid #1a1a1a;box-sizing:border-box"></div>
<div class="c" style="left:2338px;top:870px;width:33px;height:16px;line-height:16px;font-size:12.5px;color:#f0f0f0;font-weight:bold;text-align:center">Auto</div>
<div style="left:2375px;top:870px;width:24px;height:16px;background:#ff9f2e;border:1px solid #1a1a1a;box-sizing:border-box"></div>
<div class="c" style="left:2375px;top:870px;width:24px;height:16px;line-height:16px;font-size:12.5px;color:#222;font-weight:normal;text-align:center">Off</div>
<div style="left:2314px;top:891px;width:85px;height:16px;background:#2a2a2a;border:1px solid #1a1a1a;box-sizing:border-box"></div>
<div class="t" style="left:2316px;top:892px;font-size:12.5px;color:#f4f4f4;font-weight:bold;">PRE-MIX</div>
<svg style="left:2388px;top:896px" width="9" height="7"><path d="M0 0 L9 0 L4.5 7z" fill="#eee"/></svg>
<div style="left:2314px;top:912px;width:85px;height:15px;background:#4f4f4f;border:1px solid #1a1a1a;box-sizing:border-box"></div>
<div style="left:2407px;top:870px;width:55px;height:16px;background:#ffa33b;border:1px solid #1a1a1a;box-sizing:border-box"></div>
<div class="c" style="left:2407px;top:870px;width:55px;height:16px;line-height:16px;font-size:12.5px;color:#222;font-weight:normal;text-align:center">12</div>
<div style="left:2467px;top:870px;width:26px;height:16px;background:#3c3c3c;border:1px solid #1a1a1a;box-sizing:border-box"></div>
<div class="c" style="left:2467px;top:870px;width:26px;height:16px;line-height:16px;font-size:12.5px;color:#f0f0f0;font-weight:bold;text-align:center">S</div>
<div style="left:2498px;top:870px;width:25px;height:16px;background:#3c3c3c;border:1px solid #1a1a1a;box-sizing:border-box"></div>
<svg style="left:2504px;top:872px" width="13" height="13"><circle cx="6.5" cy="6.5" r="5" fill="#dcdcdc"/></svg>
<div style="left:2407px;top:891px;width:55px;height:16px;background:#2a2a2a;border:1px solid #1a1a1a;box-sizing:border-box"></div>
<div style="left:2408px;top:892px;width:19px;height:14px;background:#007581"></div>
<div class="c" style="left:2407px;top:891px;width:55px;height:16px;line-height:16px;font-size:12.5px;color:#f0f0f0;font-weight:bold;text-align:center">-20.0</div>
<div style="left:2467px;top:891px;width:56px;height:16px;background:#2a2a2a;border:1px solid #1a1a1a;box-sizing:border-box"></div>
<div style="left:2495px;top:892px;width:14px;height:14px;background:#007581"></div>
<div class="c" style="left:2467px;top:891px;width:56px;height:16px;line-height:16px;font-size:12.5px;color:#f0f0f0;font-weight:bold;text-align:center">25R</div>
<div style="left:2407px;top:912px;width:36px;height:15px;background:#303030;border:1px solid #1a1a1a;box-sizing:border-box"></div>
<div style="left:2408px;top:913px;width:21px;height:13px;background:#007581"></div>
<div class="c" style="left:2407px;top:912px;width:36px;height:15px;line-height:15px;font-size:12.5px;color:#f0f0f0;font-weight:bold;text-align:center">-14.0</div>
<div style="left:2447px;top:912px;width:36px;height:15px;background:#303030;border:1px solid #1a1a1a;box-sizing:border-box"></div>
<div style="left:2448px;top:913px;width:4px;height:13px;background:#007581"></div>
<div class="c" style="left:2447px;top:912px;width:36px;height:15px;line-height:15px;font-size:12.5px;color:#f0f0f0;font-weight:bold;text-align:center">-48.0</div>
<div style="left:2528px;top:870px;width:4px;height:59px;background:#2a2a2a"></div>
<div style="left:2533px;top:870px;width:4px;height:59px;background:#2a2a2a"></div>
<div style="left:2528px;top:876px;width:9px;height:1px;background:#4a4a4a"></div>
<div style="left:2311px;top:933px;width:237px;height:64px;background:#5a5a5a"></div>
<div style="left:2401px;top:933px;width:3px;height:64px;background:#404040"></div>
<div style="left:2195px;top:933px;width:114px;height:64px;background:#f6f17e"></div>
<svg style="left:2199px;top:936px" width="16" height="16"><circle cx="8" cy="8" r="7.2" fill="none" stroke="#3a3a1a" stroke-width="1.2"/><path d="M4.3 5.8 H11.7 L8 11z" fill="#3a3a1a"/></svg>
<div class="t" style="left:2222px;top:937px;font-size:12.5px;color:#3a3a1a;font-weight:bold;">arpeggio</div>
<div style="left:2314px;top:936px;width:20px;height:16px;background:#3c3c3c;border:1px solid #1a1a1a;box-sizing:border-box"></div>
<div class="c" style="left:2314px;top:936px;width:20px;height:16px;line-height:16px;font-size:12.5px;color:#f0f0f0;font-weight:bold;text-align:center">In</div>
<div style="left:2338px;top:936px;width:33px;height:16px;background:#3c3c3c;border:1px solid #1a1a1a;box-sizing:border-box"></div>
<div class="c" style="left:2338px;top:936px;width:33px;height:16px;line-height:16px;font-size:12.5px;color:#f0f0f0;font-weight:bold;text-align:center">Auto</div>
<div style="left:2375px;top:936px;width:24px;height:16px;background:#ff9f2e;border:1px solid #1a1a1a;box-sizing:border-box"></div>
<div class="c" style="left:2375px;top:936px;width:24px;height:16px;line-height:16px;font-size:12.5px;color:#222;font-weight:normal;text-align:center">Off</div>
<div style="left:2314px;top:957px;width:85px;height:16px;background:#2a2a2a;border:1px solid #1a1a1a;box-sizing:border-box"></div>
<div class="t" style="left:2316px;top:958px;font-size:12.5px;color:#f4f4f4;font-weight:bold;">PRE-MIX</div>
<svg style="left:2388px;top:962px" width="9" height="7"><path d="M0 0 L9 0 L4.5 7z" fill="#eee"/></svg>
<div style="left:2314px;top:978px;width:85px;height:15px;background:#4f4f4f;border:1px solid #1a1a1a;box-sizing:border-box"></div>
<div style="left:2407px;top:936px;width:55px;height:16px;background:#ffa33b;border:1px solid #1a1a1a;box-sizing:border-box"></div>
<div class="c" style="left:2407px;top:936px;width:55px;height:16px;line-height:16px;font-size:12.5px;color:#222;font-weight:normal;text-align:center">13</div>
<div style="left:2467px;top:936px;width:26px;height:16px;background:#3c3c3c;border:1px solid #1a1a1a;box-sizing:border-box"></div>
<div class="c" style="left:2467px;top:936px;width:26px;height:16px;line-height:16px;font-size:12.5px;color:#f0f0f0;font-weight:bold;text-align:center">S</div>
<div style="left:2498px;top:936px;width:25px;height:16px;background:#3c3c3c;border:1px solid #1a1a1a;box-sizing:border-box"></div>
<svg style="left:2504px;top:938px" width="13" height="13"><circle cx="6.5" cy="6.5" r="5" fill="#dcdcdc"/></svg>
<div style="left:2407px;top:957px;width:55px;height:16px;background:#2a2a2a;border:1px solid #1a1a1a;box-sizing:border-box"></div>
<div style="left:2408px;top:958px;width:36px;height:14px;background:#007581"></div>
<div class="c" style="left:2407px;top:957px;width:55px;height:16px;line-height:16px;font-size:12.5px;color:#f0f0f0;font-weight:bold;text-align:center">-7.0</div>
<div style="left:2467px;top:957px;width:56px;height:16px;background:#2a2a2a;border:1px solid #1a1a1a;box-sizing:border-box"></div>
<div class="c" style="left:2467px;top:957px;width:56px;height:16px;line-height:16px;font-size:12.5px;color:#f0f0f0;font-weight:bold;text-align:center">C</div>
<div style="left:2407px;top:978px;width:36px;height:15px;background:#303030;border:1px solid #1a1a1a;box-sizing:border-box"></div>
<div class="c" style="left:2407px;top:978px;width:36px;height:15px;line-height:15px;font-size:12.5px;color:#f0f0f0;font-weight:bold;text-align:center">−∞</div>
<div style="left:2447px;top:978px;width:36px;height:15px;background:#303030;border:1px solid #1a1a1a;box-sizing:border-box"></div>
<div class="c" style="left:2447px;top:978px;width:36px;height:15px;line-height:15px;font-size:12.5px;color:#f0f0f0;font-weight:bold;text-align:center">−∞</div>
<div style="left:2528px;top:936px;width:4px;height:59px;background:#2a2a2a"></div>
<div style="left:2533px;top:936px;width:4px;height:59px;background:#2a2a2a"></div>
<div style="left:2528px;top:942px;width:9px;height:1px;background:#4a4a4a"></div>
<div style="left:2195px;top:999px;width:114px;height:64px;background:#8cc6ff"></div>
<svg style="left:2199px;top:1002px" width="16" height="16"><circle cx="8" cy="8" r="7.2" fill="none" stroke="#1a2a40" stroke-width="1.2"/><path d="M4.3 5.8 H11.7 L8 11z" fill="#1a2a40"/></svg>
<div class="t" style="left:2222px;top:1003px;font-size:12.5px;color:#1a2a40;font-weight:bold;">trumpet</div>
<div style="left:2314px;top:1002px;width:20px;height:16px;background:#3c3c3c;border:1px solid #1a1a1a;box-sizing:border-box"></div>
<div class="c" style="left:2314px;top:1002px;width:20px;height:16px;line-height:16px;font-size:12.5px;color:#f0f0f0;font-weight:bold;text-align:center">In</div>
<div style="left:2338px;top:1002px;width:33px;height:16px;background:#3c3c3c;border:1px solid #1a1a1a;box-sizing:border-box"></div>
<div class="c" style="left:2338px;top:1002px;width:33px;height:16px;line-height:16px;font-size:12.5px;color:#f0f0f0;font-weight:bold;text-align:center">Auto</div>
<div style="left:2375px;top:1002px;width:24px;height:16px;background:#ff9f2e;border:1px solid #1a1a1a;box-sizing:border-box"></div>
<div class="c" style="left:2375px;top:1002px;width:24px;height:16px;line-height:16px;font-size:12.5px;color:#222;font-weight:normal;text-align:center">Off</div>
<div style="left:2314px;top:1023px;width:85px;height:16px;background:#2a2a2a;border:1px solid #1a1a1a;box-sizing:border-box"></div>
<div class="t" style="left:2316px;top:1024px;font-size:12.5px;color:#f4f4f4;font-weight:bold;">PRE-MIX</div>
<svg style="left:2388px;top:1028px" width="9" height="7"><path d="M0 0 L9 0 L4.5 7z" fill="#eee"/></svg>
<div style="left:2314px;top:1044px;width:85px;height:15px;background:#4f4f4f;border:1px solid #1a1a1a;box-sizing:border-box"></div>
<div style="left:2407px;top:1002px;width:55px;height:16px;background:#ffa33b;border:1px solid #1a1a1a;box-sizing:border-box"></div>
<div class="c" style="left:2407px;top:1002px;width:55px;height:16px;line-height:16px;font-size:12.5px;color:#222;font-weight:normal;text-align:center">14</div>
<div style="left:2467px;top:1002px;width:26px;height:16px;background:#3c3c3c;border:1px solid #1a1a1a;box-sizing:border-box"></div>
<div class="c" style="left:2467px;top:1002px;width:26px;height:16px;line-height:16px;font-size:12.5px;color:#f0f0f0;font-weight:bold;text-align:center">S</div>
<div style="left:2498px;top:1002px;width:25px;height:16px;background:#3c3c3c;border:1px solid #1a1a1a;box-sizing:border-box"></div>
<svg style="left:2504px;top:1004px" width="13" height="13"><circle cx="6.5" cy="6.5" r="5" fill="#dcdcdc"/></svg>
<div style="left:2407px;top:1023px;width:55px;height:16px;background:#2a2a2a;border:1px solid #1a1a1a;box-sizing:border-box"></div>
<div style="left:2408px;top:1024px;width:26px;height:14px;background:#007581"></div>
<div class="c" style="left:2407px;top:1023px;width:55px;height:16px;line-height:16px;font-size:12.5px;color:#f0f0f0;font-weight:bold;text-align:center">-14.0</div>
<div style="left:2467px;top:1023px;width:56px;height:16px;background:#2a2a2a;border:1px solid #1a1a1a;box-sizing:border-box"></div>
<div style="left:2490px;top:1024px;width:5px;height:14px;background:#007581"></div>
<div class="c" style="left:2467px;top:1023px;width:56px;height:16px;line-height:16px;font-size:12.5px;color:#f0f0f0;font-weight:bold;text-align:center">10L</div>
<div style="left:2407px;top:1044px;width:36px;height:15px;background:#303030;border:1px solid #1a1a1a;box-sizing:border-box"></div>
<div style="left:2408px;top:1045px;width:4px;height:13px;background:#007581"></div>
<div class="c" style="left:2407px;top:1044px;width:36px;height:15px;line-height:15px;font-size:12.5px;color:#f0f0f0;font-weight:bold;text-align:center">-47.0</div>
<div style="left:2447px;top:1044px;width:36px;height:15px;background:#303030;border:1px solid #1a1a1a;box-sizing:border-box"></div>
<div style="left:2448px;top:1045px;width:21px;height:13px;background:#007581"></div>
<div class="c" style="left:2447px;top:1044px;width:36px;height:15px;line-height:15px;font-size:12.5px;color:#f0f0f0;font-weight:bold;text-align:center">-15.2</div>
<div style="left:2528px;top:1002px;width:4px;height:59px;background:#2a2a2a"></div>
<div style="left:2533px;top:1002px;width:4px;height:59px;background:#2a2a2a"></div>
<div style="left:2528px;top:1008px;width:9px;height:1px;background:#4a4a4a"></div>
<div style="left:2195px;top:1065px;width:114px;height:64px;background:#93a8ff"></div>
<svg style="left:2199px;top:1068px" width="16" height="16"><circle cx="8" cy="8" r="7.2" fill="none" stroke="#1a2040" stroke-width="1.2"/><path d="M4.3 5.8 H11.7 L8 11z" fill="#1a2040"/></svg>
<div class="t" style="left:2222px;top:1069px;font-size:12.5px;color:#1a2040;font-weight:bold;">chimes</div>
<div style="left:2314px;top:1068px;width:20px;height:16px;background:#3c3c3c;border:1px solid #1a1a1a;box-sizing:border-box"></div>
<div class="c" style="left:2314px;top:1068px;width:20px;height:16px;line-height:16px;font-size:12.5px;color:#f0f0f0;font-weight:bold;text-align:center">In</div>
<div style="left:2338px;top:1068px;width:33px;height:16px;background:#3c3c3c;border:1px solid #1a1a1a;box-sizing:border-box"></div>
<div class="c" style="left:2338px;top:1068px;width:33px;height:16px;line-height:16px;font-size:12.5px;color:#f0f0f0;font-weight:bold;text-align:center">Auto</div>
<div style="left:2375px;top:1068px;width:24px;height:16px;background:#ff9f2e;border:1px solid #1a1a1a;box-sizing:border-box"></div>
<div class="c" style="left:2375px;top:1068px;width:24px;height:16px;line-height:16px;font-size:12.5px;color:#222;font-weight:normal;text-align:center">Off</div>
<div style="left:2314px;top:1089px;width:85px;height:16px;background:#2a2a2a;border:1px solid #1a1a1a;box-sizing:border-box"></div>
<div class="t" style="left:2316px;top:1090px;font-size:12.5px;color:#f4f4f4;font-weight:bold;">PRE-MIX</div>
<svg style="left:2388px;top:1094px" width="9" height="7"><path d="M0 0 L9 0 L4.5 7z" fill="#eee"/></svg>
<div style="left:2314px;top:1110px;width:85px;height:15px;background:#4f4f4f;border:1px solid #1a1a1a;box-sizing:border-box"></div>
<div style="left:2407px;top:1068px;width:55px;height:16px;background:#ffa33b;border:1px solid #1a1a1a;box-sizing:border-box"></div>
<div class="c" style="left:2407px;top:1068px;width:55px;height:16px;line-height:16px;font-size:12.5px;color:#222;font-weight:normal;text-align:center">15</div>
<div style="left:2467px;top:1068px;width:26px;height:16px;background:#3c3c3c;border:1px solid #1a1a1a;box-sizing:border-box"></div>
<div class="c" style="left:2467px;top:1068px;width:26px;height:16px;line-height:16px;font-size:12.5px;color:#f0f0f0;font-weight:bold;text-align:center">S</div>
<div style="left:2498px;top:1068px;width:25px;height:16px;background:#ff4a55;border:1px solid #1a1a1a;box-sizing:border-box"></div>
<svg style="left:2504px;top:1070px" width="13" height="13"><circle cx="6.5" cy="6.5" r="5" fill="#111"/></svg>
<div style="left:2407px;top:1089px;width:55px;height:16px;background:#2a2a2a;border:1px solid #1a1a1a;box-sizing:border-box"></div>
<div style="left:2408px;top:1090px;width:13px;height:14px;background:#007581"></div>
<div class="c" style="left:2407px;top:1089px;width:55px;height:16px;line-height:16px;font-size:12.5px;color:#f0f0f0;font-weight:bold;text-align:center">-25.0</div>
<div style="left:2467px;top:1089px;width:56px;height:16px;background:#2a2a2a;border:1px solid #1a1a1a;box-sizing:border-box"></div>
<div class="c" style="left:2467px;top:1089px;width:56px;height:16px;line-height:16px;font-size:12.5px;color:#f0f0f0;font-weight:bold;text-align:center">C</div>
<div style="left:2407px;top:1110px;width:36px;height:15px;background:#303030;border:1px solid #1a1a1a;box-sizing:border-box"></div>
<div class="c" style="left:2407px;top:1110px;width:36px;height:15px;line-height:15px;font-size:12.5px;color:#f0f0f0;font-weight:bold;text-align:center">−∞</div>
<div style="left:2447px;top:1110px;width:36px;height:15px;background:#303030;border:1px solid #1a1a1a;box-sizing:border-box"></div>
<div style="left:2448px;top:1111px;width:28px;height:13px;background:#007581"></div>
<div class="c" style="left:2447px;top:1110px;width:36px;height:15px;line-height:15px;font-size:12.5px;color:#f0f0f0;font-weight:bold;text-align:center">-4.8</div>
<div style="left:2528px;top:1068px;width:4px;height:59px;background:#2a2a2a"></div>
<div style="left:2533px;top:1068px;width:4px;height:59px;background:#2a2a2a"></div>
<div style="left:2528px;top:1074px;width:9px;height:1px;background:#4a4a4a"></div>
<div style="left:2195px;top:1131px;width:114px;height:64px;background:#ffa52b"></div>
<svg style="left:2199px;top:1134px" width="16" height="16"><circle cx="8" cy="8" r="7.2" fill="none" stroke="#3a2508" stroke-width="1.2"/><path d="M4.3 5.8 H11.7 L8 11z" fill="#3a2508"/></svg>
<div class="t" style="left:2222px;top:1135px;font-size:12.5px;color:#3a2508;font-weight:bold;">guitar</div>
<div style="left:2314px;top:1134px;width:20px;height:16px;background:#3c3c3c;border:1px solid #1a1a1a;box-sizing:border-box"></div>
<div class="c" style="left:2314px;top:1134px;width:20px;height:16px;line-height:16px;font-size:12.5px;color:#f0f0f0;font-weight:bold;text-align:center">In</div>
<div style="left:2338px;top:1134px;width:33px;height:16px;background:#3c3c3c;border:1px solid #1a1a1a;box-sizing:border-box"></div>
<div class="c" style="left:2338px;top:1134px;width:33px;height:16px;line-height:16px;font-size:12.5px;color:#f0f0f0;font-weight:bold;text-align:center">Auto</div>
<div style="left:2375px;top:1134px;width:24px;height:16px;background:#ff9f2e;border:1px solid #1a1a1a;box-sizing:border-box"></div>
<div class="c" style="left:2375px;top:1134px;width:24px;height:16px;line-height:16px;font-size:12.5px;color:#222;font-weight:normal;text-align:center">Off</div>
<div style="left:2314px;top:1155px;width:85px;height:16px;background:#2a2a2a;border:1px solid #1a1a1a;box-sizing:border-box"></div>
<div class="t" style="left:2316px;top:1156px;font-size:12.5px;color:#f4f4f4;font-weight:bold;">PRE-MIX</div>
<svg style="left:2388px;top:1160px" width="9" height="7"><path d="M0 0 L9 0 L4.5 7z" fill="#eee"/></svg>
<div style="left:2314px;top:1176px;width:85px;height:15px;background:#4f4f4f;border:1px solid #1a1a1a;box-sizing:border-box"></div>
<div style="left:2407px;top:1134px;width:55px;height:16px;background:#ffa33b;border:1px solid #1a1a1a;box-sizing:border-box"></div>
<div class="c" style="left:2407px;top:1134px;width:55px;height:16px;line-height:16px;font-size:12.5px;color:#222;font-weight:normal;text-align:center">16</div>
<div style="left:2467px;top:1134px;width:26px;height:16px;background:#3c3c3c;border:1px solid #1a1a1a;box-sizing:border-box"></div>
<div class="c" style="left:2467px;top:1134px;width:26px;height:16px;line-height:16px;font-size:12.5px;color:#f0f0f0;font-weight:bold;text-align:center">S</div>
<div style="left:2498px;top:1134px;width:25px;height:16px;background:#3c3c3c;border:1px solid #1a1a1a;box-sizing:border-box"></div>
<svg style="left:2504px;top:1136px" width="13" height="13"><circle cx="6.5" cy="6.5" r="5" fill="#dcdcdc"/></svg>
<div style="left:2407px;top:1155px;width:55px;height:16px;background:#2a2a2a;border:1px solid #1a1a1a;box-sizing:border-box"></div>
<div style="left:2408px;top:1156px;width:27px;height:14px;background:#007581"></div>
<div class="c" style="left:2407px;top:1155px;width:55px;height:16px;line-height:16px;font-size:12.5px;color:#f0f0f0;font-weight:bold;text-align:center">-13.0</div>
<div style="left:2467px;top:1155px;width:56px;height:16px;background:#2a2a2a;border:1px solid #1a1a1a;box-sizing:border-box"></div>
<div style="left:2489px;top:1156px;width:6px;height:14px;background:#007581"></div>
<div class="c" style="left:2467px;top:1155px;width:56px;height:16px;line-height:16px;font-size:12.5px;color:#f0f0f0;font-weight:bold;text-align:center">12L</div>
<div style="left:2407px;top:1176px;width:36px;height:15px;background:#303030;border:1px solid #1a1a1a;box-sizing:border-box"></div>
<div style="left:2408px;top:1177px;width:18px;height:13px;background:#007581"></div>
<div class="c" style="left:2407px;top:1176px;width:36px;height:15px;line-height:15px;font-size:12.5px;color:#f0f0f0;font-weight:bold;text-align:center">-19.0</div>
<div style="left:2447px;top:1176px;width:36px;height:15px;background:#303030;border:1px solid #1a1a1a;box-sizing:border-box"></div>
<div style="left:2448px;top:1177px;width:22px;height:13px;background:#007581"></div>
<div class="c" style="left:2447px;top:1176px;width:36px;height:15px;line-height:15px;font-size:12.5px;color:#f0f0f0;font-weight:bold;text-align:center">-10.8</div>
<div style="left:2528px;top:1134px;width:4px;height:59px;background:#2a2a2a"></div>
<div style="left:2533px;top:1134px;width:4px;height:59px;background:#2a2a2a"></div>
<div style="left:2528px;top:1140px;width:9px;height:1px;background:#4a4a4a"></div>
<div style="left:2189px;top:270px;width:359px;height:3px;background:#2a2a2a"></div>
<div style="left:2189px;top:336px;width:359px;height:3px;background:#2a2a2a"></div>
<div style="left:2189px;top:402px;width:359px;height:3px;background:#2a2a2a"></div>
<div style="left:2189px;top:468px;width:359px;height:3px;background:#2a2a2a"></div>
<div style="left:2189px;top:534px;width:359px;height:3px;background:#2a2a2a"></div>
<div style="left:2195px;top:600px;width:353px;height:3px;background:#2a2a2a"></div>
<div style="left:2195px;top:666px;width:353px;height:3px;background:#2a2a2a"></div>
<div style="left:2195px;top:732px;width:353px;height:3px;background:#2a2a2a"></div>
<div style="left:2195px;top:798px;width:353px;height:3px;background:#2a2a2a"></div>
<div style="left:2195px;top:864px;width:353px;height:3px;background:#2a2a2a"></div>
<div style="left:2195px;top:930px;width:353px;height:3px;background:#2a2a2a"></div>
<div style="left:2195px;top:996px;width:353px;height:3px;background:#2a2a2a"></div>
<div style="left:2195px;top:1062px;width:353px;height:3px;background:#2a2a2a"></div>
<div style="left:2195px;top:1128px;width:353px;height:3px;background:#2a2a2a"></div>
<div style="left:2195px;top:1194px;width:353px;height:3px;background:#2a2a2a"></div>
<div style="left:2189px;top:1195px;width:359px;height:53px;background:#4b4b4b"></div>
<div style="left:2189px;top:1248px;width:359px;height:4px;background:#2a2a2a"></div>
<div style="left:2309px;top:1252px;width:239px;height:21px;background:#4b4b4b"></div>
<div style="left:2189px;top:1252px;width:120px;height:21px;background:#b677c6"></div>
<svg style="left:2193px;top:1254px" width="16" height="16"><circle cx="8" cy="8" r="7.2" fill="none" stroke="#3a1a40" stroke-width="1.2"/><path d="M6 4.5 L11.5 8 L6 11.5z" fill="#3a1a40"/></svg>
<div class="t" style="left:2217px;top:1256px;font-size:12.5px;color:#3a1a40;font-weight:bold;">A Altiverb 7</div>
<div style="left:2314px;top:1255px;width:85px;height:15px;background:#4f4f4f;border:1px solid #1a1a1a;box-sizing:border-box"></div>
<div style="left:2407px;top:1255px;width:55px;height:15px;background:#ffa33b;border:1px solid #1a1a1a;box-sizing:border-box"></div>
<div class="c" style="left:2407px;top:1255px;width:55px;height:15px;line-height:15px;font-size:12.5px;color:#222;font-weight:normal;text-align:center">A</div>
<div style="left:2467px;top:1255px;width:21px;height:15px;background:#3c3c3c;border:1px solid #1a1a1a;box-sizing:border-box"></div>
<div class="c" style="left:2467px;top:1255px;width:21px;height:15px;line-height:15px;font-size:12.5px;color:#f0f0f0;font-weight:bold;text-align:center">S</div>
<div style="left:2493px;top:1255px;width:30px;height:15px;background:#ffa33b;border:1px solid #1a1a1a;box-sizing:border-box"></div>
<div class="c" style="left:2493px;top:1255px;width:30px;height:15px;line-height:15px;font-size:12.5px;color:#222;font-weight:normal;text-align:center">Post</div>
<div style="left:2528px;top:1255px;width:4px;height:15px;background:#2a2a2a"></div>
<div style="left:2533px;top:1255px;width:4px;height:15px;background:#2a2a2a"></div>
<div style="left:2528px;top:1261px;width:9px;height:1px;background:#4a4a4a"></div>
<div style="left:2189px;top:1273px;width:359px;height:2px;background:#2a2a2a"></div>
<div style="left:2309px;top:1275px;width:239px;height:21px;background:#4b4b4b"></div>
<div style="left:2189px;top:1275px;width:120px;height:21px;background:#886ce4"></div>
<svg style="left:2193px;top:1277px" width="16" height="16"><circle cx="8" cy="8" r="7.2" fill="none" stroke="#1e1440" stroke-width="1.2"/><path d="M6 4.5 L11.5 8 L6 11.5z" fill="#1e1440"/></svg>
<div class="t" style="left:2217px;top:1279px;font-size:12.5px;color:#1e1440;font-weight:bold;">B Reverb</div>
<div style="left:2314px;top:1278px;width:85px;height:15px;background:#4f4f4f;border:1px solid #1a1a1a;box-sizing:border-box"></div>
<div style="left:2407px;top:1278px;width:55px;height:15px;background:#ffa33b;border:1px solid #1a1a1a;box-sizing:border-box"></div>
<div class="c" style="left:2407px;top:1278px;width:55px;height:15px;line-height:15px;font-size:12.5px;color:#222;font-weight:normal;text-align:center">B</div>
<div style="left:2467px;top:1278px;width:21px;height:15px;background:#3c3c3c;border:1px solid #1a1a1a;box-sizing:border-box"></div>
<div class="c" style="left:2467px;top:1278px;width:21px;height:15px;line-height:15px;font-size:12.5px;color:#f0f0f0;font-weight:bold;text-align:center">S</div>
<div style="left:2493px;top:1278px;width:30px;height:15px;background:#ffa33b;border:1px solid #1a1a1a;box-sizing:border-box"></div>
<div class="c" style="left:2493px;top:1278px;width:30px;height:15px;line-height:15px;font-size:12.5px;color:#222;font-weight:normal;text-align:center">Post</div>
<div style="left:2528px;top:1278px;width:4px;height:15px;background:#2a2a2a"></div>
<div style="left:2533px;top:1278px;width:4px;height:15px;background:#2a2a2a"></div>
<div style="left:2528px;top:1284px;width:9px;height:1px;background:#4a4a4a"></div>
<div style="left:2189px;top:1296px;width:359px;height:2px;background:#2a2a2a"></div>
<div style="left:2309px;top:1298px;width:239px;height:21px;background:#4b4b4b"></div>
<div style="left:2189px;top:1298px;width:120px;height:21px;background:#ff94a6"></div>
<svg style="left:2193px;top:1300px" width="16" height="16"><circle cx="8" cy="8" r="7.2" fill="none" stroke="#401a20" stroke-width="1.2"/><path d="M6 4.5 L11.5 8 L6 11.5z" fill="#401a20"/></svg>
<div class="t" style="left:2220px;top:1302px;font-size:12.5px;color:#401a20;font-weight:bold;">Main</div>
<div style="left:2314px;top:1301px;width:85px;height:15px;background:#2a2a2a;border:1px solid #1a1a1a;box-sizing:border-box"></div>
<div class="t" style="left:2327px;top:1301px;font-size:12.5px;color:#f4f4f4;font-weight:bold;">1/2</div>
<div style="left:2316px;top:1303px;width:3px;height:11px;background:repeating-linear-gradient(90deg,#444 0 1px,transparent 1px 2px)"></div>
<svg style="left:2388px;top:1305px" width="9" height="7"><path d="M0 0 L9 0 L4.5 7z" fill="#eee"/></svg>
<div style="left:2407px;top:1301px;width:55px;height:15px;background:#2a2a2a;border:1px solid #1a1a1a;box-sizing:border-box"></div>
<div style="left:2408px;top:1302px;width:45px;height:13px;background:#007581"></div>
<div class="c" style="left:2407px;top:1301px;width:55px;height:15px;line-height:15px;font-size:12.5px;color:#f0f0f0;font-weight:bold;text-align:center">0</div>
<div style="left:2467px;top:1301px;width:56px;height:15px;background:#2a2a2a;border:1px solid #1a1a1a;box-sizing:border-box"></div>
<div style="left:2468px;top:1302px;width:38px;height:13px;background:#3a6ac8"></div>
<div class="c" style="left:2467px;top:1301px;width:56px;height:15px;line-height:15px;font-size:12.5px;color:#f0f0f0;font-weight:bold;text-align:center">-6.0</div>
<div style="left:2528px;top:1301px;width:4px;height:15px;background:#2a2a2a"></div>
<div style="left:2533px;top:1301px;width:4px;height:15px;background:#2a2a2a"></div>
<div style="left:2528px;top:1307px;width:9px;height:1px;background:#4a4a4a"></div>
<div style="left:2189px;top:1319px;width:359px;height:2px;background:#2a2a2a"></div>
<div style="left:2189px;top:1321px;width:359px;height:25px;background:#4b4b4b;border-radius:0 0 5px 0"></div>
<div style="left:2189px;top:1327px;width:18px;height:15px;background:#ffa12b"></div>
<svg style="left:2191px;top:1329px" width="14" height="11"><path d="M1 5.5 H2 M3.5 3 V8 M6 1 V10 M8.5 2.5 V8.5 M11 4 V7 M12.5 5.5 H13.5" stroke="#222" stroke-width="1.3"/></svg>
<div style="left:2211px;top:1326px;width:43px;height:16px;background:#2a2a2a;border:1px solid #1a1a1a;box-sizing:border-box"></div>
<div style="left:2212px;top:1327px;width:11px;height:14px;background:#007581"></div>
<div class="c" style="left:2211px;top:1326px;width:43px;height:16px;line-height:16px;font-size:12.5px;color:#f0f0f0;font-weight:bold;text-align:center">1.00x</div>
<div style="left:2267px;top:1326px;width:18px;height:16px;background:#3c3c3c;border:1px solid #1a1a1a;box-sizing:border-box"></div>
<div class="c" style="left:2267px;top:1326px;width:18px;height:16px;line-height:16px;font-size:12.5px;color:#f0f0f0;font-weight:bold;text-align:center">H</div>
<div style="left:2289px;top:1326px;width:18px;height:16px;background:#3c3c3c;border:1px solid #1a1a1a;box-sizing:border-box"></div>
<div class="c" style="left:2289px;top:1326px;width:18px;height:16px;line-height:16px;font-size:12.5px;color:#f0f0f0;font-weight:bold;text-align:center">W</div>
<div style="left:53px;top:1358px;width:2506px;height:1px;background:#4a4a4a"></div>
</body></html>
